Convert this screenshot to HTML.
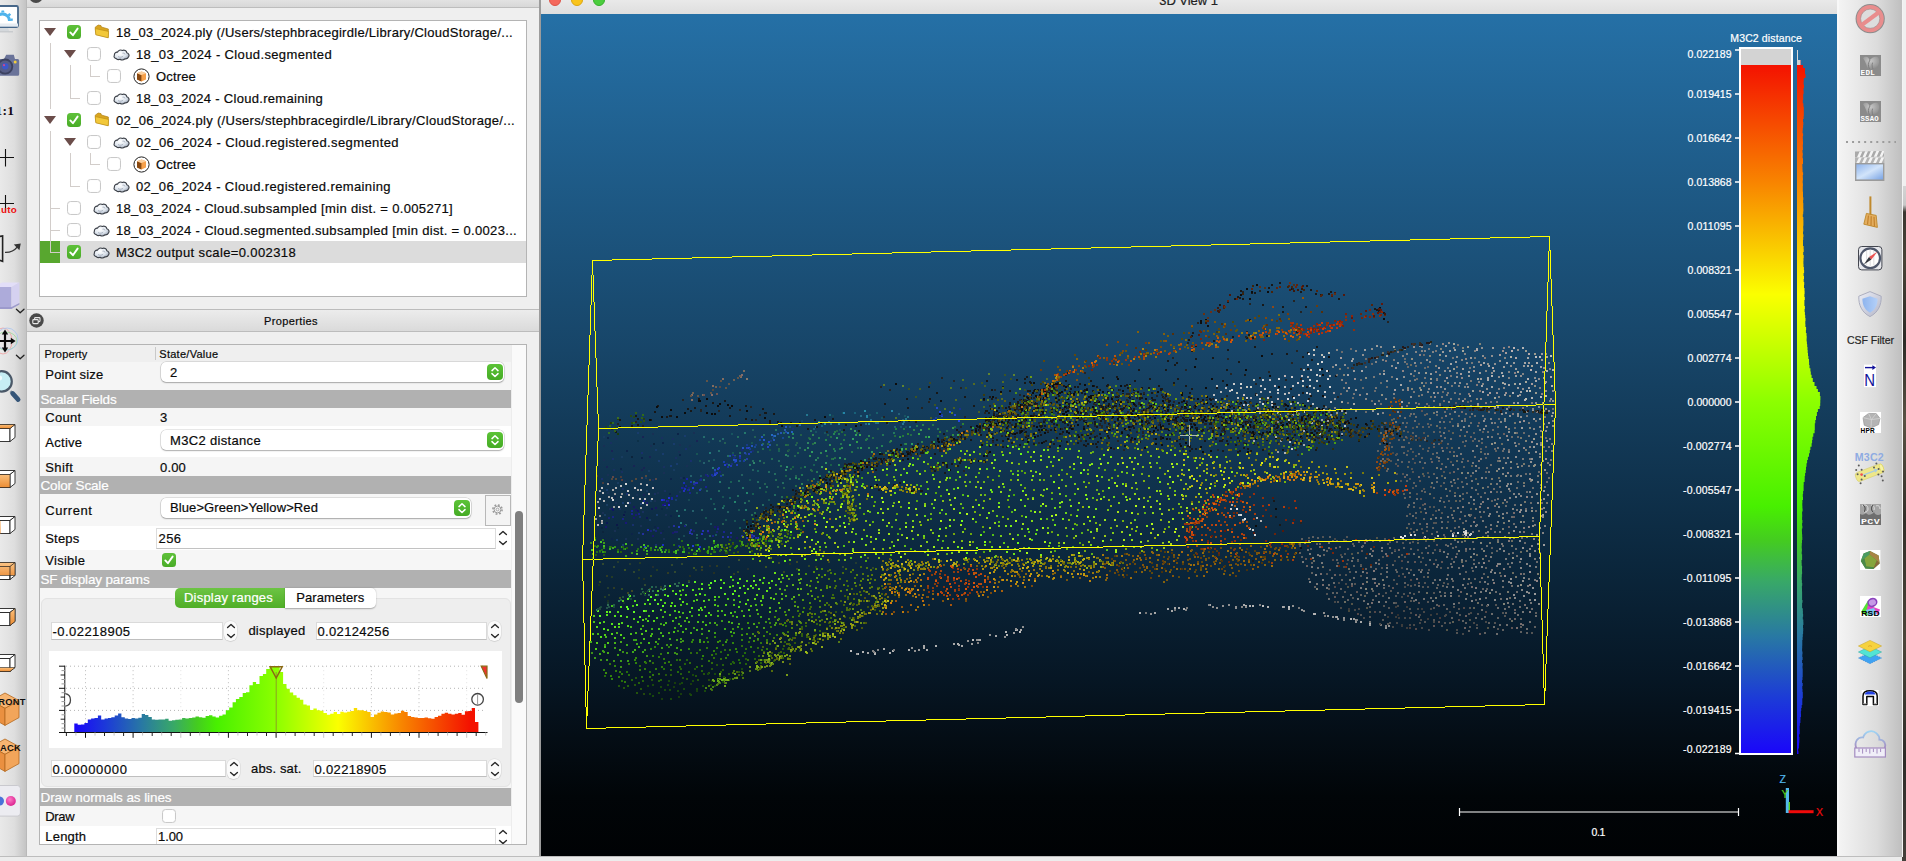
<!DOCTYPE html>
<html lang="en"><head><meta charset="utf-8"><title>CloudCompare</title>
<style>
*{box-sizing:border-box}
html,body{margin:0;padding:0}
body{width:1906px;height:861px;overflow:hidden;position:relative;background:#ececec;font-family:"Liberation Sans",sans-serif;font-size:13px;color:#0a0a0a;letter-spacing:.25px;-webkit-text-stroke:.2px currentColor}
.abs{position:absolute}
#ltool{left:0;top:0;width:27px;height:861px;background:linear-gradient(90deg,#e9e9e9 0,#dedede 55%,#c4c4c4 100%);border-right:1px solid #b9b9b9;overflow:hidden}
#lpanel{left:27px;top:0;width:513px;height:857px;background:#efefef}
#dbtitle{left:27px;top:0;width:513px;height:8px;background:linear-gradient(#e2e2e2,#d8d8d8);border-bottom:1px solid #bdbdbd}
#tree{left:39px;top:20px;width:488px;height:277px;background:#fff;border:1px solid #b4b4b4}
.trow{position:absolute;left:0;height:22px;line-height:22px;white-space:nowrap}
.trow span{position:absolute;top:.8px}
.cb{position:absolute;width:14px;height:14px;border-radius:3.5px;background:#fff;border:1px solid #c9c9c9;box-shadow:inset 0 0 1px rgba(0,0,0,.1)}
.cb.on{background:linear-gradient(#5fc23a,#49ad27);border:0}
.cb.on svg{position:absolute;left:0;top:0}
.tri{position:absolute;width:0;height:0;border-left:6px solid transparent;border-right:6px solid transparent;border-top:8px solid #6b4d4a}
#ptitle{left:27px;top:309px;width:513px;height:23px;background:linear-gradient(#ececec,#dadada);border-top:1px solid #bcbcbc;border-bottom:1px solid #bcbcbc}
#props{left:39px;top:344px;width:488px;height:501px;background:#fafafa;border:1px solid #b4b4b4;overflow:hidden}
.prow{position:absolute;left:0;width:471px}
.plab{position:absolute;left:5px;white-space:nowrap}
.pval{position:absolute;left:118px;white-space:nowrap}
.phead{position:absolute;left:0;width:471px;height:18px;background:#b1b1b1;color:#fff;line-height:18px;white-space:nowrap;font-size:13.5px}
.combo{position:absolute;height:20px;background:#fff;border-radius:5px;box-shadow:0 0 0 .5px rgba(0,0,0,.18),0 1px 1.5px rgba(0,0,0,.25);line-height:20px;padding-left:9px;white-space:nowrap}
.combo i{position:absolute;right:1.5px;top:2px;width:16px;height:16px;border-radius:4px;background:linear-gradient(#5cc337,#45ab25)}
.spin{position:absolute;background:#fff;border:1px solid #d0d0d0;border-bottom-color:#bdbdbd;line-height:18px;white-space:nowrap;padding-left:2px}
#view{left:541px;top:14px;width:1296px;height:842px;background:linear-gradient(#2570a6 0%,#174568 40%,#0b273d 65%,#061624 79%,#040d15 86%,#010508 93%,#000204 100%);overflow:hidden}
#vtitle{left:541px;top:0;width:1298px;height:14px;background:linear-gradient(#e9e9e9,#dedede)}
#rtool{left:1837px;top:0;width:65px;height:857px;background:linear-gradient(90deg,#f4f4f4 0,#ececec 20%,#dcdcdc 60%,#bfbfbf 100%);border-left:2px solid #f8f8f8}
#wall{left:1902px;top:0;width:4px;height:861px;background:#9a9a9a}
#status{left:0;top:856px;width:1902px;height:5px;background:#ececec;border-top:1px solid #bdbdbd}
.vt{position:absolute;color:#fff;font-size:10.5px;white-space:nowrap;letter-spacing:.3px;line-height:12px}
</style></head><body>

<div class="abs" id="lpanel"></div>
<div class="abs" id="ltool">
<svg class="abs" style="left:0;top:0" width="27" height="861" viewBox="0 0 27 861">
<defs>
<linearGradient id="lg1" x1="0" x2="0" y1="0" y2="1"><stop offset="0" stop-color="#fbbf7a"/><stop offset="1" stop-color="#ec8d34"/></linearGradient>
<linearGradient id="lg2" x1="0" x2="1" y1="0" y2="0"><stop offset="0" stop-color="#ec8d34"/><stop offset="1" stop-color="#f9b76c"/></linearGradient>
<radialGradient id="pk" cx=".4" cy=".35" r=".7"><stop offset="0" stop-color="#ff7ac8"/><stop offset="1" stop-color="#d81e8c"/></radialGradient>
</defs>
<!-- monitor with gear -->
<rect x="-14" y="6" width="32" height="21" rx="1.5" fill="#fff" stroke="#48688a" stroke-width="1.8"/>
<path d="M-6 21 A8.5 8.5 0 0 1 11 21 L8 21 A5.2 5.2 0 0 0 -3 21Z" fill="#4fb3ec"/>
<path d="M1.6 10.4 h2.4 l.5 2.2 h-3.4z M9.2 13 l1.9 1.6 -1.5 1.8 -1.9 -1.6z M-3.8 13 l-1.9 1.6 1.5 1.8 1.9 -1.6z M12.4 18.2 l.7 2.3 -2.2 .6 -.6 -2.2z" fill="#4fb3ec"/>
<rect x="-14" y="23.5" width="32" height="3.2" fill="#e6ecf2"/>
<path d="M-2 28 h10 l1.5 3.6 h-13z" fill="#d4d8dc"/><rect x="-6" y="31.2" width="19" height="1.2" fill="#c2c6ca"/>
<!-- camera -->
<path d="M-10 59 h14 l2.2 -4.2 h7.6 l1.2 4.2 h2.6 a1.6 1.6 0 0 1 1.6 1.6 v13.6 a1.6 1.6 0 0 1 -1.6 1.6 h-28z" fill="#6a7399"/>
<circle cx="5.2" cy="66.6" r="8" fill="#3c4260"/><circle cx="5.2" cy="66.6" r="6.2" fill="#565d86"/><circle cx="5.2" cy="66.2" r="3.2" fill="#3f58c8"/><circle cx="4" cy="65.2" r="1.1" fill="#d04a8a"/>
<circle cx="15.2" cy="62" r="1.5" fill="#f4cf3a"/>
<!-- 1:1 -->
<text x="-4.6" y="115" style="font-family:'Liberation Serif',serif" font-weight="bold" font-size="13.5" fill="#140a14">1:1</text>
<!-- crosses -->
<path d="M0 157.5H14M5.5 149V166.5M0 203.5H14M5.5 195V210.5" stroke="#111" stroke-width="1.1" fill="none"/>
<text x="-6.4" y="213.2" style="font-family:'Liberation Sans',sans-serif" font-weight="bold" font-size="9.8" fill="#ee1010">Auto</text>
<!-- bracket + arrow -->
<path d="M-1 236.6 L2.6 236 L2.6 261.4 L-1 260" fill="none" stroke="#222" stroke-width="1.6"/>
<path d="M5 252.4 C10 252.6 14.6 250.4 17.6 246.6" fill="none" stroke="#333" stroke-width="1.3"/>
<path d="M13.8 244.6 L20.8 243.4 L19.4 250.2Z" fill="#333"/>
<!-- lavender cube -->
<path d="M-6 287 L11.5 287 L19.4 282.4 L2 282.4Z" fill="#e2def8"/>
<rect x="-6" y="287" width="17.5" height="20" fill="#adabda"/>
<path d="M11.5 287 L19.4 282.4 L19.4 303 L11.5 307Z" fill="#d5d1f0"/>
<path d="M-6 307 L11.5 307 L19.4 303 L19.4 304.6 L11.5 309 L-6 309Z" fill="#9c9acc"/>
<!-- chevrons -->
<path d="M16.4 309.2 L20.2 312.8 L24 309.2 M16.4 355.2 L20.2 358.8 L24 355.2" fill="none" stroke="#222" stroke-width="1.3" stroke-linecap="round" stroke-linejoin="round"/>
<!-- move/rotate icon -->
<ellipse cx="3" cy="341" rx="9" ry="13" fill="none" stroke="#f0a0a0" stroke-width=".8"/>
<ellipse cx="6" cy="341" rx="11" ry="9" fill="none" stroke="#9adc9a" stroke-width=".8"/>
<ellipse cx="7" cy="339" rx="11" ry="11" fill="none" stroke="#a8c4f0" stroke-width=".8"/>
<path d="M5 333V349M-4 341H12" stroke="#0a0a0a" stroke-width="2.2" fill="none"/>
<path d="M5 329.6 L8.2 334.4 H1.8Z M5 352.4 L8.2 347.6 H1.8Z M15.6 341 L10.8 337.8 V344.2Z" fill="#0a0a0a"/>
<!-- magnifier -->
<circle cx="1.6" cy="381.4" r="10.2" fill="#c6eef4" stroke="#4a5868" stroke-width="2.2"/>
<circle cx="-.4" cy="378" r="2.6" fill="#eefcff"/>
<path d="M10.4 391.2 L13 393.8" stroke="#8c98a4" stroke-width="2.6"/>
<path d="M12.6 393.4 L18.2 399.6" stroke="#355578" stroke-width="4.6" stroke-linecap="round"/>
<!-- view cubes -->
<g stroke="#222" stroke-width=".9" fill="#fff">
 <g id="wc"><path d="M-6 428.5 H10 V441.5 H-6Z"/><path d="M-6 428.5 L-1 424.5 H15 L10 428.5Z"/><path d="M10 428.5 L15 424.5 V437.5 L10 441.5Z"/></g>
 <use href="#wc" y="46"/><use href="#wc" y="92"/><use href="#wc" y="138"/><use href="#wc" y="184"/><use href="#wc" y="230"/>
</g>
<g stroke="#222" stroke-width=".6">
 <path d="M-6 428.5 L-1 424.5 H15 L10 428.5Z" fill="url(#lg1)"/>
 <path d="M-6 474.5 H10 V487.5 H-6Z" fill="url(#lg1)"/>
 <path d="M-6 521 H.6 V533.5 H-6Z" fill="url(#lg1)" stroke="none"/>
 <path d="M-1 562.5 H15 V575.5 H-1Z" fill="url(#lg1)" fill-opacity=".92"/>
 <path d="M10 612.5 L15 608.5 V621.5 L10 625.5Z" fill="url(#lg1)"/>
 <path d="M-6 671.5 L-1 667.5 H15 L10 671.5Z" fill="url(#lg1)"/>
</g>
<path d="M-6 566.5 H10 V575.5 M10 566.5 L15 562.5 M-6 579.5H10V575" stroke="#222" stroke-width=".7" fill="none"/>
<!-- FRONT / BACK cubes -->
<g stroke="#b4681e" stroke-width=".8" stroke-linejoin="round">
 <g id="oc"><path d="M5 693 L19 700.6 L5 708.4 L-9 700.6Z" fill="#f7b571"/><path d="M-9 700.6 L5 708.4 V725.4 L-9 717.6Z" fill="#ea9040"/><path d="M19 700.6 L5 708.4 V725.4 L19 717.6Z" fill="#f2a55a"/></g>
 <use href="#oc" y="46"/>
</g>
<text x="-7.6" y="704.6" style="font-family:'Liberation Sans',sans-serif" font-weight="bold" font-size="9.4" fill="#111" letter-spacing=".2">FRONT</text>
<text x="-7" y="750.8" style="font-family:'Liberation Sans',sans-serif" font-weight="bold" font-size="9.4" fill="#111" letter-spacing=".2">BACK</text>
<!-- flickr-like button -->
<rect x="-6" y="785.5" width="26.4" height="30.6" rx="3" fill="#ececf1" stroke="#c9c9ce" stroke-width="1"/>
<circle cx="-.6" cy="801" r="4.6" fill="#4a72d8"/><circle cx="10.8" cy="801" r="5" fill="url(#pk)"/>
</svg>
</div>

<div class="abs" id="dbtitle"></div>
<div class="abs" style="left:28.800px;top:-11.900px;width:14.400px;height:14.400px;border-radius:50%;background:#4a4a4a"></div>
<span class="abs tt" style="letter-spacing:0.020px;left:271px;top:-11.800px;font-size:11px;line-height:16px;white-space:nowrap">DB Tree</span>

<div class="abs" id="tree">
<div class="abs" style="left:0;top:220px;width:20px;height:22px;background:#58a72f"></div>
<div class="abs" style="left:20px;top:220px;width:466px;height:22px;background:#dcdcdc"></div>
<div class="abs" style="left:10px;top:22px;width:1px;height:66px;background:#d2cdca"></div>
<div class="abs" style="left:10px;top:110px;width:1px;height:121px;background:#d2cdca"></div>
<div class="abs" style="left:10px;top:187px;width:10px;height:1px;background:#d2cdca"></div>
<div class="abs" style="left:10px;top:209px;width:10px;height:1px;background:#d2cdca"></div>
<div class="abs" style="left:10px;top:231px;width:10px;height:1px;background:#d2cdca"></div>
<div class="abs" style="left:30px;top:44px;width:1px;height:33px;background:#d2cdca"></div>
<div class="abs" style="left:30px;top:77px;width:10px;height:1px;background:#d2cdca"></div>
<div class="abs" style="left:30px;top:132px;width:1px;height:33px;background:#d2cdca"></div>
<div class="abs" style="left:30px;top:165px;width:10px;height:1px;background:#d2cdca"></div>
<div class="abs" style="left:50px;top:44px;width:1px;height:11px;background:#d2cdca"></div>
<div class="abs" style="left:50px;top:55px;width:10px;height:1px;background:#d2cdca"></div>
<div class="abs" style="left:50px;top:132px;width:1px;height:11px;background:#d2cdca"></div>
<div class="abs" style="left:50px;top:143px;width:10px;height:1px;background:#d2cdca"></div>
<div class="trow" style="top:0px">
<div class="tri" style="left:4px;top:7px"></div>
<div class="cb on" style="left:27px;top:4px"><svg width="14" height="14" viewBox="0 0 14 14"><path d="M3.3 7.4 L5.9 10.2 L10.6 3.6" fill="none" stroke="#fff" stroke-width="1.9" stroke-linecap="round" stroke-linejoin="round"/></svg></div>
<svg class="abs" style="left:54px;top:3px" width="16" height="15" viewBox="0 0 16 15"><path d="M1.2 3.2 L4.2 1 L7 1.6 L7.4 3 L14.4 5 L14.2 13.6 L2 10.6 Z" fill="#d9a520" stroke="#a87708" stroke-width=".6"/><path d="M1.2 4.6 L14.6 7.4 L14.2 13.8 L1.8 10.8 Z" fill="#f2c83a" stroke="#b88a10" stroke-width=".6"/></svg>
<span class="tt" style="letter-spacing:0.286px;left:76px">18_03_2024.ply (/Users/stephbracegirdle/Library/CloudStorage/...</span>
</div>
<div class="trow" style="top:22px">
<div class="tri" style="left:24px;top:7px"></div>
<div class="cb" style="left:47px;top:4px"></div>
<svg class="abs" style="left:73px;top:5px" width="17" height="13" viewBox="0 0 17 13"><defs><radialGradient id="cg1" cx=".4" cy=".35" r=".7"><stop offset="0" stop-color="#ffffff"/><stop offset=".6" stop-color="#dfe6ee"/><stop offset="1" stop-color="#9aa4b4"/></radialGradient></defs><path d="M3.2 10.6 C1.2 10.4 .6 8.6 1.4 7.2 C1.2 5.2 2.8 4 4.4 4.2 C5.2 2.2 7.6 1.4 9.4 2.4 C11.4 1.6 13.6 2.8 13.8 4.8 C15.8 5.2 16.6 7.4 15.6 8.8 C15 10.4 13.6 11 12.2 10.8 C10.6 12 8.4 12.2 7 11.2 C5.8 11.8 4.2 11.6 3.2 10.6Z" fill="url(#cg1)" stroke="#3c4048" stroke-width="1.1"/><path d="M5 8.6 C6.6 9.6 9 9.4 10.2 8.2 M9.5 5.2 C10.6 4.8 11.8 5.4 12 6.4" fill="none" stroke="#8d97a8" stroke-width=".7"/></svg>
<span class="tt" style="letter-spacing:0.366px;left:96px">18_03_2024 - Cloud.segmented</span>
</div>
<div class="trow" style="top:44px">
<div class="cb" style="left:67px;top:4px"></div>
<svg class="abs" style="left:93px;top:3px" width="17" height="17" viewBox="0 0 17 17"><circle cx="8.5" cy="8.5" r="7.6" fill="#fff" stroke="#222" stroke-width="1"/><path d="M4 5.2 L8.6 3.4 L13 5.2 L13 11.6 L8.4 13.6 L4 11.6Z" fill="#f6a04a"/><path d="M4 5.2 L8.4 7 L8.4 13.6 L4 11.6Z" fill="#8a4a12"/><path d="M4 5.2 L8.6 3.4 L13 5.2 L8.4 7Z" fill="#fbd0a0"/></svg>
<span class="tt" style="letter-spacing:0.164px;left:116px">Octree</span>
</div>
<div class="trow" style="top:66px">
<div class="cb" style="left:47px;top:4px"></div>
<svg class="abs" style="left:73px;top:5px" width="17" height="13" viewBox="0 0 17 13"><defs><radialGradient id="cg3" cx=".4" cy=".35" r=".7"><stop offset="0" stop-color="#ffffff"/><stop offset=".6" stop-color="#dfe6ee"/><stop offset="1" stop-color="#9aa4b4"/></radialGradient></defs><path d="M3.2 10.6 C1.2 10.4 .6 8.6 1.4 7.2 C1.2 5.2 2.8 4 4.4 4.2 C5.2 2.2 7.6 1.4 9.4 2.4 C11.4 1.6 13.6 2.8 13.8 4.8 C15.8 5.2 16.6 7.4 15.6 8.8 C15 10.4 13.6 11 12.2 10.8 C10.6 12 8.4 12.2 7 11.2 C5.8 11.8 4.2 11.6 3.2 10.6Z" fill="url(#cg3)" stroke="#3c4048" stroke-width="1.1"/><path d="M5 8.6 C6.6 9.6 9 9.4 10.2 8.2 M9.5 5.2 C10.6 4.8 11.8 5.4 12 6.4" fill="none" stroke="#8d97a8" stroke-width=".7"/></svg>
<span class="tt" style="letter-spacing:0.303px;left:96px">18_03_2024 - Cloud.remaining</span>
</div>
<div class="trow" style="top:88px">
<div class="tri" style="left:4px;top:7px"></div>
<div class="cb on" style="left:27px;top:4px"><svg width="14" height="14" viewBox="0 0 14 14"><path d="M3.3 7.4 L5.9 10.2 L10.6 3.6" fill="none" stroke="#fff" stroke-width="1.9" stroke-linecap="round" stroke-linejoin="round"/></svg></div>
<svg class="abs" style="left:54px;top:3px" width="16" height="15" viewBox="0 0 16 15"><path d="M1.2 3.2 L4.2 1 L7 1.6 L7.4 3 L14.4 5 L14.2 13.6 L2 10.6 Z" fill="#d9a520" stroke="#a87708" stroke-width=".6"/><path d="M1.2 4.6 L14.6 7.4 L14.2 13.8 L1.8 10.8 Z" fill="#f2c83a" stroke="#b88a10" stroke-width=".6"/></svg>
<span class="tt" style="letter-spacing:0.318px;left:76px">02_06_2024.ply (/Users/stephbracegirdle/Library/CloudStorage/...</span>
</div>
<div class="trow" style="top:110px">
<div class="tri" style="left:24px;top:7px"></div>
<div class="cb" style="left:47px;top:4px"></div>
<svg class="abs" style="left:73px;top:5px" width="17" height="13" viewBox="0 0 17 13"><defs><radialGradient id="cg5" cx=".4" cy=".35" r=".7"><stop offset="0" stop-color="#ffffff"/><stop offset=".6" stop-color="#dfe6ee"/><stop offset="1" stop-color="#9aa4b4"/></radialGradient></defs><path d="M3.2 10.6 C1.2 10.4 .6 8.6 1.4 7.2 C1.2 5.2 2.8 4 4.4 4.2 C5.2 2.2 7.6 1.4 9.4 2.4 C11.4 1.6 13.6 2.8 13.8 4.8 C15.8 5.2 16.6 7.4 15.6 8.8 C15 10.4 13.6 11 12.2 10.8 C10.6 12 8.4 12.2 7 11.2 C5.8 11.8 4.2 11.6 3.2 10.6Z" fill="url(#cg5)" stroke="#3c4048" stroke-width="1.1"/><path d="M5 8.6 C6.6 9.6 9 9.4 10.2 8.2 M9.5 5.2 C10.6 4.8 11.8 5.4 12 6.4" fill="none" stroke="#8d97a8" stroke-width=".7"/></svg>
<span class="tt" style="letter-spacing:0.406px;left:96px">02_06_2024 - Cloud.registered.segmented</span>
</div>
<div class="trow" style="top:132px">
<div class="cb" style="left:67px;top:4px"></div>
<svg class="abs" style="left:93px;top:3px" width="17" height="17" viewBox="0 0 17 17"><circle cx="8.5" cy="8.5" r="7.6" fill="#fff" stroke="#222" stroke-width="1"/><path d="M4 5.2 L8.6 3.4 L13 5.2 L13 11.6 L8.4 13.6 L4 11.6Z" fill="#f6a04a"/><path d="M4 5.2 L8.4 7 L8.4 13.6 L4 11.6Z" fill="#8a4a12"/><path d="M4 5.2 L8.6 3.4 L13 5.2 L8.4 7Z" fill="#fbd0a0"/></svg>
<span class="tt" style="letter-spacing:0.164px;left:116px">Octree</span>
</div>
<div class="trow" style="top:154px">
<div class="cb" style="left:47px;top:4px"></div>
<svg class="abs" style="left:73px;top:5px" width="17" height="13" viewBox="0 0 17 13"><defs><radialGradient id="cg7" cx=".4" cy=".35" r=".7"><stop offset="0" stop-color="#ffffff"/><stop offset=".6" stop-color="#dfe6ee"/><stop offset="1" stop-color="#9aa4b4"/></radialGradient></defs><path d="M3.2 10.6 C1.2 10.4 .6 8.6 1.4 7.2 C1.2 5.2 2.8 4 4.4 4.2 C5.2 2.2 7.6 1.4 9.4 2.4 C11.4 1.6 13.6 2.8 13.8 4.8 C15.8 5.2 16.6 7.4 15.6 8.8 C15 10.4 13.6 11 12.2 10.8 C10.6 12 8.4 12.2 7 11.2 C5.8 11.8 4.2 11.6 3.2 10.6Z" fill="url(#cg7)" stroke="#3c4048" stroke-width="1.1"/><path d="M5 8.6 C6.6 9.6 9 9.4 10.2 8.2 M9.5 5.2 C10.6 4.8 11.8 5.4 12 6.4" fill="none" stroke="#8d97a8" stroke-width=".7"/></svg>
<span class="tt" style="letter-spacing:0.386px;left:96px">02_06_2024 - Cloud.registered.remaining</span>
</div>
<div class="trow" style="top:176px">
<div class="cb" style="left:27px;top:4px"></div>
<svg class="abs" style="left:53px;top:5px" width="17" height="13" viewBox="0 0 17 13"><defs><radialGradient id="cg8" cx=".4" cy=".35" r=".7"><stop offset="0" stop-color="#ffffff"/><stop offset=".6" stop-color="#dfe6ee"/><stop offset="1" stop-color="#9aa4b4"/></radialGradient></defs><path d="M3.2 10.6 C1.2 10.4 .6 8.6 1.4 7.2 C1.2 5.2 2.8 4 4.4 4.2 C5.2 2.2 7.6 1.4 9.4 2.4 C11.4 1.6 13.6 2.8 13.8 4.8 C15.8 5.2 16.6 7.4 15.6 8.8 C15 10.4 13.6 11 12.2 10.8 C10.6 12 8.4 12.2 7 11.2 C5.8 11.8 4.2 11.6 3.2 10.6Z" fill="url(#cg8)" stroke="#3c4048" stroke-width="1.1"/><path d="M5 8.6 C6.6 9.6 9 9.4 10.2 8.2 M9.5 5.2 C10.6 4.8 11.8 5.4 12 6.4" fill="none" stroke="#8d97a8" stroke-width=".7"/></svg>
<span class="tt" style="letter-spacing:0.331px;left:76px">18_03_2024 - Cloud.subsampled [min dist. = 0.005271]</span>
</div>
<div class="trow" style="top:198px">
<div class="cb" style="left:27px;top:4px"></div>
<svg class="abs" style="left:53px;top:5px" width="17" height="13" viewBox="0 0 17 13"><defs><radialGradient id="cg9" cx=".4" cy=".35" r=".7"><stop offset="0" stop-color="#ffffff"/><stop offset=".6" stop-color="#dfe6ee"/><stop offset="1" stop-color="#9aa4b4"/></radialGradient></defs><path d="M3.2 10.6 C1.2 10.4 .6 8.6 1.4 7.2 C1.2 5.2 2.8 4 4.4 4.2 C5.2 2.2 7.6 1.4 9.4 2.4 C11.4 1.6 13.6 2.8 13.8 4.8 C15.8 5.2 16.6 7.4 15.6 8.8 C15 10.4 13.6 11 12.2 10.8 C10.6 12 8.4 12.2 7 11.2 C5.8 11.8 4.2 11.6 3.2 10.6Z" fill="url(#cg9)" stroke="#3c4048" stroke-width="1.1"/><path d="M5 8.6 C6.6 9.6 9 9.4 10.2 8.2 M9.5 5.2 C10.6 4.8 11.8 5.4 12 6.4" fill="none" stroke="#8d97a8" stroke-width=".7"/></svg>
<span class="tt" style="letter-spacing:0.331px;left:76px">18_03_2024 - Cloud.segmented.subsampled [min dist. = 0.0023...</span>
</div>
<div class="trow" style="top:220px">
<div class="cb on" style="left:27px;top:4px"><svg width="14" height="14" viewBox="0 0 14 14"><path d="M3.3 7.4 L5.9 10.2 L10.6 3.6" fill="none" stroke="#fff" stroke-width="1.9" stroke-linecap="round" stroke-linejoin="round"/></svg></div>
<svg class="abs" style="left:53px;top:5px" width="17" height="13" viewBox="0 0 17 13"><defs><radialGradient id="cg10" cx=".4" cy=".35" r=".7"><stop offset="0" stop-color="#ffffff"/><stop offset=".6" stop-color="#dfe6ee"/><stop offset="1" stop-color="#9aa4b4"/></radialGradient></defs><path d="M3.2 10.6 C1.2 10.4 .6 8.6 1.4 7.2 C1.2 5.2 2.8 4 4.4 4.2 C5.2 2.2 7.6 1.4 9.4 2.4 C11.4 1.6 13.6 2.8 13.8 4.8 C15.8 5.2 16.6 7.4 15.6 8.8 C15 10.4 13.6 11 12.2 10.8 C10.6 12 8.4 12.2 7 11.2 C5.8 11.8 4.2 11.6 3.2 10.6Z" fill="url(#cg10)" stroke="#3c4048" stroke-width="1.1"/><path d="M5 8.6 C6.6 9.6 9 9.4 10.2 8.2 M9.5 5.2 C10.6 4.8 11.8 5.4 12 6.4" fill="none" stroke="#8d97a8" stroke-width=".7"/></svg>
<span class="tt" style="letter-spacing:0.376px;left:76px">M3C2 output scale=0.002318</span>
</div>
</div>
<div class="abs" id="ptitle"></div>
<span class="abs tt" style="letter-spacing:0.386px;left:264px;top:313px;font-size:11px;line-height:16px;white-space:nowrap">Properties</span>
<svg class="abs" style="left:28.5px;top:312.5px" width="15" height="15" viewBox="0 0 15 15"><circle cx="7.5" cy="7.5" r="7.2" fill="#4a4a4a"/><rect x="5.6" y="4.6" width="5.4" height="4" rx=".8" fill="none" stroke="#e8e8e8" stroke-width="1.1"/><rect x="3.8" y="6.6" width="5.4" height="4" rx=".8" fill="#4a4a4a" stroke="#e8e8e8" stroke-width="1.1"/></svg>
<div class="abs" id="props">
<div class="abs" style="left:0px;top:0px;width:471px;height:17px;background:#efefef"></div>
<div class="abs" style="left:0px;top:17px;width:471px;height:28px;background:#f5f5f5"></div>
<div class="abs" style="left:0px;top:63px;width:471px;height:18px;background:#f5f5f5"></div>
<div class="abs" style="left:0px;top:81px;width:471px;height:31px;background:#fff"></div>
<div class="abs" style="left:0px;top:112px;width:471px;height:19px;background:#f5f5f5"></div>
<div class="abs" style="left:0px;top:149px;width:471px;height:32px;background:#f6f6f6"></div>
<div class="abs" style="left:0px;top:181px;width:471px;height:24px;background:#fff"></div>
<div class="abs" style="left:0px;top:205px;width:471px;height:20px;background:#f6f6f6"></div>
<div class="abs" style="left:0px;top:243px;width:471px;height:200px;background:#f6f6f6"></div>
<div class="abs" style="left:0px;top:461px;width:471px;height:20px;background:#f6f6f6"></div>
<div class="abs" style="left:0px;top:481px;width:471px;height:19px;background:#fff"></div>
<span class="abs tt" style="letter-spacing:0.178px;left:4.5px;top:0.5px;line-height:16px;font-size:11px;white-space:nowrap;">Property</span>
<span class="abs tt" style="letter-spacing:0.267px;left:119.3px;top:0.5px;line-height:16px;font-size:11px;white-space:nowrap;">State/Value</span>
<div class="abs" style="left:114.5px;top:2px;width:1px;height:13px;background:#c9c9c9"></div>
<div class="abs" style="left:470.5px;top:2px;width:1px;height:13px;background:#c9c9c9"></div>
<div class="phead" style="top:45px;height:18px;line-height:18px"><span class="tt" style="letter-spacing:-0.156px;position:absolute;left:.5px;top:.7px">Scalar Fields</span></div>
<div class="phead" style="top:131px;height:18px;line-height:18px"><span class="tt" style="letter-spacing:-0.162px;position:absolute;left:.5px;top:.7px">Color Scale</span></div>
<div class="phead" style="top:225px;height:18px;line-height:18px"><span class="tt" style="letter-spacing:-0.165px;position:absolute;left:.5px;top:.7px">SF display params</span></div>
<div class="phead" style="top:443px;height:18px;line-height:18px"><span class="tt" style="letter-spacing:-0.086px;position:absolute;left:.5px;top:.7px">Draw normals as lines</span></div>
<span class="abs tt" style="letter-spacing:0.163px;left:5.3px;top:21.5px;line-height:16px;font-size:13px;white-space:nowrap;">Point size</span>
<span class="abs tt" style="letter-spacing:0.259px;left:5.3px;top:64.5px;line-height:16px;font-size:13px;white-space:nowrap;">Count</span>
<span class="abs tt" style="letter-spacing:0.266px;left:5.3px;top:89.5px;line-height:16px;font-size:13px;white-space:nowrap;">Active</span>
<span class="abs tt" style="letter-spacing:0.397px;left:5.3px;top:114.5px;line-height:16px;font-size:13px;white-space:nowrap;">Shift</span>
<span class="abs tt" style="letter-spacing:0.520px;left:5.3px;top:157.5px;line-height:16px;font-size:13px;white-space:nowrap;">Current</span>
<span class="abs tt" style="letter-spacing:0.150px;left:5.3px;top:185.5px;line-height:16px;font-size:13px;white-space:nowrap;">Steps</span>
<span class="abs tt" style="letter-spacing:0.277px;left:5.3px;top:207.5px;line-height:16px;font-size:13px;white-space:nowrap;">Visible</span>
<span class="abs tt" style="letter-spacing:-0.336px;left:5.3px;top:463.5px;line-height:16px;font-size:13px;white-space:nowrap;">Draw</span>
<span class="abs tt" style="letter-spacing:0.206px;left:5.3px;top:483.5px;line-height:16px;font-size:13px;white-space:nowrap;">Length</span>
<span class="abs tt" style="letter-spacing:0.266px;left:120px;top:64.5px;line-height:16px;font-size:13px;white-space:nowrap;">3</span>
<span class="abs tt" style="letter-spacing:0.172px;left:120px;top:114.5px;line-height:16px;font-size:13px;white-space:nowrap;">0.00</span>
<div class="combo" style="left:121px;top:17px;width:343px"><span class="tt" style="letter-spacing:0.266px;white-space:nowrap;position:relative;top:.9px">2</span><i><svg width="16" height="16" viewBox="0 0 16 16" style="position:absolute;left:0;top:0"><path d="M5 6.6 L8 3.7 L11 6.6 M5 9.6 L8 12.5 L11 9.6" fill="none" stroke="#fff" stroke-width="1.5" stroke-linecap="round" stroke-linejoin="round"/></svg></i></div>
<div class="combo" style="left:121px;top:85px;width:343px"><span class="tt" style="letter-spacing:0.329px;white-space:nowrap;position:relative;top:.9px">M3C2 distance</span><i><svg width="16" height="16" viewBox="0 0 16 16" style="position:absolute;left:0;top:0"><path d="M5 6.6 L8 3.7 L11 6.6 M5 9.6 L8 12.5 L11 9.6" fill="none" stroke="#fff" stroke-width="1.5" stroke-linecap="round" stroke-linejoin="round"/></svg></i></div>
<div class="combo" style="left:121px;top:152.5px;width:310px"><span class="tt" style="letter-spacing:0.100px;white-space:nowrap;position:relative;top:.9px">Blue&gt;Green&gt;Yellow&gt;Red</span><i><svg width="16" height="16" viewBox="0 0 16 16" style="position:absolute;left:0;top:0"><path d="M5 6.6 L8 3.7 L11 6.6 M5 9.6 L8 12.5 L11 9.6" fill="none" stroke="#fff" stroke-width="1.5" stroke-linecap="round" stroke-linejoin="round"/></svg></i></div>
<div class="abs" style="left:444.5px;top:149.5px;width:26px;height:31px;background:#f4f4f4;border:1px solid #b8b8b8"></div>
<svg class="abs" style="left:449px;top:156px" width="17" height="17" viewBox="0 0 17 17"><g fill="none" stroke="#9a9a9a"><circle cx="8.5" cy="8.5" r="4.6" stroke-width="1.6" stroke-dasharray="1.8 1.8"/><circle cx="8.5" cy="8.5" r="3.4" stroke-width="1"/><circle cx="8.5" cy="8.5" r="1.4" stroke-width=".8"/></g></svg>
<div class="abs" style="left:116px;top:182.5px;width:340px;height:21px;background:#fff;border:1px solid #dcdcdc;border-bottom-color:#c2c2c2"></div>
<span class="abs tt" style="letter-spacing:0.432px;left:118.5px;top:185.5px;line-height:16px;font-size:13px;white-space:nowrap;">256</span>
<svg class="abs" style="left:458.3px;top:184px" width="10" height="18" viewBox="0 0 10 18"><path d="M1.6 5.6 L5 2.4 L8.4 5.6 M1.6 12.4 L5 15.6 L8.4 12.4" fill="none" stroke="#2a2a2a" stroke-width="1.4" stroke-linecap="round" stroke-linejoin="round"/></svg>
<div class="cb on" style="left:122px;top:208px"><svg width="14" height="14" viewBox="0 0 14 14" style="position:absolute;left:0;top:0"><path d="M3.3 7.4 L5.9 10.2 L10.6 3.6" fill="none" stroke="#fff" stroke-width="1.9" stroke-linecap="round" stroke-linejoin="round"/></svg></div>
<div class="abs" style="left:0.5px;top:252.5px;width:470px;height:189px;background:#eeeeee;border:1px solid #e3e3e3;border-radius:6px"></div>
<div class="abs" style="left:135px;top:243px;width:110px;height:20px;background:linear-gradient(#6cc443,#4fae27);border-radius:5px 0 0 5px;color:#fff;text-align:center;line-height:20px"><span class="tt" style="letter-spacing:0.214px;white-space:nowrap;position:relative;left:-1.5px">Display ranges</span></div>
<div class="abs" style="left:245px;top:243px;width:90.5px;height:20px;background:#fff;border-radius:0 5px 5px 0;box-shadow:0 .5px 1.5px rgba(0,0,0,.3);text-align:center;line-height:20px"><span class="tt" style="letter-spacing:0.080px;white-space:nowrap">Parameters</span></div>
<div class="abs" style="left:10.5px;top:276.5px;width:172px;height:18.5px;background:#fff;border:1px solid #dadada;border-bottom-color:#bfbfbf"></div>
<span class="abs tt" style="letter-spacing:0.453px;left:12.5px;top:279.05px;line-height:16px;font-size:13px;white-space:nowrap;">-0.02218905</span>
<div class="abs" style="left:184px;top:275.5px;width:13px;height:20.2px;background:#fbfbfb;border-radius:6px;box-shadow:0 0 0 .5px rgba(0,0,0,.08),0 .5px 1px rgba(0,0,0,.15)"></div>
<svg class="abs" style="left:185.5px;top:276.6px" width="10" height="18" viewBox="0 0 10 18"><path d="M1.6 5.6 L5 2.4 L8.4 5.6 M1.6 12.4 L5 15.6 L8.4 12.4" fill="none" stroke="#2a2a2a" stroke-width="1.4" stroke-linecap="round" stroke-linejoin="round"/></svg>
<div class="abs" style="left:275.5px;top:276.5px;width:171px;height:18.5px;background:#fff;border:1px solid #dadada;border-bottom-color:#bfbfbf"></div>
<span class="abs tt" style="letter-spacing:0.331px;left:277.5px;top:279.05px;line-height:16px;font-size:13px;white-space:nowrap;">0.02124256</span>
<div class="abs" style="left:448px;top:275.5px;width:13px;height:20.2px;background:#fbfbfb;border-radius:6px;box-shadow:0 0 0 .5px rgba(0,0,0,.08),0 .5px 1px rgba(0,0,0,.15)"></div>
<svg class="abs" style="left:449.5px;top:276.6px" width="10" height="18" viewBox="0 0 10 18"><path d="M1.6 5.6 L5 2.4 L8.4 5.6 M1.6 12.4 L5 15.6 L8.4 12.4" fill="none" stroke="#2a2a2a" stroke-width="1.4" stroke-linecap="round" stroke-linejoin="round"/></svg>
<span class="abs tt" style="letter-spacing:0.229px;left:208.4px;top:277.9px;line-height:16px;font-size:13px;white-space:nowrap;">displayed</span>
<div class="abs" style="left:10.5px;top:415px;width:175.5px;height:17px;background:#fff;border:1px solid #dadada;border-bottom-color:#bfbfbf"></div>
<span class="abs tt" style="letter-spacing:0.631px;left:12.5px;top:416.8px;line-height:16px;font-size:13px;white-space:nowrap;">0.00000000</span>
<div class="abs" style="left:187.3px;top:414px;width:13.2px;height:19.5px;background:#fbfbfb;border-radius:6px;box-shadow:0 0 0 .5px rgba(0,0,0,.08),0 .5px 1px rgba(0,0,0,.15)"></div>
<svg class="abs" style="left:188.9px;top:414.75px" width="10" height="18" viewBox="0 0 10 18"><path d="M1.6 5.6 L5 2.4 L8.4 5.6 M1.6 12.4 L5 15.6 L8.4 12.4" fill="none" stroke="#2a2a2a" stroke-width="1.4" stroke-linecap="round" stroke-linejoin="round"/></svg>
<div class="abs" style="left:272.5px;top:415px;width:174px;height:17px;background:#fff;border:1px solid #dadada;border-bottom-color:#bfbfbf"></div>
<span class="abs tt" style="letter-spacing:0.331px;left:274.5px;top:416.8px;line-height:16px;font-size:13px;white-space:nowrap;">0.02218905</span>
<div class="abs" style="left:448px;top:414px;width:13px;height:19.5px;background:#fbfbfb;border-radius:6px;box-shadow:0 0 0 .5px rgba(0,0,0,.08),0 .5px 1px rgba(0,0,0,.15)"></div>
<svg class="abs" style="left:449.5px;top:414.75px" width="10" height="18" viewBox="0 0 10 18"><path d="M1.6 5.6 L5 2.4 L8.4 5.6 M1.6 12.4 L5 15.6 L8.4 12.4" fill="none" stroke="#2a2a2a" stroke-width="1.4" stroke-linecap="round" stroke-linejoin="round"/></svg>
<span class="abs tt" style="letter-spacing:0.151px;left:211px;top:415.6px;line-height:16px;font-size:13px;white-space:nowrap;">abs. sat.</span>
<div class="cb" style="left:122px;top:464px"></div>
<div class="abs" style="left:116px;top:482.5px;width:340px;height:18px;background:#fff;border:1px solid #dcdcdc;border-bottom:0"></div>
<span class="abs tt" style="letter-spacing:-0.078px;left:118px;top:484px;line-height:16px;font-size:13px;white-space:nowrap;">1.00</span>
<svg class="abs" style="left:458.3px;top:482.5px" width="10" height="18" viewBox="0 0 10 18"><path d="M1.6 5.6 L5 2.4 L8.4 5.6 M1.6 12.4 L5 15.6 L8.4 12.4" fill="none" stroke="#2a2a2a" stroke-width="1.4" stroke-linecap="round" stroke-linejoin="round"/></svg>
<div class="abs" style="left:471px;top:0px;width:15px;height:500px;background:#fafafa;border-left:1px solid #ededed"></div>
<div class="abs" style="left:475px;top:166px;width:7.8px;height:192px;background:#7f7f7f;border-radius:4px"></div>
<div class="abs" style="left:9px;top:306px;width:453px;height:97px;background:#fff"></div>
<svg class="abs" style="left:9px;top:306px" width="453" height="97" viewBox="0 0 453 97">
<defs><linearGradient id="hg" gradientUnits="userSpaceOnUse" x1="25.3" x2="420.7" y1="0" y2="0">
<stop offset="0" stop-color="#1a06fa"/>
<stop offset="0.08" stop-color="#1c3ad8"/>
<stop offset="0.17" stop-color="#2878a4"/>
<stop offset="0.25" stop-color="#38a868"/>
<stop offset="0.31" stop-color="#44cc20"/>
<stop offset="0.36" stop-color="#48f000"/>
<stop offset="0.511" stop-color="#8cff00"/>
<stop offset="0.667" stop-color="#fbff00"/>
<stop offset="0.83" stop-color="#f88400"/>
<stop offset="1" stop-color="#f41200"/>
</linearGradient></defs>
<line x1="17" x2="437" y1="15.2" y2="15.2" stroke="#b4b4b4" stroke-width="1" stroke-dasharray="1 3"/>
<line x1="17" x2="437" y1="37.3" y2="37.3" stroke="#b4b4b4" stroke-width="1" stroke-dasharray="1 3"/>
<line x1="17" x2="437" y1="59.4" y2="59.4" stroke="#b4b4b4" stroke-width="1" stroke-dasharray="1 3"/>
<line x1="36.5" x2="36.5" y1="15.200000000000045" y2="81.5" stroke="#bcbcbc" stroke-width="1" stroke-dasharray="1 3"/>
<line x1="84.1" x2="84.1" y1="15.200000000000045" y2="81.5" stroke="#bcbcbc" stroke-width="1" stroke-dasharray="1 3"/>
<line x1="131.8" x2="131.8" y1="15.200000000000045" y2="81.5" stroke="#e2e2e2" stroke-width="1" stroke-dasharray="1 3"/>
<line x1="179.4" x2="179.4" y1="15.200000000000045" y2="81.5" stroke="#bcbcbc" stroke-width="1" stroke-dasharray="1 3"/>
<line x1="227.1" x2="227.1" y1="15.200000000000045" y2="81.5" stroke="#bcbcbc" stroke-width="1" stroke-dasharray="1 3"/>
<line x1="274.7" x2="274.7" y1="15.200000000000045" y2="81.5" stroke="#e2e2e2" stroke-width="1" stroke-dasharray="1 3"/>
<line x1="322.4" x2="322.4" y1="15.200000000000045" y2="81.5" stroke="#bcbcbc" stroke-width="1" stroke-dasharray="1 3"/>
<line x1="370.0" x2="370.0" y1="15.200000000000045" y2="81.5" stroke="#bcbcbc" stroke-width="1" stroke-dasharray="1 3"/>
<line x1="417.7" x2="417.7" y1="15.200000000000045" y2="81.5" stroke="#e2e2e2" stroke-width="1" stroke-dasharray="1 3"/>
<path d="M25.3 81.5V72.4H28.7V73.8H32.0V73.5H35.4V72.0H38.8V68.6H42.1V67.5H45.5V67.0H48.9V64.4H52.2V68.4H55.6V67.4H59.0V67.0H62.3V66.2H65.7V64.5H69.1V62.6H72.4V66.2H75.8V67.4H79.2V67.9H82.5V66.9H85.9V67.5H89.3V66.7H92.7V63.0H96.0V64.0H99.4V65.9H102.8V68.6H106.1V68.7H109.5V68.6H112.9V68.5H116.2V67.8H119.6V69.7H123.0V69.2H126.3V68.7H129.7V68.4H133.1V67.1H136.4V67.5H139.8V66.9H143.2V66.6H146.5V65.4H149.9V66.3H153.3V66.7H156.6V65.1H160.0V64.2H163.4V65.6H166.7V66.4H170.1V64.7H173.5V63.4H176.8V59.3H180.2V56.5H183.6V51.2H186.9V48.0H190.3V46.0H193.7V42.0H197.0V41.3H200.4V34.3H203.8V30.9H207.1V33.0H210.5V24.9H213.9V22.9H217.2V18.1H220.6V15.7H224.0V15.4H227.3V15.2H230.7V21.1H234.1V32.9H237.5V37.7H240.8V41.4H244.2V44.3H247.6V46.8H250.9V48.8H254.3V53.5H257.7V54.6H261.0V59.0H264.4V57.6H267.8V59.3H271.1V59.7H274.5V62.1H277.9V63.8H281.2V62.7H284.6V61.0H288.0V62.9H291.3V60.8H294.7V61.4H298.1V60.8H301.4V60.1H304.8V56.9H308.2V59.3H311.5V59.3H314.9V59.9H318.3V61.0H321.6V66.1H325.0V63.6H328.4V61.8H331.7V60.5H335.1V61.1H338.5V61.4H341.8V63.6H345.2V62.5H348.6V62.0H351.9V59.8H355.3V61.0H358.7V65.0H362.1V66.0H365.4V66.5H368.8V67.1H372.2V66.9H375.5V66.5H378.9V67.2H382.3V67.7H385.6V65.9H389.0V64.7H392.4V62.7H395.7V61.7H399.1V62.8H402.5V63.4H405.8V62.7H409.2V62.1H412.6V63.8H415.9V60.2H419.3V59.9H422.7V57.1H426.0V71.0H429.4V81.5Z" fill="url(#hg)"/>
<path d="M15.8 14.7V81.5H438.5" fill="none" stroke="#111" stroke-width="1"/>
<line x1="10.0" x2="16.0" y1="15.2" y2="15.2" stroke="#111" stroke-width="1"/>
<line x1="12.5" x2="16.0" y1="19.6" y2="19.6" stroke="#9a9a9a" stroke-width="1"/>
<line x1="11.6" x2="16.0" y1="24.0" y2="24.0" stroke="#222" stroke-width="1"/>
<line x1="12.5" x2="16.0" y1="28.5" y2="28.5" stroke="#9a9a9a" stroke-width="1"/>
<line x1="12.5" x2="16.0" y1="32.9" y2="32.9" stroke="#9a9a9a" stroke-width="1"/>
<line x1="10.0" x2="16.0" y1="37.3" y2="37.3" stroke="#111" stroke-width="1"/>
<line x1="12.5" x2="16.0" y1="41.7" y2="41.7" stroke="#9a9a9a" stroke-width="1"/>
<line x1="11.6" x2="16.0" y1="46.1" y2="46.1" stroke="#222" stroke-width="1"/>
<line x1="12.5" x2="16.0" y1="50.6" y2="50.6" stroke="#9a9a9a" stroke-width="1"/>
<line x1="12.5" x2="16.0" y1="55.0" y2="55.0" stroke="#9a9a9a" stroke-width="1"/>
<line x1="10.0" x2="16.0" y1="59.4" y2="59.4" stroke="#111" stroke-width="1"/>
<line x1="12.5" x2="16.0" y1="63.8" y2="63.8" stroke="#9a9a9a" stroke-width="1"/>
<line x1="11.6" x2="16.0" y1="68.2" y2="68.2" stroke="#222" stroke-width="1"/>
<line x1="12.5" x2="16.0" y1="72.7" y2="72.7" stroke="#9a9a9a" stroke-width="1"/>
<line x1="12.5" x2="16.0" y1="77.1" y2="77.1" stroke="#9a9a9a" stroke-width="1"/>
<line x1="10.0" x2="16.0" y1="81.5" y2="81.5" stroke="#111" stroke-width="1"/>
<line x1="10.0" x2="16.0" y1="81.5" y2="81.5" stroke="#111"/>
<line x1="17.4" x2="17.4" y1="81.5" y2="85.0" stroke="#222" stroke-width="1"/>
<line x1="26.9" x2="26.9" y1="81.5" y2="84.6" stroke="#c4c4c4" stroke-width="1"/>
<line x1="36.5" x2="36.5" y1="81.5" y2="86.8" stroke="#111" stroke-width="1"/>
<line x1="46.0" x2="46.0" y1="81.5" y2="84.6" stroke="#c4c4c4" stroke-width="1"/>
<line x1="55.5" x2="55.5" y1="81.5" y2="85.0" stroke="#222" stroke-width="1"/>
<line x1="65.1" x2="65.1" y1="81.5" y2="84.6" stroke="#c4c4c4" stroke-width="1"/>
<line x1="74.6" x2="74.6" y1="81.5" y2="85.0" stroke="#222" stroke-width="1"/>
<line x1="84.1" x2="84.1" y1="81.5" y2="86.8" stroke="#111" stroke-width="1"/>
<line x1="93.6" x2="93.6" y1="81.5" y2="84.6" stroke="#c4c4c4" stroke-width="1"/>
<line x1="103.2" x2="103.2" y1="81.5" y2="85.0" stroke="#222" stroke-width="1"/>
<line x1="112.7" x2="112.7" y1="81.5" y2="84.6" stroke="#c4c4c4" stroke-width="1"/>
<line x1="122.2" x2="122.2" y1="81.5" y2="85.0" stroke="#222" stroke-width="1"/>
<line x1="131.8" x2="131.8" y1="81.5" y2="86.8" stroke="#c8c8c8" stroke-width="1"/>
<line x1="141.3" x2="141.3" y1="81.5" y2="85.0" stroke="#222" stroke-width="1"/>
<line x1="150.8" x2="150.8" y1="81.5" y2="84.6" stroke="#c4c4c4" stroke-width="1"/>
<line x1="160.3" x2="160.3" y1="81.5" y2="85.0" stroke="#222" stroke-width="1"/>
<line x1="169.9" x2="169.9" y1="81.5" y2="84.6" stroke="#c4c4c4" stroke-width="1"/>
<line x1="179.4" x2="179.4" y1="81.5" y2="86.8" stroke="#111" stroke-width="1"/>
<line x1="188.9" x2="188.9" y1="81.5" y2="84.6" stroke="#c4c4c4" stroke-width="1"/>
<line x1="198.5" x2="198.5" y1="81.5" y2="85.0" stroke="#222" stroke-width="1"/>
<line x1="208.0" x2="208.0" y1="81.5" y2="84.6" stroke="#c4c4c4" stroke-width="1"/>
<line x1="217.5" x2="217.5" y1="81.5" y2="85.0" stroke="#222" stroke-width="1"/>
<line x1="227.1" x2="227.1" y1="81.5" y2="86.8" stroke="#111" stroke-width="1"/>
<line x1="236.6" x2="236.6" y1="81.5" y2="84.6" stroke="#c4c4c4" stroke-width="1"/>
<line x1="246.1" x2="246.1" y1="81.5" y2="85.0" stroke="#222" stroke-width="1"/>
<line x1="255.6" x2="255.6" y1="81.5" y2="84.6" stroke="#c4c4c4" stroke-width="1"/>
<line x1="265.2" x2="265.2" y1="81.5" y2="85.0" stroke="#222" stroke-width="1"/>
<line x1="274.7" x2="274.7" y1="81.5" y2="86.8" stroke="#c8c8c8" stroke-width="1"/>
<line x1="284.2" x2="284.2" y1="81.5" y2="85.0" stroke="#222" stroke-width="1"/>
<line x1="293.8" x2="293.8" y1="81.5" y2="84.6" stroke="#c4c4c4" stroke-width="1"/>
<line x1="303.3" x2="303.3" y1="81.5" y2="85.0" stroke="#222" stroke-width="1"/>
<line x1="312.8" x2="312.8" y1="81.5" y2="84.6" stroke="#c4c4c4" stroke-width="1"/>
<line x1="322.4" x2="322.4" y1="81.5" y2="86.8" stroke="#111" stroke-width="1"/>
<line x1="331.9" x2="331.9" y1="81.5" y2="84.6" stroke="#c4c4c4" stroke-width="1"/>
<line x1="341.4" x2="341.4" y1="81.5" y2="85.0" stroke="#222" stroke-width="1"/>
<line x1="350.9" x2="350.9" y1="81.5" y2="84.6" stroke="#c4c4c4" stroke-width="1"/>
<line x1="360.5" x2="360.5" y1="81.5" y2="85.0" stroke="#222" stroke-width="1"/>
<line x1="370.0" x2="370.0" y1="81.5" y2="86.8" stroke="#111" stroke-width="1"/>
<line x1="379.5" x2="379.5" y1="81.5" y2="84.6" stroke="#c4c4c4" stroke-width="1"/>
<line x1="389.1" x2="389.1" y1="81.5" y2="85.0" stroke="#222" stroke-width="1"/>
<line x1="398.6" x2="398.6" y1="81.5" y2="84.6" stroke="#c4c4c4" stroke-width="1"/>
<line x1="408.1" x2="408.1" y1="81.5" y2="85.0" stroke="#222" stroke-width="1"/>
<line x1="417.7" x2="417.7" y1="81.5" y2="86.8" stroke="#c8c8c8" stroke-width="1"/>
<line x1="427.2" x2="427.2" y1="81.5" y2="85.0" stroke="#222" stroke-width="1"/>
<line x1="436.7" x2="436.7" y1="81.5" y2="84.6" stroke="#c4c4c4" stroke-width="1"/>
<line x1="227.2" x2="227.2" y1="21.0" y2="81.5" stroke="#8a8a2a" stroke-width=".8"/>
<path d="M221.2 15.8H233.2L227.2 27.0Z" fill="none" stroke="#8a6a14" stroke-width="1.5" stroke-linejoin="miter"/>
<path d="M432.2 15.2H438.0V27.4Z" fill="#f03030" stroke="#8a6a14" stroke-width="1.2"/>
<path d="M16.3 42.7A6.3 6.3 0 0 1 16.3 55.1" fill="#fff" stroke="#444" stroke-width="1.3"/>
<circle cx="428.6" cy="48.3" r="5.8" fill="#fff" fill-opacity=".85" stroke="#444" stroke-width="1.3"/>
<line x1="428.6" x2="428.6" y1="43.0" y2="54.0" stroke="#999" stroke-width="1"/>
</svg>
</div>
<div class="abs" id="vtitle"></div>
<div class="abs" style="left:549px;top:-6px;width:12px;height:12px;border-radius:6px;background:#f4685c;border:.5px solid #dd5246"></div>
<div class="abs" style="left:571px;top:-6px;width:12px;height:12px;border-radius:6px;background:#f9c41c;border:.5px solid #dba510"></div>
<div class="abs" style="left:593px;top:-6px;width:12px;height:12px;border-radius:6px;background:#4ccd3e;border:.5px solid #36b02c"></div>
<span class="abs tt" style="letter-spacing:-0.057px;left:1159.3px;top:-6.8px;line-height:15px;font-size:13px;white-space:nowrap;color:#222">3D View 1</span>
<div class="abs" style="left:539.4px;top:0;width:1.6px;height:857px;background:#9c9c9c"></div>
<div class="abs" id="view">
<svg class="abs" style="left:0;top:0" width="1296" height="842" viewBox="541 14 1296 842" shape-rendering="crispEdges">
<path fill="#246060" d="M752 429h2v2h-2zM719 440h2v2h-2zM708 460h2v2h-2zM752 469h2v2h-2zM741 474h2v2h-2zM706 490h2v2h-2zM701 509h2v2h-2zM727 511h2v2h-2zM685 524h2v2h-2zM696 534h2v2h-2zM709 535h2v2h-2zM678 538h2v2h-2z"/>
<path fill="#247860" d="M937 428h2v2h-2zM775 429h2v2h-2zM810 430h2v2h-2zM893 432h2v2h-2zM834 450h2v2h-2zM759 460h2v2h-2zM802 487h2v2h-2z"/>
<path fill="#246048" d="M877 428h2v2h-2zM836 430h2v2h-2zM800 434h2v2h-2zM827 434h2v2h-2zM808 437h2v2h-2zM796 442h2v2h-2zM767 443h2v2h-2zM787 444h2v2h-2zM778 448h2v2h-2zM787 450h2v2h-2zM790 468h2v2h-2zM811 470h2v2h-2zM783 487h2v2h-2zM764 510h2v2h-2zM688 581h2v2h-2zM678 582h2v2h-2zM641 588h2v2h-2zM642 591h2v2h-2zM628 597h2v2h-2zM620 599h2v2h-2zM613 604h2v2h-2z"/>
<path fill="#24843c" d="M895 428h2v2h-2z"/>
<path fill="#247848" d="M932 424h2v2h-2zM903 428h2v2h-2zM834 431h2v2h-2zM946 436h2v2h-2zM809 438h2v2h-2zM866 438h2v2h-2zM843 439h2v2h-2zM865 439h2v2h-2zM904 443h2v2h-2zM833 448h2v2h-2zM839 448h2v2h-2zM851 451h2v2h-2zM840 468h2v2h-2z"/>
<path fill="#247854" d="M916 425h2v2h-2zM838 433h2v2h-2zM882 434h2v2h-2zM788 436h2v2h-2zM818 437h2v2h-2zM840 443h2v2h-2zM817 457h2v2h-2zM832 458h2v2h-2zM804 466h2v2h-2zM816 471h2v2h-2zM801 474h2v2h-2zM798 478h2v2h-2zM813 478h2v2h-2z"/>
<path fill="#248448" d="M922 424h2v2h-2zM825 439h2v2h-2z"/>
<path fill="#246c48" d="M946 430h2v2h-2zM910 434h2v2h-2zM937 435h2v2h-2zM830 436h2v2h-2zM872 437h2v2h-2zM889 441h2v2h-2zM812 443h2v2h-2zM785 444h2v2h-2zM797 452h2v2h-2zM826 455h2v2h-2zM834 457h2v2h-2zM831 458h2v2h-2zM810 469h2v2h-2zM795 485h2v2h-2z"/>
<path fill="#246c3c" d="M954 426h2v2h-2zM841 431h2v2h-2zM856 432h2v2h-2zM844 434h2v2h-2zM894 435h2v2h-2z"/>
<path fill="#183c60" d="M603 436h2v2h-2zM621 456h2v2h-2zM673 469h2v2h-2zM648 470h2v2h-2zM645 477h2v2h-2zM617 482h2v2h-2zM646 490h2v2h-2zM650 500h2v2h-2zM606 504h2v2h-2zM604 514h2v2h-2zM649 519h2v2h-2zM653 529h2v2h-2z"/>
<path fill="#0c2448" d="M677 433h2v2h-2zM607 437h2v2h-2zM662 442h2v2h-2zM626 450h2v2h-2zM679 454h2v2h-2zM641 457h2v2h-2zM620 468h2v2h-2zM683 477h2v2h-2zM670 478h2v2h-2zM608 482h2v2h-2zM684 485h2v2h-2zM653 487h2v2h-2zM669 493h2v2h-2zM614 496h2v2h-2zM661 508h2v2h-2zM624 511h2v2h-2zM670 515h2v2h-2zM654 526h2v2h-2zM662 530h2v2h-2zM645 532h2v2h-2zM631 533h2v2h-2zM603 538h2v2h-2zM611 538h2v2h-2zM644 539h2v2h-2zM637 543h2v2h-2z"/>
<path fill="#183060" d="M661 437h2v2h-2zM615 438h2v2h-2zM672 438h2v2h-2zM610 442h2v2h-2zM675 457h2v2h-2zM663 466h2v2h-2zM613 469h2v2h-2zM621 471h2v2h-2zM680 477h2v2h-2zM652 479h2v2h-2zM622 488h2v2h-2zM664 490h2v2h-2zM679 491h2v2h-2zM654 493h2v2h-2zM666 507h2v2h-2zM619 508h2v2h-2zM642 511h2v2h-2z"/>
<path fill="#183c6c" d="M637 432h2v2h-2zM684 435h2v2h-2zM673 443h2v2h-2zM655 449h2v2h-2zM662 453h2v2h-2zM658 460h2v2h-2zM676 463h2v2h-2zM606 489h2v2h-2zM675 499h2v2h-2zM622 502h2v2h-2zM640 503h2v2h-2zM656 514h2v2h-2zM638 532h2v2h-2zM616 539h2v2h-2zM622 544h2v2h-2z"/>
<path fill="#182454" d="M642 436h2v2h-2zM696 440h2v2h-2zM611 450h2v2h-2zM649 456h2v2h-2zM633 465h2v2h-2zM606 466h2v2h-2zM643 467h2v2h-2zM641 469h2v2h-2zM643 494h2v2h-2z"/>
<path fill="#183054" d="M693 432h2v2h-2zM652 433h2v2h-2zM679 444h2v2h-2zM603 445h2v2h-2zM650 445h2v2h-2zM689 445h2v2h-2zM678 451h2v2h-2zM603 459h2v2h-2zM686 465h2v2h-2zM663 472h2v2h-2zM607 474h2v2h-2zM624 480h2v2h-2zM607 492h2v2h-2zM657 492h2v2h-2zM636 494h2v2h-2zM654 500h2v2h-2zM615 502h2v2h-2zM609 508h2v2h-2zM602 512h2v2h-2zM665 514h2v2h-2zM623 515h2v2h-2zM640 525h2v2h-2zM668 526h2v2h-2zM614 530h2v2h-2zM625 538h2v2h-2zM637 538h2v2h-2zM663 538h2v2h-2z"/>
<path fill="#246c6c" d="M703 436h2v2h-2zM722 438h2v2h-2zM736 445h2v2h-2zM718 450h2v2h-2zM728 464h2v2h-2zM703 479h2v2h-2zM722 507h2v2h-2zM714 508h2v2h-2zM684 509h2v2h-2zM676 510h2v2h-2z"/>
<path fill="#24786c" d="M744 432h2v2h-2zM712 438h2v2h-2zM749 464h2v2h-2zM719 481h2v2h-2zM742 487h2v2h-2zM745 509h2v2h-2zM746 526h2v2h-2z"/>
<path fill="#185460" d="M842 412h2v2h-2zM869 414h2v2h-2zM904 415h2v2h-2zM881 417h2v2h-2zM839 429h2v2h-2zM815 431h2v2h-2zM824 432h2v2h-2zM731 433h2v2h-2zM713 459h2v2h-2zM700 475h2v2h-2zM710 523h2v2h-2zM715 534h2v2h-2z"/>
<path fill="#246c60" d="M783 432h2v2h-2zM763 434h2v2h-2zM737 436h2v2h-2zM799 447h2v2h-2zM739 452h2v2h-2zM727 455h2v2h-2zM787 455h2v2h-2zM744 459h2v2h-2zM752 460h2v2h-2zM778 460h2v2h-2zM768 471h2v2h-2zM774 473h2v2h-2zM789 478h2v2h-2zM738 480h2v2h-2zM757 481h2v2h-2zM817 481h2v2h-2zM782 482h2v2h-2zM766 486h2v2h-2zM728 487h2v2h-2zM759 487h2v2h-2zM718 490h2v2h-2zM774 494h2v2h-2zM737 495h2v2h-2zM744 502h2v2h-2zM762 504h2v2h-2zM758 519h2v2h-2z"/>
<path fill="#246054" d="M754 436h2v2h-2zM724 442h2v2h-2zM776 444h2v2h-2zM795 444h2v2h-2zM757 451h2v2h-2zM734 455h2v2h-2zM794 455h2v2h-2zM763 462h2v2h-2zM722 474h2v2h-2zM795 475h2v2h-2zM764 483h2v2h-2zM777 486h2v2h-2zM748 500h2v2h-2zM722 523h2v2h-2zM633 595h2v2h-2z"/>
<path fill="#248460" d="M792 433h2v2h-2zM795 477h2v2h-2z"/>
<path fill="#308454" d="M812 434h2v2h-2zM868 435h2v2h-2zM814 442h2v2h-2zM868 447h2v2h-2zM876 447h2v2h-2zM804 449h2v2h-2zM820 452h2v2h-2zM844 458h2v2h-2zM801 483h2v2h-2z"/>
<path fill="#248454" d="M833 433h2v2h-2zM881 445h2v2h-2zM855 464h2v2h-2zM819 475h2v2h-2z"/>
<path fill="#309c60" d="M855 434h2v2h-2zM836 437h2v2h-2zM852 438h2v2h-2zM911 443h2v2h-2zM849 444h2v2h-2zM825 450h2v2h-2zM811 451h2v2h-2zM839 457h2v2h-2zM828 471h2v2h-2z"/>
<path fill="#24783c" d="M902 435h2v2h-2z"/>
<path fill="#309048" d="M899 436h2v2h-2zM925 436h2v2h-2z"/>
<path fill="#0c3048" d="M637 440h2v2h-2zM651 507h2v2h-2zM611 518h2v2h-2z"/>
<path fill="#0c243c" d="M653 443h2v2h-2zM631 456h2v2h-2zM601 527h2v2h-2zM617 527h2v2h-2zM602 531h2v2h-2z"/>
<path fill="#185454" d="M708 441h2v2h-2zM751 442h2v2h-2zM732 452h2v2h-2zM696 453h2v2h-2zM699 460h2v2h-2zM706 474h2v2h-2zM749 479h2v2h-2zM700 488h2v2h-2zM688 489h2v2h-2zM696 492h2v2h-2zM722 496h2v2h-2zM768 499h2v2h-2zM713 503h2v2h-2zM738 509h2v2h-2zM705 517h2v2h-2zM725 519h2v2h-2zM734 520h2v2h-2zM695 522h2v2h-2zM696 537h2v2h-2zM704 538h2v2h-2z"/>
<path fill="#246c54" d="M762 443h2v2h-2zM857 447h2v2h-2zM762 448h2v2h-2zM771 458h2v2h-2zM780 465h2v2h-2zM847 465h2v2h-2zM775 479h2v2h-2zM781 496h2v2h-2zM754 512h2v2h-2zM751 514h2v2h-2zM651 586h2v2h-2zM652 590h2v2h-2z"/>
<path fill="#309c48" d="M856 441h2v2h-2z"/>
<path fill="#308448" d="M913 429h2v2h-2zM890 440h2v2h-2zM921 441h2v2h-2zM905 443h2v2h-2zM885 452h2v2h-2z"/>
<path fill="#309c54" d="M933 441h2v2h-2zM860 447h2v2h-2zM871 451h2v2h-2zM879 452h2v2h-2zM864 459h2v2h-2z"/>
<path fill="#18306c" d="M685 448h2v2h-2zM752 450h2v2h-2zM641 452h2v2h-2zM612 458h2v2h-2zM690 460h2v2h-2zM601 478h2v2h-2zM626 493h2v2h-2zM629 502h2v2h-2zM639 516h2v2h-2zM632 524h2v2h-2zM655 544h2v2h-2z"/>
<path fill="#247878" d="M709 452h2v2h-2zM712 467h2v2h-2zM678 515h2v2h-2zM680 522h2v2h-2z"/>
<path fill="#185448" d="M769 449h2v2h-2zM788 449h2v2h-2zM800 467h2v2h-2zM807 479h2v2h-2zM765 491h2v2h-2z"/>
<path fill="#186054" d="M778 450h2v2h-2zM813 464h2v2h-2zM730 481h2v2h-2zM752 493h2v2h-2zM723 505h2v2h-2zM743 519h2v2h-2zM739 527h2v2h-2z"/>
<path fill="#309060" d="M807 447h2v2h-2zM825 462h2v2h-2z"/>
<path fill="#309054" d="M850 428h2v2h-2zM829 444h2v2h-2zM841 447h2v2h-2zM901 449h2v2h-2zM809 455h2v2h-2zM870 457h2v2h-2zM838 464h2v2h-2z"/>
<path fill="#183c78" d="M770 440h2v2h-2zM745 453h2v2h-2zM670 465h2v2h-2z"/>
<path fill="#24606c" d="M703 462h2v2h-2zM690 475h2v2h-2zM693 481h2v2h-2zM692 510h2v2h-2z"/>
<path fill="#30846c" d="M753 462h2v2h-2zM752 522h2v2h-2z"/>
<path fill="#186048" d="M830 464h2v2h-2zM792 466h2v2h-2zM785 475h2v2h-2z"/>
<path fill="#186060" d="M757 470h2v2h-2zM729 497h2v2h-2zM710 498h2v2h-2z"/>
<path fill="#24846c" d="M746 492h2v2h-2zM734 501h2v2h-2z"/>
<path fill="#184854" d="M832 415h2v2h-2zM890 420h2v2h-2zM688 499h2v2h-2zM683 535h2v2h-2z"/>
<path fill="#308430" d="M962 423h2v2h-2zM928 428h2v2h-2zM907 433h2v2h-2z"/>
<path fill="#3c9c60" d="M854 430h2v2h-2zM821 466h2v2h-2z"/>
<path fill="#3c9c54" d="M920 429h2v2h-2z"/>
<path fill="#307830" d="M939 431h2v2h-2z"/>
<path fill="#3c9c48" d="M952 427h2v2h-2z"/>
<path fill="#3ca83c" d="M972 427h2v2h-2z"/>
<path fill="#308460" d="M792 437h2v2h-2zM807 442h2v2h-2zM785 454h2v2h-2zM815 459h2v2h-2zM785 469h2v2h-2z"/>
<path fill="#3ca854" d="M859 434h2v2h-2zM957 434h2v2h-2z"/>
<path fill="#3ca848" d="M918 433h2v2h-2z"/>
<path fill="#3cb454" d="M928 436h2v2h-2zM901 448h2v2h-2z"/>
<path fill="#30903c" d="M952 434h2v2h-2z"/>
<path fill="#30783c" d="M893 451h2v2h-2z"/>
<path fill="#30906c" d="M786 466h2v2h-2z"/>
<path fill="#2454c0" d="M785 426h2v2h-2zM761 436h2v2h-2zM751 445h2v2h-2zM742 447h2v2h-2zM733 459h2v2h-2z"/>
<path fill="#18249c" d="M681 487h2v2h-2zM687 489h2v2h-2zM671 497h2v2h-2zM666 500h2v2h-2zM678 545h2v2h-2z"/>
<path fill="#2430d8" d="M668 497h2v2h-2zM661 499h2v2h-2zM668 504h2v2h-2z"/>
<path fill="#184890" d="M782 437h2v2h-2zM754 446h2v2h-2z"/>
<path fill="#182478" d="M741 449h2v2h-2zM719 471h2v2h-2zM705 474h2v2h-2zM700 478h2v2h-2zM699 479h2v2h-2zM694 484h2v2h-2zM683 487h2v2h-2zM688 487h2v2h-2zM608 517h2v2h-2zM650 530h2v2h-2zM655 530h2v2h-2zM730 536h2v2h-2zM752 536h2v2h-2z"/>
<path fill="#183090" d="M959 408h2v2h-2zM732 454h2v2h-2zM712 475h2v2h-2z"/>
<path fill="#24549c" d="M777 433h2v2h-2z"/>
<path fill="#2460a8" d="M799 424h2v2h-2zM784 429h2v2h-2z"/>
<path fill="#2460c0" d="M791 431h2v2h-2z"/>
<path fill="#2454b4" d="M780 432h2v2h-2zM773 439h2v2h-2zM761 444h2v2h-2z"/>
<path fill="#243cc0" d="M718 467h2v2h-2zM717 468h2v2h-2zM716 472h2v2h-2zM678 526h2v2h-2zM689 532h2v2h-2zM757 537h2v2h-2z"/>
<path fill="#183078" d="M792 428h2v2h-2zM733 457h2v2h-2zM731 463h2v2h-2z"/>
<path fill="#2430c0" d="M683 490h2v2h-2zM664 504h2v2h-2zM647 529h2v2h-2zM701 533h2v2h-2z"/>
<path fill="#243cb4" d="M746 447h2v2h-2zM748 453h2v2h-2zM739 455h2v2h-2zM736 464h2v2h-2zM730 465h2v2h-2zM714 473h2v2h-2zM715 473h2v2h-2zM699 489h2v2h-2z"/>
<path fill="#246cc0" d="M787 432h2v2h-2zM771 434h2v2h-2z"/>
<path fill="#181878" d="M664 503h2v2h-2zM635 514h2v2h-2zM625 522h2v2h-2z"/>
<path fill="#184884" d="M789 426h2v2h-2z"/>
<path fill="#183c9c" d="M939 414h2v2h-2zM935 417h2v2h-2zM750 451h2v2h-2zM743 460h2v2h-2zM734 461h2v2h-2zM720 475h2v2h-2z"/>
<path fill="#182490" d="M685 485h2v2h-2zM705 486h2v2h-2zM689 492h2v2h-2zM676 495h2v2h-2zM643 500h2v2h-2zM631 510h2v2h-2zM631 513h2v2h-2zM717 528h2v2h-2zM723 531h2v2h-2zM750 536h2v2h-2zM756 537h2v2h-2z"/>
<path fill="#1824a8" d="M686 478h2v2h-2zM671 498h2v2h-2z"/>
<path fill="#2448b4" d="M773 435h2v2h-2zM714 469h2v2h-2z"/>
<path fill="#183c84" d="M746 444h2v2h-2zM755 444h2v2h-2z"/>
<path fill="#182484" d="M707 475h2v2h-2zM667 500h2v2h-2zM638 513h2v2h-2zM612 516h2v2h-2zM622 518h2v2h-2zM684 525h2v2h-2zM712 535h2v2h-2z"/>
<path fill="#2424b4" d="M663 499h2v2h-2z"/>
<path fill="#2448c0" d="M768 441h2v2h-2zM767 446h2v2h-2zM748 447h2v2h-2zM735 459h2v2h-2z"/>
<path fill="#243ca8" d="M746 458h2v2h-2z"/>
<path fill="#18309c" d="M739 457h2v2h-2zM727 466h2v2h-2zM711 474h2v2h-2zM693 483h2v2h-2z"/>
<path fill="#1830b4" d="M690 481h2v2h-2zM683 482h2v2h-2zM684 488h2v2h-2z"/>
<path fill="#2448cc" d="M936 407h2v2h-2zM954 414h2v2h-2zM941 415h2v2h-2zM933 419h2v2h-2zM735 460h2v2h-2zM714 474h2v2h-2z"/>
<path fill="#181884" d="M662 504h2v2h-2z"/>
<path fill="#2448a8" d="M744 452h2v2h-2zM729 455h2v2h-2z"/>
<path fill="#24489c" d="M785 431h2v2h-2z"/>
<path fill="#2454cc" d="M763 439h2v2h-2z"/>
<path fill="#243ccc" d="M724 464h2v2h-2zM692 487h2v2h-2z"/>
<path fill="#183ca8" d="M941 414h2v2h-2zM723 461h2v2h-2z"/>
<path fill="#183084" d="M734 456h2v2h-2zM726 463h2v2h-2zM714 471h2v2h-2zM700 479h2v2h-2z"/>
<path fill="#183c90" d="M749 448h2v2h-2z"/>
<path fill="#2454a8" d="M769 444h2v2h-2z"/>
<path fill="#184878" d="M772 437h2v2h-2z"/>
<path fill="#2430b4" d="M695 482h2v2h-2zM696 482h2v2h-2zM702 530h2v2h-2zM753 535h2v2h-2zM746 537h2v2h-2z"/>
<path fill="#246cb4" d="M774 435h2v2h-2z"/>
<path fill="#18489c" d="M759 439h2v2h-2zM739 460h2v2h-2z"/>
<path fill="#181860" d="M633 506h2v2h-2zM655 507h2v2h-2zM635 509h2v2h-2zM708 532h2v2h-2zM736 537h2v2h-2z"/>
<path fill="#0c1854" d="M651 508h2v2h-2zM646 517h2v2h-2zM606 522h2v2h-2z"/>
<path fill="#0c1848" d="M623 514h2v2h-2zM616 524h2v2h-2z"/>
<path fill="#18186c" d="M646 502h2v2h-2zM668 502h2v2h-2zM611 508h2v2h-2zM633 517h2v2h-2zM605 526h2v2h-2zM714 526h2v2h-2zM717 526h2v2h-2zM707 531h2v2h-2zM672 532h2v2h-2zM652 535h2v2h-2z"/>
<path fill="#0c1860" d="M612 509h2v2h-2zM637 510h2v2h-2z"/>
<path fill="#24309c" d="M673 525h2v2h-2zM707 530h2v2h-2zM689 531h2v2h-2zM642 533h2v2h-2zM691 533h2v2h-2zM751 534h2v2h-2zM741 535h2v2h-2zM722 536h2v2h-2zM751 537h2v2h-2zM755 537h2v2h-2z"/>
<path fill="#18246c" d="M657 527h2v2h-2zM693 530h2v2h-2zM674 531h2v2h-2zM676 531h2v2h-2zM716 531h2v2h-2zM660 532h2v2h-2z"/>
<path fill="#2430a8" d="M690 529h2v2h-2zM744 531h2v2h-2zM749 531h2v2h-2zM730 532h2v2h-2zM727 536h2v2h-2z"/>
<path fill="#186078" d="M854 412h2v2h-2zM821 425h2v2h-2zM813 428h2v2h-2z"/>
<path fill="#246c90" d="M870 419h2v2h-2zM903 421h2v2h-2z"/>
<path fill="#246c84" d="M860 415h2v2h-2zM818 422h2v2h-2zM875 422h2v2h-2zM877 422h2v2h-2zM830 423h2v2h-2zM865 423h2v2h-2zM815 426h2v2h-2z"/>
<path fill="#18546c" d="M905 419h2v2h-2zM858 421h2v2h-2zM873 421h2v2h-2zM900 426h2v2h-2z"/>
<path fill="#247890" d="M806 414h2v2h-2zM905 418h2v2h-2zM902 423h2v2h-2zM909 426h2v2h-2z"/>
<path fill="#24849c" d="M866 416h2v2h-2zM818 421h2v2h-2zM824 423h2v2h-2zM838 423h2v2h-2zM868 423h2v2h-2z"/>
<path fill="#2484a8" d="M891 410h2v2h-2zM843 412h2v2h-2zM866 415h2v2h-2z"/>
<path fill="#18606c" d="M876 412h2v2h-2z"/>
<path fill="#2490a8" d="M864 410h2v2h-2z"/>
<path fill="#24789c" d="M828 421h2v2h-2z"/>
<path fill="#184860" d="M801 420h2v2h-2zM887 423h2v2h-2zM905 426h2v2h-2z"/>
<path fill="#186c78" d="M829 414h2v2h-2z"/>
<path fill="#181818" d="M1279 282h2v2h-2zM1271 284h2v2h-2zM1306 285h2v2h-2zM1268 287h2v2h-2zM1291 288h2v2h-2zM1310 289h2v2h-2zM1240 290h2v2h-2zM1300 291h2v2h-2zM1330 291h2v2h-2zM1251 292h2v2h-2zM1254 292h2v2h-2zM1315 293h2v2h-2zM1328 293h2v2h-2zM1320 294h2v2h-2zM1237 296h2v2h-2zM1239 297h2v2h-2zM1234 298h2v2h-2zM1242 298h2v2h-2zM1338 298h2v2h-2zM1227 301h2v2h-2zM1219 304h2v2h-2zM1262 304h2v2h-2zM1282 306h2v2h-2zM1305 306h2v2h-2zM1374 308h2v2h-2zM1376 309h2v2h-2zM1378 310h2v2h-2zM1282 311h2v2h-2zM1383 312h2v2h-2zM1249 319h2v2h-2zM1296 331h2v2h-2zM1192 332h2v2h-2zM1248 334h2v2h-2zM1191 335h2v2h-2zM1266 335h2v2h-2zM1232 336h2v2h-2zM1246 337h2v2h-2zM1252 337h2v2h-2zM1188 339h2v2h-2zM1225 339h2v2h-2zM1213 340h2v2h-2zM1195 345h2v2h-2zM1254 346h2v2h-2zM1316 346h2v2h-2zM1227 349h2v2h-2zM1191 350h2v2h-2zM1307 352h2v2h-2zM1271 353h2v2h-2zM1286 353h2v2h-2zM1302 356h2v2h-2zM1212 357h2v2h-2zM1195 358h2v2h-2zM1311 359h2v2h-2zM1167 360h2v2h-2zM1238 361h2v2h-2zM1176 362h2v2h-2zM1174 364h2v2h-2zM1307 368h2v2h-2zM1138 369h2v2h-2zM1165 369h2v2h-2zM1226 369h2v2h-2zM1327 370h2v2h-2zM1067 372h2v2h-2zM1244 374h2v2h-2zM1335 375h2v2h-2zM1026 376h2v2h-2zM1116 376h2v2h-2zM1102 377h2v2h-2zM1259 377h2v2h-2zM1024 378h2v2h-2zM1149 378h2v2h-2zM1177 378h2v2h-2zM1016 379h2v2h-2zM986 380h2v2h-2zM1065 380h2v2h-2zM1090 380h2v2h-2zM1134 380h2v2h-2zM1222 380h2v2h-2zM1029 381h2v2h-2zM1024 382h2v2h-2zM1030 382h2v2h-2zM1057 382h2v2h-2zM1173 382h2v2h-2zM1050 383h2v2h-2zM1052 383h2v2h-2zM1058 383h2v2h-2zM1060 383h2v2h-2zM1079 383h2v2h-2zM1045 384h2v2h-2zM1068 384h2v2h-2zM1107 384h2v2h-2zM1126 384h2v2h-2zM1129 384h2v2h-2zM1047 385h2v2h-2zM1048 385h2v2h-2zM1063 385h2v2h-2zM1093 385h2v2h-2zM1106 385h2v2h-2zM1124 385h2v2h-2zM1158 385h2v2h-2zM1185 385h2v2h-2zM928 386h2v2h-2zM1002 386h2v2h-2zM1049 386h2v2h-2zM1056 386h2v2h-2zM1074 386h2v2h-2zM1077 386h2v2h-2zM1096 386h2v2h-2zM1306 386h2v2h-2zM1053 387h2v2h-2zM1109 387h2v2h-2zM1127 387h2v2h-2zM1141 387h2v2h-2zM1148 387h2v2h-2zM1216 387h2v2h-2zM1043 388h2v2h-2zM1047 388h2v2h-2zM1070 388h2v2h-2zM1086 388h2v2h-2zM1160 388h2v2h-2zM1161 388h2v2h-2zM1191 388h2v2h-2zM1290 388h2v2h-2zM991 389h2v2h-2zM1037 389h2v2h-2zM1040 389h2v2h-2zM1051 389h2v2h-2zM1064 389h2v2h-2zM1084 389h2v2h-2zM1099 389h2v2h-2zM1112 389h2v2h-2zM1118 389h2v2h-2zM1133 389h2v2h-2zM1160 389h2v2h-2zM1009 390h2v2h-2zM1027 390h2v2h-2zM1029 390h2v2h-2zM1033 390h2v2h-2zM1042 390h2v2h-2zM1050 390h2v2h-2zM1051 390h2v2h-2zM1083 390h2v2h-2zM1092 390h2v2h-2zM1051 391h2v2h-2zM1069 391h2v2h-2zM1074 391h2v2h-2zM1107 391h2v2h-2zM1137 391h2v2h-2zM936 392h2v2h-2zM1040 392h2v2h-2zM1046 392h2v2h-2zM1048 392h2v2h-2zM1081 392h2v2h-2zM1151 392h2v2h-2zM1189 392h2v2h-2zM1302 392h2v2h-2zM1052 393h2v2h-2zM1067 393h2v2h-2zM1070 393h2v2h-2zM1084 393h2v2h-2zM1122 393h2v2h-2zM1131 393h2v2h-2zM1140 393h2v2h-2zM1143 393h2v2h-2zM1165 393h2v2h-2zM1030 394h2v2h-2zM1023 395h2v2h-2zM1058 395h2v2h-2zM1073 395h2v2h-2zM1103 395h2v2h-2zM1165 395h2v2h-2zM1310 395h2v2h-2zM964 396h2v2h-2zM989 396h2v2h-2zM1026 396h2v2h-2zM1036 396h2v2h-2zM1046 396h2v2h-2zM1115 396h2v2h-2zM1117 396h2v2h-2zM1128 396h2v2h-2zM1139 396h2v2h-2zM1162 396h2v2h-2zM1188 396h2v2h-2zM1270 396h2v2h-2zM1292 396h2v2h-2zM1030 397h2v2h-2zM1039 397h2v2h-2zM1055 397h2v2h-2zM1096 397h2v2h-2zM1107 397h2v2h-2zM1111 397h2v2h-2zM1129 397h2v2h-2zM1141 397h2v2h-2zM1151 397h2v2h-2zM1190 397h2v2h-2zM698 398h2v2h-2zM906 398h2v2h-2zM929 398h2v2h-2zM991 398h2v2h-2zM1013 398h2v2h-2zM1024 398h2v2h-2zM1028 398h2v2h-2zM1043 398h2v2h-2zM1086 398h2v2h-2zM1107 398h2v2h-2zM1139 398h2v2h-2zM1209 398h2v2h-2zM1221 398h2v2h-2zM1246 398h2v2h-2zM1308 398h2v2h-2zM983 399h2v2h-2zM1020 399h2v2h-2zM1023 399h2v2h-2zM1042 399h2v2h-2zM1058 399h2v2h-2zM1076 399h2v2h-2zM1103 399h2v2h-2zM1118 399h2v2h-2zM1132 399h2v2h-2zM1152 399h2v2h-2zM1154 399h2v2h-2zM1202 399h2v2h-2zM1210 399h2v2h-2zM724 400h2v2h-2zM1024 400h2v2h-2zM1026 400h2v2h-2zM1042 400h2v2h-2zM1087 400h2v2h-2zM1105 400h2v2h-2zM1116 400h2v2h-2zM1168 400h2v2h-2zM1169 400h2v2h-2zM1017 401h2v2h-2zM1056 401h2v2h-2zM1072 401h2v2h-2zM1089 401h2v2h-2zM1103 401h2v2h-2zM1127 401h2v2h-2zM1168 401h2v2h-2zM1181 401h2v2h-2zM1236 401h2v2h-2zM1244 401h2v2h-2zM1266 401h2v2h-2zM1292 401h2v2h-2zM712 402h2v2h-2zM1009 402h2v2h-2zM1030 402h2v2h-2zM1034 402h2v2h-2zM1050 402h2v2h-2zM1066 402h2v2h-2zM1076 402h2v2h-2zM1086 402h2v2h-2zM1115 402h2v2h-2zM1120 402h2v2h-2zM1178 402h2v2h-2zM1220 402h2v2h-2zM1245 402h2v2h-2zM884 403h2v2h-2zM1009 403h2v2h-2zM1017 403h2v2h-2zM1027 403h2v2h-2zM1034 403h2v2h-2zM1036 403h2v2h-2zM1068 403h2v2h-2zM1108 403h2v2h-2zM1203 403h2v2h-2zM1210 403h2v2h-2zM1256 403h2v2h-2zM1272 403h2v2h-2zM1274 403h2v2h-2zM1284 403h2v2h-2zM1302 403h2v2h-2zM1021 404h2v2h-2zM1024 404h2v2h-2zM1025 404h2v2h-2zM1028 404h2v2h-2zM1030 404h2v2h-2zM1031 404h2v2h-2zM1059 404h2v2h-2zM1069 404h2v2h-2zM1098 404h2v2h-2zM1134 404h2v2h-2zM1168 404h2v2h-2zM1169 404h2v2h-2zM1172 404h2v2h-2zM1186 404h2v2h-2zM657 405h2v2h-2zM705 405h2v2h-2zM745 405h2v2h-2zM973 405h2v2h-2zM1017 405h2v2h-2zM1023 405h2v2h-2zM1069 405h2v2h-2zM1071 405h2v2h-2zM1100 405h2v2h-2zM1114 405h2v2h-2zM1115 405h2v2h-2zM1125 405h2v2h-2zM1135 405h2v2h-2zM1149 405h2v2h-2zM1161 405h2v2h-2zM1172 405h2v2h-2zM1189 405h2v2h-2zM1194 405h2v2h-2zM1242 405h2v2h-2zM1310 405h2v2h-2zM1323 405h2v2h-2zM1459 405h2v2h-2zM1008 406h2v2h-2zM1013 406h2v2h-2zM1020 406h2v2h-2zM1025 406h2v2h-2zM1026 406h2v2h-2zM1065 406h2v2h-2zM1068 406h2v2h-2zM1072 406h2v2h-2zM1080 406h2v2h-2zM1102 406h2v2h-2zM1105 406h2v2h-2zM1112 406h2v2h-2zM1149 406h2v2h-2zM1158 406h2v2h-2zM1167 406h2v2h-2zM1181 406h2v2h-2zM1216 406h2v2h-2zM1229 406h2v2h-2zM1238 406h2v2h-2zM1275 406h2v2h-2zM1473 406h2v2h-2zM694 407h2v2h-2zM729 407h2v2h-2zM907 407h2v2h-2zM998 407h2v2h-2zM1005 407h2v2h-2zM1009 407h2v2h-2zM1020 407h2v2h-2zM1042 407h2v2h-2zM1059 407h2v2h-2zM1066 407h2v2h-2zM1075 407h2v2h-2zM1082 407h2v2h-2zM1088 407h2v2h-2zM1101 407h2v2h-2zM1123 407h2v2h-2zM1148 407h2v2h-2zM1152 407h2v2h-2zM1157 407h2v2h-2zM1184 407h2v2h-2zM1185 407h2v2h-2zM1194 407h2v2h-2zM1222 407h2v2h-2zM1233 407h2v2h-2zM1277 407h2v2h-2zM1294 407h2v2h-2zM1444 407h2v2h-2zM1454 407h2v2h-2zM1472 407h2v2h-2zM687 408h2v2h-2zM762 408h2v2h-2zM990 408h2v2h-2zM1026 408h2v2h-2zM1035 408h2v2h-2zM1051 408h2v2h-2zM1056 408h2v2h-2zM1076 408h2v2h-2zM1102 408h2v2h-2zM1120 408h2v2h-2zM1121 408h2v2h-2zM1122 408h2v2h-2zM1130 408h2v2h-2zM1133 408h2v2h-2zM1146 408h2v2h-2zM1242 408h2v2h-2zM1256 408h2v2h-2zM1268 408h2v2h-2zM1285 408h2v2h-2zM1316 408h2v2h-2zM1009 409h2v2h-2zM1014 409h2v2h-2zM1019 409h2v2h-2zM1033 409h2v2h-2zM1116 409h2v2h-2zM1120 409h2v2h-2zM1121 409h2v2h-2zM1133 409h2v2h-2zM1143 409h2v2h-2zM1154 409h2v2h-2zM1164 409h2v2h-2zM1175 409h2v2h-2zM1198 409h2v2h-2zM1212 409h2v2h-2zM1256 409h2v2h-2zM1318 409h2v2h-2zM1509 409h2v2h-2zM1522 409h2v2h-2zM1541 409h2v2h-2zM690 410h2v2h-2zM985 410h2v2h-2zM986 410h2v2h-2zM1024 410h2v2h-2zM1032 410h2v2h-2zM1055 410h2v2h-2zM1071 410h2v2h-2zM1076 410h2v2h-2zM1098 410h2v2h-2zM1109 410h2v2h-2zM1146 410h2v2h-2zM1167 410h2v2h-2zM1202 410h2v2h-2zM1225 410h2v2h-2zM1233 410h2v2h-2zM1249 410h2v2h-2zM1254 410h2v2h-2zM1256 410h2v2h-2zM1257 410h2v2h-2zM1294 410h2v2h-2zM1304 410h2v2h-2zM1319 410h2v2h-2zM1339 410h2v2h-2zM1523 410h2v2h-2zM1537 410h2v2h-2zM654 411h2v2h-2zM1010 411h2v2h-2zM1020 411h2v2h-2zM1085 411h2v2h-2zM1093 411h2v2h-2zM1098 411h2v2h-2zM1115 411h2v2h-2zM1161 411h2v2h-2zM1192 411h2v2h-2zM1244 411h2v2h-2zM1249 411h2v2h-2zM1264 411h2v2h-2zM1271 411h2v2h-2zM1325 411h2v2h-2zM1500 411h2v2h-2zM1537 411h2v2h-2zM764 412h2v2h-2zM765 412h2v2h-2zM988 412h2v2h-2zM993 412h2v2h-2zM998 412h2v2h-2zM1013 412h2v2h-2zM1023 412h2v2h-2zM1077 412h2v2h-2zM1099 412h2v2h-2zM1113 412h2v2h-2zM1130 412h2v2h-2zM1149 412h2v2h-2zM1165 412h2v2h-2zM1188 412h2v2h-2zM1208 412h2v2h-2zM1230 412h2v2h-2zM1266 412h2v2h-2zM1270 412h2v2h-2zM1291 412h2v2h-2zM1294 412h2v2h-2zM1313 412h2v2h-2zM1322 412h2v2h-2zM1331 412h2v2h-2zM1541 412h2v2h-2zM1545 412h2v2h-2zM773 413h2v2h-2zM993 413h2v2h-2zM1008 413h2v2h-2zM1010 413h2v2h-2zM1042 413h2v2h-2zM1074 413h2v2h-2zM1085 413h2v2h-2zM1091 413h2v2h-2zM1097 413h2v2h-2zM1106 413h2v2h-2zM1117 413h2v2h-2zM1135 413h2v2h-2zM1140 413h2v2h-2zM1144 413h2v2h-2zM1145 413h2v2h-2zM1149 413h2v2h-2zM1151 413h2v2h-2zM1169 413h2v2h-2zM1175 413h2v2h-2zM1185 413h2v2h-2zM1189 413h2v2h-2zM1197 413h2v2h-2zM1205 413h2v2h-2zM1219 413h2v2h-2zM1344 413h2v2h-2zM1017 414h2v2h-2zM1040 414h2v2h-2zM1083 414h2v2h-2zM1117 414h2v2h-2zM1119 414h2v2h-2zM1167 414h2v2h-2zM1183 414h2v2h-2zM1193 414h2v2h-2zM1217 414h2v2h-2zM1319 414h2v2h-2zM635 415h2v2h-2zM669 415h2v2h-2zM670 415h2v2h-2zM729 415h2v2h-2zM998 415h2v2h-2zM1000 415h2v2h-2zM1002 415h2v2h-2zM1017 415h2v2h-2zM1032 415h2v2h-2zM1033 415h2v2h-2zM1035 415h2v2h-2zM1079 415h2v2h-2zM1089 415h2v2h-2zM1095 415h2v2h-2zM1103 415h2v2h-2zM1127 415h2v2h-2zM1128 415h2v2h-2zM1137 415h2v2h-2zM1145 415h2v2h-2zM1167 415h2v2h-2zM1199 415h2v2h-2zM1207 415h2v2h-2zM1230 415h2v2h-2zM1244 415h2v2h-2zM1266 415h2v2h-2zM1289 415h2v2h-2zM1297 415h2v2h-2zM1303 415h2v2h-2zM1307 415h2v2h-2zM666 416h2v2h-2zM991 416h2v2h-2zM995 416h2v2h-2zM996 416h2v2h-2zM1006 416h2v2h-2zM1015 416h2v2h-2zM1016 416h2v2h-2zM1018 416h2v2h-2zM1102 416h2v2h-2zM1118 416h2v2h-2zM1119 416h2v2h-2zM1124 416h2v2h-2zM1134 416h2v2h-2zM1162 416h2v2h-2zM1164 416h2v2h-2zM1172 416h2v2h-2zM1177 416h2v2h-2zM1185 416h2v2h-2zM1187 416h2v2h-2zM1200 416h2v2h-2zM1220 416h2v2h-2zM1230 416h2v2h-2zM1253 416h2v2h-2zM1301 416h2v2h-2zM1310 416h2v2h-2zM1327 416h2v2h-2zM985 417h2v2h-2zM989 417h2v2h-2zM1138 417h2v2h-2zM1149 417h2v2h-2zM1165 417h2v2h-2zM1182 417h2v2h-2zM1191 417h2v2h-2zM1211 417h2v2h-2zM1222 417h2v2h-2zM1226 417h2v2h-2zM1264 417h2v2h-2zM1267 417h2v2h-2zM1283 417h2v2h-2zM1309 417h2v2h-2zM1316 417h2v2h-2zM1333 417h2v2h-2zM1336 417h2v2h-2zM637 418h2v2h-2zM745 418h2v2h-2zM832 418h2v2h-2zM989 418h2v2h-2zM1004 418h2v2h-2zM1024 418h2v2h-2zM1031 418h2v2h-2zM1065 418h2v2h-2zM1093 418h2v2h-2zM1102 418h2v2h-2zM1104 418h2v2h-2zM1111 418h2v2h-2zM1122 418h2v2h-2zM1128 418h2v2h-2zM1129 418h2v2h-2zM1183 418h2v2h-2zM1191 418h2v2h-2zM1197 418h2v2h-2zM1261 418h2v2h-2zM1279 418h2v2h-2zM1284 418h2v2h-2zM1291 418h2v2h-2zM1292 418h2v2h-2zM1340 418h2v2h-2zM1350 418h2v2h-2zM619 419h2v2h-2zM650 419h2v2h-2zM751 419h2v2h-2zM814 419h2v2h-2zM987 419h2v2h-2zM993 419h2v2h-2zM1004 419h2v2h-2zM1008 419h2v2h-2zM1012 419h2v2h-2zM1015 419h2v2h-2zM1023 419h2v2h-2zM1031 419h2v2h-2zM1044 419h2v2h-2zM1052 419h2v2h-2zM1059 419h2v2h-2zM1061 419h2v2h-2zM1117 419h2v2h-2zM1132 419h2v2h-2zM1140 419h2v2h-2zM1169 419h2v2h-2zM1172 419h2v2h-2zM1173 419h2v2h-2zM1175 419h2v2h-2zM1185 419h2v2h-2zM1186 419h2v2h-2zM1193 419h2v2h-2zM1201 419h2v2h-2zM1203 419h2v2h-2zM1210 419h2v2h-2zM1213 419h2v2h-2zM1217 419h2v2h-2zM1230 419h2v2h-2zM1270 419h2v2h-2zM1289 419h2v2h-2zM1325 419h2v2h-2zM1328 419h2v2h-2zM1331 419h2v2h-2zM769 420h2v2h-2zM899 420h2v2h-2zM908 420h2v2h-2zM985 420h2v2h-2zM988 420h2v2h-2zM997 420h2v2h-2zM1050 420h2v2h-2zM1062 420h2v2h-2zM1083 420h2v2h-2zM1100 420h2v2h-2zM1133 420h2v2h-2zM1135 420h2v2h-2zM1145 420h2v2h-2zM1168 420h2v2h-2zM1184 420h2v2h-2zM1186 420h2v2h-2zM1190 420h2v2h-2zM1191 420h2v2h-2zM1225 420h2v2h-2zM1270 420h2v2h-2zM1277 420h2v2h-2zM1304 420h2v2h-2zM1317 420h2v2h-2zM1331 420h2v2h-2zM1338 420h2v2h-2zM1342 420h2v2h-2zM1347 420h2v2h-2zM1370 420h2v2h-2zM777 421h2v2h-2zM915 421h2v2h-2zM990 421h2v2h-2zM998 421h2v2h-2zM1007 421h2v2h-2zM1043 421h2v2h-2zM1051 421h2v2h-2zM1062 421h2v2h-2zM1063 421h2v2h-2zM1069 421h2v2h-2zM1075 421h2v2h-2zM1094 421h2v2h-2zM1104 421h2v2h-2zM1114 421h2v2h-2zM1141 421h2v2h-2zM1176 421h2v2h-2zM1181 421h2v2h-2zM1202 421h2v2h-2zM1221 421h2v2h-2zM1223 421h2v2h-2zM1231 421h2v2h-2zM1245 421h2v2h-2zM1247 421h2v2h-2zM1250 421h2v2h-2zM1254 421h2v2h-2zM1288 421h2v2h-2zM1308 421h2v2h-2zM1311 421h2v2h-2zM1315 421h2v2h-2zM1319 421h2v2h-2zM1327 421h2v2h-2zM1339 421h2v2h-2zM1345 421h2v2h-2zM769 422h2v2h-2zM799 422h2v2h-2zM886 422h2v2h-2zM1003 422h2v2h-2zM1006 422h2v2h-2zM1064 422h2v2h-2zM1094 422h2v2h-2zM1145 422h2v2h-2zM1148 422h2v2h-2zM1176 422h2v2h-2zM1210 422h2v2h-2zM1225 422h2v2h-2zM1226 422h2v2h-2zM1228 422h2v2h-2zM1236 422h2v2h-2zM1271 422h2v2h-2zM1280 422h2v2h-2zM1289 422h2v2h-2zM1296 422h2v2h-2zM1303 422h2v2h-2zM1310 422h2v2h-2zM1321 422h2v2h-2zM1325 422h2v2h-2zM1328 422h2v2h-2zM1336 422h2v2h-2zM1338 422h2v2h-2zM983 423h2v2h-2zM991 423h2v2h-2zM1015 423h2v2h-2zM1053 423h2v2h-2zM1094 423h2v2h-2zM1108 423h2v2h-2zM1118 423h2v2h-2zM1135 423h2v2h-2zM1146 423h2v2h-2zM1168 423h2v2h-2zM1190 423h2v2h-2zM1193 423h2v2h-2zM1209 423h2v2h-2zM1210 423h2v2h-2zM1245 423h2v2h-2zM1260 423h2v2h-2zM1275 423h2v2h-2zM1304 423h2v2h-2zM1325 423h2v2h-2zM1332 423h2v2h-2zM637 424h2v2h-2zM845 424h2v2h-2zM860 424h2v2h-2zM979 424h2v2h-2zM991 424h2v2h-2zM992 424h2v2h-2zM1056 424h2v2h-2zM1067 424h2v2h-2zM1141 424h2v2h-2zM1178 424h2v2h-2zM1221 424h2v2h-2zM1277 424h2v2h-2zM1293 424h2v2h-2zM1309 424h2v2h-2zM1315 424h2v2h-2zM1339 424h2v2h-2zM1357 424h2v2h-2zM1366 424h2v2h-2zM631 425h2v2h-2zM796 425h2v2h-2zM982 425h2v2h-2zM987 425h2v2h-2zM990 425h2v2h-2zM1007 425h2v2h-2zM1015 425h2v2h-2zM1033 425h2v2h-2zM1039 425h2v2h-2zM1041 425h2v2h-2zM1044 425h2v2h-2zM1070 425h2v2h-2zM1073 425h2v2h-2zM1087 425h2v2h-2zM1117 425h2v2h-2zM1132 425h2v2h-2zM1142 425h2v2h-2zM1162 425h2v2h-2zM1225 425h2v2h-2zM1253 425h2v2h-2zM1265 425h2v2h-2zM1273 425h2v2h-2zM1288 425h2v2h-2zM1296 425h2v2h-2zM1301 425h2v2h-2zM1338 425h2v2h-2zM816 426h2v2h-2zM970 426h2v2h-2zM977 426h2v2h-2zM1027 426h2v2h-2zM1040 426h2v2h-2zM1083 426h2v2h-2zM1096 426h2v2h-2zM1130 426h2v2h-2zM1151 426h2v2h-2zM1152 426h2v2h-2zM1155 426h2v2h-2zM1174 426h2v2h-2zM1182 426h2v2h-2zM1187 426h2v2h-2zM1214 426h2v2h-2zM1238 426h2v2h-2zM1242 426h2v2h-2zM1277 426h2v2h-2zM1314 426h2v2h-2zM1318 426h2v2h-2zM1326 426h2v2h-2zM1356 426h2v2h-2zM979 427h2v2h-2zM1006 427h2v2h-2zM1020 427h2v2h-2zM1025 427h2v2h-2zM1054 427h2v2h-2zM1069 427h2v2h-2zM1133 427h2v2h-2zM1186 427h2v2h-2zM1195 427h2v2h-2zM1196 427h2v2h-2zM1210 427h2v2h-2zM1218 427h2v2h-2zM1247 427h2v2h-2zM1253 427h2v2h-2zM1276 427h2v2h-2zM1292 427h2v2h-2zM1313 427h2v2h-2zM1321 427h2v2h-2zM1326 427h2v2h-2zM1334 427h2v2h-2zM1347 427h2v2h-2zM1368 427h2v2h-2zM807 428h2v2h-2zM975 428h2v2h-2zM988 428h2v2h-2zM1043 428h2v2h-2zM1072 428h2v2h-2zM1139 428h2v2h-2zM1160 428h2v2h-2zM1164 428h2v2h-2zM1166 428h2v2h-2zM1224 428h2v2h-2zM1230 428h2v2h-2zM1329 428h2v2h-2zM1330 428h2v2h-2zM1384 428h2v2h-2zM843 429h2v2h-2zM956 429h2v2h-2zM978 429h2v2h-2zM1045 429h2v2h-2zM1050 429h2v2h-2zM1066 429h2v2h-2zM1109 429h2v2h-2zM1129 429h2v2h-2zM1157 429h2v2h-2zM1202 429h2v2h-2zM1223 429h2v2h-2zM1281 429h2v2h-2zM1282 429h2v2h-2zM1318 429h2v2h-2zM1343 429h2v2h-2zM1350 429h2v2h-2zM858 430h2v2h-2zM971 430h2v2h-2zM988 430h2v2h-2zM999 430h2v2h-2zM1001 430h2v2h-2zM1019 430h2v2h-2zM1104 430h2v2h-2zM1116 430h2v2h-2zM1179 430h2v2h-2zM1201 430h2v2h-2zM1212 430h2v2h-2zM1233 430h2v2h-2zM1245 430h2v2h-2zM1293 430h2v2h-2zM1314 430h2v2h-2zM1328 430h2v2h-2zM615 431h2v2h-2zM963 431h2v2h-2zM975 431h2v2h-2zM1006 431h2v2h-2zM1025 431h2v2h-2zM1047 431h2v2h-2zM1062 431h2v2h-2zM1121 431h2v2h-2zM1212 431h2v2h-2zM1224 431h2v2h-2zM1245 431h2v2h-2zM1249 431h2v2h-2zM1266 431h2v2h-2zM1302 431h2v2h-2zM1306 431h2v2h-2zM1335 431h2v2h-2zM1386 431h2v2h-2zM1390 431h2v2h-2zM995 432h2v2h-2zM1009 432h2v2h-2zM1010 432h2v2h-2zM1016 432h2v2h-2zM1019 432h2v2h-2zM1024 432h2v2h-2zM1106 432h2v2h-2zM1152 432h2v2h-2zM1251 432h2v2h-2zM1258 432h2v2h-2zM1267 432h2v2h-2zM1310 432h2v2h-2zM1316 432h2v2h-2zM943 433h2v2h-2zM991 433h2v2h-2zM1012 433h2v2h-2zM1059 433h2v2h-2zM1090 433h2v2h-2zM1099 433h2v2h-2zM1171 433h2v2h-2zM1220 433h2v2h-2zM1223 433h2v2h-2zM1251 433h2v2h-2zM1259 433h2v2h-2zM1286 433h2v2h-2zM1338 433h2v2h-2zM1396 433h2v2h-2zM960 434h2v2h-2zM980 434h2v2h-2zM986 434h2v2h-2zM1008 434h2v2h-2zM1040 434h2v2h-2zM1077 434h2v2h-2zM1081 434h2v2h-2zM1127 434h2v2h-2zM1167 434h2v2h-2zM1183 434h2v2h-2zM1261 434h2v2h-2zM1273 434h2v2h-2zM1294 434h2v2h-2zM1330 434h2v2h-2zM1358 434h2v2h-2zM960 435h2v2h-2zM1005 435h2v2h-2zM1008 435h2v2h-2zM1027 435h2v2h-2zM1037 435h2v2h-2zM1107 435h2v2h-2zM1128 435h2v2h-2zM1251 435h2v2h-2zM1306 435h2v2h-2zM1309 435h2v2h-2zM1349 435h2v2h-2zM1384 435h2v2h-2zM950 436h2v2h-2zM1025 436h2v2h-2zM1094 436h2v2h-2zM1160 436h2v2h-2zM1211 436h2v2h-2zM1260 436h2v2h-2zM1321 436h2v2h-2zM951 437h2v2h-2zM960 437h2v2h-2zM964 437h2v2h-2zM992 437h2v2h-2zM1056 437h2v2h-2zM1089 437h2v2h-2zM1108 437h2v2h-2zM1131 437h2v2h-2zM1230 437h2v2h-2zM1237 437h2v2h-2zM1292 437h2v2h-2zM964 438h2v2h-2zM1027 438h2v2h-2zM1160 438h2v2h-2zM1169 438h2v2h-2zM1179 438h2v2h-2zM1215 438h2v2h-2zM1222 438h2v2h-2zM1286 438h2v2h-2zM1337 438h2v2h-2zM943 439h2v2h-2zM954 439h2v2h-2zM956 439h2v2h-2zM970 439h2v2h-2zM996 439h2v2h-2zM1022 439h2v2h-2zM1130 439h2v2h-2zM1266 439h2v2h-2zM1290 439h2v2h-2zM1314 439h2v2h-2zM937 440h2v2h-2zM951 440h2v2h-2zM953 440h2v2h-2zM992 440h2v2h-2zM1002 440h2v2h-2zM1045 440h2v2h-2zM1060 440h2v2h-2zM1085 440h2v2h-2zM1176 440h2v2h-2zM1204 440h2v2h-2zM1219 440h2v2h-2zM1221 440h2v2h-2zM1226 440h2v2h-2zM1239 440h2v2h-2zM1358 440h2v2h-2zM941 441h2v2h-2zM946 441h2v2h-2zM1043 441h2v2h-2zM1050 441h2v2h-2zM1066 441h2v2h-2zM1097 441h2v2h-2zM1139 441h2v2h-2zM1295 441h2v2h-2zM1328 441h2v2h-2zM1383 441h2v2h-2zM946 442h2v2h-2zM955 442h2v2h-2zM1011 442h2v2h-2zM1077 442h2v2h-2zM917 443h2v2h-2zM933 443h2v2h-2zM943 443h2v2h-2zM1033 443h2v2h-2zM1053 443h2v2h-2zM1087 443h2v2h-2zM1092 443h2v2h-2zM1095 443h2v2h-2zM1179 443h2v2h-2zM1227 443h2v2h-2zM1245 443h2v2h-2zM1300 443h2v2h-2zM900 444h2v2h-2zM943 444h2v2h-2zM995 444h2v2h-2zM1019 444h2v2h-2zM1083 444h2v2h-2zM1235 444h2v2h-2zM1292 444h2v2h-2zM930 445h2v2h-2zM934 445h2v2h-2zM937 445h2v2h-2zM944 445h2v2h-2zM989 445h2v2h-2zM1085 445h2v2h-2zM1124 445h2v2h-2zM1187 445h2v2h-2zM1189 445h2v2h-2zM912 446h2v2h-2zM922 446h2v2h-2zM923 446h2v2h-2zM926 446h2v2h-2zM944 446h2v2h-2zM1002 446h2v2h-2zM1006 446h2v2h-2zM1049 446h2v2h-2zM1096 446h2v2h-2zM1189 446h2v2h-2zM917 447h2v2h-2zM927 447h2v2h-2zM1243 447h2v2h-2zM896 448h2v2h-2zM914 448h2v2h-2zM1191 448h2v2h-2zM1195 448h2v2h-2zM1247 448h2v2h-2zM899 449h2v2h-2zM924 449h2v2h-2zM939 449h2v2h-2zM1262 449h2v2h-2zM1282 449h2v2h-2zM1315 449h2v2h-2zM890 450h2v2h-2zM895 450h2v2h-2zM910 450h2v2h-2zM912 450h2v2h-2zM922 450h2v2h-2zM1189 450h2v2h-2zM1222 450h2v2h-2zM1239 450h2v2h-2zM1250 450h2v2h-2zM906 451h2v2h-2zM907 451h2v2h-2zM1237 451h2v2h-2zM896 452h2v2h-2zM909 452h2v2h-2zM920 452h2v2h-2zM922 452h2v2h-2zM987 452h2v2h-2zM881 453h2v2h-2zM891 453h2v2h-2zM892 453h2v2h-2zM895 453h2v2h-2zM901 453h2v2h-2zM902 453h2v2h-2zM908 453h2v2h-2zM916 453h2v2h-2zM934 453h2v2h-2zM1268 453h2v2h-2zM899 455h2v2h-2zM905 455h2v2h-2zM986 455h2v2h-2zM888 456h2v2h-2zM895 456h2v2h-2zM898 456h2v2h-2zM875 457h2v2h-2zM890 457h2v2h-2zM873 458h2v2h-2zM874 458h2v2h-2zM875 458h2v2h-2zM878 458h2v2h-2zM880 458h2v2h-2zM883 458h2v2h-2zM902 459h2v2h-2zM881 460h2v2h-2zM886 460h2v2h-2zM960 460h2v2h-2zM983 460h2v2h-2zM862 461h2v2h-2zM868 461h2v2h-2zM984 461h2v2h-2zM864 462h2v2h-2zM875 462h2v2h-2zM881 462h2v2h-2zM944 462h2v2h-2zM959 462h2v2h-2zM970 462h2v2h-2zM848 463h2v2h-2zM850 463h2v2h-2zM860 463h2v2h-2zM865 463h2v2h-2zM889 463h2v2h-2zM951 463h2v2h-2zM846 464h2v2h-2zM854 464h2v2h-2zM946 464h2v2h-2zM855 465h2v2h-2zM860 465h2v2h-2zM876 465h2v2h-2zM957 465h2v2h-2zM846 466h2v2h-2zM862 466h2v2h-2zM863 466h2v2h-2zM870 466h2v2h-2zM946 466h2v2h-2zM843 467h2v2h-2zM853 467h2v2h-2zM855 467h2v2h-2zM858 467h2v2h-2zM872 467h2v2h-2zM930 467h2v2h-2zM931 467h2v2h-2zM854 468h2v2h-2zM848 469h2v2h-2zM857 469h2v2h-2zM861 469h2v2h-2zM875 469h2v2h-2zM830 470h2v2h-2zM934 470h2v2h-2zM844 471h2v2h-2zM854 471h2v2h-2zM944 472h2v2h-2zM832 473h2v2h-2zM857 473h2v2h-2zM831 474h2v2h-2zM844 475h2v2h-2zM825 476h2v2h-2zM826 476h2v2h-2zM834 476h2v2h-2zM853 476h2v2h-2zM833 477h2v2h-2zM840 477h2v2h-2zM823 478h2v2h-2zM845 478h2v2h-2zM821 479h2v2h-2zM825 479h2v2h-2zM829 479h2v2h-2zM899 482h2v2h-2zM826 483h2v2h-2zM829 483h2v2h-2zM808 484h2v2h-2zM893 484h2v2h-2zM815 486h2v2h-2zM818 486h2v2h-2zM883 486h2v2h-2zM819 487h2v2h-2zM820 487h2v2h-2zM806 488h2v2h-2zM812 488h2v2h-2zM822 488h2v2h-2zM823 488h2v2h-2zM917 488h2v2h-2zM792 489h2v2h-2zM814 489h2v2h-2zM878 489h2v2h-2zM881 489h2v2h-2zM913 489h2v2h-2zM795 490h2v2h-2zM805 490h2v2h-2zM806 490h2v2h-2zM807 490h2v2h-2zM911 490h2v2h-2zM920 490h2v2h-2zM921 490h2v2h-2zM819 491h2v2h-2zM798 492h2v2h-2zM795 493h2v2h-2zM803 495h2v2h-2zM794 497h2v2h-2zM794 498h2v2h-2zM795 498h2v2h-2zM798 498h2v2h-2zM783 499h2v2h-2zM787 499h2v2h-2zM794 500h2v2h-2zM1273 500h2v2h-2zM799 501h2v2h-2zM790 502h2v2h-2zM792 502h2v2h-2zM786 503h2v2h-2zM770 504h2v2h-2zM772 506h2v2h-2zM777 506h2v2h-2zM786 506h2v2h-2zM789 506h2v2h-2zM784 507h2v2h-2zM770 508h2v2h-2zM769 509h2v2h-2zM772 509h2v2h-2zM782 509h2v2h-2zM765 510h2v2h-2zM777 510h2v2h-2zM763 511h2v2h-2zM784 511h2v2h-2zM763 512h2v2h-2zM769 512h2v2h-2zM771 512h2v2h-2zM783 512h2v2h-2zM760 513h2v2h-2zM765 514h2v2h-2zM755 515h2v2h-2zM765 515h2v2h-2zM769 515h2v2h-2zM1275 516h2v2h-2zM764 517h2v2h-2zM768 517h2v2h-2zM764 518h2v2h-2zM746 520h2v2h-2zM752 521h2v2h-2zM756 522h2v2h-2zM746 523h2v2h-2zM1279 524h2v2h-2zM753 525h2v2h-2zM756 526h2v2h-2zM757 527h2v2h-2zM750 528h2v2h-2zM751 528h2v2h-2zM755 528h2v2h-2zM743 529h2v2h-2zM746 529h2v2h-2zM747 530h2v2h-2zM745 531h2v2h-2zM747 531h2v2h-2zM748 531h2v2h-2zM1240 550h2v2h-2zM1298 551h2v2h-2zM1252 560h2v2h-2z"/>
<path fill="#0c0c0c" d="M1256 284h2v2h-2zM1246 288h2v2h-2zM1251 291h2v2h-2zM1267 291h2v2h-2zM1240 294h2v2h-2zM1249 298h2v2h-2zM1379 307h2v2h-2zM1383 318h2v2h-2zM1205 319h2v2h-2zM1200 320h2v2h-2zM1200 322h2v2h-2zM1207 325h2v2h-2zM1261 355h2v2h-2zM1328 356h2v2h-2zM1194 366h2v2h-2zM1321 368h2v2h-2zM1245 369h2v2h-2zM1322 374h2v2h-2zM1269 375h2v2h-2zM1117 378h2v2h-2zM1211 378h2v2h-2zM1033 382h2v2h-2zM895 383h2v2h-2zM1053 383h2v2h-2zM1054 383h2v2h-2zM1056 383h2v2h-2zM1084 384h2v2h-2zM1226 384h2v2h-2zM1052 385h2v2h-2zM1092 385h2v2h-2zM1120 385h2v2h-2zM1319 385h2v2h-2zM1065 386h2v2h-2zM1278 386h2v2h-2zM1205 387h2v2h-2zM1034 389h2v2h-2zM1086 389h2v2h-2zM1044 390h2v2h-2zM1122 390h2v2h-2zM1000 391h2v2h-2zM1061 391h2v2h-2zM1077 391h2v2h-2zM1102 391h2v2h-2zM1157 391h2v2h-2zM1032 392h2v2h-2zM1059 392h2v2h-2zM1098 392h2v2h-2zM1181 392h2v2h-2zM1057 393h2v2h-2zM1073 393h2v2h-2zM1039 394h2v2h-2zM1045 394h2v2h-2zM1181 394h2v2h-2zM1255 394h2v2h-2zM1035 395h2v2h-2zM1045 395h2v2h-2zM1090 395h2v2h-2zM1092 395h2v2h-2zM1322 395h2v2h-2zM992 396h2v2h-2zM1088 396h2v2h-2zM1206 396h2v2h-2zM1027 397h2v2h-2zM1043 397h2v2h-2zM1090 397h2v2h-2zM706 398h2v2h-2zM983 398h2v2h-2zM1055 398h2v2h-2zM1067 398h2v2h-2zM1111 398h2v2h-2zM1145 398h2v2h-2zM1197 398h2v2h-2zM1039 399h2v2h-2zM698 400h2v2h-2zM699 400h2v2h-2zM940 400h2v2h-2zM1162 400h2v2h-2zM1183 400h2v2h-2zM1028 401h2v2h-2zM1073 401h2v2h-2zM1078 401h2v2h-2zM1094 401h2v2h-2zM1098 401h2v2h-2zM1120 401h2v2h-2zM1132 401h2v2h-2zM1023 402h2v2h-2zM1065 402h2v2h-2zM1072 402h2v2h-2zM1206 402h2v2h-2zM1240 402h2v2h-2zM719 403h2v2h-2zM1133 403h2v2h-2zM1153 403h2v2h-2zM1185 403h2v2h-2zM1196 403h2v2h-2zM727 404h2v2h-2zM1019 404h2v2h-2zM1046 404h2v2h-2zM1119 404h2v2h-2zM1140 404h2v2h-2zM1228 404h2v2h-2zM1285 404h2v2h-2zM717 405h2v2h-2zM731 405h2v2h-2zM1019 405h2v2h-2zM1107 405h2v2h-2zM1151 405h2v2h-2zM1184 405h2v2h-2zM1195 405h2v2h-2zM1212 405h2v2h-2zM1287 405h2v2h-2zM1304 405h2v2h-2zM656 406h2v2h-2zM1064 406h2v2h-2zM1092 406h2v2h-2zM1129 406h2v2h-2zM1265 406h2v2h-2zM1272 406h2v2h-2zM1037 407h2v2h-2zM1163 407h2v2h-2zM1208 407h2v2h-2zM1021 408h2v2h-2zM1318 408h2v2h-2zM1322 408h2v2h-2zM670 409h2v2h-2zM1021 409h2v2h-2zM1027 409h2v2h-2zM1040 409h2v2h-2zM1062 409h2v2h-2zM1094 409h2v2h-2zM1156 409h2v2h-2zM1167 409h2v2h-2zM1187 409h2v2h-2zM1189 409h2v2h-2zM1210 409h2v2h-2zM1227 409h2v2h-2zM1228 409h2v2h-2zM1289 409h2v2h-2zM746 410h2v2h-2zM996 410h2v2h-2zM1007 410h2v2h-2zM1041 410h2v2h-2zM1067 410h2v2h-2zM1082 410h2v2h-2zM1132 410h2v2h-2zM1142 410h2v2h-2zM1248 410h2v2h-2zM1344 410h2v2h-2zM1008 411h2v2h-2zM1042 411h2v2h-2zM1051 411h2v2h-2zM1065 411h2v2h-2zM1077 411h2v2h-2zM1184 411h2v2h-2zM1211 411h2v2h-2zM684 412h2v2h-2zM706 412h2v2h-2zM1080 412h2v2h-2zM1095 412h2v2h-2zM1178 412h2v2h-2zM711 413h2v2h-2zM714 413h2v2h-2zM939 413h2v2h-2zM1062 413h2v2h-2zM1063 413h2v2h-2zM1131 413h2v2h-2zM1223 413h2v2h-2zM1271 413h2v2h-2zM1066 414h2v2h-2zM1140 414h2v2h-2zM1155 414h2v2h-2zM1160 414h2v2h-2zM1200 414h2v2h-2zM1308 414h2v2h-2zM1325 414h2v2h-2zM993 415h2v2h-2zM1030 415h2v2h-2zM1093 415h2v2h-2zM1215 415h2v2h-2zM661 416h2v2h-2zM676 416h2v2h-2zM824 416h2v2h-2zM1019 416h2v2h-2zM1038 416h2v2h-2zM1081 416h2v2h-2zM1099 416h2v2h-2zM1112 416h2v2h-2zM1128 416h2v2h-2zM1204 416h2v2h-2zM1218 416h2v2h-2zM764 417h2v2h-2zM993 417h2v2h-2zM1077 417h2v2h-2zM1121 417h2v2h-2zM1154 417h2v2h-2zM1175 417h2v2h-2zM1229 417h2v2h-2zM1239 417h2v2h-2zM1245 417h2v2h-2zM1301 417h2v2h-2zM1355 417h2v2h-2zM1076 418h2v2h-2zM1117 418h2v2h-2zM1196 418h2v2h-2zM1198 418h2v2h-2zM1203 418h2v2h-2zM1253 418h2v2h-2zM1305 418h2v2h-2zM649 419h2v2h-2zM985 419h2v2h-2zM1025 419h2v2h-2zM1055 419h2v2h-2zM1167 419h2v2h-2zM1189 419h2v2h-2zM1224 419h2v2h-2zM1255 419h2v2h-2zM1301 419h2v2h-2zM1141 420h2v2h-2zM1167 420h2v2h-2zM1205 420h2v2h-2zM1230 420h2v2h-2zM1001 421h2v2h-2zM1259 421h2v2h-2zM1293 421h2v2h-2zM780 422h2v2h-2zM790 422h2v2h-2zM820 422h2v2h-2zM998 422h2v2h-2zM1019 422h2v2h-2zM1020 422h2v2h-2zM1085 422h2v2h-2zM1294 422h2v2h-2zM1344 422h2v2h-2zM1348 422h2v2h-2zM995 423h2v2h-2zM1240 423h2v2h-2zM1256 423h2v2h-2zM1286 423h2v2h-2zM1365 423h2v2h-2zM989 424h2v2h-2zM1077 424h2v2h-2zM1159 424h2v2h-2zM1181 424h2v2h-2zM1194 424h2v2h-2zM1238 424h2v2h-2zM1249 424h2v2h-2zM1282 424h2v2h-2zM781 425h2v2h-2zM855 425h2v2h-2zM976 425h2v2h-2zM996 425h2v2h-2zM1153 425h2v2h-2zM1242 425h2v2h-2zM1281 425h2v2h-2zM619 426h2v2h-2zM979 426h2v2h-2zM1014 426h2v2h-2zM1036 426h2v2h-2zM1128 426h2v2h-2zM1160 426h2v2h-2zM1191 426h2v2h-2zM1250 426h2v2h-2zM1297 426h2v2h-2zM1155 427h2v2h-2zM1280 427h2v2h-2zM1297 427h2v2h-2zM1338 427h2v2h-2zM1060 428h2v2h-2zM1071 428h2v2h-2zM1083 428h2v2h-2zM1124 428h2v2h-2zM1146 428h2v2h-2zM1189 428h2v2h-2zM1270 428h2v2h-2zM1297 428h2v2h-2zM1339 428h2v2h-2zM1342 428h2v2h-2zM1344 428h2v2h-2zM1377 428h2v2h-2zM1386 428h2v2h-2zM1395 428h2v2h-2zM1038 429h2v2h-2zM1041 429h2v2h-2zM1054 429h2v2h-2zM1108 429h2v2h-2zM1168 429h2v2h-2zM1196 429h2v2h-2zM1304 429h2v2h-2zM1340 429h2v2h-2zM975 430h2v2h-2zM1021 430h2v2h-2zM1153 430h2v2h-2zM1185 430h2v2h-2zM1392 430h2v2h-2zM1020 431h2v2h-2zM1066 431h2v2h-2zM1149 431h2v2h-2zM1252 431h2v2h-2zM1269 431h2v2h-2zM1044 432h2v2h-2zM1068 432h2v2h-2zM1121 432h2v2h-2zM1262 432h2v2h-2zM1276 432h2v2h-2zM1311 432h2v2h-2zM960 433h2v2h-2zM1014 433h2v2h-2zM1033 433h2v2h-2zM1253 433h2v2h-2zM1368 433h2v2h-2zM1087 434h2v2h-2zM1216 434h2v2h-2zM1220 434h2v2h-2zM1313 434h2v2h-2zM1341 434h2v2h-2zM1252 435h2v2h-2zM1338 435h2v2h-2zM1399 435h2v2h-2zM1034 436h2v2h-2zM1078 436h2v2h-2zM1300 436h2v2h-2zM1364 436h2v2h-2zM1385 436h2v2h-2zM1100 437h2v2h-2zM1162 437h2v2h-2zM1275 437h2v2h-2zM1287 437h2v2h-2zM937 438h2v2h-2zM953 438h2v2h-2zM1007 438h2v2h-2zM1134 438h2v2h-2zM1155 438h2v2h-2zM1166 438h2v2h-2zM1255 438h2v2h-2zM1326 438h2v2h-2zM1301 440h2v2h-2zM938 441h2v2h-2zM1027 441h2v2h-2zM1041 442h2v2h-2zM1185 442h2v2h-2zM1383 442h2v2h-2zM1155 443h2v2h-2zM1386 443h2v2h-2zM931 444h2v2h-2zM981 444h2v2h-2zM1161 444h2v2h-2zM1059 445h2v2h-2zM1180 445h2v2h-2zM1308 445h2v2h-2zM1200 446h2v2h-2zM1110 447h2v2h-2zM1144 447h2v2h-2zM916 448h2v2h-2zM913 449h2v2h-2zM1210 450h2v2h-2zM912 451h2v2h-2zM989 451h2v2h-2zM1202 451h2v2h-2zM1247 451h2v2h-2zM892 452h2v2h-2zM879 453h2v2h-2zM907 453h2v2h-2zM903 455h2v2h-2zM983 455h2v2h-2zM907 458h2v2h-2zM968 459h2v2h-2zM970 459h2v2h-2zM860 460h2v2h-2zM978 460h2v2h-2zM942 462h2v2h-2zM872 464h2v2h-2zM866 465h2v2h-2zM853 466h2v2h-2zM866 466h2v2h-2zM856 467h2v2h-2zM861 467h2v2h-2zM949 469h2v2h-2zM843 470h2v2h-2zM844 472h2v2h-2zM858 473h2v2h-2zM838 474h2v2h-2zM840 474h2v2h-2zM827 475h2v2h-2zM830 476h2v2h-2zM819 477h2v2h-2zM839 478h2v2h-2zM839 480h2v2h-2zM826 482h2v2h-2zM876 484h2v2h-2zM870 486h2v2h-2zM816 487h2v2h-2zM817 487h2v2h-2zM886 487h2v2h-2zM813 490h2v2h-2zM910 490h2v2h-2zM804 492h2v2h-2zM807 493h2v2h-2zM808 494h2v2h-2zM779 506h2v2h-2zM778 507h2v2h-2zM1275 508h2v2h-2zM797 509h2v2h-2zM770 510h2v2h-2zM767 517h2v2h-2zM750 525h2v2h-2zM759 525h2v2h-2zM1255 525h2v2h-2zM747 526h2v2h-2zM747 535h2v2h-2zM1300 547h2v2h-2z"/>
<path fill="#242424" d="M1292 288h2v2h-2zM1259 290h2v2h-2zM1242 291h2v2h-2zM1293 300h2v2h-2zM1249 303h2v2h-2zM1379 308h2v2h-2zM1300 311h2v2h-2zM1387 321h2v2h-2zM1197 322h2v2h-2zM1246 331h2v2h-2zM1245 336h2v2h-2zM1187 342h2v2h-2zM1407 346h2v2h-2zM1403 347h2v2h-2zM1296 350h2v2h-2zM1381 354h2v2h-2zM1172 357h2v2h-2zM1227 358h2v2h-2zM1368 361h2v2h-2zM1291 362h2v2h-2zM1359 363h2v2h-2zM1353 364h2v2h-2zM1300 368h2v2h-2zM1185 369h2v2h-2zM1268 371h2v2h-2zM1084 372h2v2h-2zM1230 373h2v2h-2zM1065 374h2v2h-2zM941 377h2v2h-2zM1300 378h2v2h-2zM1285 379h2v2h-2zM953 380h2v2h-2zM1255 383h2v2h-2zM1067 385h2v2h-2zM880 386h2v2h-2zM960 387h2v2h-2zM1046 387h2v2h-2zM1111 388h2v2h-2zM889 389h2v2h-2zM994 389h2v2h-2zM1048 389h2v2h-2zM1054 389h2v2h-2zM1119 389h2v2h-2zM1056 390h2v2h-2zM1036 391h2v2h-2zM1046 391h2v2h-2zM1111 392h2v2h-2zM1133 392h2v2h-2zM1143 392h2v2h-2zM1126 393h2v2h-2zM1128 393h2v2h-2zM1255 393h2v2h-2zM1019 394h2v2h-2zM1095 394h2v2h-2zM1161 394h2v2h-2zM1118 395h2v2h-2zM1131 395h2v2h-2zM1156 395h2v2h-2zM1226 395h2v2h-2zM1337 396h2v2h-2zM995 397h2v2h-2zM1033 397h2v2h-2zM1037 397h2v2h-2zM1136 397h2v2h-2zM1163 397h2v2h-2zM1164 397h2v2h-2zM1167 398h2v2h-2zM1193 398h2v2h-2zM1212 398h2v2h-2zM682 399h2v2h-2zM1019 399h2v2h-2zM1024 399h2v2h-2zM1077 399h2v2h-2zM1126 399h2v2h-2zM1165 399h2v2h-2zM1206 399h2v2h-2zM1097 400h2v2h-2zM1112 400h2v2h-2zM1127 400h2v2h-2zM1150 400h2v2h-2zM928 401h2v2h-2zM1046 401h2v2h-2zM1062 401h2v2h-2zM1096 401h2v2h-2zM1130 401h2v2h-2zM1173 401h2v2h-2zM1186 401h2v2h-2zM1200 401h2v2h-2zM1231 401h2v2h-2zM1249 401h2v2h-2zM1263 401h2v2h-2zM1138 402h2v2h-2zM1148 402h2v2h-2zM1163 402h2v2h-2zM1030 403h2v2h-2zM1085 403h2v2h-2zM1093 403h2v2h-2zM1138 403h2v2h-2zM1214 403h2v2h-2zM1239 403h2v2h-2zM1036 404h2v2h-2zM1042 404h2v2h-2zM1095 404h2v2h-2zM989 405h2v2h-2zM1025 405h2v2h-2zM1106 405h2v2h-2zM1109 405h2v2h-2zM1119 405h2v2h-2zM1231 405h2v2h-2zM1252 405h2v2h-2zM1283 405h2v2h-2zM750 406h2v2h-2zM1015 406h2v2h-2zM1016 406h2v2h-2zM1035 406h2v2h-2zM1099 406h2v2h-2zM1141 406h2v2h-2zM1193 406h2v2h-2zM1202 406h2v2h-2zM921 407h2v2h-2zM1067 407h2v2h-2zM1110 407h2v2h-2zM1111 407h2v2h-2zM1487 407h2v2h-2zM993 408h2v2h-2zM1016 408h2v2h-2zM1063 408h2v2h-2zM1092 408h2v2h-2zM1104 408h2v2h-2zM1106 408h2v2h-2zM1129 408h2v2h-2zM1158 408h2v2h-2zM1180 408h2v2h-2zM1190 408h2v2h-2zM1328 408h2v2h-2zM1340 408h2v2h-2zM700 409h2v2h-2zM739 409h2v2h-2zM1018 409h2v2h-2zM1144 409h2v2h-2zM1146 409h2v2h-2zM1302 409h2v2h-2zM1320 409h2v2h-2zM1479 409h2v2h-2zM700 410h2v2h-2zM718 410h2v2h-2zM1036 410h2v2h-2zM1062 410h2v2h-2zM1083 410h2v2h-2zM1104 410h2v2h-2zM1141 410h2v2h-2zM1179 410h2v2h-2zM1186 410h2v2h-2zM1253 410h2v2h-2zM1261 410h2v2h-2zM1266 410h2v2h-2zM1273 410h2v2h-2zM1546 410h2v2h-2zM993 411h2v2h-2zM1045 411h2v2h-2zM1102 411h2v2h-2zM1104 411h2v2h-2zM1117 411h2v2h-2zM1127 411h2v2h-2zM1160 411h2v2h-2zM1165 411h2v2h-2zM1234 411h2v2h-2zM1243 411h2v2h-2zM1282 411h2v2h-2zM984 412h2v2h-2zM1024 412h2v2h-2zM1057 412h2v2h-2zM1142 412h2v2h-2zM1183 412h2v2h-2zM1215 412h2v2h-2zM1000 413h2v2h-2zM1033 413h2v2h-2zM1086 413h2v2h-2zM1126 413h2v2h-2zM1173 413h2v2h-2zM759 414h2v2h-2zM996 414h2v2h-2zM1012 414h2v2h-2zM1075 414h2v2h-2zM1124 414h2v2h-2zM1148 414h2v2h-2zM1185 414h2v2h-2zM1202 414h2v2h-2zM1260 414h2v2h-2zM1309 414h2v2h-2zM1023 415h2v2h-2zM1152 415h2v2h-2zM1180 415h2v2h-2zM1236 415h2v2h-2zM1253 415h2v2h-2zM1327 415h2v2h-2zM883 416h2v2h-2zM964 416h2v2h-2zM1017 416h2v2h-2zM1213 416h2v2h-2zM1219 416h2v2h-2zM1241 416h2v2h-2zM1251 416h2v2h-2zM1255 416h2v2h-2zM1265 416h2v2h-2zM1277 416h2v2h-2zM1312 416h2v2h-2zM1340 416h2v2h-2zM1233 417h2v2h-2zM1241 417h2v2h-2zM1249 417h2v2h-2zM1254 417h2v2h-2zM985 418h2v2h-2zM994 418h2v2h-2zM1081 418h2v2h-2zM1235 418h2v2h-2zM1266 418h2v2h-2zM1326 418h2v2h-2zM755 419h2v2h-2zM992 419h2v2h-2zM1043 419h2v2h-2zM1079 419h2v2h-2zM1085 419h2v2h-2zM1122 419h2v2h-2zM1151 419h2v2h-2zM1180 419h2v2h-2zM1198 419h2v2h-2zM1207 419h2v2h-2zM992 420h2v2h-2zM1021 420h2v2h-2zM1024 420h2v2h-2zM1104 420h2v2h-2zM1147 420h2v2h-2zM1194 420h2v2h-2zM1217 420h2v2h-2zM1235 420h2v2h-2zM1248 420h2v2h-2zM635 421h2v2h-2zM1174 421h2v2h-2zM1214 421h2v2h-2zM1243 421h2v2h-2zM1257 421h2v2h-2zM1282 421h2v2h-2zM1300 421h2v2h-2zM1307 421h2v2h-2zM993 422h2v2h-2zM1009 422h2v2h-2zM1038 422h2v2h-2zM1040 422h2v2h-2zM1091 422h2v2h-2zM1104 422h2v2h-2zM1119 422h2v2h-2zM1159 422h2v2h-2zM1241 422h2v2h-2zM1246 422h2v2h-2zM1257 422h2v2h-2zM1275 422h2v2h-2zM617 423h2v2h-2zM1086 423h2v2h-2zM1099 423h2v2h-2zM1204 423h2v2h-2zM1205 423h2v2h-2zM985 424h2v2h-2zM1011 424h2v2h-2zM1099 424h2v2h-2zM1109 424h2v2h-2zM1158 424h2v2h-2zM1184 424h2v2h-2zM1303 424h2v2h-2zM1320 424h2v2h-2zM1332 424h2v2h-2zM1399 424h2v2h-2zM642 425h2v2h-2zM1002 425h2v2h-2zM1094 425h2v2h-2zM1101 425h2v2h-2zM1287 425h2v2h-2zM1378 425h2v2h-2zM960 426h2v2h-2zM1101 426h2v2h-2zM1106 426h2v2h-2zM1223 426h2v2h-2zM1251 426h2v2h-2zM1259 426h2v2h-2zM1305 426h2v2h-2zM1322 426h2v2h-2zM1384 426h2v2h-2zM986 427h2v2h-2zM1064 427h2v2h-2zM1209 427h2v2h-2zM1232 427h2v2h-2zM1266 427h2v2h-2zM1322 427h2v2h-2zM611 428h2v2h-2zM983 428h2v2h-2zM984 428h2v2h-2zM985 428h2v2h-2zM1061 428h2v2h-2zM1112 428h2v2h-2zM1222 428h2v2h-2zM1274 428h2v2h-2zM1306 428h2v2h-2zM1316 428h2v2h-2zM979 429h2v2h-2zM1023 429h2v2h-2zM1125 429h2v2h-2zM1207 429h2v2h-2zM1293 429h2v2h-2zM1310 429h2v2h-2zM1331 429h2v2h-2zM1339 429h2v2h-2zM1003 430h2v2h-2zM1047 430h2v2h-2zM1093 430h2v2h-2zM1175 430h2v2h-2zM1221 430h2v2h-2zM1276 430h2v2h-2zM1286 430h2v2h-2zM1322 430h2v2h-2zM1391 430h2v2h-2zM826 431h2v2h-2zM958 431h2v2h-2zM979 431h2v2h-2zM1039 431h2v2h-2zM1136 431h2v2h-2zM1142 431h2v2h-2zM1274 431h2v2h-2zM1292 431h2v2h-2zM1338 431h2v2h-2zM1354 431h2v2h-2zM1142 432h2v2h-2zM1149 432h2v2h-2zM1224 432h2v2h-2zM1236 432h2v2h-2zM1254 432h2v2h-2zM1355 432h2v2h-2zM963 433h2v2h-2zM1061 433h2v2h-2zM1243 433h2v2h-2zM1278 433h2v2h-2zM1367 433h2v2h-2zM1085 434h2v2h-2zM1322 434h2v2h-2zM1001 435h2v2h-2zM1025 435h2v2h-2zM1026 435h2v2h-2zM1070 435h2v2h-2zM1096 435h2v2h-2zM1142 435h2v2h-2zM1242 435h2v2h-2zM957 436h2v2h-2zM1014 436h2v2h-2zM1315 436h2v2h-2zM1326 436h2v2h-2zM1301 437h2v2h-2zM1312 437h2v2h-2zM1317 437h2v2h-2zM1318 437h2v2h-2zM1153 438h2v2h-2zM1182 438h2v2h-2zM1250 438h2v2h-2zM941 439h2v2h-2zM1416 439h2v2h-2zM1434 439h2v2h-2zM1438 439h2v2h-2zM1080 440h2v2h-2zM1117 440h2v2h-2zM1426 440h2v2h-2zM931 441h2v2h-2zM992 441h2v2h-2zM1130 441h2v2h-2zM943 442h2v2h-2zM1038 442h2v2h-2zM1106 442h2v2h-2zM1243 442h2v2h-2zM1277 442h2v2h-2zM958 443h2v2h-2zM1253 443h2v2h-2zM947 444h2v2h-2zM1257 444h2v2h-2zM942 446h2v2h-2zM945 447h2v2h-2zM939 448h2v2h-2zM1113 448h2v2h-2zM1182 448h2v2h-2zM1123 449h2v2h-2zM1217 449h2v2h-2zM1295 449h2v2h-2zM915 450h2v2h-2zM939 450h2v2h-2zM940 450h2v2h-2zM889 454h2v2h-2zM892 454h2v2h-2zM910 454h2v2h-2zM1297 454h2v2h-2zM906 455h2v2h-2zM958 457h2v2h-2zM868 458h2v2h-2zM884 459h2v2h-2zM844 463h2v2h-2zM877 463h2v2h-2zM938 463h2v2h-2zM942 463h2v2h-2zM866 464h2v2h-2zM868 464h2v2h-2zM847 468h2v2h-2zM932 468h2v2h-2zM842 470h2v2h-2zM963 470h2v2h-2zM839 471h2v2h-2zM834 472h2v2h-2zM830 477h2v2h-2zM832 480h2v2h-2zM805 485h2v2h-2zM892 486h2v2h-2zM904 487h2v2h-2zM808 488h2v2h-2zM796 491h2v2h-2zM912 492h2v2h-2zM794 495h2v2h-2zM775 506h2v2h-2zM765 507h2v2h-2zM777 507h2v2h-2zM771 510h2v2h-2zM781 510h2v2h-2zM764 516h2v2h-2zM769 516h2v2h-2zM762 517h2v2h-2zM773 519h2v2h-2zM754 522h2v2h-2zM1300 522h2v2h-2zM756 523h2v2h-2zM755 527h2v2h-2zM746 532h2v2h-2zM1253 537h2v2h-2zM1299 541h2v2h-2z"/>
<path fill="#183c0c" d="M617 433h2v2h-2zM711 680h2v2h-2zM674 682h2v2h-2zM679 683h2v2h-2zM690 683h2v2h-2zM710 684h2v2h-2zM673 686h2v2h-2zM696 690h2v2h-2zM680 693h2v2h-2zM689 693h2v2h-2zM678 696h2v2h-2zM661 698h2v2h-2z"/>
<path fill="#244818" d="M630 415h2v2h-2zM633 416h2v2h-2zM631 422h2v2h-2zM605 426h2v2h-2zM614 426h2v2h-2z"/>
<path fill="#306018" d="M635 412h2v2h-2zM641 417h2v2h-2zM614 430h2v2h-2z"/>
<path fill="#306c24" d="M612 422h2v2h-2zM608 432h2v2h-2z"/>
<path fill="#243c0c" d="M1269 412h2v2h-2zM617 418h2v2h-2zM1338 421h2v2h-2zM610 422h2v2h-2zM1312 428h2v2h-2zM1318 442h2v2h-2zM824 636h2v2h-2z"/>
<path fill="#305418" d="M643 420h2v2h-2z"/>
<path fill="#306c18" d="M642 414h2v2h-2zM633 422h2v2h-2zM609 425h2v2h-2z"/>
<path fill="#243c18" d="M643 418h2v2h-2z"/>
<path fill="#3c6c24" d="M617 417h2v2h-2z"/>
<path fill="#245418" d="M640 421h2v2h-2z"/>
<path fill="#846c60" d="M740 376h2v2h-2zM722 378h2v2h-2zM712 385h2v2h-2zM691 394h2v2h-2zM691 399h2v2h-2z"/>
<path fill="#84786c" d="M746 378h2v2h-2z"/>
<path fill="#54483c" d="M712 389h2v2h-2zM1406 437h2v2h-2zM645 475h2v2h-2zM611 478h2v2h-2zM615 478h2v2h-2zM635 478h2v2h-2zM649 479h2v2h-2zM631 480h2v2h-2z"/>
<path fill="#605448" d="M737 377h2v2h-2zM706 380h2v2h-2zM720 380h2v2h-2zM728 383h2v2h-2zM725 387h2v2h-2zM710 392h2v2h-2zM690 395h2v2h-2zM697 395h2v2h-2z"/>
<path fill="#786c60" d="M743 370h2v2h-2zM702 394h2v2h-2z"/>
<path fill="#6c5454" d="M716 393h2v2h-2zM703 394h2v2h-2z"/>
<path fill="#846c6c" d="M741 374h2v2h-2zM711 394h2v2h-2z"/>
<path fill="#6c6054" d="M739 375h2v2h-2zM733 379h2v2h-2zM715 386h2v2h-2zM692 392h2v2h-2z"/>
<path fill="#544848" d="M719 386h2v2h-2zM655 478h2v2h-2zM1413 538h2v2h-2zM1332 559h2v2h-2zM1401 560h2v2h-2zM1398 575h2v2h-2zM1410 579h2v2h-2zM1334 586h2v2h-2zM1407 595h2v2h-2zM1463 607h2v2h-2zM1374 611h2v2h-2zM1485 611h2v2h-2zM1391 612h2v2h-2zM1357 613h2v2h-2zM1458 619h2v2h-2zM1415 628h2v2h-2z"/>
<path fill="#483c3c" d="M1412 436h2v2h-2zM1418 437h2v2h-2zM596 475h2v2h-2zM620 476h2v2h-2zM602 482h2v2h-2zM1439 617h2v2h-2zM1409 627h2v2h-2z"/>
<path fill="#604848" d="M612 476h2v2h-2zM641 477h2v2h-2z"/>
<path fill="#543c3c" d="M621 479h2v2h-2z"/>
<path fill="#c0c0c0" d="M1313 354h2v2h-2zM1550 355h2v2h-2zM1535 356h2v2h-2zM1539 356h2v2h-2zM1303 369h2v2h-2zM1310 369h2v2h-2zM1544 382h2v2h-2zM1216 385h2v2h-2zM1260 385h2v2h-2zM1292 385h2v2h-2zM1284 386h2v2h-2zM1229 390h2v2h-2zM1277 392h2v2h-2zM1284 393h2v2h-2zM1213 394h2v2h-2zM1324 396h2v2h-2zM1540 396h2v2h-2zM1237 397h2v2h-2zM1330 401h2v2h-2zM1290 403h2v2h-2zM1312 403h2v2h-2zM1243 404h2v2h-2zM1247 404h2v2h-2zM1271 404h2v2h-2zM1303 411h2v2h-2zM1288 419h2v2h-2zM1321 425h2v2h-2zM1344 425h2v2h-2zM1319 433h2v2h-2zM1289 441h2v2h-2zM646 484h2v2h-2zM620 485h2v2h-2zM601 487h2v2h-2zM652 487h2v2h-2zM640 489h2v2h-2zM602 492h2v2h-2zM620 496h2v2h-2zM611 497h2v2h-2zM632 497h2v2h-2zM599 498h2v2h-2zM639 498h2v2h-2zM644 498h2v2h-2zM651 498h2v2h-2zM1238 514h2v2h-2zM601 522h2v2h-2zM1463 531h2v2h-2zM1452 533h2v2h-2zM1437 535h2v2h-2zM1424 536h2v2h-2zM1262 605h2v2h-2zM1288 606h2v2h-2zM1015 629h2v2h-2zM1019 631h2v2h-2zM972 639h2v2h-2zM850 650h2v2h-2zM857 653h2v2h-2z"/>
<path fill="#9c9c9c" d="M1376 345h2v2h-2zM1445 345h2v2h-2zM1492 347h2v2h-2zM1364 349h2v2h-2zM1449 350h2v2h-2zM1442 351h2v2h-2zM1541 353h2v2h-2zM1445 355h2v2h-2zM1470 357h2v2h-2zM1352 358h2v2h-2zM1455 361h2v2h-2zM1397 362h2v2h-2zM1513 362h2v2h-2zM1528 362h2v2h-2zM1523 365h2v2h-2zM1503 366h2v2h-2zM1462 368h2v2h-2zM1515 368h2v2h-2zM1353 370h2v2h-2zM1449 370h2v2h-2zM1493 370h2v2h-2zM1479 372h2v2h-2zM1430 373h2v2h-2zM1468 375h2v2h-2zM1515 375h2v2h-2zM1543 377h2v2h-2zM1480 378h2v2h-2zM1545 381h2v2h-2zM1517 387h2v2h-2zM1355 389h2v2h-2zM1433 392h2v2h-2zM1504 394h2v2h-2zM1469 395h2v2h-2zM1517 402h2v2h-2zM1372 410h2v2h-2zM1532 410h2v2h-2zM1296 411h2v2h-2zM1259 412h2v2h-2zM1552 412h2v2h-2zM1533 418h2v2h-2zM1321 419h2v2h-2zM1327 420h2v2h-2zM1548 422h2v2h-2zM1521 427h2v2h-2zM1341 433h2v2h-2zM1280 440h2v2h-2zM1533 446h2v2h-2zM1277 451h2v2h-2zM607 483h2v2h-2zM1543 490h2v2h-2zM614 493h2v2h-2zM621 493h2v2h-2zM613 506h2v2h-2zM1542 514h2v2h-2zM595 518h2v2h-2zM1543 544h2v2h-2zM1534 593h2v2h-2zM1534 599h2v2h-2zM1283 606h2v2h-2zM1301 609h2v2h-2zM1327 615h2v2h-2zM1335 616h2v2h-2zM1337 618h2v2h-2zM1353 618h2v2h-2zM1369 624h2v2h-2zM1013 632h2v2h-2zM977 639h2v2h-2zM971 643h2v2h-2zM918 649h2v2h-2zM874 652h2v2h-2zM856 653h2v2h-2z"/>
<path fill="#b4b4b4" d="M1522 347h2v2h-2zM1506 362h2v2h-2zM1536 362h2v2h-2zM1552 369h2v2h-2zM1546 370h2v2h-2zM1319 375h2v2h-2zM1329 375h2v2h-2zM1491 375h2v2h-2zM1502 375h2v2h-2zM1307 376h2v2h-2zM1527 378h2v2h-2zM1269 379h2v2h-2zM1519 383h2v2h-2zM1551 385h2v2h-2zM1225 387h2v2h-2zM1240 387h2v2h-2zM1313 387h2v2h-2zM1526 390h2v2h-2zM1220 391h2v2h-2zM1260 391h2v2h-2zM1269 391h2v2h-2zM1288 392h2v2h-2zM1512 392h2v2h-2zM1256 394h2v2h-2zM1531 397h2v2h-2zM1524 399h2v2h-2zM1297 402h2v2h-2zM1226 403h2v2h-2zM1284 452h2v2h-2zM615 487h2v2h-2zM648 493h2v2h-2zM628 494h2v2h-2zM603 500h2v2h-2zM646 504h2v2h-2zM1256 517h2v2h-2zM601 520h2v2h-2zM1260 520h2v2h-2zM597 524h2v2h-2zM1245 605h2v2h-2zM1249 605h2v2h-2zM1252 605h2v2h-2zM1267 606h2v2h-2zM1183 608h2v2h-2zM1288 608h2v2h-2zM1139 612h2v2h-2zM1313 613h2v2h-2zM1314 613h2v2h-2zM1350 618h2v2h-2zM1369 622h2v2h-2zM1005 631h2v2h-2zM1006 634h2v2h-2zM957 643h2v2h-2zM935 645h2v2h-2zM908 649h2v2h-2zM892 650h2v2h-2zM862 651h2v2h-2zM889 652h2v2h-2zM874 653h2v2h-2z"/>
<path fill="#d8d8d8" d="M1308 353h2v2h-2zM1321 361h2v2h-2zM1319 369h2v2h-2zM1326 370h2v2h-2zM1316 374h2v2h-2zM1278 378h2v2h-2zM1327 378h2v2h-2zM1302 380h2v2h-2zM1240 383h2v2h-2zM1329 386h2v2h-2zM1231 389h2v2h-2zM1277 389h2v2h-2zM1306 392h2v2h-2zM1293 397h2v2h-2zM1287 398h2v2h-2zM1215 399h2v2h-2zM1262 403h2v2h-2zM625 483h2v2h-2zM612 499h2v2h-2zM642 502h2v2h-2zM625 505h2v2h-2zM618 506h2v2h-2zM1240 514h2v2h-2zM1457 532h2v2h-2zM1254 534h2v2h-2zM1469 534h2v2h-2z"/>
<path fill="#cccccc" d="M1323 356h2v2h-2zM1307 364h2v2h-2zM1291 376h2v2h-2zM1262 379h2v2h-2zM1309 379h2v2h-2zM1316 380h2v2h-2zM1233 383h2v2h-2zM1309 385h2v2h-2zM1264 388h2v2h-2zM1324 391h2v2h-2zM1246 397h2v2h-2zM1259 398h2v2h-2zM1307 400h2v2h-2zM1291 448h2v2h-2zM634 487h2v2h-2zM627 490h2v2h-2zM627 502h2v2h-2zM598 507h2v2h-2zM1230 508h2v2h-2zM1249 528h2v2h-2zM1252 529h2v2h-2zM1465 530h2v2h-2zM1464 533h2v2h-2zM1470 533h2v2h-2zM1414 534h2v2h-2zM1465 534h2v2h-2z"/>
<path fill="#a8a8a8" d="M1476 348h2v2h-2zM1454 349h2v2h-2zM1546 356h2v2h-2zM1527 357h2v2h-2zM1351 360h2v2h-2zM1483 362h2v2h-2zM1524 362h2v2h-2zM1450 363h2v2h-2zM1335 364h2v2h-2zM1488 365h2v2h-2zM1527 365h2v2h-2zM1540 366h2v2h-2zM1361 370h2v2h-2zM1468 371h2v2h-2zM1535 371h2v2h-2zM1501 372h2v2h-2zM1383 373h2v2h-2zM1347 374h2v2h-2zM1487 377h2v2h-2zM1396 378h2v2h-2zM1487 379h2v2h-2zM1535 380h2v2h-2zM1504 383h2v2h-2zM1400 384h2v2h-2zM1508 384h2v2h-2zM1481 385h2v2h-2zM1491 386h2v2h-2zM1528 387h2v2h-2zM1520 391h2v2h-2zM1517 395h2v2h-2zM1353 403h2v2h-2zM1389 407h2v2h-2zM1350 408h2v2h-2zM1323 409h2v2h-2zM1341 410h2v2h-2zM1277 412h2v2h-2zM1279 413h2v2h-2zM1377 413h2v2h-2zM1311 422h2v2h-2zM1303 430h2v2h-2zM1275 436h2v2h-2zM1253 440h2v2h-2zM1303 444h2v2h-2zM640 483h2v2h-2zM612 489h2v2h-2zM637 489h2v2h-2zM599 490h2v2h-2zM608 496h2v2h-2zM597 501h2v2h-2zM1231 504h2v2h-2zM640 507h2v2h-2zM1229 515h2v2h-2zM1242 519h2v2h-2zM1243 519h2v2h-2zM1209 604h2v2h-2zM1243 604h2v2h-2zM1282 606h2v2h-2zM1174 607h2v2h-2zM1178 607h2v2h-2zM1167 608h2v2h-2zM1171 610h2v2h-2zM1154 612h2v2h-2zM1336 616h2v2h-2zM1360 621h2v2h-2zM1016 629h2v2h-2zM1020 629h2v2h-2zM995 635h2v2h-2zM979 639h2v2h-2zM953 643h2v2h-2zM958 644h2v2h-2zM923 645h2v2h-2zM961 645h2v2h-2zM923 646h2v2h-2zM923 647h2v2h-2zM883 648h2v2h-2zM926 649h2v2h-2zM867 652h2v2h-2z"/>
<path fill="#909090" d="M1448 342h2v2h-2zM1419 345h2v2h-2zM1436 345h2v2h-2zM1380 346h2v2h-2zM1481 347h2v2h-2zM1371 348h2v2h-2zM1517 349h2v2h-2zM1545 353h2v2h-2zM1362 354h2v2h-2zM1482 355h2v2h-2zM1491 355h2v2h-2zM1456 356h2v2h-2zM1426 359h2v2h-2zM1499 360h2v2h-2zM1414 362h2v2h-2zM1466 362h2v2h-2zM1487 363h2v2h-2zM1494 363h2v2h-2zM1344 364h2v2h-2zM1391 365h2v2h-2zM1510 365h2v2h-2zM1473 366h2v2h-2zM1444 370h2v2h-2zM1418 372h2v2h-2zM1491 372h2v2h-2zM1410 373h2v2h-2zM1520 375h2v2h-2zM1403 376h2v2h-2zM1456 376h2v2h-2zM1498 376h2v2h-2zM1534 377h2v2h-2zM1538 378h2v2h-2zM1386 380h2v2h-2zM1494 380h2v2h-2zM1454 382h2v2h-2zM1459 382h2v2h-2zM1440 386h2v2h-2zM1467 386h2v2h-2zM1444 388h2v2h-2zM1486 388h2v2h-2zM1522 388h2v2h-2zM1545 390h2v2h-2zM1552 390h2v2h-2zM1366 393h2v2h-2zM1519 394h2v2h-2zM1410 396h2v2h-2zM1334 398h2v2h-2zM1259 401h2v2h-2zM1513 402h2v2h-2zM1535 402h2v2h-2zM1542 402h2v2h-2zM1477 403h2v2h-2zM1401 406h2v2h-2zM1538 406h2v2h-2zM1506 408h2v2h-2zM1545 408h2v2h-2zM1355 410h2v2h-2zM1543 410h2v2h-2zM1548 410h2v2h-2zM1345 412h2v2h-2zM1505 412h2v2h-2zM1501 413h2v2h-2zM1517 413h2v2h-2zM1292 414h2v2h-2zM1330 414h2v2h-2zM1509 415h2v2h-2zM1517 415h2v2h-2zM1520 416h2v2h-2zM1483 420h2v2h-2zM1552 425h2v2h-2zM1463 426h2v2h-2zM1483 428h2v2h-2zM1545 430h2v2h-2zM1508 431h2v2h-2zM1535 433h2v2h-2zM1507 439h2v2h-2zM1536 443h2v2h-2zM1540 444h2v2h-2zM1518 450h2v2h-2zM1535 451h2v2h-2zM1515 456h2v2h-2zM1531 458h2v2h-2zM1542 460h2v2h-2zM1530 461h2v2h-2zM1540 464h2v2h-2zM1498 468h2v2h-2zM1544 469h2v2h-2zM1510 483h2v2h-2zM1506 485h2v2h-2zM1508 488h2v2h-2zM1536 493h2v2h-2zM1547 494h2v2h-2zM1515 496h2v2h-2zM1543 498h2v2h-2zM1537 502h2v2h-2zM1520 509h2v2h-2zM1525 510h2v2h-2zM599 515h2v2h-2zM601 521h2v2h-2zM1539 527h2v2h-2zM1513 530h2v2h-2zM1509 537h2v2h-2zM1519 540h2v2h-2zM1537 543h2v2h-2zM1522 547h2v2h-2zM1529 555h2v2h-2zM1539 557h2v2h-2zM1520 558h2v2h-2zM1539 577h2v2h-2zM1510 578h2v2h-2zM1522 580h2v2h-2zM1510 582h2v2h-2zM1532 587h2v2h-2zM1526 591h2v2h-2zM1513 594h2v2h-2zM1523 595h2v2h-2zM1228 604h2v2h-2zM1222 605h2v2h-2zM1292 605h2v2h-2zM1212 606h2v2h-2zM1235 606h2v2h-2zM1245 606h2v2h-2zM1216 607h2v2h-2zM1235 607h2v2h-2zM1303 610h2v2h-2zM1323 612h2v2h-2zM1150 613h2v2h-2zM1332 616h2v2h-2zM1343 617h2v2h-2zM1355 619h2v2h-2zM1355 621h2v2h-2zM1388 625h2v2h-2zM1022 626h2v2h-2zM1385 627h2v2h-2zM1015 628h2v2h-2zM989 634h2v2h-2zM1004 636h2v2h-2zM976 639h2v2h-2zM967 640h2v2h-2zM911 647h2v2h-2zM914 650h2v2h-2z"/>
<path fill="#3cc024" d="M713 540h2v2h-2zM714 546h2v2h-2zM698 548h2v2h-2z"/>
<path fill="#24600c" d="M800 529h2v2h-2zM790 534h2v2h-2zM779 541h2v2h-2zM610 546h2v2h-2zM682 546h2v2h-2zM626 547h2v2h-2zM643 548h2v2h-2zM708 548h2v2h-2zM617 549h2v2h-2zM668 549h2v2h-2zM713 549h2v2h-2zM699 550h2v2h-2zM599 551h2v2h-2zM620 551h2v2h-2zM706 551h2v2h-2zM688 552h2v2h-2zM733 552h2v2h-2zM595 554h2v2h-2zM603 554h2v2h-2zM715 653h2v2h-2zM742 655h2v2h-2zM701 658h2v2h-2zM754 658h2v2h-2zM686 659h2v2h-2zM732 661h2v2h-2zM733 662h2v2h-2zM760 662h2v2h-2zM684 663h2v2h-2zM730 663h2v2h-2zM745 663h2v2h-2zM722 664h2v2h-2zM679 666h2v2h-2zM680 668h2v2h-2zM670 669h2v2h-2zM701 670h2v2h-2zM688 671h2v2h-2zM680 673h2v2h-2zM631 679h2v2h-2zM660 679h2v2h-2zM642 680h2v2h-2zM658 680h2v2h-2zM638 682h2v2h-2zM627 685h2v2h-2z"/>
<path fill="#18540c" d="M747 543h2v2h-2zM730 545h2v2h-2z"/>
<path fill="#246c0c" d="M768 535h2v2h-2zM759 538h2v2h-2zM754 539h2v2h-2zM739 540h2v2h-2zM765 540h2v2h-2zM732 542h2v2h-2zM720 651h2v2h-2zM744 652h2v2h-2zM676 659h2v2h-2zM738 659h2v2h-2zM739 662h2v2h-2zM696 666h2v2h-2zM663 668h2v2h-2zM626 671h2v2h-2zM649 671h2v2h-2zM677 671h2v2h-2zM628 674h2v2h-2zM604 675h2v2h-2zM621 680h2v2h-2z"/>
<path fill="#309c18" d="M769 540h2v2h-2zM758 542h2v2h-2zM697 544h2v2h-2zM715 545h2v2h-2zM621 546h2v2h-2zM624 548h2v2h-2zM602 551h2v2h-2zM707 552h2v2h-2z"/>
<path fill="#54780c" d="M1162 391h2v2h-2zM1001 405h2v2h-2zM1306 409h2v2h-2zM1010 410h2v2h-2zM1021 413h2v2h-2zM1274 414h2v2h-2zM998 418h2v2h-2zM1292 421h2v2h-2zM1084 423h2v2h-2zM1002 424h2v2h-2zM1113 426h2v2h-2zM1208 430h2v2h-2zM1242 430h2v2h-2zM1244 431h2v2h-2zM1190 437h2v2h-2zM1270 440h2v2h-2zM986 441h2v2h-2zM1262 441h2v2h-2zM832 471h2v2h-2zM778 518h2v2h-2zM796 523h2v2h-2zM787 530h2v2h-2zM777 536h2v2h-2zM728 543h2v2h-2zM753 544h2v2h-2zM866 567h2v2h-2zM875 568h2v2h-2zM852 569h2v2h-2zM870 569h2v2h-2zM882 569h2v2h-2zM862 573h2v2h-2zM871 574h2v2h-2zM881 574h2v2h-2zM890 574h2v2h-2zM867 575h2v2h-2zM862 578h2v2h-2zM874 579h2v2h-2zM871 586h2v2h-2zM869 587h2v2h-2zM878 587h2v2h-2zM758 632h2v2h-2zM759 667h2v2h-2zM757 669h2v2h-2z"/>
<path fill="#30540c" d="M1059 389h2v2h-2zM1094 394h2v2h-2zM1159 404h2v2h-2zM1049 411h2v2h-2zM1100 413h2v2h-2zM1098 414h2v2h-2zM1255 414h2v2h-2zM1268 415h2v2h-2zM1089 418h2v2h-2zM1162 419h2v2h-2zM1286 419h2v2h-2zM1198 420h2v2h-2zM1316 422h2v2h-2zM1257 423h2v2h-2zM1058 424h2v2h-2zM1255 424h2v2h-2zM1268 424h2v2h-2zM1144 425h2v2h-2zM1267 425h2v2h-2zM1290 428h2v2h-2zM1317 434h2v2h-2zM750 538h2v2h-2zM769 538h2v2h-2zM770 538h2v2h-2zM751 550h2v2h-2zM737 551h2v2h-2zM835 611h2v2h-2zM856 611h2v2h-2zM862 615h2v2h-2zM849 617h2v2h-2zM828 622h2v2h-2zM826 627h2v2h-2zM843 627h2v2h-2zM815 634h2v2h-2zM817 638h2v2h-2zM812 639h2v2h-2zM794 642h2v2h-2zM808 642h2v2h-2zM814 643h2v2h-2z"/>
<path fill="#48c024" d="M600 541h2v2h-2zM625 543h2v2h-2zM643 544h2v2h-2zM687 544h2v2h-2zM603 545h2v2h-2zM711 547h2v2h-2zM711 548h2v2h-2zM646 550h2v2h-2zM675 550h2v2h-2zM696 550h2v2h-2zM636 553h2v2h-2z"/>
<path fill="#3c9c18" d="M785 529h2v2h-2zM777 539h2v2h-2zM741 541h2v2h-2zM603 542h2v2h-2zM755 543h2v2h-2zM742 544h2v2h-2zM703 548h2v2h-2zM654 549h2v2h-2zM691 549h2v2h-2zM707 550h2v2h-2zM646 553h2v2h-2zM625 555h2v2h-2zM732 615h2v2h-2zM749 615h2v2h-2zM721 620h2v2h-2zM737 626h2v2h-2zM693 627h2v2h-2zM748 627h2v2h-2zM714 632h2v2h-2zM733 632h2v2h-2zM701 633h2v2h-2zM749 637h2v2h-2zM680 638h2v2h-2zM633 639h2v2h-2zM676 639h2v2h-2zM699 639h2v2h-2zM699 641h2v2h-2zM725 641h2v2h-2zM640 642h2v2h-2zM604 644h2v2h-2zM670 644h2v2h-2zM614 647h2v2h-2zM661 647h2v2h-2zM676 647h2v2h-2zM644 649h2v2h-2zM602 650h2v2h-2zM603 651h2v2h-2zM667 652h2v2h-2zM617 654h2v2h-2zM594 657h2v2h-2zM606 659h2v2h-2zM620 660h2v2h-2zM627 660h2v2h-2z"/>
<path fill="#308418" d="M760 534h2v2h-2zM768 540h2v2h-2zM721 544h2v2h-2zM597 545h2v2h-2zM679 546h2v2h-2zM708 546h2v2h-2zM650 547h2v2h-2zM643 549h2v2h-2zM657 549h2v2h-2zM665 549h2v2h-2zM720 549h2v2h-2zM724 549h2v2h-2zM673 551h2v2h-2zM693 553h2v2h-2zM710 553h2v2h-2z"/>
<path fill="#3ca818" d="M655 546h2v2h-2zM695 553h2v2h-2zM734 611h2v2h-2zM691 615h2v2h-2zM709 622h2v2h-2zM660 623h2v2h-2zM678 623h2v2h-2zM674 627h2v2h-2zM651 628h2v2h-2zM724 628h2v2h-2zM669 638h2v2h-2zM635 639h2v2h-2zM636 643h2v2h-2zM626 644h2v2h-2zM632 651h2v2h-2zM642 651h2v2h-2zM599 653h2v2h-2z"/>
<path fill="#3ca824" d="M717 544h2v2h-2zM640 546h2v2h-2zM612 547h2v2h-2zM661 551h2v2h-2zM664 551h2v2h-2zM592 553h2v2h-2z"/>
<path fill="#246c18" d="M594 537h2v2h-2zM681 540h2v2h-2zM673 544h2v2h-2zM594 545h2v2h-2zM637 548h2v2h-2zM601 549h2v2h-2zM650 549h2v2h-2zM683 550h2v2h-2zM719 550h2v2h-2zM596 551h2v2h-2zM713 551h2v2h-2zM676 557h2v2h-2z"/>
<path fill="#48780c" d="M1092 397h2v2h-2zM1294 401h2v2h-2zM1165 405h2v2h-2zM1314 408h2v2h-2zM1027 412h2v2h-2zM1160 413h2v2h-2zM1243 413h2v2h-2zM1034 420h2v2h-2zM1026 422h2v2h-2zM1088 422h2v2h-2zM1240 422h2v2h-2zM1017 423h2v2h-2zM1075 431h2v2h-2zM1215 431h2v2h-2zM1328 434h2v2h-2zM1113 435h2v2h-2zM1234 441h2v2h-2zM1174 447h2v2h-2zM1235 448h2v2h-2zM1287 451h2v2h-2zM802 494h2v2h-2zM805 516h2v2h-2zM752 518h2v2h-2zM798 528h2v2h-2zM768 532h2v2h-2zM763 535h2v2h-2zM745 545h2v2h-2zM770 548h2v2h-2zM829 569h2v2h-2zM850 571h2v2h-2zM830 572h2v2h-2zM821 576h2v2h-2zM854 577h2v2h-2zM828 578h2v2h-2zM839 578h2v2h-2zM834 580h2v2h-2zM860 594h2v2h-2zM817 596h2v2h-2zM831 597h2v2h-2zM826 602h2v2h-2zM820 611h2v2h-2zM809 612h2v2h-2zM733 670h2v2h-2zM724 677h2v2h-2zM732 678h2v2h-2zM708 685h2v2h-2z"/>
<path fill="#24540c" d="M771 533h2v2h-2zM729 539h2v2h-2zM765 543h2v2h-2zM740 545h2v2h-2zM760 545h2v2h-2zM723 547h2v2h-2zM726 551h2v2h-2zM725 552h2v2h-2zM726 552h2v2h-2zM782 648h2v2h-2zM787 648h2v2h-2zM778 652h2v2h-2zM783 652h2v2h-2zM769 654h2v2h-2zM745 658h2v2h-2zM762 659h2v2h-2zM769 659h2v2h-2zM773 660h2v2h-2zM716 664h2v2h-2zM694 668h2v2h-2zM711 668h2v2h-2zM722 669h2v2h-2zM720 671h2v2h-2zM738 671h2v2h-2zM708 672h2v2h-2zM703 673h2v2h-2zM728 673h2v2h-2zM665 674h2v2h-2zM670 674h2v2h-2zM741 674h2v2h-2zM695 675h2v2h-2zM635 677h2v2h-2zM682 677h2v2h-2zM686 678h2v2h-2zM651 679h2v2h-2zM697 679h2v2h-2zM634 684h2v2h-2zM618 685h2v2h-2zM623 687h2v2h-2zM640 688h2v2h-2zM636 692h2v2h-2z"/>
<path fill="#3c540c" d="M1093 391h2v2h-2zM1103 396h2v2h-2zM1266 406h2v2h-2zM1055 408h2v2h-2zM1185 412h2v2h-2zM1038 413h2v2h-2zM1089 413h2v2h-2zM986 421h2v2h-2zM1143 425h2v2h-2zM1017 427h2v2h-2zM1030 427h2v2h-2zM1246 429h2v2h-2zM1184 431h2v2h-2zM1336 431h2v2h-2zM1265 433h2v2h-2zM1277 437h2v2h-2zM1185 439h2v2h-2zM1237 440h2v2h-2zM982 442h2v2h-2zM1257 442h2v2h-2zM848 509h2v2h-2zM781 543h2v2h-2zM884 594h2v2h-2zM876 599h2v2h-2zM878 604h2v2h-2zM867 606h2v2h-2zM874 606h2v2h-2zM874 609h2v2h-2zM844 616h2v2h-2zM801 628h2v2h-2zM808 636h2v2h-2zM771 652h2v2h-2zM787 657h2v2h-2zM765 662h2v2h-2z"/>
<path fill="#60900c" d="M1129 385h2v2h-2zM1169 394h2v2h-2zM1191 399h2v2h-2zM1123 401h2v2h-2zM1187 415h2v2h-2zM1062 419h2v2h-2zM1139 419h2v2h-2zM1127 422h2v2h-2zM1265 422h2v2h-2zM1122 425h2v2h-2zM1257 426h2v2h-2zM1258 431h2v2h-2zM1269 433h2v2h-2zM1120 435h2v2h-2zM1250 437h2v2h-2zM1141 438h2v2h-2zM1311 439h2v2h-2zM1225 444h2v2h-2zM1271 452h2v2h-2zM780 533h2v2h-2z"/>
<path fill="#30480c" d="M1302 411h2v2h-2zM1314 414h2v2h-2zM1265 417h2v2h-2zM1329 422h2v2h-2zM1305 433h2v2h-2zM786 531h2v2h-2zM749 538h2v2h-2zM724 548h2v2h-2zM862 612h2v2h-2zM853 617h2v2h-2zM840 621h2v2h-2zM843 622h2v2h-2zM834 628h2v2h-2z"/>
<path fill="#243cd8" d="M692 545h2v2h-2zM644 546h2v2h-2z"/>
<path fill="#489018" d="M1165 416h2v2h-2zM991 428h2v2h-2zM1300 440h2v2h-2zM1247 444h2v2h-2zM1268 446h2v2h-2zM851 466h2v2h-2zM860 466h2v2h-2zM841 478h2v2h-2zM810 485h2v2h-2zM783 501h2v2h-2zM777 503h2v2h-2zM800 532h2v2h-2zM762 536h2v2h-2zM741 543h2v2h-2zM748 547h2v2h-2z"/>
<path fill="#307818" d="M602 539h2v2h-2zM713 542h2v2h-2zM631 544h2v2h-2zM677 549h2v2h-2zM604 551h2v2h-2zM592 557h2v2h-2z"/>
<path fill="#246018" d="M695 544h2v2h-2zM622 546h2v2h-2zM694 552h2v2h-2z"/>
<path fill="#3cb424" d="M594 539h2v2h-2zM645 547h2v2h-2zM659 547h2v2h-2zM609 548h2v2h-2zM660 549h2v2h-2zM682 551h2v2h-2zM683 551h2v2h-2zM675 552h2v2h-2z"/>
<path fill="#486c0c" d="M1134 388h2v2h-2zM1076 391h2v2h-2zM1036 398h2v2h-2zM1289 401h2v2h-2zM1066 403h2v2h-2zM1091 408h2v2h-2zM1160 410h2v2h-2zM1278 413h2v2h-2zM1343 413h2v2h-2zM1053 414h2v2h-2zM1185 415h2v2h-2zM1209 416h2v2h-2zM1342 416h2v2h-2zM1297 417h2v2h-2zM1341 419h2v2h-2zM992 421h2v2h-2zM1089 422h2v2h-2zM1238 425h2v2h-2zM1307 425h2v2h-2zM1138 428h2v2h-2zM1200 428h2v2h-2zM1235 434h2v2h-2zM1266 437h2v2h-2zM1296 439h2v2h-2zM1333 439h2v2h-2zM1275 440h2v2h-2zM1107 444h2v2h-2zM1258 446h2v2h-2zM818 489h2v2h-2zM840 497h2v2h-2zM770 509h2v2h-2zM757 542h2v2h-2zM746 545h2v2h-2zM860 566h2v2h-2zM845 568h2v2h-2zM842 572h2v2h-2zM870 578h2v2h-2zM846 580h2v2h-2zM859 584h2v2h-2zM855 585h2v2h-2zM834 587h2v2h-2zM851 588h2v2h-2zM863 590h2v2h-2zM856 593h2v2h-2zM847 596h2v2h-2zM874 596h2v2h-2zM833 597h2v2h-2zM853 598h2v2h-2zM858 601h2v2h-2zM850 602h2v2h-2zM836 603h2v2h-2zM846 607h2v2h-2zM849 608h2v2h-2zM846 609h2v2h-2zM879 610h2v2h-2zM805 622h2v2h-2zM785 634h2v2h-2zM732 672h2v2h-2zM742 677h2v2h-2zM728 679h2v2h-2zM724 682h2v2h-2zM717 683h2v2h-2z"/>
<path fill="#309018" d="M590 542h2v2h-2zM647 545h2v2h-2zM736 545h2v2h-2zM596 546h2v2h-2zM614 546h2v2h-2zM661 546h2v2h-2zM717 546h2v2h-2zM735 546h2v2h-2zM603 547h2v2h-2zM636 550h2v2h-2zM617 551h2v2h-2zM631 552h2v2h-2z"/>
<path fill="#48840c" d="M1147 394h2v2h-2zM1198 403h2v2h-2zM1081 407h2v2h-2zM1101 412h2v2h-2zM1168 413h2v2h-2zM1005 422h2v2h-2zM1046 422h2v2h-2zM1149 426h2v2h-2zM1173 434h2v2h-2zM1092 438h2v2h-2zM1035 444h2v2h-2zM1015 445h2v2h-2zM1171 445h2v2h-2zM842 492h2v2h-2zM786 536h2v2h-2zM780 540h2v2h-2zM750 543h2v2h-2zM821 568h2v2h-2zM834 573h2v2h-2zM826 585h2v2h-2zM794 601h2v2h-2zM824 604h2v2h-2zM819 606h2v2h-2zM807 613h2v2h-2zM814 613h2v2h-2zM800 622h2v2h-2zM791 627h2v2h-2z"/>
<path fill="#1830c0" d="M662 544h2v2h-2z"/>
<path fill="#247818" d="M609 546h2v2h-2zM688 547h2v2h-2zM623 548h2v2h-2zM683 548h2v2h-2zM599 550h2v2h-2zM668 551h2v2h-2zM714 551h2v2h-2z"/>
<path fill="#549018" d="M1115 385h2v2h-2zM1015 392h2v2h-2zM1135 392h2v2h-2zM1033 405h2v2h-2zM1036 409h2v2h-2zM1111 414h2v2h-2zM1247 415h2v2h-2zM1272 422h2v2h-2zM1334 425h2v2h-2zM1239 430h2v2h-2zM1145 434h2v2h-2zM1169 434h2v2h-2zM1311 434h2v2h-2zM855 489h2v2h-2zM831 501h2v2h-2zM840 504h2v2h-2zM782 513h2v2h-2zM784 535h2v2h-2zM721 546h2v2h-2zM723 680h2v2h-2z"/>
<path fill="#54900c" d="M1095 398h2v2h-2zM1230 431h2v2h-2zM1252 442h2v2h-2zM781 537h2v2h-2zM813 571h2v2h-2zM818 574h2v2h-2zM810 580h2v2h-2zM829 586h2v2h-2zM826 587h2v2h-2zM810 590h2v2h-2zM822 595h2v2h-2zM814 598h2v2h-2zM819 600h2v2h-2z"/>
<path fill="#30780c" d="M753 540h2v2h-2zM734 547h2v2h-2zM726 639h2v2h-2zM766 639h2v2h-2zM766 641h2v2h-2zM760 642h2v2h-2zM722 644h2v2h-2zM706 647h2v2h-2zM766 648h2v2h-2zM699 649h2v2h-2zM729 649h2v2h-2zM736 651h2v2h-2zM753 651h2v2h-2zM660 653h2v2h-2zM711 654h2v2h-2zM727 654h2v2h-2zM652 655h2v2h-2zM658 656h2v2h-2zM725 657h2v2h-2zM663 658h2v2h-2zM708 660h2v2h-2zM668 661h2v2h-2zM664 662h2v2h-2zM609 663h2v2h-2zM628 663h2v2h-2zM670 664h2v2h-2zM661 666h2v2h-2zM644 668h2v2h-2zM655 668h2v2h-2zM639 669h2v2h-2zM615 670h2v2h-2zM619 671h2v2h-2zM621 673h2v2h-2zM652 674h2v2h-2zM618 676h2v2h-2zM641 676h2v2h-2zM624 681h2v2h-2z"/>
<path fill="#60840c" d="M1225 406h2v2h-2zM1045 409h2v2h-2zM1056 409h2v2h-2zM1143 412h2v2h-2zM1025 414h2v2h-2zM1068 414h2v2h-2zM1266 414h2v2h-2zM1026 416h2v2h-2zM1008 417h2v2h-2zM992 423h2v2h-2zM1040 423h2v2h-2zM1161 431h2v2h-2zM1111 432h2v2h-2zM1145 437h2v2h-2zM1256 437h2v2h-2zM1016 438h2v2h-2zM1028 439h2v2h-2zM1341 439h2v2h-2zM855 479h2v2h-2zM794 501h2v2h-2zM800 506h2v2h-2zM777 522h2v2h-2zM763 543h2v2h-2zM726 547h2v2h-2zM823 551h2v2h-2zM887 568h2v2h-2zM898 572h2v2h-2zM883 574h2v2h-2zM899 577h2v2h-2zM884 578h2v2h-2zM888 579h2v2h-2zM869 582h2v2h-2zM791 649h2v2h-2zM781 655h2v2h-2z"/>
<path fill="#3c780c" d="M1152 388h2v2h-2zM1053 390h2v2h-2zM1055 391h2v2h-2zM1295 404h2v2h-2zM1038 405h2v2h-2zM1103 411h2v2h-2zM1122 412h2v2h-2zM1172 412h2v2h-2zM1107 418h2v2h-2zM1157 419h2v2h-2zM1090 422h2v2h-2zM1225 424h2v2h-2zM1298 424h2v2h-2zM1138 430h2v2h-2zM1084 434h2v2h-2zM1083 438h2v2h-2zM1059 440h2v2h-2zM947 449h2v2h-2zM817 484h2v2h-2zM779 537h2v2h-2zM729 549h2v2h-2zM803 607h2v2h-2zM797 610h2v2h-2zM798 615h2v2h-2zM792 616h2v2h-2zM818 616h2v2h-2zM798 620h2v2h-2zM789 621h2v2h-2zM770 626h2v2h-2zM787 631h2v2h-2zM769 633h2v2h-2zM795 634h2v2h-2zM773 637h2v2h-2zM769 643h2v2h-2z"/>
<path fill="#54840c" d="M1067 395h2v2h-2zM1106 395h2v2h-2zM1045 400h2v2h-2zM1281 403h2v2h-2zM1078 404h2v2h-2zM1278 406h2v2h-2zM1039 409h2v2h-2zM1138 411h2v2h-2zM1160 415h2v2h-2zM1023 417h2v2h-2zM1234 417h2v2h-2zM1119 418h2v2h-2zM1151 421h2v2h-2zM1204 426h2v2h-2zM1175 429h2v2h-2zM1274 434h2v2h-2zM1104 437h2v2h-2zM1326 443h2v2h-2zM1134 447h2v2h-2zM830 493h2v2h-2zM834 503h2v2h-2zM798 505h2v2h-2zM814 510h2v2h-2zM811 513h2v2h-2zM780 530h2v2h-2zM770 531h2v2h-2zM761 540h2v2h-2zM856 574h2v2h-2zM860 580h2v2h-2zM843 584h2v2h-2zM846 589h2v2h-2zM840 590h2v2h-2z"/>
<path fill="#30600c" d="M1029 400h2v2h-2zM1084 402h2v2h-2zM1264 413h2v2h-2zM1071 414h2v2h-2zM1258 420h2v2h-2zM1305 420h2v2h-2zM1215 423h2v2h-2zM1259 423h2v2h-2zM1019 424h2v2h-2zM1058 426h2v2h-2zM1300 428h2v2h-2zM1296 431h2v2h-2zM1073 434h2v2h-2zM1230 441h2v2h-2zM1268 450h2v2h-2zM749 540h2v2h-2zM725 544h2v2h-2zM729 546h2v2h-2zM754 546h2v2h-2zM816 623h2v2h-2zM805 625h2v2h-2zM801 626h2v2h-2zM819 630h2v2h-2zM801 633h2v2h-2zM801 635h2v2h-2zM806 636h2v2h-2zM792 637h2v2h-2zM784 641h2v2h-2zM776 645h2v2h-2zM775 647h2v2h-2zM763 651h2v2h-2zM782 657h2v2h-2z"/>
<path fill="#48600c" d="M1038 399h2v2h-2zM1276 409h2v2h-2zM1143 413h2v2h-2zM1105 415h2v2h-2zM1245 426h2v2h-2zM1003 428h2v2h-2zM1073 443h2v2h-2zM854 463h2v2h-2zM846 484h2v2h-2zM855 486h2v2h-2zM843 500h2v2h-2zM794 502h2v2h-2zM817 508h2v2h-2zM807 509h2v2h-2zM791 511h2v2h-2zM785 521h2v2h-2zM760 530h2v2h-2zM771 541h2v2h-2zM759 549h2v2h-2zM887 583h2v2h-2zM881 585h2v2h-2zM882 588h2v2h-2zM896 590h2v2h-2zM859 591h2v2h-2zM881 593h2v2h-2zM884 598h2v2h-2zM863 600h2v2h-2zM868 600h2v2h-2zM871 605h2v2h-2zM809 608h2v2h-2zM848 609h2v2h-2zM799 613h2v2h-2zM835 619h2v2h-2zM822 632h2v2h-2zM786 643h2v2h-2zM788 643h2v2h-2zM762 646h2v2h-2zM788 647h2v2h-2zM788 648h2v2h-2zM758 659h2v2h-2zM774 659h2v2h-2zM760 665h2v2h-2zM760 667h2v2h-2zM759 668h2v2h-2zM736 671h2v2h-2zM741 671h2v2h-2zM738 674h2v2h-2z"/>
<path fill="#1830cc" d="M699 546h2v2h-2z"/>
<path fill="#3c600c" d="M1046 386h2v2h-2zM1135 388h2v2h-2zM1068 392h2v2h-2zM1059 397h2v2h-2zM1063 397h2v2h-2zM1129 403h2v2h-2zM1073 404h2v2h-2zM1107 408h2v2h-2zM1249 409h2v2h-2zM1314 413h2v2h-2zM1195 419h2v2h-2zM1273 421h2v2h-2zM1273 422h2v2h-2zM1302 422h2v2h-2zM1318 422h2v2h-2zM1278 423h2v2h-2zM1311 426h2v2h-2zM1321 426h2v2h-2zM1259 428h2v2h-2zM1080 430h2v2h-2zM1335 432h2v2h-2zM1024 433h2v2h-2zM1322 433h2v2h-2zM1291 435h2v2h-2zM1211 444h2v2h-2zM1101 448h2v2h-2zM787 533h2v2h-2zM763 538h2v2h-2zM877 587h2v2h-2zM844 595h2v2h-2zM847 598h2v2h-2zM840 600h2v2h-2zM853 603h2v2h-2zM828 604h2v2h-2zM843 604h2v2h-2zM856 604h2v2h-2zM828 611h2v2h-2zM841 611h2v2h-2zM834 615h2v2h-2zM832 621h2v2h-2zM829 625h2v2h-2zM854 625h2v2h-2zM813 635h2v2h-2zM757 639h2v2h-2zM783 645h2v2h-2zM780 651h2v2h-2zM770 655h2v2h-2zM719 675h2v2h-2z"/>
<path fill="#24480c" d="M1335 410h2v2h-2zM1259 415h2v2h-2zM1337 427h2v2h-2zM794 527h2v2h-2zM825 632h2v2h-2zM800 642h2v2h-2zM791 648h2v2h-2zM799 650h2v2h-2zM790 651h2v2h-2zM708 679h2v2h-2zM643 693h2v2h-2z"/>
<path fill="#489c18" d="M1320 414h2v2h-2zM1048 419h2v2h-2zM1245 427h2v2h-2zM1298 434h2v2h-2zM1334 442h2v2h-2zM1026 443h2v2h-2zM1306 446h2v2h-2zM789 537h2v2h-2zM750 544h2v2h-2zM784 589h2v2h-2zM791 598h2v2h-2zM768 618h2v2h-2zM775 622h2v2h-2zM774 624h2v2h-2zM756 626h2v2h-2zM763 627h2v2h-2z"/>
<path fill="#3c8418" d="M1051 413h2v2h-2zM1079 416h2v2h-2zM1317 417h2v2h-2zM1055 421h2v2h-2zM725 550h2v2h-2z"/>
<path fill="#609018" d="M854 467h2v2h-2zM814 502h2v2h-2zM792 510h2v2h-2zM772 535h2v2h-2zM720 544h2v2h-2zM854 582h2v2h-2zM858 599h2v2h-2zM835 602h2v2h-2zM852 608h2v2h-2zM777 619h2v2h-2zM808 619h2v2h-2zM799 621h2v2h-2zM755 662h2v2h-2zM717 678h2v2h-2z"/>
<path fill="#48cc24" d="M591 549h2v2h-2z"/>
<path fill="#3c480c" d="M1336 433h2v2h-2zM849 482h2v2h-2zM843 491h2v2h-2zM732 543h2v2h-2z"/>
<path fill="#3c5430" d="M738 559h2v2h-2z"/>
<path fill="#486024" d="M984 385h2v2h-2zM919 388h2v2h-2zM1035 390h2v2h-2zM1024 397h2v2h-2zM953 407h2v2h-2zM978 411h2v2h-2zM930 417h2v2h-2zM867 557h2v2h-2z"/>
<path fill="#304830" d="M602 563h2v2h-2zM681 563h2v2h-2zM671 564h2v2h-2zM613 566h2v2h-2zM842 566h2v2h-2zM633 571h2v2h-2zM674 571h2v2h-2zM644 584h2v2h-2z"/>
<path fill="#243c30" d="M617 561h2v2h-2zM855 562h2v2h-2zM629 563h2v2h-2zM728 566h2v2h-2zM888 567h2v2h-2zM695 569h2v2h-2zM607 587h2v2h-2zM608 594h2v2h-2z"/>
<path fill="#243c24" d="M639 562h2v2h-2zM881 564h2v2h-2zM638 569h2v2h-2zM656 569h2v2h-2zM611 576h2v2h-2zM638 577h2v2h-2zM660 586h2v2h-2zM604 596h2v2h-2z"/>
<path fill="#243030" d="M709 565h2v2h-2zM652 566h2v2h-2zM747 568h2v2h-2z"/>
<path fill="#3c5424" d="M1004 374h2v2h-2zM1010 378h2v2h-2zM981 382h2v2h-2zM965 387h2v2h-2zM908 388h2v2h-2zM1024 389h2v2h-2zM915 396h2v2h-2zM934 404h2v2h-2zM765 566h2v2h-2zM693 567h2v2h-2zM624 569h2v2h-2zM827 570h2v2h-2zM619 597h2v2h-2z"/>
<path fill="#3c4824" d="M929 382h2v2h-2zM796 561h2v2h-2zM828 561h2v2h-2zM778 562h2v2h-2zM701 566h2v2h-2zM649 588h2v2h-2zM631 590h2v2h-2zM627 592h2v2h-2z"/>
<path fill="#303c24" d="M716 565h2v2h-2zM815 566h2v2h-2zM701 569h2v2h-2zM667 572h2v2h-2zM733 573h2v2h-2zM606 575h2v2h-2zM613 587h2v2h-2z"/>
<path fill="#243024" d="M789 563h2v2h-2zM713 572h2v2h-2zM689 575h2v2h-2zM643 578h2v2h-2z"/>
<path fill="#304824" d="M808 565h2v2h-2zM872 567h2v2h-2zM796 568h2v2h-2zM737 571h2v2h-2zM783 571h2v2h-2zM650 575h2v2h-2zM688 580h2v2h-2zM599 581h2v2h-2zM621 588h2v2h-2z"/>
<path fill="#183024" d="M598 584h2v2h-2zM607 600h2v2h-2z"/>
<path fill="#60b418" d="M1025 409h2v2h-2zM1135 410h2v2h-2zM992 416h2v2h-2zM1045 416h2v2h-2zM1147 428h2v2h-2zM983 429h2v2h-2zM1126 440h2v2h-2zM1215 443h2v2h-2zM1244 444h2v2h-2zM1057 447h2v2h-2zM1310 447h2v2h-2zM895 455h2v2h-2zM897 456h2v2h-2zM893 459h2v2h-2zM1010 470h2v2h-2zM1017 470h2v2h-2zM978 472h2v2h-2zM1030 510h2v2h-2zM869 511h2v2h-2zM1144 512h2v2h-2zM814 515h2v2h-2zM1052 519h2v2h-2zM975 521h2v2h-2zM848 523h2v2h-2zM1081 532h2v2h-2zM785 541h2v2h-2zM754 545h2v2h-2zM1058 545h2v2h-2zM825 546h2v2h-2zM1066 548h2v2h-2zM749 551h2v2h-2zM1091 553h2v2h-2zM798 569h2v2h-2zM798 573h2v2h-2zM800 578h2v2h-2zM798 579h2v2h-2zM792 584h2v2h-2zM800 588h2v2h-2zM793 596h2v2h-2z"/>
<path fill="#549c0c" d="M816 568h2v2h-2zM817 581h2v2h-2zM820 589h2v2h-2zM802 599h2v2h-2z"/>
<path fill="#6c840c" d="M813 486h2v2h-2zM844 486h2v2h-2zM842 488h2v2h-2zM842 494h2v2h-2zM851 505h2v2h-2zM849 507h2v2h-2zM854 509h2v2h-2zM790 520h2v2h-2zM814 528h2v2h-2zM998 565h2v2h-2zM894 566h2v2h-2zM898 566h2v2h-2zM813 621h2v2h-2zM813 637h2v2h-2zM827 638h2v2h-2zM792 648h2v2h-2zM795 648h2v2h-2zM787 658h2v2h-2z"/>
<path fill="#546c0c" d="M1002 387h2v2h-2zM1047 393h2v2h-2zM1024 402h2v2h-2zM1134 414h2v2h-2zM1328 415h2v2h-2zM1072 419h2v2h-2zM1343 419h2v2h-2zM987 424h2v2h-2zM1043 429h2v2h-2zM1282 430h2v2h-2zM1282 433h2v2h-2zM833 472h2v2h-2zM850 483h2v2h-2zM846 485h2v2h-2zM846 489h2v2h-2zM845 492h2v2h-2zM852 501h2v2h-2zM855 505h2v2h-2zM760 515h2v2h-2zM751 543h2v2h-2zM756 545h2v2h-2zM925 565h2v2h-2zM903 569h2v2h-2zM896 578h2v2h-2zM891 587h2v2h-2zM868 593h2v2h-2zM863 611h2v2h-2zM863 622h2v2h-2zM779 623h2v2h-2zM757 631h2v2h-2zM784 634h2v2h-2zM806 634h2v2h-2zM813 638h2v2h-2zM794 650h2v2h-2zM811 650h2v2h-2zM779 655h2v2h-2zM771 657h2v2h-2zM776 657h2v2h-2zM776 658h2v2h-2zM778 659h2v2h-2zM756 661h2v2h-2zM771 670h2v2h-2z"/>
<path fill="#60780c" d="M1137 420h2v2h-2zM1169 428h2v2h-2zM835 479h2v2h-2zM851 496h2v2h-2zM852 509h2v2h-2zM794 516h2v2h-2zM853 517h2v2h-2zM770 557h2v2h-2zM1026 558h2v2h-2zM1067 562h2v2h-2zM907 569h2v2h-2zM900 581h2v2h-2zM787 619h2v2h-2zM800 645h2v2h-2zM810 648h2v2h-2zM763 652h2v2h-2z"/>
<path fill="#54cc18" d="M1027 451h2v2h-2zM986 468h2v2h-2zM753 575h2v2h-2zM762 582h2v2h-2zM732 585h2v2h-2zM752 587h2v2h-2zM657 590h2v2h-2zM672 590h2v2h-2zM696 599h2v2h-2zM747 599h2v2h-2zM622 600h2v2h-2zM714 604h2v2h-2zM725 604h2v2h-2zM660 609h2v2h-2zM701 609h2v2h-2zM645 610h2v2h-2zM664 611h2v2h-2zM724 614h2v2h-2zM593 615h2v2h-2zM743 615h2v2h-2zM686 617h2v2h-2zM633 618h2v2h-2zM642 619h2v2h-2zM603 621h2v2h-2zM618 626h2v2h-2zM645 630h2v2h-2zM592 633h2v2h-2zM641 633h2v2h-2zM604 634h2v2h-2zM614 637h2v2h-2zM596 642h2v2h-2zM607 642h2v2h-2zM595 648h2v2h-2z"/>
<path fill="#6ce418" d="M1002 454h2v2h-2zM912 464h2v2h-2zM948 469h2v2h-2zM957 471h2v2h-2zM861 485h2v2h-2zM946 489h2v2h-2zM894 492h2v2h-2zM1008 495h2v2h-2zM998 502h2v2h-2zM1024 505h2v2h-2zM1054 524h2v2h-2zM795 526h2v2h-2zM1036 529h2v2h-2zM1013 553h2v2h-2zM804 558h2v2h-2zM774 572h2v2h-2zM769 587h2v2h-2z"/>
<path fill="#60cc18" d="M1007 445h2v2h-2zM1012 473h2v2h-2zM949 477h2v2h-2zM830 487h2v2h-2zM826 488h2v2h-2zM1040 505h2v2h-2zM803 525h2v2h-2zM815 531h2v2h-2zM1017 534h2v2h-2zM937 539h2v2h-2zM1031 539h2v2h-2zM1003 542h2v2h-2zM819 546h2v2h-2zM975 552h2v2h-2zM781 574h2v2h-2zM770 597h2v2h-2zM773 598h2v2h-2z"/>
<path fill="#60c018" d="M1042 393h2v2h-2zM1133 400h2v2h-2zM1155 403h2v2h-2zM1238 413h2v2h-2zM1029 419h2v2h-2zM1055 420h2v2h-2zM1231 422h2v2h-2zM984 424h2v2h-2zM890 454h2v2h-2zM954 461h2v2h-2zM939 466h2v2h-2zM1073 468h2v2h-2zM849 474h2v2h-2zM838 478h2v2h-2zM969 481h2v2h-2zM844 485h2v2h-2zM1003 486h2v2h-2zM1074 493h2v2h-2zM1065 495h2v2h-2zM1092 497h2v2h-2zM828 503h2v2h-2zM1077 509h2v2h-2zM939 512h2v2h-2zM844 515h2v2h-2zM855 533h2v2h-2zM912 538h2v2h-2zM904 545h2v2h-2zM927 549h2v2h-2zM1106 549h2v2h-2zM914 550h2v2h-2zM789 559h2v2h-2zM910 560h2v2h-2zM772 561h2v2h-2zM791 574h2v2h-2zM786 575h2v2h-2zM797 588h2v2h-2zM778 602h2v2h-2z"/>
<path fill="#48900c" d="M805 573h2v2h-2zM809 585h2v2h-2zM809 602h2v2h-2zM784 611h2v2h-2zM802 611h2v2h-2zM785 614h2v2h-2z"/>
<path fill="#609c0c" d="M824 574h2v2h-2z"/>
<path fill="#60f024" d="M714 580h2v2h-2zM694 581h2v2h-2zM750 585h2v2h-2zM709 587h2v2h-2zM664 588h2v2h-2zM701 588h2v2h-2zM648 590h2v2h-2zM699 593h2v2h-2zM724 593h2v2h-2zM627 598h2v2h-2zM657 603h2v2h-2zM652 610h2v2h-2zM609 611h2v2h-2zM620 615h2v2h-2zM639 616h2v2h-2zM618 623h2v2h-2z"/>
<path fill="#60e418" d="M965 466h2v2h-2zM866 535h2v2h-2zM739 578h2v2h-2zM720 579h2v2h-2zM771 580h2v2h-2zM755 584h2v2h-2zM747 588h2v2h-2zM758 588h2v2h-2zM766 590h2v2h-2zM744 592h2v2h-2zM682 601h2v2h-2zM745 603h2v2h-2zM670 605h2v2h-2zM614 626h2v2h-2z"/>
<path fill="#54e418" d="M730 576h2v2h-2zM701 583h2v2h-2zM729 586h2v2h-2zM692 589h2v2h-2zM644 592h2v2h-2zM685 594h2v2h-2zM679 598h2v2h-2zM660 599h2v2h-2zM674 605h2v2h-2zM620 606h2v2h-2zM691 607h2v2h-2zM698 609h2v2h-2zM606 614h2v2h-2zM614 615h2v2h-2zM599 622h2v2h-2zM611 623h2v2h-2zM603 628h2v2h-2zM600 636h2v2h-2z"/>
<path fill="#48c018" d="M732 579h2v2h-2zM708 584h2v2h-2zM698 588h2v2h-2zM682 589h2v2h-2zM680 594h2v2h-2zM718 596h2v2h-2zM708 599h2v2h-2zM714 599h2v2h-2zM693 600h2v2h-2zM739 601h2v2h-2zM686 603h2v2h-2zM680 604h2v2h-2zM733 604h2v2h-2zM611 605h2v2h-2zM632 605h2v2h-2zM704 606h2v2h-2zM721 610h2v2h-2zM669 614h2v2h-2zM698 614h2v2h-2zM710 614h2v2h-2zM736 616h2v2h-2zM675 617h2v2h-2zM672 620h2v2h-2zM593 621h2v2h-2zM697 621h2v2h-2zM665 622h2v2h-2zM705 624h2v2h-2zM680 625h2v2h-2zM630 626h2v2h-2zM658 628h2v2h-2zM696 629h2v2h-2zM673 631h2v2h-2zM630 633h2v2h-2zM650 635h2v2h-2zM662 635h2v2h-2zM623 637h2v2h-2zM643 638h2v2h-2zM648 642h2v2h-2zM604 646h2v2h-2z"/>
<path fill="#54d818" d="M746 580h2v2h-2zM723 582h2v2h-2zM743 585h2v2h-2zM679 590h2v2h-2zM655 594h2v2h-2zM664 594h2v2h-2zM695 594h2v2h-2zM738 595h2v2h-2zM714 596h2v2h-2zM634 600h2v2h-2zM703 600h2v2h-2zM664 602h2v2h-2zM671 602h2v2h-2zM644 603h2v2h-2zM649 603h2v2h-2zM738 606h2v2h-2zM700 607h2v2h-2zM748 609h2v2h-2zM617 611h2v2h-2zM678 611h2v2h-2zM689 611h2v2h-2zM708 612h2v2h-2zM730 612h2v2h-2zM705 615h2v2h-2zM626 616h2v2h-2zM647 620h2v2h-2zM653 620h2v2h-2zM621 622h2v2h-2zM627 625h2v2h-2zM596 626h2v2h-2zM607 629h2v2h-2zM611 633h2v2h-2zM620 634h2v2h-2z"/>
<path fill="#6cf024" d="M753 580h2v2h-2z"/>
<path fill="#60f018" d="M759 579h2v2h-2zM682 584h2v2h-2zM669 585h2v2h-2zM734 590h2v2h-2zM597 610h2v2h-2zM606 611h2v2h-2z"/>
<path fill="#60d818" d="M751 531h2v2h-2zM759 533h2v2h-2zM1035 533h2v2h-2zM820 558h2v2h-2zM763 577h2v2h-2zM768 582h2v2h-2zM756 594h2v2h-2zM754 598h2v2h-2zM760 600h2v2h-2z"/>
<path fill="#6cd818" d="M960 450h2v2h-2zM993 454h2v2h-2zM912 457h2v2h-2zM932 474h2v2h-2zM875 479h2v2h-2zM856 481h2v2h-2zM991 491h2v2h-2zM1113 496h2v2h-2zM1032 497h2v2h-2zM933 507h2v2h-2zM1054 507h2v2h-2zM941 509h2v2h-2zM1065 512h2v2h-2zM924 515h2v2h-2zM767 525h2v2h-2zM1072 528h2v2h-2zM923 535h2v2h-2zM1049 542h2v2h-2zM984 544h2v2h-2zM833 552h2v2h-2zM860 556h2v2h-2zM778 578h2v2h-2z"/>
<path fill="#54b418" d="M1148 389h2v2h-2zM1197 434h2v2h-2zM1098 467h2v2h-2zM1061 469h2v2h-2zM955 479h2v2h-2zM916 484h2v2h-2zM920 485h2v2h-2zM920 493h2v2h-2zM1051 498h2v2h-2zM859 507h2v2h-2zM1011 511h2v2h-2zM1046 518h2v2h-2zM814 520h2v2h-2zM891 526h2v2h-2zM942 540h2v2h-2zM1072 546h2v2h-2zM754 553h2v2h-2zM752 558h2v2h-2zM782 577h2v2h-2zM780 581h2v2h-2zM779 588h2v2h-2zM781 593h2v2h-2zM762 595h2v2h-2zM785 595h2v2h-2zM781 598h2v2h-2zM761 604h2v2h-2z"/>
<path fill="#549c18" d="M1149 400h2v2h-2zM1027 401h2v2h-2zM1070 404h2v2h-2zM1257 404h2v2h-2zM1143 406h2v2h-2zM1242 409h2v2h-2zM1096 410h2v2h-2zM1177 410h2v2h-2zM1188 410h2v2h-2zM1022 412h2v2h-2zM1326 413h2v2h-2zM1003 416h2v2h-2zM1098 417h2v2h-2zM1209 417h2v2h-2zM1096 423h2v2h-2zM1286 426h2v2h-2zM1227 428h2v2h-2zM1222 433h2v2h-2zM1032 437h2v2h-2zM1298 443h2v2h-2zM914 447h2v2h-2zM905 448h2v2h-2zM1301 453h2v2h-2zM841 491h2v2h-2zM802 492h2v2h-2zM745 532h2v2h-2zM788 578h2v2h-2zM815 587h2v2h-2zM807 593h2v2h-2zM811 595h2v2h-2zM794 605h2v2h-2zM797 606h2v2h-2z"/>
<path fill="#60a818" d="M1143 403h2v2h-2zM1047 404h2v2h-2zM1184 404h2v2h-2zM1062 405h2v2h-2zM1296 413h2v2h-2zM1124 415h2v2h-2zM1130 420h2v2h-2zM1186 434h2v2h-2zM1148 435h2v2h-2zM1137 436h2v2h-2zM1070 440h2v2h-2zM1092 451h2v2h-2zM887 460h2v2h-2zM803 507h2v2h-2zM1066 535h2v2h-2zM816 577h2v2h-2zM806 584h2v2h-2zM713 680h2v2h-2z"/>
<path fill="#60fc24" d="M710 582h2v2h-2zM737 582h2v2h-2zM686 585h2v2h-2zM720 587h2v2h-2zM739 587h2v2h-2zM675 593h2v2h-2zM732 593h2v2h-2zM629 595h2v2h-2zM667 595h2v2h-2zM650 596h2v2h-2zM647 599h2v2h-2zM654 599h2v2h-2zM636 604h2v2h-2zM662 605h2v2h-2zM626 606h2v2h-2zM627 608h2v2h-2zM643 610h2v2h-2zM633 611h2v2h-2zM599 615h2v2h-2z"/>
<path fill="#54c018" d="M925 452h2v2h-2zM937 462h2v2h-2zM862 483h2v2h-2zM927 488h2v2h-2zM953 488h2v2h-2zM962 494h2v2h-2zM998 521h2v2h-2zM1028 531h2v2h-2zM992 534h2v2h-2zM843 545h2v2h-2zM760 547h2v2h-2zM890 554h2v2h-2zM850 557h2v2h-2zM775 584h2v2h-2zM762 597h2v2h-2zM750 605h2v2h-2zM769 607h2v2h-2zM756 609h2v2h-2zM769 611h2v2h-2z"/>
<path fill="#54a818" d="M1052 394h2v2h-2zM1104 394h2v2h-2zM1098 403h2v2h-2zM1235 403h2v2h-2zM1043 404h2v2h-2zM1128 407h2v2h-2zM1306 413h2v2h-2zM1082 416h2v2h-2zM1271 421h2v2h-2zM1028 422h2v2h-2zM1262 422h2v2h-2zM1264 424h2v2h-2zM1299 425h2v2h-2zM1302 425h2v2h-2zM974 433h2v2h-2zM1114 433h2v2h-2zM1165 434h2v2h-2zM1024 443h2v2h-2zM1294 447h2v2h-2zM1308 449h2v2h-2zM860 462h2v2h-2zM818 484h2v2h-2zM1076 524h2v2h-2zM799 582h2v2h-2zM786 585h2v2h-2zM798 594h2v2h-2zM779 607h2v2h-2zM788 609h2v2h-2z"/>
<path fill="#3c6c0c" d="M1137 393h2v2h-2zM1263 398h2v2h-2zM1128 403h2v2h-2zM1018 404h2v2h-2zM1308 406h2v2h-2zM1237 410h2v2h-2zM1009 411h2v2h-2zM1288 413h2v2h-2zM1025 415h2v2h-2zM1087 416h2v2h-2zM1161 418h2v2h-2zM1223 419h2v2h-2zM1237 422h2v2h-2zM1254 422h2v2h-2zM1313 425h2v2h-2zM1178 427h2v2h-2zM1293 427h2v2h-2zM1030 428h2v2h-2zM1191 429h2v2h-2zM1277 431h2v2h-2zM1323 431h2v2h-2zM1172 432h2v2h-2zM1063 436h2v2h-2zM1313 441h2v2h-2zM1312 445h2v2h-2zM891 454h2v2h-2zM844 465h2v2h-2zM828 476h2v2h-2zM857 476h2v2h-2zM809 493h2v2h-2zM786 496h2v2h-2zM835 585h2v2h-2zM847 585h2v2h-2zM832 594h2v2h-2zM810 606h2v2h-2zM825 614h2v2h-2zM811 616h2v2h-2zM830 617h2v2h-2zM821 619h2v2h-2zM819 624h2v2h-2zM789 638h2v2h-2zM711 689h2v2h-2z"/>
<path fill="#48cc18" d="M704 594h2v2h-2zM727 598h2v2h-2zM674 610h2v2h-2zM648 615h2v2h-2zM656 617h2v2h-2zM637 621h2v2h-2z"/>
<path fill="#48a818" d="M983 531h2v2h-2zM897 533h2v2h-2zM775 593h2v2h-2zM741 610h2v2h-2zM775 610h2v2h-2zM757 613h2v2h-2zM684 620h2v2h-2zM714 622h2v2h-2zM738 623h2v2h-2zM753 623h2v2h-2zM642 625h2v2h-2zM701 628h2v2h-2zM668 632h2v2h-2zM620 641h2v2h-2zM655 641h2v2h-2zM607 652h2v2h-2z"/>
<path fill="#48540c" d="M847 480h2v2h-2zM850 490h2v2h-2zM847 492h2v2h-2zM849 505h2v2h-2zM850 509h2v2h-2zM847 512h2v2h-2zM849 512h2v2h-2zM849 513h2v2h-2zM853 520h2v2h-2zM865 591h2v2h-2zM853 593h2v2h-2zM894 594h2v2h-2zM852 604h2v2h-2zM865 622h2v2h-2zM861 627h2v2h-2zM814 630h2v2h-2zM824 632h2v2h-2zM791 646h2v2h-2z"/>
<path fill="#48b418" d="M781 529h2v2h-2zM733 599h2v2h-2zM755 604h2v2h-2zM717 605h2v2h-2zM717 610h2v2h-2zM682 612h2v2h-2zM717 615h2v2h-2zM662 616h2v2h-2zM679 616h2v2h-2zM760 616h2v2h-2zM645 618h2v2h-2zM688 621h2v2h-2zM702 621h2v2h-2zM728 621h2v2h-2zM731 622h2v2h-2zM663 624h2v2h-2zM640 628h2v2h-2zM685 628h2v2h-2zM708 630h2v2h-2zM682 631h2v2h-2zM730 631h2v2h-2zM616 632h2v2h-2zM635 632h2v2h-2zM660 632h2v2h-2zM690 632h2v2h-2zM597 633h2v2h-2zM651 633h2v2h-2zM605 636h2v2h-2zM590 641h2v2h-2zM614 642h2v2h-2zM638 646h2v2h-2zM619 649h2v2h-2zM634 649h2v2h-2z"/>
<path fill="#3c840c" d="M774 616h2v2h-2zM758 622h2v2h-2zM769 622h2v2h-2zM784 622h2v2h-2zM782 624h2v2h-2zM766 631h2v2h-2zM782 632h2v2h-2zM776 634h2v2h-2zM763 635h2v2h-2z"/>
<path fill="#3c900c" d="M778 618h2v2h-2zM747 622h2v2h-2zM732 628h2v2h-2zM746 633h2v2h-2zM741 634h2v2h-2zM753 640h2v2h-2zM703 641h2v2h-2zM717 641h2v2h-2zM680 649h2v2h-2zM605 672h2v2h-2z"/>
<path fill="#3c9018" d="M765 621h2v2h-2zM716 624h2v2h-2zM677 630h2v2h-2zM752 633h2v2h-2zM658 638h2v2h-2zM757 638h2v2h-2zM682 640h2v2h-2zM680 641h2v2h-2zM666 644h2v2h-2zM622 651h2v2h-2zM591 652h2v2h-2zM626 652h2v2h-2zM674 652h2v2h-2zM676 653h2v2h-2zM646 655h2v2h-2zM600 659h2v2h-2zM613 660h2v2h-2zM649 660h2v2h-2zM620 666h2v2h-2z"/>
<path fill="#30840c" d="M741 628h2v2h-2zM731 635h2v2h-2zM714 636h2v2h-2zM706 637h2v2h-2zM692 639h2v2h-2zM741 639h2v2h-2zM719 640h2v2h-2zM691 641h2v2h-2zM707 641h2v2h-2zM732 642h2v2h-2zM654 646h2v2h-2zM668 646h2v2h-2zM750 646h2v2h-2zM716 647h2v2h-2zM650 648h2v2h-2zM688 648h2v2h-2zM735 648h2v2h-2zM713 650h2v2h-2zM702 655h2v2h-2zM635 657h2v2h-2zM634 659h2v2h-2zM644 661h2v2h-2zM635 662h2v2h-2zM614 665h2v2h-2zM603 669h2v2h-2zM610 675h2v2h-2zM611 678h2v2h-2z"/>
<path fill="#306c0c" d="M1290 418h2v2h-2zM1163 421h2v2h-2zM1217 421h2v2h-2zM1265 434h2v2h-2zM1240 440h2v2h-2zM785 625h2v2h-2zM748 641h2v2h-2zM789 644h2v2h-2zM741 645h2v2h-2zM757 647h2v2h-2zM745 648h2v2h-2zM724 649h2v2h-2zM761 649h2v2h-2zM690 652h2v2h-2zM696 652h2v2h-2zM758 655h2v2h-2zM713 657h2v2h-2zM720 658h2v2h-2zM679 659h2v2h-2zM747 659h2v2h-2zM645 662h2v2h-2zM652 662h2v2h-2zM689 662h2v2h-2zM711 662h2v2h-2zM639 665h2v2h-2zM701 665h2v2h-2zM658 673h2v2h-2zM649 676h2v2h-2z"/>
<path fill="#30900c" d="M657 643h2v2h-2z"/>
<path fill="#18480c" d="M741 668h2v2h-2zM707 673h2v2h-2zM714 673h2v2h-2zM692 674h2v2h-2zM723 676h2v2h-2zM736 676h2v2h-2zM729 678h2v2h-2zM718 679h2v2h-2zM668 680h2v2h-2zM692 680h2v2h-2zM722 681h2v2h-2zM681 682h2v2h-2zM652 684h2v2h-2zM667 684h2v2h-2zM647 685h2v2h-2zM702 685h2v2h-2zM714 685h2v2h-2zM660 686h2v2h-2zM683 688h2v2h-2zM696 688h2v2h-2zM664 689h2v2h-2zM669 689h2v2h-2zM677 690h2v2h-2zM704 690h2v2h-2zM658 692h2v2h-2zM649 693h2v2h-2zM690 694h2v2h-2zM652 695h2v2h-2zM670 698h2v2h-2z"/>
<path fill="#78780c" d="M1180 392h2v2h-2zM1191 395h2v2h-2zM1071 401h2v2h-2zM1122 401h2v2h-2zM1090 409h2v2h-2zM1218 409h2v2h-2zM1207 410h2v2h-2zM1191 412h2v2h-2zM1056 418h2v2h-2zM1281 418h2v2h-2zM1179 423h2v2h-2zM1187 425h2v2h-2zM1143 427h2v2h-2zM1321 428h2v2h-2zM1300 429h2v2h-2zM1283 434h2v2h-2zM1217 435h2v2h-2zM1116 436h2v2h-2zM1244 438h2v2h-2zM1067 443h2v2h-2zM1209 445h2v2h-2zM1204 453h2v2h-2zM1255 459h2v2h-2zM979 460h2v2h-2zM1264 460h2v2h-2zM955 465h2v2h-2zM1238 466h2v2h-2zM1300 466h2v2h-2zM1230 467h2v2h-2zM1350 472h2v2h-2zM1362 472h2v2h-2zM1234 475h2v2h-2zM801 499h2v2h-2zM801 505h2v2h-2zM821 533h2v2h-2zM1009 557h2v2h-2zM1096 557h2v2h-2zM1001 558h2v2h-2zM1069 562h2v2h-2zM1111 562h2v2h-2zM1119 562h2v2h-2zM887 564h2v2h-2zM917 564h2v2h-2zM877 604h2v2h-2zM872 607h2v2h-2zM864 613h2v2h-2zM861 615h2v2h-2zM859 616h2v2h-2zM837 630h2v2h-2z"/>
<path fill="#548418" d="M793 507h2v2h-2zM875 601h2v2h-2zM834 619h2v2h-2zM754 635h2v2h-2zM788 639h2v2h-2zM769 662h2v2h-2zM742 672h2v2h-2zM726 679h2v2h-2zM725 682h2v2h-2zM716 684h2v2h-2z"/>
<path fill="#60600c" d="M1057 379h2v2h-2zM1088 383h2v2h-2zM1108 387h2v2h-2zM1066 388h2v2h-2zM1097 389h2v2h-2zM1077 393h2v2h-2zM1054 394h2v2h-2zM1094 395h2v2h-2zM1127 395h2v2h-2zM1072 396h2v2h-2zM1092 396h2v2h-2zM1182 397h2v2h-2zM1083 398h2v2h-2zM1055 399h2v2h-2zM1004 400h2v2h-2zM1237 400h2v2h-2zM1077 401h2v2h-2zM1228 403h2v2h-2zM1056 404h2v2h-2zM1082 404h2v2h-2zM1160 404h2v2h-2zM1057 405h2v2h-2zM1123 405h2v2h-2zM1248 405h2v2h-2zM1158 407h2v2h-2zM1203 407h2v2h-2zM991 408h2v2h-2zM1215 408h2v2h-2zM1041 409h2v2h-2zM1091 409h2v2h-2zM1157 409h2v2h-2zM1130 410h2v2h-2zM1195 410h2v2h-2zM1214 410h2v2h-2zM1007 411h2v2h-2zM1234 413h2v2h-2zM1097 414h2v2h-2zM1141 414h2v2h-2zM1262 414h2v2h-2zM1061 415h2v2h-2zM1042 416h2v2h-2zM1171 416h2v2h-2zM1226 416h2v2h-2zM1304 416h2v2h-2zM1085 418h2v2h-2zM1217 418h2v2h-2zM1253 419h2v2h-2zM1208 420h2v2h-2zM1211 420h2v2h-2zM1031 422h2v2h-2zM1116 422h2v2h-2zM1221 422h2v2h-2zM1183 423h2v2h-2zM1177 425h2v2h-2zM1268 425h2v2h-2zM998 426h2v2h-2zM1048 426h2v2h-2zM1289 426h2v2h-2zM1002 430h2v2h-2zM996 432h2v2h-2zM1130 432h2v2h-2zM1247 432h2v2h-2zM1244 435h2v2h-2zM1222 437h2v2h-2zM1147 438h2v2h-2zM1102 439h2v2h-2zM958 440h2v2h-2zM997 444h2v2h-2zM1120 444h2v2h-2zM921 448h2v2h-2zM1230 449h2v2h-2zM891 458h2v2h-2zM983 461h2v2h-2zM930 466h2v2h-2zM841 472h2v2h-2zM843 494h2v2h-2zM819 512h2v2h-2zM851 518h2v2h-2zM755 525h2v2h-2zM1002 559h2v2h-2zM939 560h2v2h-2zM1011 560h2v2h-2zM1102 561h2v2h-2zM908 563h2v2h-2zM911 564h2v2h-2zM895 565h2v2h-2zM878 605h2v2h-2zM873 606h2v2h-2zM870 609h2v2h-2zM786 620h2v2h-2zM836 627h2v2h-2zM842 632h2v2h-2z"/>
<path fill="#9c9c0c" d="M1070 398h2v2h-2zM1205 401h2v2h-2zM1105 418h2v2h-2zM1144 428h2v2h-2zM1211 433h2v2h-2zM986 436h2v2h-2zM1311 441h2v2h-2zM1272 456h2v2h-2zM1311 461h2v2h-2zM1219 466h2v2h-2zM1339 486h2v2h-2zM1205 488h2v2h-2zM846 494h2v2h-2zM1073 554h2v2h-2zM1000 562h2v2h-2zM1006 563h2v2h-2zM939 564h2v2h-2zM956 565h2v2h-2zM874 604h2v2h-2zM868 612h2v2h-2zM869 612h2v2h-2z"/>
<path fill="#a8b418" d="M790 499h2v2h-2zM763 525h2v2h-2zM778 526h2v2h-2zM765 549h2v2h-2zM1027 561h2v2h-2zM843 629h2v2h-2zM827 634h2v2h-2zM834 636h2v2h-2z"/>
<path fill="#6cb418" d="M1111 389h2v2h-2zM1108 392h2v2h-2zM1232 401h2v2h-2zM1152 402h2v2h-2zM1297 414h2v2h-2zM1229 415h2v2h-2zM1285 415h2v2h-2zM1250 416h2v2h-2zM1281 417h2v2h-2zM1018 420h2v2h-2zM1090 429h2v2h-2zM1000 431h2v2h-2zM1238 432h2v2h-2zM1210 437h2v2h-2zM1336 437h2v2h-2zM1208 438h2v2h-2zM1023 446h2v2h-2zM1288 446h2v2h-2zM1050 475h2v2h-2zM893 476h2v2h-2zM850 477h2v2h-2zM983 481h2v2h-2zM1096 489h2v2h-2zM984 494h2v2h-2zM1042 495h2v2h-2zM893 502h2v2h-2zM1205 502h2v2h-2zM826 509h2v2h-2zM930 513h2v2h-2zM795 523h2v2h-2zM1087 529h2v2h-2zM775 538h2v2h-2zM891 541h2v2h-2zM777 544h2v2h-2zM719 673h2v2h-2zM721 679h2v2h-2zM717 680h2v2h-2z"/>
<path fill="#a89c0c" d="M1046 385h2v2h-2zM1167 393h2v2h-2zM1105 397h2v2h-2zM1115 401h2v2h-2zM1226 404h2v2h-2zM1220 407h2v2h-2zM1239 407h2v2h-2zM1331 416h2v2h-2zM915 445h2v2h-2zM941 445h2v2h-2zM893 449h2v2h-2zM1185 453h2v2h-2zM1285 459h2v2h-2zM1298 460h2v2h-2zM1213 467h2v2h-2zM1206 468h2v2h-2zM1322 472h2v2h-2zM1344 473h2v2h-2zM1240 474h2v2h-2zM1189 477h2v2h-2zM905 487h2v2h-2zM909 488h2v2h-2zM918 488h2v2h-2zM1187 488h2v2h-2zM914 491h2v2h-2zM1363 495h2v2h-2zM1195 496h2v2h-2zM789 500h2v2h-2zM1078 555h2v2h-2zM990 559h2v2h-2zM1036 559h2v2h-2zM1060 560h2v2h-2zM1061 560h2v2h-2zM984 561h2v2h-2zM1110 564h2v2h-2zM885 605h2v2h-2z"/>
<path fill="#78a818" d="M1267 402h2v2h-2zM1070 405h2v2h-2zM1154 406h2v2h-2zM1241 420h2v2h-2zM1232 428h2v2h-2zM1138 441h2v2h-2zM1184 446h2v2h-2zM816 491h2v2h-2zM746 534h2v2h-2zM811 620h2v2h-2zM841 622h2v2h-2zM819 634h2v2h-2zM777 645h2v2h-2zM768 655h2v2h-2zM757 666h2v2h-2zM761 666h2v2h-2zM756 667h2v2h-2z"/>
<path fill="#849c18" d="M849 475h2v2h-2zM848 491h2v2h-2zM819 493h2v2h-2zM800 501h2v2h-2zM813 504h2v2h-2zM778 533h2v2h-2zM1045 558h2v2h-2zM1040 559h2v2h-2zM956 561h2v2h-2zM963 563h2v2h-2zM994 564h2v2h-2zM1123 567h2v2h-2zM881 613h2v2h-2zM822 633h2v2h-2zM813 642h2v2h-2zM815 643h2v2h-2zM800 648h2v2h-2zM790 649h2v2h-2zM800 649h2v2h-2z"/>
<path fill="#6c9018" d="M1081 403h2v2h-2zM848 517h2v2h-2zM787 524h2v2h-2zM1071 563h2v2h-2zM867 579h2v2h-2zM876 605h2v2h-2zM842 622h2v2h-2zM860 622h2v2h-2zM777 654h2v2h-2zM775 655h2v2h-2zM789 655h2v2h-2zM766 659h2v2h-2zM768 660h2v2h-2zM764 661h2v2h-2zM770 664h2v2h-2zM749 666h2v2h-2z"/>
<path fill="#487818" d="M1283 445h2v2h-2zM860 609h2v2h-2zM796 624h2v2h-2zM719 682h2v2h-2zM710 688h2v2h-2z"/>
<path fill="#84b418" d="M1242 398h2v2h-2zM1085 401h2v2h-2zM1014 403h2v2h-2zM989 434h2v2h-2zM1295 464h2v2h-2zM1143 497h2v2h-2zM821 498h2v2h-2zM801 507h2v2h-2zM1147 540h2v2h-2zM768 658h2v2h-2zM778 658h2v2h-2zM756 665h2v2h-2z"/>
<path fill="#6c6c0c" d="M1140 388h2v2h-2zM1064 392h2v2h-2zM1085 395h2v2h-2zM1097 395h2v2h-2zM1201 395h2v2h-2zM1061 396h2v2h-2zM1035 409h2v2h-2zM1151 410h2v2h-2zM1090 413h2v2h-2zM1171 415h2v2h-2zM1099 418h2v2h-2zM1144 419h2v2h-2zM1107 420h2v2h-2zM1298 420h2v2h-2zM1228 421h2v2h-2zM1121 422h2v2h-2zM1198 422h2v2h-2zM1234 423h2v2h-2zM1154 425h2v2h-2zM1314 427h2v2h-2zM1313 436h2v2h-2zM1075 440h2v2h-2zM1000 444h2v2h-2zM1161 449h2v2h-2zM1286 452h2v2h-2zM1193 457h2v2h-2zM937 467h2v2h-2zM1214 482h2v2h-2zM837 484h2v2h-2zM847 485h2v2h-2zM893 486h2v2h-2zM849 488h2v2h-2zM906 488h2v2h-2zM847 498h2v2h-2zM866 498h2v2h-2zM1191 501h2v2h-2zM853 516h2v2h-2zM1049 558h2v2h-2zM1032 561h2v2h-2zM1009 562h2v2h-2zM928 563h2v2h-2zM1017 563h2v2h-2zM907 564h2v2h-2zM964 568h2v2h-2zM887 596h2v2h-2zM858 603h2v2h-2zM874 603h2v2h-2zM875 606h2v2h-2zM865 613h2v2h-2zM876 613h2v2h-2zM853 619h2v2h-2zM857 621h2v2h-2z"/>
<path fill="#789c18" d="M1077 394h2v2h-2zM1131 394h2v2h-2zM777 528h2v2h-2zM763 536h2v2h-2zM879 595h2v2h-2zM824 610h2v2h-2zM857 616h2v2h-2zM826 618h2v2h-2zM795 632h2v2h-2zM832 635h2v2h-2zM774 642h2v2h-2zM774 654h2v2h-2zM786 654h2v2h-2zM784 655h2v2h-2zM786 674h2v2h-2z"/>
<path fill="#606c0c" d="M843 477h2v2h-2zM829 491h2v2h-2zM847 503h2v2h-2zM850 505h2v2h-2zM850 507h2v2h-2zM855 514h2v2h-2zM783 517h2v2h-2zM852 518h2v2h-2zM852 519h2v2h-2zM749 534h2v2h-2zM763 542h2v2h-2zM1050 559h2v2h-2zM1122 562h2v2h-2zM891 564h2v2h-2zM901 564h2v2h-2zM901 566h2v2h-2zM923 567h2v2h-2zM871 595h2v2h-2zM822 610h2v2h-2zM811 613h2v2h-2zM852 617h2v2h-2zM815 619h2v2h-2zM824 621h2v2h-2zM829 621h2v2h-2zM836 630h2v2h-2zM814 635h2v2h-2zM840 638h2v2h-2zM822 639h2v2h-2zM814 640h2v2h-2zM817 641h2v2h-2zM799 647h2v2h-2zM775 648h2v2h-2z"/>
<path fill="#90a818" d="M823 489h2v2h-2zM756 507h2v2h-2zM821 513h2v2h-2zM1058 556h2v2h-2zM885 562h2v2h-2zM925 562h2v2h-2zM890 563h2v2h-2zM911 563h2v2h-2zM1033 563h2v2h-2zM995 564h2v2h-2zM899 570h2v2h-2zM849 593h2v2h-2zM822 635h2v2h-2zM809 638h2v2h-2zM821 646h2v2h-2zM806 652h2v2h-2z"/>
<path fill="#9ca818" d="M825 484h2v2h-2zM820 488h2v2h-2zM854 489h2v2h-2zM846 496h2v2h-2zM847 502h2v2h-2zM807 508h2v2h-2zM1074 559h2v2h-2zM1108 563h2v2h-2zM827 633h2v2h-2zM824 635h2v2h-2zM829 636h2v2h-2z"/>
<path fill="#6c9c18" d="M1030 376h2v2h-2zM1063 400h2v2h-2zM1170 407h2v2h-2zM1211 408h2v2h-2zM1181 410h2v2h-2zM1112 413h2v2h-2zM798 506h2v2h-2zM834 620h2v2h-2zM772 640h2v2h-2zM767 652h2v2h-2zM760 659h2v2h-2zM736 677h2v2h-2z"/>
<path fill="#78840c" d="M852 482h2v2h-2zM847 507h2v2h-2zM848 507h2v2h-2zM790 512h2v2h-2zM853 512h2v2h-2zM854 519h2v2h-2zM849 520h2v2h-2zM784 525h2v2h-2zM779 534h2v2h-2zM964 559h2v2h-2zM952 565h2v2h-2zM1064 566h2v2h-2zM857 617h2v2h-2zM840 625h2v2h-2zM841 625h2v2h-2zM831 627h2v2h-2zM838 627h2v2h-2zM829 635h2v2h-2z"/>
<path fill="#78b418" d="M1094 400h2v2h-2zM1090 414h2v2h-2zM1051 417h2v2h-2zM1212 417h2v2h-2zM1239 418h2v2h-2zM1323 421h2v2h-2zM1181 422h2v2h-2zM1174 424h2v2h-2zM1066 428h2v2h-2zM1116 431h2v2h-2zM1126 436h2v2h-2zM1090 452h2v2h-2zM1141 473h2v2h-2zM1169 487h2v2h-2zM858 494h2v2h-2zM1180 506h2v2h-2zM792 518h2v2h-2zM727 679h2v2h-2z"/>
<path fill="#54600c" d="M808 487h2v2h-2zM848 488h2v2h-2zM845 510h2v2h-2zM1060 559h2v2h-2zM967 561h2v2h-2zM992 561h2v2h-2zM1063 563h2v2h-2zM885 599h2v2h-2zM830 612h2v2h-2zM780 623h2v2h-2zM856 629h2v2h-2zM791 639h2v2h-2zM777 658h2v2h-2zM789 663h2v2h-2z"/>
<path fill="#90b418" d="M842 495h2v2h-2zM813 509h2v2h-2zM752 539h2v2h-2zM752 545h2v2h-2zM1086 567h2v2h-2zM779 656h2v2h-2zM771 662h2v2h-2z"/>
<path fill="#609c18" d="M1120 395h2v2h-2zM1138 395h2v2h-2zM1066 397h2v2h-2zM1299 404h2v2h-2zM1302 404h2v2h-2zM1176 405h2v2h-2zM1053 407h2v2h-2zM1070 410h2v2h-2zM1235 415h2v2h-2zM1273 418h2v2h-2zM1309 422h2v2h-2zM1113 424h2v2h-2zM1292 426h2v2h-2zM1179 432h2v2h-2zM1203 432h2v2h-2zM1286 434h2v2h-2zM1338 437h2v2h-2zM1052 439h2v2h-2zM846 478h2v2h-2zM756 548h2v2h-2zM734 673h2v2h-2zM719 678h2v2h-2zM718 681h2v2h-2z"/>
<path fill="#789018" d="M807 494h2v2h-2zM812 504h2v2h-2zM847 506h2v2h-2zM796 515h2v2h-2zM742 536h2v2h-2zM1025 562h2v2h-2zM919 564h2v2h-2zM913 569h2v2h-2zM849 603h2v2h-2zM798 632h2v2h-2zM801 641h2v2h-2zM805 644h2v2h-2zM797 646h2v2h-2zM790 650h2v2h-2zM769 651h2v2h-2zM767 661h2v2h-2zM782 661h2v2h-2zM766 665h2v2h-2z"/>
<path fill="#9cc018" d="M1121 457h2v2h-2zM1253 469h2v2h-2zM1203 470h2v2h-2zM1200 496h2v2h-2zM1168 509h2v2h-2zM1163 531h2v2h-2zM812 642h2v2h-2zM805 651h2v2h-2z"/>
<path fill="#9c900c" d="M1059 382h2v2h-2zM1062 402h2v2h-2zM1120 403h2v2h-2zM1029 407h2v2h-2zM1201 407h2v2h-2zM1267 409h2v2h-2zM1231 413h2v2h-2zM1005 415h2v2h-2zM1170 418h2v2h-2zM999 423h2v2h-2zM1108 427h2v2h-2zM1117 431h2v2h-2zM1201 435h2v2h-2zM1267 435h2v2h-2zM1065 436h2v2h-2zM980 440h2v2h-2zM1294 442h2v2h-2zM947 445h2v2h-2zM916 446h2v2h-2zM1308 446h2v2h-2zM1248 457h2v2h-2zM866 462h2v2h-2zM1293 464h2v2h-2zM1269 465h2v2h-2zM1200 484h2v2h-2zM909 487h2v2h-2zM1355 487h2v2h-2zM885 488h2v2h-2zM1349 488h2v2h-2zM915 489h2v2h-2zM759 517h2v2h-2zM767 518h2v2h-2zM1052 555h2v2h-2zM1068 556h2v2h-2zM1017 557h2v2h-2zM1086 557h2v2h-2zM963 558h2v2h-2zM827 559h2v2h-2zM966 559h2v2h-2zM1048 560h2v2h-2zM1099 560h2v2h-2zM1080 561h2v2h-2zM908 562h2v2h-2zM1031 562h2v2h-2zM1102 563h2v2h-2zM1084 565h2v2h-2zM891 600h2v2h-2z"/>
<path fill="#c0c018" d="M1240 428h2v2h-2zM1277 458h2v2h-2zM1346 466h2v2h-2zM1223 471h2v2h-2zM786 526h2v2h-2zM1017 558h2v2h-2zM887 600h2v2h-2z"/>
<path fill="#608418" d="M849 487h2v2h-2zM819 620h2v2h-2zM799 628h2v2h-2zM783 633h2v2h-2zM807 633h2v2h-2zM762 655h2v2h-2zM764 659h2v2h-2zM772 663h2v2h-2zM764 666h2v2h-2zM755 668h2v2h-2zM734 677h2v2h-2z"/>
<path fill="#84900c" d="M844 493h2v2h-2zM833 501h2v2h-2zM766 525h2v2h-2zM797 534h2v2h-2zM757 553h2v2h-2zM1074 557h2v2h-2zM1042 563h2v2h-2zM1112 564h2v2h-2zM891 565h2v2h-2zM1039 565h2v2h-2zM859 614h2v2h-2zM837 621h2v2h-2zM843 624h2v2h-2zM851 625h2v2h-2zM851 627h2v2h-2z"/>
<path fill="#84840c" d="M1109 386h2v2h-2zM1090 399h2v2h-2zM1225 407h2v2h-2zM1182 410h2v2h-2zM1143 411h2v2h-2zM1133 423h2v2h-2zM1086 429h2v2h-2zM1331 431h2v2h-2zM1006 434h2v2h-2zM1030 435h2v2h-2zM1256 452h2v2h-2zM1335 472h2v2h-2zM1378 474h2v2h-2zM1201 482h2v2h-2zM843 488h2v2h-2zM804 496h2v2h-2zM823 501h2v2h-2zM848 502h2v2h-2zM804 505h2v2h-2zM1075 560h2v2h-2zM1058 562h2v2h-2zM922 568h2v2h-2zM885 601h2v2h-2z"/>
<path fill="#909c18" d="M863 486h2v2h-2zM852 495h2v2h-2zM848 501h2v2h-2zM807 502h2v2h-2zM849 509h2v2h-2zM800 517h2v2h-2zM770 519h2v2h-2zM765 545h2v2h-2zM1107 561h2v2h-2zM895 564h2v2h-2zM918 564h2v2h-2zM873 595h2v2h-2zM866 600h2v2h-2zM877 601h2v2h-2zM882 607h2v2h-2zM857 611h2v2h-2zM861 612h2v2h-2zM833 614h2v2h-2zM852 624h2v2h-2zM835 627h2v2h-2zM840 630h2v2h-2zM799 631h2v2h-2zM828 636h2v2h-2zM779 638h2v2h-2z"/>
<path fill="#90900c" d="M1084 396h2v2h-2zM1224 398h2v2h-2zM1119 410h2v2h-2zM1218 411h2v2h-2zM1139 414h2v2h-2zM1280 426h2v2h-2zM1035 432h2v2h-2zM1307 433h2v2h-2zM1013 441h2v2h-2zM1167 445h2v2h-2zM1229 460h2v2h-2zM1264 471h2v2h-2zM1326 473h2v2h-2zM1245 475h2v2h-2zM833 489h2v2h-2zM1206 492h2v2h-2zM1186 510h2v2h-2zM751 542h2v2h-2zM1029 558h2v2h-2zM983 559h2v2h-2zM1006 559h2v2h-2zM1030 559h2v2h-2zM990 561h2v2h-2zM1008 562h2v2h-2zM1107 562h2v2h-2zM1112 562h2v2h-2zM908 564h2v2h-2zM917 567h2v2h-2zM881 603h2v2h-2zM872 608h2v2h-2z"/>
<path fill="#9c9c18" d="M752 530h2v2h-2zM1004 560h2v2h-2zM1093 562h2v2h-2zM851 624h2v2h-2z"/>
<path fill="#909c0c" d="M846 479h2v2h-2zM851 503h2v2h-2zM775 539h2v2h-2zM850 623h2v2h-2z"/>
<path fill="#a8c018" d="M1208 454h2v2h-2zM843 485h2v2h-2zM797 516h2v2h-2zM832 633h2v2h-2z"/>
<path fill="#547818" d="M882 601h2v2h-2zM841 628h2v2h-2zM827 636h2v2h-2zM780 641h2v2h-2zM838 641h2v2h-2zM749 670h2v2h-2z"/>
<path fill="#849018" d="M861 587h2v2h-2zM875 597h2v2h-2zM844 601h2v2h-2zM830 606h2v2h-2zM839 618h2v2h-2zM826 628h2v2h-2zM819 638h2v2h-2z"/>
<path fill="#c0b418" d="M1056 376h2v2h-2zM994 409h2v2h-2zM1245 410h2v2h-2zM1237 424h2v2h-2zM1106 431h2v2h-2zM1155 433h2v2h-2zM959 441h2v2h-2zM1183 459h2v2h-2zM1334 468h2v2h-2zM1210 474h2v2h-2zM1350 477h2v2h-2zM1229 482h2v2h-2zM1191 485h2v2h-2zM778 503h2v2h-2zM1046 557h2v2h-2zM1088 557h2v2h-2zM1083 558h2v2h-2zM1013 559h2v2h-2zM976 560h2v2h-2zM1037 560h2v2h-2zM905 561h2v2h-2zM938 561h2v2h-2zM884 600h2v2h-2zM884 604h2v2h-2z"/>
<path fill="#786c0c" d="M1278 314h2v2h-2zM1190 399h2v2h-2zM1072 400h2v2h-2zM1041 401h2v2h-2zM1201 402h2v2h-2zM1043 403h2v2h-2zM1196 404h2v2h-2zM1069 408h2v2h-2zM1114 408h2v2h-2zM1164 408h2v2h-2zM1013 411h2v2h-2zM1260 416h2v2h-2zM1124 417h2v2h-2zM1195 420h2v2h-2zM1132 422h2v2h-2zM1152 422h2v2h-2zM1087 423h2v2h-2zM1289 424h2v2h-2zM1327 424h2v2h-2zM1151 425h2v2h-2zM1266 426h2v2h-2zM1162 427h2v2h-2zM1182 427h2v2h-2zM1099 429h2v2h-2zM1030 433h2v2h-2zM1301 433h2v2h-2zM1215 435h2v2h-2zM1178 436h2v2h-2zM1252 437h2v2h-2zM1306 437h2v2h-2zM1008 440h2v2h-2zM1174 440h2v2h-2zM1248 440h2v2h-2zM1132 441h2v2h-2zM1212 441h2v2h-2zM1141 449h2v2h-2zM1228 449h2v2h-2zM866 485h2v2h-2zM897 486h2v2h-2zM909 491h2v2h-2zM1081 555h2v2h-2zM1097 557h2v2h-2zM997 559h2v2h-2zM882 560h2v2h-2zM888 561h2v2h-2zM1106 561h2v2h-2zM978 562h2v2h-2zM886 563h2v2h-2zM995 563h2v2h-2zM1093 563h2v2h-2zM893 565h2v2h-2zM1050 565h2v2h-2zM1075 566h2v2h-2zM881 597h2v2h-2zM879 598h2v2h-2z"/>
<path fill="#6ca818" d="M1069 385h2v2h-2zM1086 391h2v2h-2zM1044 401h2v2h-2zM1083 404h2v2h-2zM1264 405h2v2h-2zM1139 407h2v2h-2zM1237 409h2v2h-2zM1329 409h2v2h-2zM1044 412h2v2h-2zM1075 412h2v2h-2zM1070 417h2v2h-2zM1311 418h2v2h-2zM1021 419h2v2h-2zM1336 425h2v2h-2zM1271 429h2v2h-2zM1074 435h2v2h-2zM1211 435h2v2h-2zM1126 446h2v2h-2zM832 496h2v2h-2zM825 502h2v2h-2zM851 619h2v2h-2zM814 629h2v2h-2zM767 653h2v2h-2zM723 678h2v2h-2zM712 679h2v2h-2zM725 679h2v2h-2zM724 685h2v2h-2z"/>
<path fill="#84a818" d="M1093 561h2v2h-2zM1040 562h2v2h-2zM1100 566h2v2h-2zM859 600h2v2h-2zM834 623h2v2h-2zM787 635h2v2h-2zM798 646h2v2h-2z"/>
<path fill="#488418" d="M1048 398h2v2h-2zM1080 409h2v2h-2zM1195 411h2v2h-2zM1164 417h2v2h-2zM1215 421h2v2h-2zM1181 426h2v2h-2zM1341 427h2v2h-2zM1324 429h2v2h-2zM819 483h2v2h-2zM712 686h2v2h-2zM705 687h2v2h-2z"/>
<path fill="#a8a818" d="M1271 427h2v2h-2zM991 429h2v2h-2zM783 520h2v2h-2zM796 525h2v2h-2zM768 547h2v2h-2zM1017 559h2v2h-2zM1099 559h2v2h-2zM1095 563h2v2h-2zM1005 564h2v2h-2zM854 613h2v2h-2zM856 621h2v2h-2z"/>
<path fill="#6c780c" d="M846 481h2v2h-2zM829 501h2v2h-2zM823 502h2v2h-2zM852 514h2v2h-2zM849 519h2v2h-2zM756 544h2v2h-2zM751 545h2v2h-2zM767 548h2v2h-2zM819 549h2v2h-2zM816 554h2v2h-2zM991 557h2v2h-2zM1011 559h2v2h-2zM1100 560h2v2h-2zM921 564h2v2h-2zM1082 564h2v2h-2zM1090 565h2v2h-2zM877 588h2v2h-2zM860 600h2v2h-2zM807 614h2v2h-2zM791 623h2v2h-2zM845 626h2v2h-2zM839 632h2v2h-2zM780 657h2v2h-2zM789 658h2v2h-2z"/>
<path fill="#6c8418" d="M866 591h2v2h-2zM843 615h2v2h-2zM791 621h2v2h-2zM854 621h2v2h-2zM766 642h2v2h-2zM769 665h2v2h-2z"/>
<path fill="#788418" d="M878 592h2v2h-2zM780 637h2v2h-2z"/>
<path fill="#54540c" d="M1129 388h2v2h-2zM1036 390h2v2h-2zM1132 393h2v2h-2zM1122 394h2v2h-2zM1140 395h2v2h-2zM1168 395h2v2h-2zM1073 396h2v2h-2zM997 399h2v2h-2zM1119 399h2v2h-2zM1267 399h2v2h-2zM1228 400h2v2h-2zM1021 401h2v2h-2zM1223 402h2v2h-2zM993 403h2v2h-2zM1052 404h2v2h-2zM1130 405h2v2h-2zM1010 406h2v2h-2zM1126 406h2v2h-2zM1014 407h2v2h-2zM1084 407h2v2h-2zM1087 407h2v2h-2zM1114 407h2v2h-2zM1118 407h2v2h-2zM1153 408h2v2h-2zM1147 409h2v2h-2zM1174 410h2v2h-2zM1216 410h2v2h-2zM1201 411h2v2h-2zM1002 412h2v2h-2zM1197 412h2v2h-2zM1205 412h2v2h-2zM1027 413h2v2h-2zM1151 414h2v2h-2zM1178 414h2v2h-2zM1264 414h2v2h-2zM1280 415h2v2h-2zM1291 415h2v2h-2zM993 416h2v2h-2zM1064 418h2v2h-2zM1034 419h2v2h-2zM1111 419h2v2h-2zM1126 419h2v2h-2zM1152 420h2v2h-2zM1157 420h2v2h-2zM1223 420h2v2h-2zM1263 421h2v2h-2zM1310 421h2v2h-2zM1308 422h2v2h-2zM1145 423h2v2h-2zM1318 423h2v2h-2zM1176 424h2v2h-2zM1333 424h2v2h-2zM992 425h2v2h-2zM1051 425h2v2h-2zM1173 426h2v2h-2zM1296 426h2v2h-2zM1225 428h2v2h-2zM1264 428h2v2h-2zM1256 429h2v2h-2zM1343 430h2v2h-2zM972 431h2v2h-2zM1243 431h2v2h-2zM1302 432h2v2h-2zM1299 433h2v2h-2zM1138 434h2v2h-2zM1158 434h2v2h-2zM1251 434h2v2h-2zM966 436h2v2h-2zM1256 436h2v2h-2zM988 438h2v2h-2zM1078 438h2v2h-2zM1201 438h2v2h-2zM1057 440h2v2h-2zM1160 442h2v2h-2zM1172 445h2v2h-2zM1047 446h2v2h-2zM897 455h2v2h-2zM957 458h2v2h-2zM967 459h2v2h-2zM936 464h2v2h-2zM862 465h2v2h-2zM847 466h2v2h-2zM937 469h2v2h-2zM842 471h2v2h-2zM853 498h2v2h-2zM864 597h2v2h-2zM794 637h2v2h-2z"/>
<path fill="#306c54" d="M674 583h2v2h-2zM676 585h2v2h-2zM677 585h2v2h-2zM660 588h2v2h-2zM607 604h2v2h-2z"/>
<path fill="#307860" d="M664 585h2v2h-2zM648 589h2v2h-2zM662 589h2v2h-2zM628 594h2v2h-2zM657 594h2v2h-2zM618 600h2v2h-2zM596 609h2v2h-2z"/>
<path fill="#18483c" d="M647 590h2v2h-2zM644 594h2v2h-2zM630 598h2v2h-2zM600 606h2v2h-2zM613 606h2v2h-2zM597 608h2v2h-2z"/>
<path fill="#183030" d="M645 591h2v2h-2zM623 602h2v2h-2z"/>
<path fill="#183c30" d="M607 602h2v2h-2z"/>
<path fill="#24543c" d="M640 593h2v2h-2zM622 596h2v2h-2zM599 607h2v2h-2z"/>
<path fill="#24483c" d="M663 587h2v2h-2zM599 608h2v2h-2z"/>
<path fill="#184830" d="M643 592h2v2h-2z"/>
<path fill="#245448" d="M655 586h2v2h-2zM608 606h2v2h-2zM606 607h2v2h-2z"/>
<path fill="#306c60" d="M648 594h2v2h-2z"/>
<path fill="#c0840c" d="M1270 481h2v2h-2zM1249 485h2v2h-2zM1086 575h2v2h-2zM1089 580h2v2h-2zM908 581h2v2h-2zM1015 583h2v2h-2zM914 593h2v2h-2z"/>
<path fill="#b4780c" d="M1294 475h2v2h-2zM894 576h2v2h-2zM900 579h2v2h-2zM915 579h2v2h-2zM901 587h2v2h-2zM894 588h2v2h-2zM908 588h2v2h-2zM904 589h2v2h-2zM982 594h2v2h-2zM915 596h2v2h-2zM923 604h2v2h-2z"/>
<path fill="#90600c" d="M1224 323h2v2h-2zM1127 355h2v2h-2zM1289 471h2v2h-2zM1298 472h2v2h-2zM1268 475h2v2h-2zM1274 479h2v2h-2zM1279 480h2v2h-2zM1250 545h2v2h-2zM1241 549h2v2h-2zM1278 549h2v2h-2zM1190 550h2v2h-2zM1152 552h2v2h-2zM1187 554h2v2h-2zM1260 556h2v2h-2zM1139 557h2v2h-2zM1149 557h2v2h-2zM1140 559h2v2h-2zM1173 560h2v2h-2zM1243 560h2v2h-2zM1248 561h2v2h-2zM1168 563h2v2h-2zM1197 563h2v2h-2zM1214 563h2v2h-2zM1206 564h2v2h-2zM1244 564h2v2h-2zM1253 564h2v2h-2zM1202 565h2v2h-2zM1102 566h2v2h-2zM1146 566h2v2h-2zM1146 567h2v2h-2zM1161 567h2v2h-2zM1176 568h2v2h-2zM1189 568h2v2h-2zM1206 571h2v2h-2zM1203 575h2v2h-2zM1106 577h2v2h-2zM913 581h2v2h-2zM916 581h2v2h-2zM892 587h2v2h-2zM910 590h2v2h-2z"/>
<path fill="#d88418" d="M820 491h2v2h-2zM812 508h2v2h-2zM794 517h2v2h-2zM814 523h2v2h-2zM907 591h2v2h-2z"/>
<path fill="#d89018" d="M1083 574h2v2h-2zM1029 575h2v2h-2zM1022 582h2v2h-2zM884 583h2v2h-2zM897 592h2v2h-2z"/>
<path fill="#9c600c" d="M1037 396h2v2h-2zM1008 410h2v2h-2zM1014 417h2v2h-2zM885 461h2v2h-2zM857 471h2v2h-2zM872 471h2v2h-2zM829 518h2v2h-2zM782 520h2v2h-2zM774 521h2v2h-2zM750 530h2v2h-2zM768 531h2v2h-2zM917 577h2v2h-2zM1010 585h2v2h-2zM997 586h2v2h-2zM983 591h2v2h-2zM921 597h2v2h-2zM884 606h2v2h-2z"/>
<path fill="#cc840c" d="M986 589h2v2h-2zM891 592h2v2h-2zM898 594h2v2h-2zM947 598h2v2h-2z"/>
<path fill="#e49018" d="M825 486h2v2h-2zM772 529h2v2h-2zM917 589h2v2h-2z"/>
<path fill="#54a80c" d="M986 444h2v2h-2zM1114 469h2v2h-2zM1021 470h2v2h-2zM998 475h2v2h-2zM883 488h2v2h-2zM935 492h2v2h-2zM916 500h2v2h-2zM874 501h2v2h-2zM794 512h2v2h-2zM863 513h2v2h-2zM930 518h2v2h-2zM899 528h2v2h-2zM826 534h2v2h-2zM762 538h2v2h-2zM989 541h2v2h-2zM1079 542h2v2h-2zM790 547h2v2h-2zM1054 550h2v2h-2zM983 551h2v2h-2zM838 559h2v2h-2zM865 560h2v2h-2z"/>
<path fill="#78cc18" d="M1198 430h2v2h-2zM1007 432h2v2h-2zM990 444h2v2h-2zM1047 449h2v2h-2zM1194 460h2v2h-2zM903 468h2v2h-2zM1121 471h2v2h-2zM852 476h2v2h-2zM933 478h2v2h-2zM1097 480h2v2h-2zM926 481h2v2h-2zM1074 483h2v2h-2zM820 492h2v2h-2zM1147 500h2v2h-2zM982 507h2v2h-2zM788 510h2v2h-2zM907 514h2v2h-2zM895 519h2v2h-2zM953 519h2v2h-2zM905 522h2v2h-2zM886 525h2v2h-2zM998 525h2v2h-2zM1191 526h2v2h-2zM1000 535h2v2h-2zM1024 535h2v2h-2zM769 545h2v2h-2zM1048 545h2v2h-2zM941 547h2v2h-2zM994 556h2v2h-2z"/>
<path fill="#60a80c" d="M1162 450h2v2h-2zM927 451h2v2h-2zM1104 469h2v2h-2zM1024 472h2v2h-2zM992 479h2v2h-2zM836 481h2v2h-2zM1102 490h2v2h-2zM800 498h2v2h-2zM1008 506h2v2h-2zM896 513h2v2h-2zM1070 514h2v2h-2zM1021 515h2v2h-2zM793 537h2v2h-2zM829 537h2v2h-2zM757 539h2v2h-2zM890 559h2v2h-2z"/>
<path fill="#78e418" d="M949 448h2v2h-2zM1159 481h2v2h-2zM1122 483h2v2h-2zM1059 502h2v2h-2zM1095 508h2v2h-2zM877 512h2v2h-2zM1040 518h2v2h-2zM1062 518h2v2h-2zM991 546h2v2h-2zM780 554h2v2h-2z"/>
<path fill="#84c00c" d="M966 450h2v2h-2zM1052 465h2v2h-2zM965 474h2v2h-2zM842 496h2v2h-2zM927 519h2v2h-2zM1068 519h2v2h-2zM961 540h2v2h-2zM870 541h2v2h-2zM889 547h2v2h-2zM878 557h2v2h-2z"/>
<path fill="#84e418" d="M1012 446h2v2h-2zM973 451h2v2h-2zM1099 458h2v2h-2zM923 461h2v2h-2zM1107 462h2v2h-2zM1091 463h2v2h-2zM1089 464h2v2h-2zM919 473h2v2h-2zM1017 474h2v2h-2zM1032 475h2v2h-2zM874 476h2v2h-2zM1046 488h2v2h-2zM1160 493h2v2h-2zM1125 496h2v2h-2zM1168 498h2v2h-2zM1070 505h2v2h-2zM882 519h2v2h-2zM1090 531h2v2h-2zM865 544h2v2h-2zM937 553h2v2h-2zM864 554h2v2h-2zM927 554h2v2h-2z"/>
<path fill="#a8f018" d="M979 446h2v2h-2zM1033 460h2v2h-2zM1073 463h2v2h-2zM1100 463h2v2h-2zM1188 469h2v2h-2zM1116 485h2v2h-2zM980 487h2v2h-2zM908 488h2v2h-2zM829 496h2v2h-2zM881 497h2v2h-2zM934 499h2v2h-2zM1186 507h2v2h-2zM1131 512h2v2h-2zM798 514h2v2h-2zM940 520h2v2h-2zM826 521h2v2h-2zM825 526h2v2h-2zM1096 528h2v2h-2zM806 536h2v2h-2zM1012 538h2v2h-2zM1044 541h2v2h-2zM1115 549h2v2h-2z"/>
<path fill="#84b40c" d="M1125 419h2v2h-2zM1136 443h2v2h-2zM1001 451h2v2h-2zM1069 466h2v2h-2zM1236 472h2v2h-2zM1164 473h2v2h-2zM1148 475h2v2h-2zM1213 475h2v2h-2zM1205 479h2v2h-2zM1143 480h2v2h-2zM1085 486h2v2h-2zM890 494h2v2h-2zM848 496h2v2h-2zM1149 496h2v2h-2zM989 498h2v2h-2zM1096 499h2v2h-2zM1195 507h2v2h-2zM822 511h2v2h-2zM1137 513h2v2h-2zM1197 518h2v2h-2zM832 526h2v2h-2zM1131 528h2v2h-2zM762 542h2v2h-2zM1058 542h2v2h-2zM1023 547h2v2h-2zM1141 550h2v2h-2z"/>
<path fill="#78fc18" d="M1018 448h2v2h-2zM811 496h2v2h-2zM961 520h2v2h-2zM939 528h2v2h-2zM784 529h2v2h-2zM790 531h2v2h-2z"/>
<path fill="#a8fc18" d="M1033 451h2v2h-2zM850 481h2v2h-2zM1172 481h2v2h-2zM1051 515h2v2h-2zM1015 520h2v2h-2zM1026 552h2v2h-2z"/>
<path fill="#78f018" d="M1043 449h2v2h-2zM930 457h2v2h-2zM964 459h2v2h-2zM994 459h2v2h-2zM1080 462h2v2h-2zM895 469h2v2h-2zM1022 490h2v2h-2zM1020 499h2v2h-2zM1025 516h2v2h-2zM843 522h2v2h-2zM949 525h2v2h-2zM1010 525h2v2h-2zM1027 528h2v2h-2zM799 534h2v2h-2zM861 538h2v2h-2zM893 545h2v2h-2zM957 546h2v2h-2zM852 550h2v2h-2zM1006 551h2v2h-2z"/>
<path fill="#78a80c" d="M1147 416h2v2h-2zM1294 419h2v2h-2zM1295 422h2v2h-2zM1139 423h2v2h-2zM1012 430h2v2h-2zM1331 435h2v2h-2zM1146 446h2v2h-2zM1057 450h2v2h-2zM945 452h2v2h-2zM1225 456h2v2h-2zM1061 457h2v2h-2zM1066 473h2v2h-2zM1221 474h2v2h-2zM987 476h2v2h-2zM878 479h2v2h-2zM1088 482h2v2h-2zM1125 483h2v2h-2zM910 484h2v2h-2zM1122 493h2v2h-2zM816 503h2v2h-2zM1172 508h2v2h-2zM1178 512h2v2h-2zM856 518h2v2h-2zM1164 528h2v2h-2zM863 529h2v2h-2zM822 532h2v2h-2zM953 533h2v2h-2zM1073 537h2v2h-2zM848 541h2v2h-2zM972 541h2v2h-2zM1082 544h2v2h-2zM1151 547h2v2h-2zM1125 548h2v2h-2zM1084 550h2v2h-2z"/>
<path fill="#90fc18" d="M1065 448h2v2h-2zM903 481h2v2h-2zM797 505h2v2h-2zM908 507h2v2h-2zM816 524h2v2h-2zM984 541h2v2h-2zM1038 548h2v2h-2zM965 557h2v2h-2z"/>
<path fill="#6cb40c" d="M1069 448h2v2h-2zM941 455h2v2h-2zM916 470h2v2h-2zM924 470h2v2h-2zM867 472h2v2h-2zM1111 477h2v2h-2zM856 486h2v2h-2zM1051 492h2v2h-2zM1027 498h2v2h-2zM873 505h2v2h-2zM900 506h2v2h-2zM979 514h2v2h-2zM1002 516h2v2h-2zM1074 523h2v2h-2zM1168 526h2v2h-2z"/>
<path fill="#78d818" d="M1078 450h2v2h-2zM993 467h2v2h-2zM1035 471h2v2h-2zM1070 476h2v2h-2zM894 487h2v2h-2zM911 492h2v2h-2zM1059 493h2v2h-2zM967 495h2v2h-2zM786 516h2v2h-2zM912 520h2v2h-2zM945 527h2v2h-2zM778 541h2v2h-2zM1090 544h2v2h-2zM989 550h2v2h-2zM951 552h2v2h-2z"/>
<path fill="#b4e418" d="M1107 449h2v2h-2zM1202 458h2v2h-2zM1122 462h2v2h-2zM1239 467h2v2h-2zM1231 480h2v2h-2zM1126 526h2v2h-2zM1140 533h2v2h-2z"/>
<path fill="#c0f018" d="M1117 447h2v2h-2zM1183 453h2v2h-2zM1257 477h2v2h-2zM1175 528h2v2h-2zM1174 531h2v2h-2z"/>
<path fill="#9cd818" d="M1137 448h2v2h-2zM1237 454h2v2h-2zM1195 457h2v2h-2zM899 460h2v2h-2zM1189 486h2v2h-2zM1223 486h2v2h-2zM835 493h2v2h-2zM1198 493h2v2h-2zM1174 494h2v2h-2zM1032 498h2v2h-2zM1159 503h2v2h-2zM880 508h2v2h-2zM1161 513h2v2h-2zM911 530h2v2h-2zM1121 531h2v2h-2zM878 532h2v2h-2zM953 541h2v2h-2zM969 544h2v2h-2zM920 545h2v2h-2zM837 546h2v2h-2zM958 551h2v2h-2zM938 559h2v2h-2z"/>
<path fill="#6ca80c" d="M1147 451h2v2h-2zM979 453h2v2h-2zM945 462h2v2h-2zM1201 462h2v2h-2zM927 463h2v2h-2zM1159 467h2v2h-2zM1087 469h2v2h-2zM1010 479h2v2h-2zM1043 479h2v2h-2zM1024 487h2v2h-2zM1136 488h2v2h-2zM1033 489h2v2h-2zM975 499h2v2h-2zM1007 499h2v2h-2zM847 500h2v2h-2zM807 507h2v2h-2zM982 526h2v2h-2zM964 528h2v2h-2zM1051 531h2v2h-2zM970 533h2v2h-2zM804 547h2v2h-2zM839 553h2v2h-2zM759 560h2v2h-2z"/>
<path fill="#b4f018" d="M1156 448h2v2h-2zM1171 463h2v2h-2zM1189 476h2v2h-2zM1193 478h2v2h-2zM1125 485h2v2h-2zM1058 487h2v2h-2zM1138 498h2v2h-2zM1143 506h2v2h-2zM1205 512h2v2h-2zM1087 516h2v2h-2zM1157 534h2v2h-2zM906 537h2v2h-2z"/>
<path fill="#84d818" d="M1170 449h2v2h-2zM1040 455h2v2h-2zM1077 456h2v2h-2zM1134 457h2v2h-2zM1006 460h2v2h-2zM1046 466h2v2h-2zM968 467h2v2h-2zM1232 497h2v2h-2zM1129 498h2v2h-2zM950 504h2v2h-2zM1045 505h2v2h-2zM827 507h2v2h-2zM1039 511h2v2h-2zM986 517h2v2h-2zM1031 520h2v2h-2zM1089 520h2v2h-2zM852 528h2v2h-2zM751 539h2v2h-2zM883 539h2v2h-2zM1052 547h2v2h-2zM1019 550h2v2h-2z"/>
<path fill="#84a80c" d="M1135 395h2v2h-2zM1185 450h2v2h-2zM1280 473h2v2h-2zM1270 478h2v2h-2zM1237 486h2v2h-2z"/>
<path fill="#60b40c" d="M917 458h2v2h-2zM962 507h2v2h-2zM872 521h2v2h-2zM946 553h2v2h-2z"/>
<path fill="#90d818" d="M964 453h2v2h-2zM1048 456h2v2h-2zM1080 457h2v2h-2zM1149 462h2v2h-2zM894 464h2v2h-2zM999 470h2v2h-2zM1290 473h2v2h-2zM837 485h2v2h-2zM871 487h2v2h-2zM1156 490h2v2h-2zM1000 491h2v2h-2zM1134 493h2v2h-2zM871 496h2v2h-2zM1156 500h2v2h-2zM908 502h2v2h-2zM892 505h2v2h-2zM887 508h2v2h-2zM882 512h2v2h-2zM1152 512h2v2h-2zM774 514h2v2h-2zM808 514h2v2h-2zM916 514h2v2h-2zM994 522h2v2h-2zM1083 523h2v2h-2zM831 526h2v2h-2zM768 528h2v2h-2zM878 529h2v2h-2zM851 531h2v2h-2zM845 532h2v2h-2zM917 534h2v2h-2zM1075 535h2v2h-2zM1131 539h2v2h-2zM1097 546h2v2h-2zM844 554h2v2h-2z"/>
<path fill="#90e418" d="M985 453h2v2h-2zM969 454h2v2h-2zM1040 459h2v2h-2zM1176 463h2v2h-2zM871 468h2v2h-2zM882 469h2v2h-2zM1132 474h2v2h-2zM946 477h2v2h-2zM1157 477h2v2h-2zM1002 483h2v2h-2zM938 486h2v2h-2zM1126 499h2v2h-2zM1061 501h2v2h-2zM1078 502h2v2h-2zM924 505h2v2h-2zM1159 508h2v2h-2zM867 510h2v2h-2zM1047 532h2v2h-2zM947 547h2v2h-2zM811 550h2v2h-2z"/>
<path fill="#84cc18" d="M1131 400h2v2h-2zM994 405h2v2h-2zM1095 407h2v2h-2zM1109 407h2v2h-2zM1009 452h2v2h-2zM1158 456h2v2h-2zM958 459h2v2h-2zM1293 466h2v2h-2zM1133 468h2v2h-2zM1030 470h2v2h-2zM1272 476h2v2h-2zM1031 479h2v2h-2zM975 486h2v2h-2zM1040 494h2v2h-2zM949 499h2v2h-2zM813 500h2v2h-2zM1118 502h2v2h-2zM924 503h2v2h-2zM829 511h2v2h-2zM869 524h2v2h-2zM835 530h2v2h-2zM962 531h2v2h-2zM1112 532h2v2h-2zM901 534h2v2h-2zM926 541h2v2h-2zM1014 548h2v2h-2zM1050 551h2v2h-2z"/>
<path fill="#6cfc18" d="M1020 453h2v2h-2zM1017 542h2v2h-2zM976 547h2v2h-2z"/>
<path fill="#78c018" d="M1019 388h2v2h-2zM1120 412h2v2h-2zM1150 455h2v2h-2zM1030 456h2v2h-2zM975 476h2v2h-2zM945 479h2v2h-2zM1108 479h2v2h-2zM888 482h2v2h-2zM965 485h2v2h-2zM1065 485h2v2h-2zM915 488h2v2h-2zM1043 489h2v2h-2zM1098 493h2v2h-2zM980 494h2v2h-2zM825 498h2v2h-2zM859 503h2v2h-2zM1178 503h2v2h-2zM783 509h2v2h-2zM1107 509h2v2h-2zM992 510h2v2h-2zM807 520h2v2h-2zM1099 524h2v2h-2zM932 532h2v2h-2zM1057 534h2v2h-2zM824 542h2v2h-2zM1156 549h2v2h-2zM995 555h2v2h-2zM844 559h2v2h-2z"/>
<path fill="#84f018" d="M1103 454h2v2h-2zM1053 456h2v2h-2zM1110 456h2v2h-2zM933 466h2v2h-2zM886 468h2v2h-2zM957 487h2v2h-2zM925 493h2v2h-2zM1085 494h2v2h-2zM1086 498h2v2h-2zM959 512h2v2h-2zM988 512h2v2h-2zM1076 515h2v2h-2zM1093 516h2v2h-2zM1005 525h2v2h-2zM1129 534h2v2h-2zM811 539h2v2h-2zM817 541h2v2h-2zM813 548h2v2h-2zM815 551h2v2h-2zM785 554h2v2h-2zM1040 554h2v2h-2z"/>
<path fill="#9cf018" d="M1174 454h2v2h-2zM1129 457h2v2h-2zM1058 459h2v2h-2zM1137 463h2v2h-2zM979 468h2v2h-2zM1039 473h2v2h-2zM1114 482h2v2h-2zM1025 494h2v2h-2zM1181 494h2v2h-2zM954 497h2v2h-2zM998 506h2v2h-2zM785 511h2v2h-2zM1181 512h2v2h-2zM972 518h2v2h-2zM1172 518h2v2h-2zM949 519h2v2h-2zM960 524h2v2h-2zM933 546h2v2h-2zM999 546h2v2h-2zM961 547h2v2h-2zM1115 551h2v2h-2z"/>
<path fill="#90c018" d="M1223 424h2v2h-2zM1140 454h2v2h-2zM1226 461h2v2h-2zM1196 467h2v2h-2zM1181 469h2v2h-2zM1183 474h2v2h-2zM857 475h2v2h-2zM1180 479h2v2h-2zM977 481h2v2h-2zM1185 483h2v2h-2zM832 490h2v2h-2zM1167 495h2v2h-2zM1125 510h2v2h-2zM1116 525h2v2h-2zM1162 542h2v2h-2zM1163 547h2v2h-2zM873 548h2v2h-2z"/>
<path fill="#9ccc18" d="M1166 452h2v2h-2zM1131 461h2v2h-2zM1219 464h2v2h-2zM1150 466h2v2h-2zM1177 475h2v2h-2zM840 482h2v2h-2zM874 485h2v2h-2zM1243 485h2v2h-2zM1202 506h2v2h-2zM1186 522h2v2h-2zM1104 535h2v2h-2zM1176 539h2v2h-2zM818 554h2v2h-2z"/>
<path fill="#90f018" d="M1187 456h2v2h-2zM1216 456h2v2h-2zM1025 461h2v2h-2zM1231 471h2v2h-2zM1247 482h2v2h-2zM841 503h2v2h-2zM1088 506h2v2h-2zM1014 509h2v2h-2zM1146 525h2v2h-2zM938 535h2v2h-2zM875 538h2v2h-2zM1102 540h2v2h-2zM853 541h2v2h-2zM875 553h2v2h-2z"/>
<path fill="#ccd818" d="M1246 453h2v2h-2z"/>
<path fill="#a8cc18" d="M1256 453h2v2h-2zM1284 460h2v2h-2zM1206 464h2v2h-2zM852 484h2v2h-2zM864 487h2v2h-2zM840 490h2v2h-2zM847 490h2v2h-2zM1199 511h2v2h-2zM1152 528h2v2h-2zM834 542h2v2h-2z"/>
<path fill="#b4c018" d="M1265 458h2v2h-2zM781 500h2v2h-2zM800 507h2v2h-2zM804 541h2v2h-2z"/>
<path fill="#a8b40c" d="M1269 456h2v2h-2zM1277 466h2v2h-2zM1243 474h2v2h-2zM797 536h2v2h-2z"/>
<path fill="#6cf018" d="M886 462h2v2h-2zM906 472h2v2h-2zM990 489h2v2h-2zM823 517h2v2h-2zM980 534h2v2h-2zM1028 547h2v2h-2zM966 552h2v2h-2zM784 560h2v2h-2z"/>
<path fill="#84fc18" d="M909 463h2v2h-2zM1083 469h2v2h-2zM1080 472h2v2h-2zM1053 481h2v2h-2zM1108 487h2v2h-2zM806 500h2v2h-2zM978 504h2v2h-2zM1122 545h2v2h-2z"/>
<path fill="#9ce418" d="M973 460h2v2h-2zM991 462h2v2h-2zM1126 466h2v2h-2zM1172 466h2v2h-2zM1100 498h2v2h-2zM972 506h2v2h-2zM915 508h2v2h-2zM953 508h2v2h-2zM1104 519h2v2h-2zM1022 523h2v2h-2zM912 526h2v2h-2zM989 527h2v2h-2zM888 533h2v2h-2zM897 539h2v2h-2zM1140 541h2v2h-2zM1063 542h2v2h-2zM784 545h2v2h-2z"/>
<path fill="#90c00c" d="M980 460h2v2h-2zM1058 474h2v2h-2zM1131 487h2v2h-2zM1183 488h2v2h-2zM1110 505h2v2h-2zM1160 519h2v2h-2zM919 521h2v2h-2zM1130 522h2v2h-2z"/>
<path fill="#90cc18" d="M1153 388h2v2h-2zM1066 421h2v2h-2zM1028 425h2v2h-2zM1011 462h2v2h-2zM908 465h2v2h-2zM1206 472h2v2h-2zM1017 479h2v2h-2zM939 481h2v2h-2zM1135 482h2v2h-2zM1167 483h2v2h-2zM998 486h2v2h-2zM821 488h2v2h-2zM836 489h2v2h-2zM1228 489h2v2h-2zM1159 490h2v2h-2zM839 516h2v2h-2zM835 518h2v2h-2zM1168 521h2v2h-2zM1136 526h2v2h-2zM930 529h2v2h-2zM1178 535h2v2h-2zM870 536h2v2h-2zM1088 541h2v2h-2zM904 553h2v2h-2z"/>
<path fill="#78b40c" d="M1018 463h2v2h-2zM1117 475h2v2h-2zM1284 481h2v2h-2zM1214 485h2v2h-2zM900 489h2v2h-2zM1210 496h2v2h-2zM983 500h2v2h-2zM1198 501h2v2h-2zM974 511h2v2h-2zM1007 518h2v2h-2zM1122 520h2v2h-2zM1095 522h2v2h-2zM790 523h2v2h-2zM920 524h2v2h-2zM1110 527h2v2h-2zM1135 530h2v2h-2zM945 535h2v2h-2zM923 537h2v2h-2zM882 548h2v2h-2zM882 553h2v2h-2zM822 555h2v2h-2z"/>
<path fill="#6ccc18" d="M1156 410h2v2h-2zM990 436h2v2h-2zM926 452h2v2h-2zM1050 461h2v2h-2zM900 474h2v2h-2zM959 476h2v2h-2zM1101 476h2v2h-2zM1039 479h2v2h-2zM1020 484h2v2h-2zM1103 496h2v2h-2zM829 497h2v2h-2zM818 506h2v2h-2zM1059 506h2v2h-2zM945 513h2v2h-2zM854 515h2v2h-2zM996 515h2v2h-2zM1134 519h2v2h-2zM839 525h2v2h-2zM1007 546h2v2h-2zM924 551h2v2h-2zM815 559h2v2h-2z"/>
<path fill="#a8e418" d="M1117 463h2v2h-2zM1077 488h2v2h-2zM867 495h2v2h-2zM1220 498h2v2h-2zM1150 506h2v2h-2zM1117 511h2v2h-2zM1114 519h2v2h-2zM888 522h2v2h-2zM767 535h2v2h-2zM1029 538h2v2h-2zM1123 539h2v2h-2zM969 541h2v2h-2zM1168 541h2v2h-2zM798 548h2v2h-2zM898 552h2v2h-2zM801 555h2v2h-2zM768 557h2v2h-2z"/>
<path fill="#6cc018" d="M1074 403h2v2h-2zM1225 416h2v2h-2zM956 442h2v2h-2zM1156 462h2v2h-2zM1126 472h2v2h-2zM1087 473h2v2h-2zM1061 479h2v2h-2zM1083 481h2v2h-2zM1009 489h2v2h-2zM1174 490h2v2h-2zM852 499h2v2h-2zM1069 499h2v2h-2zM931 503h2v2h-2zM960 503h2v2h-2zM810 513h2v2h-2zM758 527h2v2h-2zM1047 527h2v2h-2zM1021 528h2v2h-2zM773 530h2v2h-2zM1110 539h2v2h-2zM771 540h2v2h-2zM1133 546h2v2h-2zM791 553h2v2h-2zM765 555h2v2h-2z"/>
<path fill="#a8d818" d="M1212 462h2v2h-2zM1269 463h2v2h-2zM1183 464h2v2h-2zM1167 470h2v2h-2zM1266 472h2v2h-2zM1210 483h2v2h-2zM1191 503h2v2h-2zM1150 532h2v2h-2zM1170 543h2v2h-2zM1140 546h2v2h-2z"/>
<path fill="#c0e418" d="M1239 462h2v2h-2zM1228 477h2v2h-2zM1216 480h2v2h-2zM1224 484h2v2h-2zM1189 512h2v2h-2z"/>
<path fill="#e4f018" d="M1276 459h2v2h-2zM1261 462h2v2h-2zM1276 480h2v2h-2z"/>
<path fill="#c0cc18" d="M1288 462h2v2h-2zM1273 466h2v2h-2zM844 478h2v2h-2zM778 540h2v2h-2z"/>
<path fill="#84c018" d="M1112 394h2v2h-2zM1141 402h2v2h-2zM1189 406h2v2h-2zM1082 413h2v2h-2zM990 428h2v2h-2zM1142 466h2v2h-2zM847 479h2v2h-2zM964 481h2v2h-2zM1148 487h2v2h-2zM1185 495h2v2h-2zM942 500h2v2h-2zM817 504h2v2h-2zM808 508h2v2h-2zM852 508h2v2h-2zM837 509h2v2h-2zM865 520h2v2h-2zM777 521h2v2h-2zM1065 527h2v2h-2zM1096 530h2v2h-2zM1009 533h2v2h-2zM852 548h2v2h-2z"/>
<path fill="#c0fc18" d="M1220 470h2v2h-2zM1096 475h2v2h-2zM1199 487h2v2h-2zM1217 496h2v2h-2z"/>
<path fill="#90b40c" d="M1224 467h2v2h-2zM1250 470h2v2h-2zM1199 475h2v2h-2zM1222 494h2v2h-2zM1108 499h2v2h-2zM1216 500h2v2h-2zM1082 506h2v2h-2zM1182 518h2v2h-2zM828 536h2v2h-2zM1093 537h2v2h-2zM815 543h2v2h-2zM778 546h2v2h-2z"/>
<path fill="#b4d818" d="M1285 471h2v2h-2zM1237 494h2v2h-2z"/>
<path fill="#48a80c" d="M886 474h2v2h-2zM861 477h2v2h-2zM1013 494h2v2h-2zM940 495h2v2h-2zM793 505h2v2h-2zM910 548h2v2h-2z"/>
<path fill="#9cfc18" d="M1169 476h2v2h-2zM882 501h2v2h-2zM1034 511h2v2h-2zM767 519h2v2h-2zM783 523h2v2h-2zM905 526h2v2h-2zM1042 527h2v2h-2z"/>
<path fill="#b4cc18" d="M825 468h2v2h-2zM1254 473h2v2h-2zM1254 480h2v2h-2zM1260 480h2v2h-2zM1182 498h2v2h-2zM804 516h2v2h-2zM1182 526h2v2h-2zM766 529h2v2h-2z"/>
<path fill="#78c00c" d="M894 479h2v2h-2z"/>
<path fill="#ccf018" d="M1242 482h2v2h-2z"/>
<path fill="#d8fc18" d="M1209 487h2v2h-2z"/>
<path fill="#b4fc18" d="M948 493h2v2h-2zM898 501h2v2h-2zM1042 503h2v2h-2zM1135 505h2v2h-2zM840 506h2v2h-2zM966 513h2v2h-2zM1055 514h2v2h-2zM1151 523h2v2h-2zM844 526h2v2h-2zM768 550h2v2h-2zM1078 552h2v2h-2zM900 556h2v2h-2z"/>
<path fill="#90a80c" d="M1208 508h2v2h-2zM1215 509h2v2h-2zM1154 537h2v2h-2zM760 553h2v2h-2z"/>
<path fill="#a8c00c" d="M836 529h2v2h-2z"/>
<path fill="#6c900c" d="M1102 399h2v2h-2zM1217 401h2v2h-2zM1220 401h2v2h-2zM1125 416h2v2h-2zM1235 427h2v2h-2zM1232 431h2v2h-2zM1271 431h2v2h-2zM1196 435h2v2h-2zM1324 438h2v2h-2zM1171 441h2v2h-2zM1269 442h2v2h-2zM766 527h2v2h-2zM787 540h2v2h-2z"/>
<path fill="#a8a80c" d="M1098 394h2v2h-2zM1081 402h2v2h-2zM1213 461h2v2h-2zM1199 464h2v2h-2zM1251 464h2v2h-2zM1318 466h2v2h-2zM1315 471h2v2h-2zM1181 473h2v2h-2zM1395 480h2v2h-2zM1387 482h2v2h-2zM853 519h2v2h-2zM809 546h2v2h-2z"/>
<path fill="#c0c00c" d="M1308 467h2v2h-2zM758 555h2v2h-2z"/>
<path fill="#849c0c" d="M777 554h2v2h-2zM804 554h2v2h-2z"/>
<path fill="#6c600c" d="M1218 331h2v2h-2zM1298 338h2v2h-2zM1029 394h2v2h-2zM1281 400h2v2h-2zM1026 403h2v2h-2zM1040 403h2v2h-2zM1208 406h2v2h-2zM1213 407h2v2h-2zM1291 407h2v2h-2zM1174 408h2v2h-2zM1028 409h2v2h-2zM1106 409h2v2h-2zM1012 411h2v2h-2zM1014 412h2v2h-2zM1166 414h2v2h-2zM1336 414h2v2h-2zM1034 416h2v2h-2zM999 419h2v2h-2zM1003 419h2v2h-2zM1136 420h2v2h-2zM1048 425h2v2h-2zM1072 425h2v2h-2zM1214 425h2v2h-2zM1009 428h2v2h-2zM1126 428h2v2h-2zM1230 430h2v2h-2zM972 432h2v2h-2zM988 432h2v2h-2zM966 434h2v2h-2zM1178 437h2v2h-2zM962 438h2v2h-2zM1281 438h2v2h-2zM1332 438h2v2h-2zM948 439h2v2h-2zM1287 439h2v2h-2zM1033 440h2v2h-2zM1278 443h2v2h-2zM930 444h2v2h-2zM1108 447h2v2h-2zM911 449h2v2h-2zM920 449h2v2h-2zM897 453h2v2h-2zM915 453h2v2h-2zM874 462h2v2h-2zM858 463h2v2h-2zM886 464h2v2h-2zM848 470h2v2h-2zM843 473h2v2h-2zM853 474h2v2h-2zM829 475h2v2h-2zM835 476h2v2h-2zM835 477h2v2h-2zM842 477h2v2h-2zM876 486h2v2h-2zM807 491h2v2h-2zM915 491h2v2h-2zM800 494h2v2h-2zM770 511h2v2h-2zM766 516h2v2h-2zM759 518h2v2h-2zM743 530h2v2h-2zM979 556h2v2h-2zM997 556h2v2h-2zM889 558h2v2h-2zM932 558h2v2h-2zM968 558h2v2h-2zM940 560h2v2h-2zM987 560h2v2h-2zM1018 560h2v2h-2zM996 561h2v2h-2zM1007 561h2v2h-2zM1044 562h2v2h-2zM1062 562h2v2h-2zM1003 563h2v2h-2zM1022 563h2v2h-2zM1078 563h2v2h-2zM943 564h2v2h-2zM1002 564h2v2h-2zM1001 565h2v2h-2zM1005 565h2v2h-2zM912 573h2v2h-2z"/>
<path fill="#90780c" d="M1241 332h2v2h-2zM1253 332h2v2h-2zM1226 338h2v2h-2zM1173 347h2v2h-2zM1175 351h2v2h-2zM1140 353h2v2h-2zM1310 476h2v2h-2zM1353 486h2v2h-2zM825 490h2v2h-2zM921 561h2v2h-2zM922 563h2v2h-2zM993 566h2v2h-2zM1048 567h2v2h-2zM920 568h2v2h-2zM1019 568h2v2h-2zM1011 569h2v2h-2zM1064 570h2v2h-2zM1036 572h2v2h-2zM1023 576h2v2h-2zM1099 576h2v2h-2z"/>
<path fill="#60540c" d="M1236 329h2v2h-2zM1235 330h2v2h-2zM1248 336h2v2h-2zM1160 340h2v2h-2zM1145 353h2v2h-2zM1085 366h2v2h-2zM1077 373h2v2h-2zM1053 382h2v2h-2zM1056 387h2v2h-2zM1154 392h2v2h-2zM1125 395h2v2h-2zM1195 402h2v2h-2zM1049 403h2v2h-2zM1053 403h2v2h-2zM1050 407h2v2h-2zM1024 408h2v2h-2zM1009 412h2v2h-2zM1015 413h2v2h-2zM1334 416h2v2h-2zM1275 420h2v2h-2zM1301 422h2v2h-2zM979 423h2v2h-2zM994 424h2v2h-2zM1293 425h2v2h-2zM1300 427h2v2h-2zM1055 428h2v2h-2zM1087 433h2v2h-2zM1279 433h2v2h-2zM959 434h2v2h-2zM944 437h2v2h-2zM949 438h2v2h-2zM1138 439h2v2h-2zM1189 440h2v2h-2zM945 442h2v2h-2zM1108 442h2v2h-2zM922 445h2v2h-2zM910 448h2v2h-2zM1264 448h2v2h-2zM1287 449h2v2h-2zM896 451h2v2h-2zM872 455h2v2h-2zM886 461h2v2h-2zM880 463h2v2h-2zM874 465h2v2h-2zM845 470h2v2h-2zM832 485h2v2h-2zM815 491h2v2h-2zM816 492h2v2h-2zM790 500h2v2h-2zM761 513h2v2h-2zM770 513h2v2h-2zM763 518h2v2h-2zM746 533h2v2h-2z"/>
<path fill="#3c3c0c" d="M1088 377h2v2h-2zM1052 382h2v2h-2zM1040 383h2v2h-2zM1055 386h2v2h-2zM1116 392h2v2h-2zM983 394h2v2h-2zM1112 396h2v2h-2zM1038 397h2v2h-2zM1261 397h2v2h-2zM1033 401h2v2h-2zM1114 401h2v2h-2zM1015 403h2v2h-2zM1109 406h2v2h-2zM1002 407h2v2h-2zM1084 408h2v2h-2zM1087 409h2v2h-2zM1138 410h2v2h-2zM1265 410h2v2h-2zM1145 411h2v2h-2zM1315 411h2v2h-2zM1268 412h2v2h-2zM1279 412h2v2h-2zM1290 412h2v2h-2zM1103 413h2v2h-2zM1235 413h2v2h-2zM1096 414h2v2h-2zM1135 415h2v2h-2zM1050 416h2v2h-2zM1092 416h2v2h-2zM1142 416h2v2h-2zM1238 416h2v2h-2zM1248 418h2v2h-2zM1308 418h2v2h-2zM1290 419h2v2h-2zM1122 420h2v2h-2zM1350 423h2v2h-2zM1267 424h2v2h-2zM1353 424h2v2h-2zM1109 426h2v2h-2zM1335 426h2v2h-2zM982 427h2v2h-2zM1361 427h2v2h-2zM1363 427h2v2h-2zM1302 428h2v2h-2zM1371 428h2v2h-2zM1187 429h2v2h-2zM1279 429h2v2h-2zM1359 429h2v2h-2zM1395 429h2v2h-2zM1320 431h2v2h-2zM1350 431h2v2h-2zM1092 432h2v2h-2zM1318 432h2v2h-2zM1324 432h2v2h-2zM1400 433h2v2h-2zM1345 434h2v2h-2zM1359 436h2v2h-2zM1278 437h2v2h-2zM944 438h2v2h-2zM1321 441h2v2h-2zM932 444h2v2h-2zM931 445h2v2h-2zM923 450h2v2h-2zM855 463h2v2h-2zM841 473h2v2h-2zM844 473h2v2h-2zM831 481h2v2h-2zM827 488h2v2h-2zM799 493h2v2h-2zM778 510h2v2h-2zM746 521h2v2h-2z"/>
<path fill="#48480c" d="M1232 321h2v2h-2zM1042 381h2v2h-2zM1031 384h2v2h-2zM1173 384h2v2h-2zM1046 389h2v2h-2zM1129 390h2v2h-2zM1117 393h2v2h-2zM1062 397h2v2h-2zM1021 400h2v2h-2zM1062 400h2v2h-2zM1166 400h2v2h-2zM1147 404h2v2h-2zM1040 405h2v2h-2zM1152 405h2v2h-2zM1176 406h2v2h-2zM1235 406h2v2h-2zM1178 407h2v2h-2zM1019 410h2v2h-2zM1051 410h2v2h-2zM1289 410h2v2h-2zM1039 411h2v2h-2zM1241 411h2v2h-2zM1107 412h2v2h-2zM1288 412h2v2h-2zM1297 412h2v2h-2zM1306 412h2v2h-2zM1191 413h2v2h-2zM1008 414h2v2h-2zM1004 415h2v2h-2zM1057 415h2v2h-2zM1194 415h2v2h-2zM1076 416h2v2h-2zM1169 416h2v2h-2zM1264 416h2v2h-2zM1216 417h2v2h-2zM1294 418h2v2h-2zM1332 419h2v2h-2zM1067 420h2v2h-2zM1276 420h2v2h-2zM1330 420h2v2h-2zM1023 422h2v2h-2zM1177 422h2v2h-2zM1339 422h2v2h-2zM1213 423h2v2h-2zM1006 424h2v2h-2zM1293 426h2v2h-2zM1261 427h2v2h-2zM1055 431h2v2h-2zM1198 431h2v2h-2zM1293 431h2v2h-2zM1216 432h2v2h-2zM1345 433h2v2h-2zM971 434h2v2h-2zM1327 434h2v2h-2zM951 438h2v2h-2zM959 438h2v2h-2zM1266 438h2v2h-2zM1319 439h2v2h-2zM952 441h2v2h-2zM1238 443h2v2h-2zM986 450h2v2h-2zM986 452h2v2h-2zM974 458h2v2h-2zM878 459h2v2h-2zM852 462h2v2h-2zM935 467h2v2h-2zM931 470h2v2h-2zM792 496h2v2h-2zM772 511h2v2h-2z"/>
<path fill="#483c0c" d="M1216 331h2v2h-2zM1147 353h2v2h-2zM1063 373h2v2h-2zM1040 396h2v2h-2zM1029 397h2v2h-2zM1026 402h2v2h-2zM1024 406h2v2h-2zM1013 407h2v2h-2zM1204 408h2v2h-2zM1230 413h2v2h-2zM1005 414h2v2h-2zM1009 414h2v2h-2zM1008 415h2v2h-2zM1193 415h2v2h-2zM1011 417h2v2h-2zM998 420h2v2h-2zM991 421h2v2h-2zM1025 424h2v2h-2zM1317 424h2v2h-2zM1031 425h2v2h-2zM983 427h2v2h-2zM971 431h2v2h-2zM944 444h2v2h-2zM930 446h2v2h-2zM926 447h2v2h-2zM929 448h2v2h-2zM943 449h2v2h-2zM883 454h2v2h-2zM889 459h2v2h-2zM850 469h2v2h-2zM830 485h2v2h-2zM798 493h2v2h-2zM796 497h2v2h-2zM784 500h2v2h-2zM779 515h2v2h-2zM765 516h2v2h-2zM755 524h2v2h-2zM1248 552h2v2h-2zM1193 554h2v2h-2z"/>
<path fill="#54480c" d="M1258 315h2v2h-2zM1191 326h2v2h-2zM1183 332h2v2h-2zM1181 338h2v2h-2zM1288 340h2v2h-2zM1058 379h2v2h-2zM1061 384h2v2h-2zM1056 391h2v2h-2zM1038 396h2v2h-2zM1092 399h2v2h-2zM1036 400h2v2h-2zM1250 402h2v2h-2zM1012 406h2v2h-2zM1259 408h2v2h-2zM1060 409h2v2h-2zM1245 416h2v2h-2zM1275 416h2v2h-2zM1058 417h2v2h-2zM1207 417h2v2h-2zM996 426h2v2h-2zM1255 426h2v2h-2zM967 431h2v2h-2zM977 432h2v2h-2zM971 433h2v2h-2zM1024 434h2v2h-2zM966 435h2v2h-2zM1082 436h2v2h-2zM1227 436h2v2h-2zM876 461h2v2h-2zM871 462h2v2h-2zM863 467h2v2h-2zM845 473h2v2h-2zM826 474h2v2h-2zM826 475h2v2h-2zM833 475h2v2h-2zM819 481h2v2h-2zM812 489h2v2h-2zM781 506h2v2h-2zM783 506h2v2h-2zM767 511h2v2h-2zM779 511h2v2h-2zM761 517h2v2h-2zM756 519h2v2h-2z"/>
<path fill="#786c18" d="M1044 382h2v2h-2zM1047 386h2v2h-2zM1041 392h2v2h-2zM1038 398h2v2h-2zM1029 402h2v2h-2zM986 425h2v2h-2zM964 434h2v2h-2zM933 445h2v2h-2zM911 448h2v2h-2zM914 449h2v2h-2zM887 450h2v2h-2zM900 451h2v2h-2zM887 459h2v2h-2zM871 464h2v2h-2zM849 466h2v2h-2zM830 474h2v2h-2zM811 480h2v2h-2zM816 483h2v2h-2zM810 487h2v2h-2zM787 508h2v2h-2zM757 523h2v2h-2z"/>
<path fill="#a8900c" d="M1055 377h2v2h-2zM1326 478h2v2h-2zM822 481h2v2h-2zM1337 482h2v2h-2zM1332 483h2v2h-2zM1345 483h2v2h-2zM1347 484h2v2h-2zM892 562h2v2h-2zM970 564h2v2h-2zM1011 564h2v2h-2zM1023 564h2v2h-2zM1032 565h2v2h-2zM930 566h2v2h-2zM991 567h2v2h-2zM982 568h2v2h-2zM994 569h2v2h-2z"/>
<path fill="#84780c" d="M1046 388h2v2h-2zM1080 390h2v2h-2zM1056 392h2v2h-2zM1242 397h2v2h-2zM1186 398h2v2h-2zM1041 400h2v2h-2zM1014 405h2v2h-2zM1308 407h2v2h-2zM1263 408h2v2h-2zM1081 410h2v2h-2zM999 413h2v2h-2zM1272 413h2v2h-2zM1198 416h2v2h-2zM1144 417h2v2h-2zM1000 418h2v2h-2zM1342 421h2v2h-2zM1200 422h2v2h-2zM1332 422h2v2h-2zM1022 425h2v2h-2zM1012 426h2v2h-2zM1022 426h2v2h-2zM1026 426h2v2h-2zM1000 427h2v2h-2zM1181 428h2v2h-2zM1101 429h2v2h-2zM1011 431h2v2h-2zM967 434h2v2h-2zM978 434h2v2h-2zM1010 437h2v2h-2zM1101 442h2v2h-2zM1152 442h2v2h-2zM1249 452h2v2h-2zM1215 474h2v2h-2zM831 480h2v2h-2zM874 486h2v2h-2zM901 486h2v2h-2zM914 486h2v2h-2zM905 488h2v2h-2zM899 489h2v2h-2zM902 490h2v2h-2zM1088 558h2v2h-2zM907 559h2v2h-2zM1021 559h2v2h-2zM986 560h2v2h-2zM909 561h2v2h-2zM927 561h2v2h-2zM1063 561h2v2h-2zM1043 563h2v2h-2zM1075 563h2v2h-2zM1103 563h2v2h-2zM915 565h2v2h-2zM981 565h2v2h-2zM1018 565h2v2h-2zM1088 565h2v2h-2zM1093 565h2v2h-2zM1093 566h2v2h-2zM903 567h2v2h-2z"/>
<path fill="#b46c0c" d="M950 444h2v2h-2zM953 444h2v2h-2zM937 447h2v2h-2zM873 453h2v2h-2zM902 455h2v2h-2zM862 462h2v2h-2zM814 485h2v2h-2zM867 493h2v2h-2zM805 495h2v2h-2zM817 499h2v2h-2zM791 503h2v2h-2zM766 520h2v2h-2zM771 522h2v2h-2zM768 526h2v2h-2zM749 536h2v2h-2zM904 581h2v2h-2zM894 591h2v2h-2z"/>
<path fill="#cc7818" d="M1021 406h2v2h-2zM966 430h2v2h-2zM943 450h2v2h-2zM849 469h2v2h-2z"/>
<path fill="#b4a80c" d="M1059 411h2v2h-2zM1127 414h2v2h-2zM1012 416h2v2h-2zM1124 441h2v2h-2zM841 470h2v2h-2zM833 474h2v2h-2zM894 485h2v2h-2zM800 490h2v2h-2zM885 491h2v2h-2zM1071 554h2v2h-2zM1079 555h2v2h-2zM1040 556h2v2h-2zM974 559h2v2h-2zM1082 559h2v2h-2z"/>
<path fill="#c07818" d="M1035 405h2v2h-2zM961 432h2v2h-2z"/>
<path fill="#c0a818" d="M836 473h2v2h-2zM840 475h2v2h-2zM799 487h2v2h-2zM786 507h2v2h-2zM1000 556h2v2h-2zM928 564h2v2h-2zM1060 564h2v2h-2zM881 566h2v2h-2z"/>
<path fill="#b4a818" d="M1072 405h2v2h-2zM1038 414h2v2h-2zM1269 416h2v2h-2zM1192 417h2v2h-2zM1164 418h2v2h-2zM1116 427h2v2h-2zM990 435h2v2h-2zM1308 439h2v2h-2zM1297 470h2v2h-2zM1394 472h2v2h-2zM839 477h2v2h-2zM1093 556h2v2h-2zM1055 560h2v2h-2zM953 562h2v2h-2zM1079 562h2v2h-2zM953 563h2v2h-2zM952 564h2v2h-2z"/>
<path fill="#84540c" d="M1271 319h2v2h-2zM1276 330h2v2h-2zM1269 331h2v2h-2zM1163 340h2v2h-2zM1148 342h2v2h-2zM1059 369h2v2h-2zM1076 379h2v2h-2zM1044 397h2v2h-2zM933 447h2v2h-2zM812 484h2v2h-2zM1245 551h2v2h-2zM1258 552h2v2h-2zM1194 556h2v2h-2zM1255 558h2v2h-2zM1142 564h2v2h-2zM1257 566h2v2h-2zM1127 567h2v2h-2zM1252 568h2v2h-2zM1116 569h2v2h-2zM1172 575h2v2h-2zM1079 577h2v2h-2zM1188 577h2v2h-2zM914 585h2v2h-2zM923 589h2v2h-2zM980 591h2v2h-2zM937 594h2v2h-2zM927 596h2v2h-2zM942 600h2v2h-2z"/>
<path fill="#9c840c" d="M947 448h2v2h-2zM1309 479h2v2h-2zM1362 489h2v2h-2zM1074 561h2v2h-2zM1040 565h2v2h-2zM1067 566h2v2h-2zM990 567h2v2h-2zM924 568h2v2h-2zM1079 568h2v2h-2zM1063 569h2v2h-2zM1098 570h2v2h-2zM1096 571h2v2h-2zM1046 575h2v2h-2zM1072 576h2v2h-2z"/>
<path fill="#6c6018" d="M1031 403h2v2h-2zM919 455h2v2h-2zM807 487h2v2h-2z"/>
<path fill="#90840c" d="M1154 388h2v2h-2zM1071 394h2v2h-2zM1101 394h2v2h-2zM1047 395h2v2h-2zM1205 395h2v2h-2zM1076 398h2v2h-2zM1031 400h2v2h-2zM1103 404h2v2h-2zM1100 408h2v2h-2zM1248 408h2v2h-2zM1033 410h2v2h-2zM1200 410h2v2h-2zM1074 411h2v2h-2zM1058 415h2v2h-2zM1286 416h2v2h-2zM1003 417h2v2h-2zM1272 418h2v2h-2zM1313 420h2v2h-2zM1071 422h2v2h-2zM1172 423h2v2h-2zM1231 423h2v2h-2zM1316 423h2v2h-2zM1089 428h2v2h-2zM1147 431h2v2h-2zM1334 431h2v2h-2zM1151 433h2v2h-2zM965 434h2v2h-2zM1069 435h2v2h-2zM1021 438h2v2h-2zM1262 438h2v2h-2zM1298 442h2v2h-2zM1049 443h2v2h-2zM1090 443h2v2h-2zM1151 443h2v2h-2zM1127 447h2v2h-2zM1157 448h2v2h-2zM1199 448h2v2h-2zM1275 449h2v2h-2zM1199 457h2v2h-2zM1325 465h2v2h-2zM846 470h2v2h-2zM820 479h2v2h-2zM1303 479h2v2h-2zM1318 483h2v2h-2zM896 486h2v2h-2zM886 488h2v2h-2zM906 491h2v2h-2zM986 557h2v2h-2zM973 558h2v2h-2zM1052 558h2v2h-2zM1056 559h2v2h-2zM897 560h2v2h-2zM1015 560h2v2h-2zM1002 562h2v2h-2zM886 564h2v2h-2zM1065 565h2v2h-2z"/>
<path fill="#b49c0c" d="M948 443h2v2h-2zM888 454h2v2h-2zM1315 476h2v2h-2zM1316 476h2v2h-2zM879 486h2v2h-2zM885 487h2v2h-2zM1016 560h2v2h-2zM1039 560h2v2h-2zM914 561h2v2h-2zM1034 561h2v2h-2zM955 563h2v2h-2zM909 565h2v2h-2zM918 566h2v2h-2zM1026 567h2v2h-2zM1050 567h2v2h-2z"/>
<path fill="#ccb418" d="M892 460h2v2h-2zM806 485h2v2h-2zM881 488h2v2h-2zM909 489h2v2h-2zM934 558h2v2h-2zM1068 559h2v2h-2zM946 560h2v2h-2zM1050 560h2v2h-2zM901 563h2v2h-2zM910 567h2v2h-2zM1022 567h2v2h-2zM904 568h2v2h-2z"/>
<path fill="#90540c" d="M1302 297h2v2h-2zM1191 325h2v2h-2zM1252 334h2v2h-2zM1165 340h2v2h-2zM1106 344h2v2h-2zM1047 383h2v2h-2zM1044 392h2v2h-2zM1391 432h2v2h-2zM1294 473h2v2h-2zM1275 475h2v2h-2zM1265 478h2v2h-2zM1257 480h2v2h-2zM1273 480h2v2h-2zM849 485h2v2h-2zM1244 487h2v2h-2zM802 507h2v2h-2zM802 520h2v2h-2zM753 530h2v2h-2zM802 531h2v2h-2zM765 538h2v2h-2zM1034 578h2v2h-2zM884 587h2v2h-2zM898 592h2v2h-2zM918 594h2v2h-2zM965 598h2v2h-2zM901 606h2v2h-2z"/>
<path fill="#a8600c" d="M1027 393h2v2h-2zM1290 471h2v2h-2zM1298 473h2v2h-2zM1246 474h2v2h-2zM1279 478h2v2h-2zM781 521h2v2h-2zM749 535h2v2h-2zM911 589h2v2h-2zM1001 590h2v2h-2zM932 598h2v2h-2zM910 604h2v2h-2z"/>
<path fill="#84480c" d="M1265 317h2v2h-2zM1117 341h2v2h-2zM1180 344h2v2h-2zM1122 350h2v2h-2zM1078 365h2v2h-2zM1398 400h2v2h-2zM1389 414h2v2h-2zM1390 433h2v2h-2zM1385 447h2v2h-2zM1388 447h2v2h-2zM1388 449h2v2h-2zM1378 466h2v2h-2zM759 526h2v2h-2zM893 611h2v2h-2z"/>
<path fill="#9c540c" d="M1054 374h2v2h-2zM1390 401h2v2h-2zM1383 434h2v2h-2zM1383 440h2v2h-2zM1385 448h2v2h-2zM913 450h2v2h-2zM1388 459h2v2h-2zM1293 474h2v2h-2zM1257 485h2v2h-2zM1249 486h2v2h-2zM895 600h2v2h-2z"/>
<path fill="#c06c0c" d="M1052 380h2v2h-2zM1291 474h2v2h-2zM1294 474h2v2h-2zM829 492h2v2h-2zM748 539h2v2h-2zM758 545h2v2h-2zM922 600h2v2h-2z"/>
<path fill="#c06c18" d="M992 426h2v2h-2z"/>
<path fill="#a86c0c" d="M1277 476h2v2h-2zM1278 476h2v2h-2zM838 477h2v2h-2zM1259 477h2v2h-2zM1295 477h2v2h-2zM1327 478h2v2h-2zM1244 485h2v2h-2zM805 506h2v2h-2zM817 509h2v2h-2zM1181 551h2v2h-2zM1106 574h2v2h-2zM920 579h2v2h-2zM915 609h2v2h-2zM882 611h2v2h-2zM891 613h2v2h-2z"/>
<path fill="#9cb418" d="M850 479h2v2h-2zM823 499h2v2h-2zM1077 561h2v2h-2zM1072 562h2v2h-2z"/>
<path fill="#e48418" d="M762 531h2v2h-2z"/>
<path fill="#78900c" d="M846 488h2v2h-2zM851 512h2v2h-2zM768 529h2v2h-2zM1057 560h2v2h-2zM933 566h2v2h-2z"/>
<path fill="#c0780c" d="M1329 480h2v2h-2zM835 490h2v2h-2zM791 512h2v2h-2zM795 521h2v2h-2zM796 528h2v2h-2zM994 590h2v2h-2zM902 611h2v2h-2z"/>
<path fill="#cc780c" d="M1295 471h2v2h-2zM1292 473h2v2h-2zM1289 479h2v2h-2zM839 489h2v2h-2zM841 489h2v2h-2zM831 498h2v2h-2zM782 514h2v2h-2zM760 533h2v2h-2zM766 536h2v2h-2zM911 588h2v2h-2zM891 591h2v2h-2zM909 592h2v2h-2z"/>
<path fill="#c0b40c" d="M1337 478h2v2h-2zM913 492h2v2h-2z"/>
<path fill="#d8c018" d="M1306 471h2v2h-2zM1303 477h2v2h-2zM1330 478h2v2h-2zM896 484h2v2h-2zM906 484h2v2h-2zM1360 484h2v2h-2zM884 486h2v2h-2zM913 486h2v2h-2zM883 487h2v2h-2zM892 487h2v2h-2zM1352 489h2v2h-2z"/>
<path fill="#ccc018" d="M1215 427h2v2h-2zM1242 467h2v2h-2zM1196 480h2v2h-2zM1323 482h2v2h-2zM882 489h2v2h-2zM988 557h2v2h-2zM950 559h2v2h-2z"/>
<path fill="#c0a80c" d="M1372 487h2v2h-2zM889 490h2v2h-2zM989 563h2v2h-2z"/>
<path fill="#d8cc18" d="M1045 404h2v2h-2zM1191 475h2v2h-2zM890 490h2v2h-2z"/>
<path fill="#848418" d="M959 457h2v2h-2zM954 459h2v2h-2zM986 459h2v2h-2zM970 461h2v2h-2z"/>
<path fill="#787818" d="M962 459h2v2h-2zM969 459h2v2h-2zM942 464h2v2h-2z"/>
<path fill="#78600c" d="M1213 333h2v2h-2zM1167 335h2v2h-2zM1222 336h2v2h-2zM1260 336h2v2h-2zM1262 336h2v2h-2zM1245 340h2v2h-2zM1186 344h2v2h-2zM1187 347h2v2h-2zM1164 350h2v2h-2zM1146 352h2v2h-2zM1147 352h2v2h-2zM1037 562h2v2h-2zM976 565h2v2h-2zM984 566h2v2h-2zM1070 566h2v2h-2zM886 569h2v2h-2zM917 569h2v2h-2zM1010 571h2v2h-2zM909 577h2v2h-2z"/>
<path fill="#cc540c" d="M1275 333h2v2h-2zM1230 341h2v2h-2zM1160 351h2v2h-2zM1080 370h2v2h-2zM1041 393h2v2h-2zM1232 491h2v2h-2zM1226 495h2v2h-2zM1220 497h2v2h-2zM1204 500h2v2h-2zM1214 508h2v2h-2zM1198 509h2v2h-2zM1201 520h2v2h-2zM1190 522h2v2h-2zM1234 524h2v2h-2zM1231 531h2v2h-2zM1210 542h2v2h-2zM1220 543h2v2h-2zM950 565h2v2h-2zM940 577h2v2h-2zM956 578h2v2h-2zM984 581h2v2h-2zM976 585h2v2h-2zM986 586h2v2h-2zM947 592h2v2h-2zM957 595h2v2h-2z"/>
<path fill="#9c7818" d="M1268 335h2v2h-2zM1208 345h2v2h-2zM1082 367h2v2h-2z"/>
<path fill="#b4480c" d="M1282 331h2v2h-2zM1179 348h2v2h-2zM1157 353h2v2h-2zM1235 489h2v2h-2zM1393 493h2v2h-2zM1225 495h2v2h-2zM1220 499h2v2h-2zM1224 499h2v2h-2zM1215 503h2v2h-2zM1206 512h2v2h-2zM1195 520h2v2h-2zM1196 522h2v2h-2zM1248 527h2v2h-2zM940 565h2v2h-2zM960 569h2v2h-2zM935 571h2v2h-2zM947 576h2v2h-2zM960 580h2v2h-2zM968 583h2v2h-2zM978 583h2v2h-2zM940 591h2v2h-2zM976 591h2v2h-2zM961 594h2v2h-2zM946 595h2v2h-2z"/>
<path fill="#b43c0c" d="M1336 323h2v2h-2zM1319 324h2v2h-2zM1293 329h2v2h-2zM1317 329h2v2h-2zM1327 330h2v2h-2zM1265 331h2v2h-2zM1293 332h2v2h-2zM1276 333h2v2h-2zM1286 333h2v2h-2zM1206 342h2v2h-2zM1212 494h2v2h-2zM1221 499h2v2h-2zM1203 504h2v2h-2zM1268 504h2v2h-2zM1283 506h2v2h-2zM1239 522h2v2h-2zM1211 524h2v2h-2zM1207 527h2v2h-2zM1241 533h2v2h-2zM1263 552h2v2h-2zM1235 553h2v2h-2zM1280 555h2v2h-2zM1215 557h2v2h-2zM971 589h2v2h-2zM941 592h2v2h-2z"/>
<path fill="#b4540c" d="M1277 330h2v2h-2zM1246 332h2v2h-2zM1261 334h2v2h-2zM1216 340h2v2h-2zM1180 343h2v2h-2zM1209 344h2v2h-2zM1193 348h2v2h-2zM1174 350h2v2h-2zM1097 355h2v2h-2zM1138 356h2v2h-2zM1056 379h2v2h-2zM1234 505h2v2h-2zM1204 511h2v2h-2zM1223 514h2v2h-2zM1192 522h2v2h-2zM1246 525h2v2h-2zM1201 526h2v2h-2zM1186 530h2v2h-2zM1191 533h2v2h-2zM1189 536h2v2h-2zM1204 548h2v2h-2z"/>
<path fill="#9c480c" d="M1249 337h2v2h-2zM1224 339h2v2h-2zM1219 340h2v2h-2zM1209 342h2v2h-2zM1169 352h2v2h-2zM1143 356h2v2h-2zM1115 359h2v2h-2zM1118 360h2v2h-2zM1109 363h2v2h-2zM1072 365h2v2h-2zM1063 374h2v2h-2zM1393 490h2v2h-2zM1199 515h2v2h-2zM1246 521h2v2h-2zM1193 522h2v2h-2zM1226 524h2v2h-2zM1196 545h2v2h-2zM1187 546h2v2h-2z"/>
<path fill="#6c540c" d="M1207 330h2v2h-2zM1284 331h2v2h-2zM1217 336h2v2h-2zM1192 342h2v2h-2zM1192 345h2v2h-2zM1173 346h2v2h-2zM1184 346h2v2h-2zM1125 350h2v2h-2zM1193 350h2v2h-2zM1121 352h2v2h-2zM1158 352h2v2h-2zM1127 357h2v2h-2zM1121 363h2v2h-2zM1057 366h2v2h-2zM1058 377h2v2h-2zM1291 547h2v2h-2zM1269 551h2v2h-2zM1203 555h2v2h-2zM1105 557h2v2h-2zM1164 561h2v2h-2zM1200 569h2v2h-2zM1021 570h2v2h-2zM1088 571h2v2h-2zM1018 574h2v2h-2zM889 575h2v2h-2zM999 576h2v2h-2zM898 596h2v2h-2z"/>
<path fill="#a8480c" d="M1289 330h2v2h-2zM1201 342h2v2h-2zM1153 352h2v2h-2zM1143 358h2v2h-2zM1113 363h2v2h-2zM1041 389h2v2h-2zM1397 492h2v2h-2zM1235 494h2v2h-2zM1215 500h2v2h-2zM1233 536h2v2h-2zM1239 543h2v2h-2zM940 570h2v2h-2zM977 586h2v2h-2z"/>
<path fill="#a8300c" d="M1337 321h2v2h-2zM1292 322h2v2h-2zM1317 324h2v2h-2zM1310 327h2v2h-2zM1330 327h2v2h-2zM1301 328h2v2h-2zM1307 328h2v2h-2zM1302 329h2v2h-2zM1316 329h2v2h-2zM1297 330h2v2h-2zM1316 330h2v2h-2zM1313 331h2v2h-2zM1325 331h2v2h-2zM1308 333h2v2h-2zM1308 336h2v2h-2zM1208 342h2v2h-2zM1125 359h2v2h-2zM1072 371h2v2h-2zM1065 373h2v2h-2zM1044 389h2v2h-2zM1402 490h2v2h-2zM1295 507h2v2h-2zM1225 516h2v2h-2zM1189 527h2v2h-2zM1189 528h2v2h-2zM1207 547h2v2h-2z"/>
<path fill="#c03c0c" d="M1339 325h2v2h-2zM1298 327h2v2h-2zM1324 327h2v2h-2zM1331 327h2v2h-2zM1293 328h2v2h-2zM1300 329h2v2h-2zM1288 330h2v2h-2zM1299 331h2v2h-2zM1298 333h2v2h-2zM1259 334h2v2h-2zM1238 335h2v2h-2zM1250 338h2v2h-2zM1168 353h2v2h-2zM1389 489h2v2h-2zM1229 501h2v2h-2zM1195 521h2v2h-2zM1191 534h2v2h-2zM946 580h2v2h-2z"/>
<path fill="#903c0c" d="M1262 327h2v2h-2zM1268 332h2v2h-2zM1106 357h2v2h-2zM1113 358h2v2h-2zM1060 376h2v2h-2zM1057 377h2v2h-2zM1225 500h2v2h-2zM1221 512h2v2h-2zM1206 516h2v2h-2zM1197 521h2v2h-2zM1198 522h2v2h-2zM1189 526h2v2h-2zM1195 526h2v2h-2zM1186 538h2v2h-2zM963 567h2v2h-2zM953 571h2v2h-2zM939 573h2v2h-2zM958 577h2v2h-2zM947 578h2v2h-2zM987 578h2v2h-2zM935 579h2v2h-2zM953 579h2v2h-2zM965 579h2v2h-2zM936 585h2v2h-2zM932 587h2v2h-2zM958 589h2v2h-2zM932 590h2v2h-2zM945 590h2v2h-2zM954 590h2v2h-2zM943 594h2v2h-2zM949 594h2v2h-2z"/>
<path fill="#c0540c" d="M1299 336h2v2h-2zM1217 337h2v2h-2zM1223 338h2v2h-2zM1284 338h2v2h-2zM1218 341h2v2h-2zM1191 346h2v2h-2zM1215 346h2v2h-2zM1156 349h2v2h-2zM1114 355h2v2h-2zM1130 360h2v2h-2zM1092 364h2v2h-2zM1069 370h2v2h-2zM1068 372h2v2h-2zM1213 496h2v2h-2zM1219 501h2v2h-2zM1242 501h2v2h-2zM1211 507h2v2h-2zM973 572h2v2h-2zM975 572h2v2h-2zM973 573h2v2h-2z"/>
<path fill="#90300c" d="M1372 313h2v2h-2zM1379 315h2v2h-2zM1345 316h2v2h-2zM1345 319h2v2h-2zM1338 323h2v2h-2zM1326 324h2v2h-2zM1313 328h2v2h-2zM1353 329h2v2h-2zM1303 333h2v2h-2zM1306 335h2v2h-2zM1195 344h2v2h-2zM1134 356h2v2h-2zM1106 359h2v2h-2zM1111 360h2v2h-2zM1096 364h2v2h-2zM1231 491h2v2h-2zM1230 492h2v2h-2zM1394 494h2v2h-2zM1262 497h2v2h-2zM1236 498h2v2h-2zM1224 507h2v2h-2zM1209 510h2v2h-2zM1253 518h2v2h-2zM1184 523h2v2h-2zM1190 526h2v2h-2zM1201 534h2v2h-2zM1220 535h2v2h-2zM1355 539h2v2h-2zM1234 540h2v2h-2zM1207 542h2v2h-2zM1270 542h2v2h-2zM1269 544h2v2h-2zM1284 545h2v2h-2zM1321 546h2v2h-2zM1330 548h2v2h-2zM1287 553h2v2h-2zM944 574h2v2h-2zM967 586h2v2h-2zM956 594h2v2h-2zM967 594h2v2h-2zM952 598h2v2h-2z"/>
<path fill="#60480c" d="M1265 324h2v2h-2zM1234 325h2v2h-2zM1218 328h2v2h-2zM1300 330h2v2h-2zM1120 352h2v2h-2zM1074 354h2v2h-2zM1139 358h2v2h-2zM1043 360h2v2h-2zM1055 385h2v2h-2zM1275 547h2v2h-2zM1234 548h2v2h-2zM1163 556h2v2h-2zM1214 556h2v2h-2zM1208 557h2v2h-2zM1120 561h2v2h-2zM1201 561h2v2h-2zM1250 564h2v2h-2zM1200 567h2v2h-2zM1170 569h2v2h-2zM1149 570h2v2h-2zM1194 571h2v2h-2zM1151 572h2v2h-2zM1178 576h2v2h-2z"/>
<path fill="#a88418" d="M1295 329h2v2h-2zM1226 339h2v2h-2zM1215 344h2v2h-2zM1142 348h2v2h-2zM1154 349h2v2h-2zM1145 355h2v2h-2zM1133 358h2v2h-2zM1095 360h2v2h-2zM1116 364h2v2h-2zM1072 366h2v2h-2zM1074 369h2v2h-2zM1051 383h2v2h-2z"/>
<path fill="#9c780c" d="M1290 329h2v2h-2zM1211 343h2v2h-2zM1205 344h2v2h-2zM1155 356h2v2h-2zM1041 391h2v2h-2zM1309 476h2v2h-2zM1317 481h2v2h-2zM1371 484h2v2h-2zM1245 485h2v2h-2zM1363 490h2v2h-2zM1039 568h2v2h-2zM1012 570h2v2h-2zM1092 572h2v2h-2zM1007 573h2v2h-2zM899 574h2v2h-2zM895 575h2v2h-2zM1085 575h2v2h-2zM1052 578h2v2h-2z"/>
<path fill="#d8600c" d="M1278 331h2v2h-2zM1290 335h2v2h-2zM1094 361h2v2h-2zM1117 361h2v2h-2zM1091 362h2v2h-2zM1207 499h2v2h-2zM1202 513h2v2h-2zM1217 513h2v2h-2zM1229 516h2v2h-2zM1204 524h2v2h-2zM1243 537h2v2h-2z"/>
<path fill="#84240c" d="M1369 309h2v2h-2zM1381 311h2v2h-2zM1369 316h2v2h-2zM1334 320h2v2h-2zM1339 320h2v2h-2zM1316 323h2v2h-2zM1291 324h2v2h-2zM1330 324h2v2h-2zM1331 324h2v2h-2zM1296 326h2v2h-2zM1324 326h2v2h-2zM1320 327h2v2h-2zM1299 328h2v2h-2zM1308 328h2v2h-2zM1314 328h2v2h-2zM1303 329h2v2h-2zM1300 332h2v2h-2zM1310 332h2v2h-2zM1230 339h2v2h-2zM1263 339h2v2h-2zM1158 353h2v2h-2zM1143 354h2v2h-2zM1088 365h2v2h-2zM1049 387h2v2h-2zM1240 500h2v2h-2zM1281 543h2v2h-2z"/>
<path fill="#b49018" d="M1250 335h2v2h-2z"/>
<path fill="#843c0c" d="M1281 329h2v2h-2zM1202 348h2v2h-2zM1156 350h2v2h-2zM1173 350h2v2h-2zM1093 364h2v2h-2zM1084 365h2v2h-2zM1093 365h2v2h-2zM1092 366h2v2h-2zM1082 371h2v2h-2zM1057 373h2v2h-2zM1231 492h2v2h-2zM1190 527h2v2h-2zM1210 536h2v2h-2zM936 567h2v2h-2zM931 574h2v2h-2zM934 583h2v2h-2zM927 587h2v2h-2zM963 593h2v2h-2z"/>
<path fill="#9c300c" d="M1364 316h2v2h-2zM1290 322h2v2h-2zM1327 322h2v2h-2zM1340 322h2v2h-2zM1341 324h2v2h-2zM1290 325h2v2h-2zM1313 325h2v2h-2zM1292 327h2v2h-2zM1297 329h2v2h-2zM1313 329h2v2h-2zM1298 330h2v2h-2zM1310 330h2v2h-2zM1143 353h2v2h-2zM1075 369h2v2h-2zM1057 375h2v2h-2zM1392 492h2v2h-2zM1253 493h2v2h-2zM1294 500h2v2h-2zM1218 504h2v2h-2zM1253 504h2v2h-2zM1262 505h2v2h-2zM1245 511h2v2h-2zM1300 520h2v2h-2zM1292 522h2v2h-2zM1186 523h2v2h-2zM1188 531h2v2h-2zM1402 538h2v2h-2zM1406 553h2v2h-2zM1342 560h2v2h-2zM954 582h2v2h-2z"/>
<path fill="#906c0c" d="M1269 329h2v2h-2zM1296 334h2v2h-2zM1283 335h2v2h-2zM1054 380h2v2h-2zM1041 390h2v2h-2zM1293 473h2v2h-2zM1316 479h2v2h-2zM1252 483h2v2h-2zM1338 483h2v2h-2zM1242 484h2v2h-2zM1335 486h2v2h-2zM1151 551h2v2h-2zM1167 551h2v2h-2zM1202 552h2v2h-2zM1106 562h2v2h-2zM1033 569h2v2h-2zM1092 577h2v2h-2z"/>
<path fill="#cc600c" d="M1264 328h2v2h-2zM1262 332h2v2h-2zM1285 332h2v2h-2zM1254 336h2v2h-2zM1292 336h2v2h-2zM1231 339h2v2h-2zM1191 349h2v2h-2zM1073 371h2v2h-2zM1056 374h2v2h-2zM1246 502h2v2h-2zM1249 509h2v2h-2zM1242 521h2v2h-2zM1227 529h2v2h-2z"/>
<path fill="#78240c" d="M1345 313h2v2h-2zM1380 314h2v2h-2zM1365 315h2v2h-2zM1361 317h2v2h-2zM1342 325h2v2h-2zM1317 327h2v2h-2zM1312 328h2v2h-2zM1318 330h2v2h-2zM1200 338h2v2h-2zM1139 351h2v2h-2zM1091 369h2v2h-2zM1056 385h2v2h-2zM1265 509h2v2h-2zM1285 519h2v2h-2zM1265 540h2v2h-2zM1292 542h2v2h-2zM1214 548h2v2h-2zM1332 552h2v2h-2zM1196 553h2v2h-2z"/>
<path fill="#783c0c" d="M1287 313h2v2h-2zM1145 342h2v2h-2zM1128 364h2v2h-2zM1069 371h2v2h-2zM1399 399h2v2h-2zM1391 405h2v2h-2zM1385 422h2v2h-2zM1389 423h2v2h-2zM1393 425h2v2h-2zM1398 426h2v2h-2zM1397 428h2v2h-2zM1388 430h2v2h-2zM1391 438h2v2h-2zM1386 445h2v2h-2zM1390 453h2v2h-2zM1387 454h2v2h-2zM1377 457h2v2h-2zM1386 458h2v2h-2zM1383 462h2v2h-2zM1384 462h2v2h-2zM1378 469h2v2h-2z"/>
<path fill="#84600c" d="M1247 319h2v2h-2zM1250 320h2v2h-2zM1276 327h2v2h-2zM1258 330h2v2h-2zM1137 331h2v2h-2zM1289 331h2v2h-2zM1163 333h2v2h-2zM1216 335h2v2h-2zM1119 354h2v2h-2zM1103 357h2v2h-2zM1076 358h2v2h-2zM1084 361h2v2h-2zM1081 370h2v2h-2zM1057 376h2v2h-2zM1171 549h2v2h-2zM1143 551h2v2h-2zM1274 552h2v2h-2zM1295 552h2v2h-2zM1276 553h2v2h-2zM1212 555h2v2h-2zM1225 556h2v2h-2zM1286 556h2v2h-2zM1107 557h2v2h-2zM1216 558h2v2h-2zM1133 559h2v2h-2zM1157 559h2v2h-2zM1274 559h2v2h-2zM1113 560h2v2h-2zM1258 561h2v2h-2zM1111 563h2v2h-2zM1230 564h2v2h-2zM1264 564h2v2h-2zM1156 568h2v2h-2zM1205 568h2v2h-2zM1218 568h2v2h-2zM1144 569h2v2h-2zM1135 571h2v2h-2zM1141 571h2v2h-2zM1169 571h2v2h-2zM1054 572h2v2h-2zM1017 573h2v2h-2zM1025 573h2v2h-2zM1052 573h2v2h-2zM1223 573h2v2h-2zM1122 574h2v2h-2zM1041 575h2v2h-2zM987 576h2v2h-2zM906 578h2v2h-2zM890 579h2v2h-2zM1023 579h2v2h-2zM1105 579h2v2h-2zM1163 581h2v2h-2zM889 586h2v2h-2zM891 588h2v2h-2zM932 593h2v2h-2zM905 594h2v2h-2zM912 595h2v2h-2z"/>
<path fill="#846c0c" d="M1278 327h2v2h-2zM1185 339h2v2h-2zM1178 344h2v2h-2zM1217 346h2v2h-2zM1150 353h2v2h-2zM1058 376h2v2h-2zM918 563h2v2h-2zM1057 565h2v2h-2zM1080 565h2v2h-2zM1045 566h2v2h-2zM927 567h2v2h-2zM1003 567h2v2h-2zM1045 567h2v2h-2zM1057 569h2v2h-2zM1073 570h2v2h-2zM1097 571h2v2h-2zM904 580h2v2h-2zM998 581h2v2h-2zM1017 585h2v2h-2z"/>
<path fill="#b4300c" d="M1300 324h2v2h-2zM1333 324h2v2h-2zM1339 324h2v2h-2zM1323 327h2v2h-2zM1321 332h2v2h-2zM1305 333h2v2h-2zM1099 357h2v2h-2z"/>
<path fill="#9c8418" d="M1255 332h2v2h-2z"/>
<path fill="#6c480c" d="M1254 317h2v2h-2zM1296 339h2v2h-2zM1289 543h2v2h-2zM1286 545h2v2h-2zM1270 546h2v2h-2zM1220 547h2v2h-2zM1230 547h2v2h-2zM1274 548h2v2h-2zM1203 550h2v2h-2zM1263 551h2v2h-2zM1269 552h2v2h-2zM1230 555h2v2h-2zM1173 556h2v2h-2zM1167 558h2v2h-2zM1189 558h2v2h-2zM1236 558h2v2h-2zM1187 559h2v2h-2zM1287 559h2v2h-2zM1197 561h2v2h-2zM1213 561h2v2h-2zM1176 562h2v2h-2zM1104 563h2v2h-2zM1129 563h2v2h-2zM1134 563h2v2h-2zM1162 563h2v2h-2zM1235 563h2v2h-2zM1240 563h2v2h-2zM1116 564h2v2h-2zM1156 565h2v2h-2zM1210 565h2v2h-2zM1143 566h2v2h-2zM1173 566h2v2h-2zM1180 568h2v2h-2zM1184 568h2v2h-2zM1224 570h2v2h-2zM1238 570h2v2h-2zM1114 572h2v2h-2z"/>
<path fill="#543c0c" d="M1205 320h2v2h-2zM1276 320h2v2h-2zM1298 328h2v2h-2zM1208 336h2v2h-2zM1145 349h2v2h-2zM1115 357h2v2h-2zM1085 360h2v2h-2zM1298 543h2v2h-2zM1260 546h2v2h-2zM1287 546h2v2h-2zM1200 548h2v2h-2zM1160 550h2v2h-2zM1216 550h2v2h-2zM1254 550h2v2h-2zM1285 550h2v2h-2zM1164 551h2v2h-2zM1208 551h2v2h-2zM1139 552h2v2h-2zM1124 553h2v2h-2zM1218 553h2v2h-2zM1114 555h2v2h-2zM1168 556h2v2h-2zM1262 556h2v2h-2zM1264 556h2v2h-2zM1111 558h2v2h-2zM1237 560h2v2h-2zM1132 561h2v2h-2zM1268 561h2v2h-2zM1151 562h2v2h-2zM1182 563h2v2h-2zM1200 565h2v2h-2zM1152 566h2v2h-2zM1223 566h2v2h-2zM1195 569h2v2h-2zM1109 570h2v2h-2zM1123 570h2v2h-2zM1187 570h2v2h-2zM1117 571h2v2h-2zM1134 571h2v2h-2zM1118 574h2v2h-2z"/>
<path fill="#78540c" d="M1288 318h2v2h-2zM1245 320h2v2h-2zM1214 321h2v2h-2zM1263 325h2v2h-2zM1223 326h2v2h-2zM1170 344h2v2h-2zM1293 543h2v2h-2zM1210 547h2v2h-2zM1202 548h2v2h-2zM1191 549h2v2h-2zM1265 551h2v2h-2zM1236 552h2v2h-2zM1256 552h2v2h-2zM1126 553h2v2h-2zM1256 553h2v2h-2zM1128 554h2v2h-2zM1144 554h2v2h-2zM1156 554h2v2h-2zM1173 554h2v2h-2zM1116 555h2v2h-2zM1132 555h2v2h-2zM1251 555h2v2h-2zM1272 555h2v2h-2zM1197 556h2v2h-2zM1234 556h2v2h-2zM1177 557h2v2h-2zM1145 558h2v2h-2zM1205 558h2v2h-2zM1125 559h2v2h-2zM1205 559h2v2h-2zM1232 559h2v2h-2zM1238 559h2v2h-2zM1248 559h2v2h-2zM1262 559h2v2h-2zM1280 559h2v2h-2zM1114 560h2v2h-2zM1215 560h2v2h-2zM1149 561h2v2h-2zM1182 561h2v2h-2zM1219 562h2v2h-2zM1188 563h2v2h-2zM1126 564h2v2h-2zM1156 564h2v2h-2zM1229 564h2v2h-2zM1237 564h2v2h-2zM1104 567h2v2h-2zM1231 567h2v2h-2zM1121 568h2v2h-2zM1165 570h2v2h-2zM1232 572h2v2h-2zM1229 574h2v2h-2zM1060 575h2v2h-2zM1158 575h2v2h-2zM1196 575h2v2h-2zM1019 576h2v2h-2zM1066 579h2v2h-2zM1166 579h2v2h-2zM899 585h2v2h-2zM885 593h2v2h-2zM987 596h2v2h-2z"/>
<path fill="#603c0c" d="M1280 320h2v2h-2zM1263 328h2v2h-2zM1254 338h2v2h-2zM1098 356h2v2h-2zM1066 370h2v2h-2zM1279 547h2v2h-2zM1195 552h2v2h-2zM1294 553h2v2h-2zM1249 554h2v2h-2zM1236 555h2v2h-2zM1238 556h2v2h-2zM1243 556h2v2h-2zM1145 557h2v2h-2zM1200 557h2v2h-2zM1220 559h2v2h-2zM1162 560h2v2h-2zM1163 562h2v2h-2zM1139 567h2v2h-2zM1154 568h2v2h-2zM1221 568h2v2h-2zM1235 575h2v2h-2zM1150 577h2v2h-2z"/>
<path fill="#78480c" d="M1296 323h2v2h-2zM1203 330h2v2h-2zM1188 332h2v2h-2zM1126 344h2v2h-2zM1160 346h2v2h-2zM1382 454h2v2h-2zM1264 558h2v2h-2zM888 583h2v2h-2zM889 583h2v2h-2zM1031 585h2v2h-2zM885 586h2v2h-2zM906 587h2v2h-2zM990 592h2v2h-2zM977 593h2v2h-2zM926 596h2v2h-2zM965 600h2v2h-2zM928 604h2v2h-2zM907 611h2v2h-2z"/>
<path fill="#54300c" d="M1321 311h2v2h-2zM1279 318h2v2h-2zM1172 333h2v2h-2zM1225 333h2v2h-2zM1135 347h2v2h-2zM1113 362h2v2h-2zM1388 406h2v2h-2zM1392 410h2v2h-2zM1385 440h2v2h-2zM1378 456h2v2h-2zM1118 565h2v2h-2z"/>
<path fill="#6c3c0c" d="M1316 305h2v2h-2zM1310 311h2v2h-2zM1224 325h2v2h-2zM1230 329h2v2h-2zM1040 369h2v2h-2zM1384 437h2v2h-2zM1393 437h2v2h-2zM1385 446h2v2h-2zM1381 451h2v2h-2zM1386 461h2v2h-2zM1377 469h2v2h-2z"/>
<path fill="#48300c" d="M1221 323h2v2h-2zM1209 548h2v2h-2zM1246 548h2v2h-2zM1212 551h2v2h-2zM1171 552h2v2h-2zM1218 554h2v2h-2zM1281 557h2v2h-2zM1175 559h2v2h-2zM1221 560h2v2h-2zM1261 562h2v2h-2zM1167 563h2v2h-2zM1224 565h2v2h-2zM1122 567h2v2h-2zM1181 568h2v2h-2zM1246 569h2v2h-2zM1161 571h2v2h-2zM1126 574h2v2h-2zM1123 576h2v2h-2z"/>
<path fill="#84300c" d="M1326 322h2v2h-2zM1295 325h2v2h-2zM1295 327h2v2h-2zM1225 491h2v2h-2zM1231 493h2v2h-2zM1223 494h2v2h-2zM1249 496h2v2h-2zM1209 509h2v2h-2zM1242 509h2v2h-2zM1236 512h2v2h-2zM1262 515h2v2h-2zM1201 518h2v2h-2zM1194 523h2v2h-2zM1214 531h2v2h-2zM1245 537h2v2h-2zM1224 538h2v2h-2zM1192 540h2v2h-2zM1201 548h2v2h-2zM1233 549h2v2h-2zM1310 558h2v2h-2zM958 564h2v2h-2zM1345 566h2v2h-2zM952 567h2v2h-2zM976 568h2v2h-2zM968 580h2v2h-2zM937 582h2v2h-2zM943 586h2v2h-2zM958 588h2v2h-2zM928 591h2v2h-2zM969 592h2v2h-2zM958 598h2v2h-2z"/>
<path fill="#c0300c" d="M1329 325h2v2h-2zM1336 327h2v2h-2z"/>
<path fill="#d8480c" d="M1329 330h2v2h-2zM1232 501h2v2h-2zM1208 503h2v2h-2zM1191 531h2v2h-2zM1193 534h2v2h-2z"/>
<path fill="#cc3c0c" d="M1321 322h2v2h-2zM1322 328h2v2h-2zM1318 333h2v2h-2zM1306 334h2v2h-2zM1405 485h2v2h-2zM1406 489h2v2h-2zM1384 494h2v2h-2zM1184 536h2v2h-2zM1185 537h2v2h-2z"/>
<path fill="#90240c" d="M1351 315h2v2h-2zM1353 320h2v2h-2zM1341 321h2v2h-2zM1313 330h2v2h-2z"/>
<path fill="#cc480c" d="M1310 329h2v2h-2zM1307 331h2v2h-2zM1235 488h2v2h-2zM1229 491h2v2h-2zM1223 499h2v2h-2zM1187 515h2v2h-2zM1193 518h2v2h-2zM1215 524h2v2h-2zM1220 530h2v2h-2zM1186 539h2v2h-2zM975 576h2v2h-2zM927 577h2v2h-2zM953 577h2v2h-2zM927 578h2v2h-2zM965 582h2v2h-2zM949 583h2v2h-2z"/>
<path fill="#6c240c" d="M1295 286h2v2h-2zM1301 286h2v2h-2zM1236 298h2v2h-2zM1360 313h2v2h-2zM1373 316h2v2h-2zM1200 331h2v2h-2zM1191 345h2v2h-2zM1233 512h2v2h-2zM1231 517h2v2h-2zM1231 528h2v2h-2zM1274 533h2v2h-2zM1207 540h2v2h-2zM1305 540h2v2h-2zM1185 541h2v2h-2zM1364 541h2v2h-2zM1373 546h2v2h-2zM1218 552h2v2h-2zM1387 555h2v2h-2zM1228 561h2v2h-2z"/>
<path fill="#60180c" d="M1381 303h2v2h-2zM1223 305h2v2h-2zM1380 309h2v2h-2zM1365 310h2v2h-2zM1377 312h2v2h-2zM1351 317h2v2h-2zM1193 509h2v2h-2zM1293 519h2v2h-2zM1224 530h2v2h-2zM1211 535h2v2h-2z"/>
<path fill="#54180c" d="M1343 294h2v2h-2zM1331 295h2v2h-2zM1378 308h2v2h-2zM1373 315h2v2h-2zM1198 334h2v2h-2zM1272 497h2v2h-2zM1282 530h2v2h-2zM1253 532h2v2h-2z"/>
<path fill="#48240c" d="M1291 286h2v2h-2zM1271 291h2v2h-2zM1321 294h2v2h-2zM1223 307h2v2h-2zM1219 309h2v2h-2zM1190 336h2v2h-2z"/>
<path fill="#543018" d="M1293 284h2v2h-2zM1264 287h2v2h-2z"/>
<path fill="#60240c" d="M1296 284h2v2h-2zM1279 286h2v2h-2zM1276 287h2v2h-2zM1251 288h2v2h-2zM1331 294h2v2h-2zM1227 300h2v2h-2zM1379 311h2v2h-2zM1384 314h2v2h-2zM1207 320h2v2h-2zM1288 507h2v2h-2zM1270 515h2v2h-2zM1194 534h2v2h-2zM1240 539h2v2h-2zM1307 545h2v2h-2zM1366 553h2v2h-2zM1370 564h2v2h-2zM1338 565h2v2h-2zM1362 568h2v2h-2z"/>
<path fill="#3c180c" d="M1297 289h2v2h-2zM1293 290h2v2h-2zM1217 307h2v2h-2zM1217 310h2v2h-2zM1218 311h2v2h-2zM1384 313h2v2h-2zM1205 322h2v2h-2z"/>
<path fill="#54240c" d="M1288 285h2v2h-2zM1316 290h2v2h-2zM1320 295h2v2h-2zM1371 304h2v2h-2z"/>
<path fill="#48180c" d="M1302 285h2v2h-2zM1289 289h2v2h-2zM1334 292h2v2h-2zM1229 294h2v2h-2z"/>
<path fill="#603018" d="M1259 286h2v2h-2zM1334 293h2v2h-2zM1224 306h2v2h-2zM1214 309h2v2h-2zM1207 317h2v2h-2z"/>
<path fill="#60300c" d="M1266 324h2v2h-2zM1199 330h2v2h-2zM1394 398h2v2h-2zM1399 405h2v2h-2zM1394 411h2v2h-2zM1400 411h2v2h-2zM1397 417h2v2h-2zM1394 426h2v2h-2zM1381 440h2v2h-2zM1381 460h2v2h-2zM1379 467h2v2h-2zM1384 467h2v2h-2z"/>
<path fill="#30180c" d="M1301 288h2v2h-2z"/>
<path fill="#6c3018" d="M1289 282h2v2h-2zM1210 311h2v2h-2z"/>
<path fill="#3c240c" d="M1252 285h2v2h-2zM1287 286h2v2h-2zM1303 289h2v2h-2zM1242 293h2v2h-2z"/>
<path fill="#6c300c" d="M1203 313h2v2h-2zM1390 424h2v2h-2z"/>
<path fill="#904818" d="M1272 306h2v2h-2zM1376 461h2v2h-2z"/>
<path fill="#90480c" d="M1205 335h2v2h-2zM1399 403h2v2h-2zM1380 453h2v2h-2zM1383 461h2v2h-2zM1379 463h2v2h-2zM1236 501h2v2h-2zM1215 536h2v2h-2zM885 613h2v2h-2z"/>
<path fill="#608430" d="M988 373h2v2h-2zM1013 374h2v2h-2zM902 385h2v2h-2zM987 399h2v2h-2z"/>
<path fill="#607824" d="M883 384h2v2h-2zM980 399h2v2h-2z"/>
<path fill="#547824" d="M962 379h2v2h-2zM950 387h2v2h-2zM944 408h2v2h-2zM895 417h2v2h-2z"/>
<path fill="#546c24" d="M1046 378h2v2h-2zM1002 381h2v2h-2zM973 383h2v2h-2zM1001 398h2v2h-2zM955 399h2v2h-2z"/>
<path fill="#486c24" d="M983 406h2v2h-2z"/>
<path fill="#608424" d="M951 412h2v2h-2z"/>
<path fill="#2448d8" d="M939 411h2v2h-2z"/>
<path fill="#2448e4" d="M958 420h2v2h-2z"/>
<path fill="#2454e4" d="M949 411h2v2h-2z"/>
<path fill="#246078" d="M898 413h2v2h-2zM902 419h2v2h-2zM894 426h2v2h-2z"/>
<path fill="#247884" d="M907 416h2v2h-2z"/>
<path fill="#6c9c0c" d="M1051 388h2v2h-2zM1175 398h2v2h-2zM1255 405h2v2h-2zM1085 410h2v2h-2zM1046 416h2v2h-2zM1064 416h2v2h-2zM1313 416h2v2h-2zM1246 417h2v2h-2zM1261 419h2v2h-2zM1309 421h2v2h-2zM1125 423h2v2h-2zM1281 427h2v2h-2zM1190 434h2v2h-2zM1179 450h2v2h-2z"/>
<path fill="#789c0c" d="M1112 403h2v2h-2zM1270 410h2v2h-2zM1199 438h2v2h-2z"/>
<path fill="#b4b418" d="M1164 404h2v2h-2zM1075 406h2v2h-2zM1196 417h2v2h-2zM1247 424h2v2h-2zM1049 559h2v2h-2z"/>
<path fill="#848484" d="M1421 346h2v2h-2zM1453 347h2v2h-2zM1336 349h2v2h-2zM1355 350h2v2h-2zM1421 350h2v2h-2zM1424 350h2v2h-2zM1474 350h2v2h-2zM1415 351h2v2h-2zM1432 351h2v2h-2zM1406 353h2v2h-2zM1464 353h2v2h-2zM1402 355h2v2h-2zM1376 357h2v2h-2zM1504 357h2v2h-2zM1382 359h2v2h-2zM1461 359h2v2h-2zM1442 360h2v2h-2zM1375 361h2v2h-2zM1429 361h2v2h-2zM1478 361h2v2h-2zM1332 366h2v2h-2zM1447 367h2v2h-2zM1383 370h2v2h-2zM1414 370h2v2h-2zM1485 370h2v2h-2zM1508 371h2v2h-2zM1456 372h2v2h-2zM1379 373h2v2h-2zM1522 373h2v2h-2zM1508 377h2v2h-2zM1341 379h2v2h-2zM1444 380h2v2h-2zM1478 381h2v2h-2zM1466 383h2v2h-2zM1482 383h2v2h-2zM1458 385h2v2h-2zM1464 386h2v2h-2zM1503 387h2v2h-2zM1539 387h2v2h-2zM1428 388h2v2h-2zM1498 388h2v2h-2zM1402 389h2v2h-2zM1346 390h2v2h-2zM1427 391h2v2h-2zM1437 392h2v2h-2zM1393 393h2v2h-2zM1498 396h2v2h-2zM1365 398h2v2h-2zM1385 398h2v2h-2zM1549 400h2v2h-2zM1448 401h2v2h-2zM1277 406h2v2h-2zM1334 407h2v2h-2zM1488 407h2v2h-2zM1300 408h2v2h-2zM1532 408h2v2h-2zM1397 411h2v2h-2zM1436 411h2v2h-2zM1454 411h2v2h-2zM1526 411h2v2h-2zM1382 412h2v2h-2zM1490 418h2v2h-2zM1461 420h2v2h-2zM1504 420h2v2h-2zM1552 420h2v2h-2zM1277 421h2v2h-2zM1500 421h2v2h-2zM1491 422h2v2h-2zM1543 423h2v2h-2zM1468 425h2v2h-2zM1485 425h2v2h-2zM1539 426h2v2h-2zM1533 428h2v2h-2zM1540 430h2v2h-2zM1487 436h2v2h-2zM1499 437h2v2h-2zM1514 442h2v2h-2zM1540 442h2v2h-2zM1551 443h2v2h-2zM1476 445h2v2h-2zM1515 445h2v2h-2zM1529 446h2v2h-2zM1472 450h2v2h-2zM1551 450h2v2h-2zM1508 451h2v2h-2zM1539 453h2v2h-2zM1539 456h2v2h-2zM1507 457h2v2h-2zM1505 462h2v2h-2zM1549 464h2v2h-2zM1475 465h2v2h-2zM1475 470h2v2h-2zM1502 473h2v2h-2zM1520 475h2v2h-2zM1481 477h2v2h-2zM1499 480h2v2h-2zM1537 481h2v2h-2zM1507 483h2v2h-2zM1540 487h2v2h-2zM1529 491h2v2h-2zM1513 493h2v2h-2zM1518 493h2v2h-2zM1520 495h2v2h-2zM1470 496h2v2h-2zM1531 496h2v2h-2zM1509 497h2v2h-2zM1487 498h2v2h-2zM1473 499h2v2h-2zM1540 499h2v2h-2zM1498 506h2v2h-2zM1543 507h2v2h-2zM1512 508h2v2h-2zM1489 513h2v2h-2zM1502 513h2v2h-2zM1488 515h2v2h-2zM1497 521h2v2h-2zM1475 525h2v2h-2zM1544 525h2v2h-2zM1515 526h2v2h-2zM1487 531h2v2h-2zM1519 531h2v2h-2zM1542 532h2v2h-2zM1526 536h2v2h-2zM1531 545h2v2h-2zM1499 548h2v2h-2zM1529 548h2v2h-2zM1503 550h2v2h-2zM1534 550h2v2h-2zM1369 553h2v2h-2zM1473 553h2v2h-2zM1529 553h2v2h-2zM1497 563h2v2h-2zM1499 563h2v2h-2zM1526 563h2v2h-2zM1529 565h2v2h-2zM1475 566h2v2h-2zM1481 566h2v2h-2zM1520 567h2v2h-2zM1490 571h2v2h-2zM1494 572h2v2h-2zM1315 574h2v2h-2zM1523 577h2v2h-2zM1374 578h2v2h-2zM1309 581h2v2h-2zM1508 581h2v2h-2zM1517 585h2v2h-2zM1491 589h2v2h-2zM1521 589h2v2h-2zM1485 590h2v2h-2zM1528 592h2v2h-2zM1514 597h2v2h-2zM1479 598h2v2h-2zM1506 598h2v2h-2zM1494 599h2v2h-2zM1529 599h2v2h-2zM1471 600h2v2h-2zM1378 601h2v2h-2zM1538 603h2v2h-2zM1208 604h2v2h-2zM1259 604h2v2h-2zM1487 604h2v2h-2zM1241 606h2v2h-2zM1185 609h2v2h-2zM1343 619h2v2h-2zM1356 619h2v2h-2zM1385 625h2v2h-2zM977 642h2v2h-2zM877 649h2v2h-2zM872 650h2v2h-2zM873 651h2v2h-2z"/>
<path fill="#3c6018" d="M1314 416h2v2h-2zM1257 417h2v2h-2zM1283 420h2v2h-2zM1296 430h2v2h-2zM1259 436h2v2h-2zM1293 438h2v2h-2z"/>
<path fill="#3c6c18" d="M1267 419h2v2h-2zM1284 426h2v2h-2zM1260 427h2v2h-2zM1262 444h2v2h-2zM1297 446h2v2h-2z"/>
<path fill="#3c300c" d="M1212 428h2v2h-2zM1378 430h2v2h-2zM1389 434h2v2h-2zM1350 436h2v2h-2zM1164 568h2v2h-2z"/>
<path fill="#6c6c18" d="M1164 392h2v2h-2zM1000 393h2v2h-2zM1150 401h2v2h-2zM1221 404h2v2h-2zM1012 405h2v2h-2zM1213 410h2v2h-2zM1147 411h2v2h-2zM1004 412h2v2h-2zM1129 414h2v2h-2zM1235 416h2v2h-2zM995 417h2v2h-2zM1076 419h2v2h-2zM1193 420h2v2h-2zM1234 430h2v2h-2zM994 433h2v2h-2zM1028 446h2v2h-2z"/>
<path fill="#cccc18" d="M1084 401h2v2h-2zM1210 456h2v2h-2zM1371 477h2v2h-2z"/>
<path fill="#606018" d="M1170 406h2v2h-2zM1243 414h2v2h-2zM1024 416h2v2h-2zM1216 428h2v2h-2zM1264 433h2v2h-2z"/>
<path fill="#30300c" d="M1274 408h2v2h-2zM1288 410h2v2h-2zM1335 415h2v2h-2zM1327 417h2v2h-2zM1299 419h2v2h-2zM1299 420h2v2h-2zM1329 421h2v2h-2zM1381 422h2v2h-2zM1372 423h2v2h-2zM1383 423h2v2h-2zM1389 425h2v2h-2zM1374 426h2v2h-2zM1345 428h2v2h-2zM1365 428h2v2h-2zM1370 428h2v2h-2zM1378 428h2v2h-2zM1347 429h2v2h-2zM1349 431h2v2h-2zM1287 433h2v2h-2zM1289 433h2v2h-2zM1321 434h2v2h-2zM1360 434h2v2h-2zM1311 438h2v2h-2zM1330 438h2v2h-2zM1335 438h2v2h-2zM1281 439h2v2h-2zM1358 439h2v2h-2zM1323 442h2v2h-2zM1316 447h2v2h-2zM1332 448h2v2h-2z"/>
<path fill="#303c0c" d="M1308 417h2v2h-2zM1306 426h2v2h-2z"/>
<path fill="#24300c" d="M1317 422h2v2h-2z"/>
<path fill="#24240c" d="M1340 427h2v2h-2z"/>
<path fill="#484818" d="M1372 420h2v2h-2zM1396 426h2v2h-2zM1352 429h2v2h-2zM1384 436h2v2h-2z"/>
<path fill="#544818" d="M1371 425h2v2h-2zM1366 427h2v2h-2zM1391 429h2v2h-2zM1351 430h2v2h-2zM1358 430h2v2h-2zM1362 431h2v2h-2zM1366 435h2v2h-2zM1389 438h2v2h-2z"/>
<path fill="#483c18" d="M1389 422h2v2h-2zM1346 423h2v2h-2zM1384 431h2v2h-2zM1400 431h2v2h-2zM1357 432h2v2h-2zM1385 433h2v2h-2zM1352 435h2v2h-2zM1378 435h2v2h-2zM1386 436h2v2h-2z"/>
<path fill="#30240c" d="M1348 431h2v2h-2zM1350 433h2v2h-2z"/>
<path fill="#a8a89c" d="M1453 343h2v2h-2zM1393 346h2v2h-2zM1462 350h2v2h-2zM1386 355h2v2h-2zM1531 365h2v2h-2zM1517 371h2v2h-2zM1477 378h2v2h-2zM1525 381h2v2h-2zM1502 382h2v2h-2zM1514 383h2v2h-2zM1494 397h2v2h-2zM1341 401h2v2h-2zM1526 405h2v2h-2z"/>
<path fill="#ccccc0" d="M1313 349h2v2h-2zM1246 386h2v2h-2zM1250 386h2v2h-2zM1271 401h2v2h-2z"/>
<path fill="#c0c0b4" d="M1328 352h2v2h-2zM1321 354h2v2h-2zM1253 379h2v2h-2zM1302 385h2v2h-2zM1529 390h2v2h-2zM1236 392h2v2h-2zM1545 395h2v2h-2zM1525 398h2v2h-2z"/>
<path fill="#6c6c6c" d="M1350 348h2v2h-2zM1341 351h2v2h-2zM1423 354h2v2h-2zM1365 358h2v2h-2zM1404 358h2v2h-2zM1371 363h2v2h-2zM1406 363h2v2h-2zM1415 365h2v2h-2zM1365 366h2v2h-2zM1407 366h2v2h-2zM1427 366h2v2h-2zM1347 367h2v2h-2zM1424 367h2v2h-2zM1336 374h2v2h-2zM1413 375h2v2h-2zM1416 378h2v2h-2zM1360 379h2v2h-2zM1380 382h2v2h-2zM1425 382h2v2h-2zM1386 386h2v2h-2zM1362 387h2v2h-2zM1374 390h2v2h-2zM1442 391h2v2h-2zM1352 397h2v2h-2zM1393 397h2v2h-2zM1371 400h2v2h-2zM1470 400h2v2h-2zM1347 402h2v2h-2zM1380 403h2v2h-2zM1426 403h2v2h-2zM1439 403h2v2h-2zM1416 406h2v2h-2zM1433 406h2v2h-2zM1508 406h2v2h-2zM1446 408h2v2h-2zM1328 411h2v2h-2zM1365 411h2v2h-2zM1444 411h2v2h-2zM1488 411h2v2h-2zM1287 413h2v2h-2zM1410 413h2v2h-2zM1413 413h2v2h-2zM1449 413h2v2h-2zM1465 413h2v2h-2zM1436 414h2v2h-2zM1458 415h2v2h-2zM1474 415h2v2h-2zM1415 416h2v2h-2zM1404 417h2v2h-2zM1464 418h2v2h-2zM1498 418h2v2h-2zM1414 420h2v2h-2zM1464 420h2v2h-2zM1443 421h2v2h-2zM1402 422h2v2h-2zM1470 422h2v2h-2zM1457 423h2v2h-2zM1452 425h2v2h-2zM1477 425h2v2h-2zM1497 426h2v2h-2zM1514 427h2v2h-2zM1399 428h2v2h-2zM1492 429h2v2h-2zM1487 431h2v2h-2zM1516 432h2v2h-2zM1523 432h2v2h-2zM1497 433h2v2h-2zM1386 435h2v2h-2zM1415 435h2v2h-2zM1511 436h2v2h-2zM1517 436h2v2h-2zM1424 437h2v2h-2zM1444 437h2v2h-2zM1545 437h2v2h-2zM1450 438h2v2h-2zM1474 438h2v2h-2zM1424 439h2v2h-2zM1465 440h2v2h-2zM1478 440h2v2h-2zM1433 443h2v2h-2zM1518 443h2v2h-2zM1401 446h2v2h-2zM1543 446h2v2h-2zM1494 448h2v2h-2zM1508 449h2v2h-2zM1502 450h2v2h-2zM1436 452h2v2h-2zM1418 453h2v2h-2zM1484 453h2v2h-2zM1474 456h2v2h-2zM1503 457h2v2h-2zM1382 458h2v2h-2zM1447 458h2v2h-2zM1397 459h2v2h-2zM1497 460h2v2h-2zM1419 461h2v2h-2zM1461 461h2v2h-2zM1424 462h2v2h-2zM1516 463h2v2h-2zM1490 464h2v2h-2zM1445 466h2v2h-2zM1478 467h2v2h-2zM1486 467h2v2h-2zM1457 468h2v2h-2zM1538 471h2v2h-2zM1546 472h2v2h-2zM1525 473h2v2h-2zM1406 474h2v2h-2zM1517 474h2v2h-2zM1465 477h2v2h-2zM1485 477h2v2h-2zM1548 477h2v2h-2zM1436 481h2v2h-2zM1450 481h2v2h-2zM1517 481h2v2h-2zM1546 481h2v2h-2zM1466 483h2v2h-2zM1451 485h2v2h-2zM1462 486h2v2h-2zM1487 486h2v2h-2zM1499 486h2v2h-2zM1433 487h2v2h-2zM1471 487h2v2h-2zM1516 487h2v2h-2zM1532 487h2v2h-2zM1493 488h2v2h-2zM1404 489h2v2h-2zM1475 489h2v2h-2zM1509 490h2v2h-2zM1526 491h2v2h-2zM1484 492h2v2h-2zM1446 495h2v2h-2zM1480 496h2v2h-2zM1416 498h2v2h-2zM1497 498h2v2h-2zM1494 499h2v2h-2zM1506 501h2v2h-2zM1413 502h2v2h-2zM1530 502h2v2h-2zM1473 503h2v2h-2zM1408 504h2v2h-2zM1514 504h2v2h-2zM1505 505h2v2h-2zM1424 508h2v2h-2zM1525 508h2v2h-2zM1438 509h2v2h-2zM1535 510h2v2h-2zM1460 511h2v2h-2zM1483 511h2v2h-2zM1451 514h2v2h-2zM1412 515h2v2h-2zM1464 515h2v2h-2zM1469 515h2v2h-2zM1511 516h2v2h-2zM1440 517h2v2h-2zM1452 517h2v2h-2zM1465 520h2v2h-2zM1532 520h2v2h-2zM1441 521h2v2h-2zM1513 523h2v2h-2zM1458 526h2v2h-2zM1485 526h2v2h-2zM1441 527h2v2h-2zM1413 531h2v2h-2zM1494 531h2v2h-2zM1453 532h2v2h-2zM1487 535h2v2h-2zM1434 537h2v2h-2zM1521 537h2v2h-2zM1365 539h2v2h-2zM1454 539h2v2h-2zM1497 539h2v2h-2zM1538 539h2v2h-2zM1308 540h2v2h-2zM1366 540h2v2h-2zM1379 540h2v2h-2zM1472 541h2v2h-2zM1304 542h2v2h-2zM1328 542h2v2h-2zM1364 542h2v2h-2zM1524 542h2v2h-2zM1447 545h2v2h-2zM1486 545h2v2h-2zM1502 545h2v2h-2zM1319 546h2v2h-2zM1361 546h2v2h-2zM1328 547h2v2h-2zM1389 547h2v2h-2zM1425 547h2v2h-2zM1370 548h2v2h-2zM1469 548h2v2h-2zM1473 548h2v2h-2zM1481 548h2v2h-2zM1515 548h2v2h-2zM1307 549h2v2h-2zM1381 550h2v2h-2zM1439 550h2v2h-2zM1512 552h2v2h-2zM1413 553h2v2h-2zM1447 553h2v2h-2zM1508 553h2v2h-2zM1516 555h2v2h-2zM1429 559h2v2h-2zM1351 560h2v2h-2zM1453 561h2v2h-2zM1519 561h2v2h-2zM1536 561h2v2h-2zM1478 562h2v2h-2zM1378 563h2v2h-2zM1450 563h2v2h-2zM1473 563h2v2h-2zM1507 563h2v2h-2zM1437 564h2v2h-2zM1336 565h2v2h-2zM1436 566h2v2h-2zM1451 566h2v2h-2zM1509 566h2v2h-2zM1317 567h2v2h-2zM1458 567h2v2h-2zM1406 568h2v2h-2zM1355 571h2v2h-2zM1386 571h2v2h-2zM1408 572h2v2h-2zM1427 572h2v2h-2zM1459 573h2v2h-2zM1523 573h2v2h-2zM1447 574h2v2h-2zM1386 576h2v2h-2zM1331 577h2v2h-2zM1353 577h2v2h-2zM1372 578h2v2h-2zM1463 578h2v2h-2zM1434 579h2v2h-2zM1333 582h2v2h-2zM1432 582h2v2h-2zM1351 583h2v2h-2zM1487 583h2v2h-2zM1328 584h2v2h-2zM1418 585h2v2h-2zM1511 585h2v2h-2zM1446 586h2v2h-2zM1502 586h2v2h-2zM1464 587h2v2h-2zM1439 591h2v2h-2zM1495 591h2v2h-2zM1516 591h2v2h-2zM1366 592h2v2h-2zM1499 593h2v2h-2zM1350 594h2v2h-2zM1375 595h2v2h-2zM1388 597h2v2h-2zM1411 597h2v2h-2zM1430 597h2v2h-2zM1485 597h2v2h-2zM1328 598h2v2h-2zM1423 598h2v2h-2zM1500 598h2v2h-2zM1363 600h2v2h-2zM1519 600h2v2h-2zM1385 601h2v2h-2zM1512 603h2v2h-2zM1508 606h2v2h-2zM1519 606h2v2h-2zM1497 607h2v2h-2zM1504 608h2v2h-2zM1531 608h2v2h-2zM1481 609h2v2h-2zM1514 612h2v2h-2zM1491 613h2v2h-2zM1517 614h2v2h-2zM1535 615h2v2h-2zM1529 621h2v2h-2zM1499 624h2v2h-2zM1506 624h2v2h-2zM1522 624h2v2h-2zM1493 626h2v2h-2zM1526 628h2v2h-2zM1496 633h2v2h-2z"/>
<path fill="#78786c" d="M1382 352h2v2h-2zM1339 368h2v2h-2zM1418 395h2v2h-2zM1430 396h2v2h-2zM1408 402h2v2h-2zM1415 402h2v2h-2zM1223 406h2v2h-2zM1552 408h2v2h-2zM1433 412h2v2h-2zM1429 418h2v2h-2zM1395 421h2v2h-2zM1514 422h2v2h-2zM1520 437h2v2h-2zM1525 449h2v2h-2zM1453 455h2v2h-2zM1523 463h2v2h-2zM1436 467h2v2h-2zM1444 477h2v2h-2zM1491 478h2v2h-2zM1431 482h2v2h-2zM1523 482h2v2h-2zM1477 483h2v2h-2zM1490 483h2v2h-2zM1482 487h2v2h-2zM1445 488h2v2h-2zM1524 501h2v2h-2zM1546 502h2v2h-2zM1475 508h2v2h-2zM1430 518h2v2h-2zM1503 522h2v2h-2zM1496 525h2v2h-2zM1502 528h2v2h-2zM1450 530h2v2h-2zM1467 532h2v2h-2zM1485 532h2v2h-2zM1508 532h2v2h-2zM1492 537h2v2h-2zM1513 537h2v2h-2zM1497 541h2v2h-2zM1489 542h2v2h-2zM1511 545h2v2h-2zM1526 550h2v2h-2zM1418 556h2v2h-2zM1482 558h2v2h-2zM1537 573h2v2h-2zM1515 576h2v2h-2zM1468 578h2v2h-2zM1382 579h2v2h-2zM1366 581h2v2h-2zM1378 583h2v2h-2zM1371 588h2v2h-2zM1507 591h2v2h-2zM1466 593h2v2h-2zM1435 597h2v2h-2z"/>
<path fill="#6c6c60" d="M1394 349h2v2h-2zM1410 364h2v2h-2zM1480 406h2v2h-2zM1451 418h2v2h-2zM1436 425h2v2h-2zM1416 426h2v2h-2zM1380 432h2v2h-2zM1464 435h2v2h-2zM1403 439h2v2h-2zM1501 443h2v2h-2zM1480 451h2v2h-2zM1380 460h2v2h-2zM1456 460h2v2h-2zM1382 465h2v2h-2zM1387 468h2v2h-2zM1498 477h2v2h-2zM1409 492h2v2h-2zM1429 493h2v2h-2zM1502 502h2v2h-2zM1453 510h2v2h-2zM1446 527h2v2h-2zM1416 529h2v2h-2zM1478 530h2v2h-2zM1482 536h2v2h-2zM1440 538h2v2h-2zM1464 540h2v2h-2zM1511 540h2v2h-2zM1358 541h2v2h-2zM1461 541h2v2h-2zM1520 551h2v2h-2zM1476 554h2v2h-2zM1398 556h2v2h-2zM1352 557h2v2h-2zM1313 560h2v2h-2zM1461 561h2v2h-2zM1322 566h2v2h-2zM1348 568h2v2h-2zM1499 572h2v2h-2zM1512 572h2v2h-2zM1487 576h2v2h-2zM1349 579h2v2h-2zM1426 592h2v2h-2zM1509 597h2v2h-2zM1344 601h2v2h-2zM1477 602h2v2h-2zM1511 620h2v2h-2z"/>
<path fill="#847878" d="M1397 351h2v2h-2zM1484 357h2v2h-2zM1385 360h2v2h-2zM1436 379h2v2h-2zM1345 382h2v2h-2zM1476 384h2v2h-2zM1479 390h2v2h-2zM1468 393h2v2h-2zM1485 402h2v2h-2zM1531 402h2v2h-2zM1522 407h2v2h-2zM1273 409h2v2h-2zM1536 411h2v2h-2zM1512 413h2v2h-2zM1445 415h2v2h-2zM1456 455h2v2h-2zM1498 457h2v2h-2zM1478 460h2v2h-2zM1482 501h2v2h-2zM1462 506h2v2h-2zM1479 506h2v2h-2zM1487 507h2v2h-2zM1541 508h2v2h-2zM1473 521h2v2h-2zM1523 527h2v2h-2zM1508 540h2v2h-2zM1538 548h2v2h-2zM1462 565h2v2h-2zM1496 565h2v2h-2zM1503 568h2v2h-2zM1373 570h2v2h-2zM1493 582h2v2h-2zM1376 585h2v2h-2zM1475 587h2v2h-2zM1529 611h2v2h-2z"/>
<path fill="#a89c9c" d="M1505 352h2v2h-2zM1499 354h2v2h-2zM1340 357h2v2h-2zM1480 364h2v2h-2zM1395 367h2v2h-2zM1438 367h2v2h-2zM1460 373h2v2h-2zM1446 377h2v2h-2zM1531 383h2v2h-2zM1394 389h2v2h-2zM1333 392h2v2h-2zM1489 392h2v2h-2zM1462 400h2v2h-2zM1374 403h2v2h-2zM1257 407h2v2h-2z"/>
<path fill="#787878" d="M1429 343h2v2h-2zM1457 344h2v2h-2zM1404 348h2v2h-2zM1428 348h2v2h-2zM1435 350h2v2h-2zM1452 357h2v2h-2zM1474 357h2v2h-2zM1393 359h2v2h-2zM1439 359h2v2h-2zM1404 361h2v2h-2zM1420 362h2v2h-2zM1471 362h2v2h-2zM1456 366h2v2h-2zM1469 367h2v2h-2zM1450 375h2v2h-2zM1373 376h2v2h-2zM1391 376h2v2h-2zM1424 377h2v2h-2zM1436 378h2v2h-2zM1414 379h2v2h-2zM1409 380h2v2h-2zM1470 380h2v2h-2zM1451 385h2v2h-2zM1343 387h2v2h-2zM1375 387h2v2h-2zM1413 391h2v2h-2zM1447 392h2v2h-2zM1454 392h2v2h-2zM1353 393h2v2h-2zM1459 393h2v2h-2zM1421 394h2v2h-2zM1446 394h2v2h-2zM1441 396h2v2h-2zM1450 398h2v2h-2zM1458 398h2v2h-2zM1464 398h2v2h-2zM1378 400h2v2h-2zM1433 400h2v2h-2zM1490 401h2v2h-2zM1496 401h2v2h-2zM1439 404h2v2h-2zM1470 405h2v2h-2zM1325 406h2v2h-2zM1424 406h2v2h-2zM1244 409h2v2h-2zM1265 411h2v2h-2zM1471 413h2v2h-2zM1399 415h2v2h-2zM1482 415h2v2h-2zM1526 415h2v2h-2zM1544 416h2v2h-2zM1484 418h2v2h-2zM1535 420h2v2h-2zM1439 421h2v2h-2zM1494 422h2v2h-2zM1528 422h2v2h-2zM1460 429h2v2h-2zM1479 429h2v2h-2zM1443 432h2v2h-2zM1528 435h2v2h-2zM1491 436h2v2h-2zM1481 438h2v2h-2zM1549 438h2v2h-2zM1548 446h2v2h-2zM1458 447h2v2h-2zM1497 447h2v2h-2zM1503 448h2v2h-2zM1442 450h2v2h-2zM1545 450h2v2h-2zM1460 453h2v2h-2zM1487 453h2v2h-2zM1438 457h2v2h-2zM1480 458h2v2h-2zM1522 458h2v2h-2zM1529 458h2v2h-2zM1550 459h2v2h-2zM1472 462h2v2h-2zM1547 462h2v2h-2zM1452 464h2v2h-2zM1521 465h2v2h-2zM1528 465h2v2h-2zM1510 467h2v2h-2zM1488 471h2v2h-2zM1472 472h2v2h-2zM1529 473h2v2h-2zM1540 473h2v2h-2zM1510 475h2v2h-2zM1516 475h2v2h-2zM1537 475h2v2h-2zM1436 477h2v2h-2zM1453 479h2v2h-2zM1471 480h2v2h-2zM1530 480h2v2h-2zM1496 483h2v2h-2zM1540 484h2v2h-2zM1523 485h2v2h-2zM1544 486h2v2h-2zM1500 491h2v2h-2zM1454 495h2v2h-2zM1439 500h2v2h-2zM1468 502h2v2h-2zM1480 503h2v2h-2zM1457 507h2v2h-2zM1531 507h2v2h-2zM1516 509h2v2h-2zM1479 511h2v2h-2zM1496 511h2v2h-2zM1506 512h2v2h-2zM1447 516h2v2h-2zM1435 517h2v2h-2zM1482 520h2v2h-2zM1523 521h2v2h-2zM1476 524h2v2h-2zM1490 524h2v2h-2zM1534 524h2v2h-2zM1470 525h2v2h-2zM1472 531h2v2h-2zM1499 531h2v2h-2zM1531 533h2v2h-2zM1504 536h2v2h-2zM1457 541h2v2h-2zM1501 543h2v2h-2zM1381 547h2v2h-2zM1323 549h2v2h-2zM1443 551h2v2h-2zM1309 553h2v2h-2zM1317 554h2v2h-2zM1319 555h2v2h-2zM1371 555h2v2h-2zM1446 556h2v2h-2zM1490 556h2v2h-2zM1505 558h2v2h-2zM1534 558h2v2h-2zM1461 559h2v2h-2zM1302 561h2v2h-2zM1321 562h2v2h-2zM1375 562h2v2h-2zM1511 562h2v2h-2zM1311 566h2v2h-2zM1535 566h2v2h-2zM1386 567h2v2h-2zM1491 569h2v2h-2zM1362 571h2v2h-2zM1420 571h2v2h-2zM1413 574h2v2h-2zM1366 577h2v2h-2zM1446 578h2v2h-2zM1451 578h2v2h-2zM1528 578h2v2h-2zM1322 579h2v2h-2zM1439 579h2v2h-2zM1492 579h2v2h-2zM1534 579h2v2h-2zM1502 580h2v2h-2zM1484 581h2v2h-2zM1316 583h2v2h-2zM1383 584h2v2h-2zM1462 584h2v2h-2zM1527 585h2v2h-2zM1452 586h2v2h-2zM1326 587h2v2h-2zM1360 587h2v2h-2zM1457 589h2v2h-2zM1480 591h2v2h-2zM1450 592h2v2h-2zM1474 592h2v2h-2zM1444 595h2v2h-2zM1450 595h2v2h-2zM1357 598h2v2h-2zM1465 598h2v2h-2zM1415 599h2v2h-2zM1432 600h2v2h-2zM1507 602h2v2h-2zM1530 602h2v2h-2zM1367 603h2v2h-2zM1453 603h2v2h-2zM1186 607h2v2h-2zM1298 607h2v2h-2zM1526 607h2v2h-2zM1174 609h2v2h-2zM1522 611h2v2h-2zM1145 612h2v2h-2zM1324 615h2v2h-2zM1369 621h2v2h-2zM1380 624h2v2h-2zM893 649h2v2h-2z"/>
<path fill="#d8d8cc" d="M1317 363h2v2h-2zM1317 390h2v2h-2z"/>
<path fill="#908484" d="M1442 343h2v2h-2zM1508 346h2v2h-2zM1503 347h2v2h-2zM1419 354h2v2h-2zM1465 358h2v2h-2zM1549 368h2v2h-2zM1402 370h2v2h-2zM1435 371h2v2h-2zM1542 371h2v2h-2zM1514 372h2v2h-2zM1461 377h2v2h-2zM1407 389h2v2h-2zM1541 393h2v2h-2zM1359 394h2v2h-2zM1434 396h2v2h-2zM1480 398h2v2h-2zM1506 435h2v2h-2zM1523 447h2v2h-2zM1507 472h2v2h-2zM1490 491h2v2h-2zM1526 496h2v2h-2zM1504 499h2v2h-2zM1545 511h2v2h-2zM1528 526h2v2h-2zM1533 538h2v2h-2zM1483 562h2v2h-2zM1504 575h2v2h-2zM1536 580h2v2h-2zM1529 584h2v2h-2z"/>
<path fill="#c0b4b4" d="M1513 347h2v2h-2zM1511 350h2v2h-2zM1530 369h2v2h-2zM1284 375h2v2h-2zM1309 393h2v2h-2zM1298 394h2v2h-2zM1250 397h2v2h-2zM1277 398h2v2h-2z"/>
<path fill="#ccc0c0" d="M1301 375h2v2h-2zM1243 394h2v2h-2z"/>
<path fill="#848478" d="M1479 343h2v2h-2zM1462 347h2v2h-2zM1440 348h2v2h-2zM1429 355h2v2h-2zM1435 365h2v2h-2zM1343 374h2v2h-2zM1439 374h2v2h-2zM1423 385h2v2h-2zM1419 387h2v2h-2zM1411 388h2v2h-2zM1509 395h2v2h-2zM1476 398h2v2h-2zM1477 405h2v2h-2zM1529 427h2v2h-2zM1508 428h2v2h-2zM1525 440h2v2h-2zM1528 452h2v2h-2zM1499 460h2v2h-2zM1496 470h2v2h-2zM1461 472h2v2h-2zM1467 472h2v2h-2zM1459 495h2v2h-2zM1496 503h2v2h-2zM1468 514h2v2h-2zM1498 515h2v2h-2zM1522 515h2v2h-2zM1502 517h2v2h-2zM1532 517h2v2h-2zM1463 528h2v2h-2zM1476 537h2v2h-2zM1480 542h2v2h-2zM1458 550h2v2h-2zM1483 550h2v2h-2zM1470 556h2v2h-2zM1312 557h2v2h-2zM1316 588h2v2h-2zM1365 588h2v2h-2zM1489 592h2v2h-2zM1503 603h2v2h-2z"/>
<path fill="#909084" d="M1411 358h2v2h-2zM1548 362h2v2h-2zM1365 377h2v2h-2zM1421 382h2v2h-2zM1447 382h2v2h-2zM1534 385h2v2h-2zM1407 387h2v2h-2zM1381 394h2v2h-2zM1481 409h2v2h-2zM1504 418h2v2h-2zM1457 425h2v2h-2zM1546 426h2v2h-2zM1514 432h2v2h-2zM1494 442h2v2h-2zM1491 443h2v2h-2zM1510 461h2v2h-2zM1534 464h2v2h-2zM1533 465h2v2h-2zM1517 466h2v2h-2zM1502 467h2v2h-2zM1505 475h2v2h-2zM1520 504h2v2h-2zM1531 510h2v2h-2zM1542 516h2v2h-2zM1508 520h2v2h-2zM1520 521h2v2h-2zM1532 525h2v2h-2zM1536 534h2v2h-2zM1512 557h2v2h-2zM1520 584h2v2h-2z"/>
<path fill="#d8cccc" d="M1297 382h2v2h-2zM1274 385h2v2h-2zM1267 397h2v2h-2z"/>
<path fill="#9c9090" d="M1413 346h2v2h-2zM1502 350h2v2h-2zM1543 367h2v2h-2zM1473 370h2v2h-2zM1354 378h2v2h-2zM1430 382h2v2h-2zM1436 386h2v2h-2zM1496 392h2v2h-2zM1505 392h2v2h-2zM1487 394h2v2h-2zM1550 398h2v2h-2zM1494 407h2v2h-2zM1523 420h2v2h-2zM1519 421h2v2h-2zM1505 426h2v2h-2zM1546 440h2v2h-2zM1531 441h2v2h-2zM1545 458h2v2h-2zM1529 478h2v2h-2zM1519 511h2v2h-2zM1540 515h2v2h-2zM1529 571h2v2h-2z"/>
<path fill="#b4a8a8" d="M1476 349h2v2h-2zM1528 353h2v2h-2zM1515 357h2v2h-2zM1492 367h2v2h-2zM1550 376h2v2h-2zM1348 387h2v2h-2zM1482 391h2v2h-2zM1401 401h2v2h-2z"/>
<path fill="#786c6c" d="M1340 393h2v2h-2zM1443 400h2v2h-2zM1418 403h2v2h-2zM1406 405h2v2h-2zM1461 411h2v2h-2zM1494 412h2v2h-2zM1298 413h2v2h-2zM1466 431h2v2h-2zM1440 435h2v2h-2zM1540 436h2v2h-2zM1440 468h2v2h-2zM1418 476h2v2h-2zM1541 502h2v2h-2zM1494 505h2v2h-2zM1425 512h2v2h-2zM1513 512h2v2h-2zM1426 523h2v2h-2zM1490 528h2v2h-2zM1523 531h2v2h-2zM1467 536h2v2h-2zM1465 548h2v2h-2zM1372 550h2v2h-2zM1539 552h2v2h-2zM1385 553h2v2h-2zM1485 555h2v2h-2zM1455 556h2v2h-2zM1320 573h2v2h-2zM1520 573h2v2h-2zM1481 577h2v2h-2zM1416 578h2v2h-2zM1374 582h2v2h-2zM1362 583h2v2h-2zM1322 584h2v2h-2zM1471 586h2v2h-2zM1371 602h2v2h-2zM1524 604h2v2h-2zM1520 623h2v2h-2zM1516 627h2v2h-2z"/>
<path fill="#b4b4a8" d="M1510 356h2v2h-2zM1316 407h2v2h-2zM1231 410h2v2h-2z"/>
<path fill="#9c9c90" d="M1467 346h2v2h-2zM1525 350h2v2h-2zM1534 353h2v2h-2zM1439 354h2v2h-2zM1541 359h2v2h-2zM1453 368h2v2h-2zM1425 372h2v2h-2zM1430 378h2v2h-2zM1420 389h2v2h-2zM1472 390h2v2h-2zM1535 392h2v2h-2zM1552 400h2v2h-2zM1497 406h2v2h-2zM1336 412h2v2h-2zM1551 415h2v2h-2zM1539 418h2v2h-2zM1533 438h2v2h-2zM1531 479h2v2h-2z"/>
<path fill="#606060" d="M1467 401h2v2h-2zM1455 402h2v2h-2zM1428 405h2v2h-2zM1426 413h2v2h-2zM1424 414h2v2h-2zM1409 415h2v2h-2zM1469 416h2v2h-2zM1441 417h2v2h-2zM1449 421h2v2h-2zM1384 422h2v2h-2zM1406 422h2v2h-2zM1427 423h2v2h-2zM1430 424h2v2h-2zM1422 426h2v2h-2zM1428 426h2v2h-2zM1439 427h2v2h-2zM1444 427h2v2h-2zM1389 428h2v2h-2zM1385 430h2v2h-2zM1397 430h2v2h-2zM1433 431h2v2h-2zM1439 431h2v2h-2zM1482 431h2v2h-2zM1412 432h2v2h-2zM1473 432h2v2h-2zM1383 436h2v2h-2zM1405 436h2v2h-2zM1410 438h2v2h-2zM1398 439h2v2h-2zM1441 440h2v2h-2zM1472 440h2v2h-2zM1384 441h2v2h-2zM1462 441h2v2h-2zM1408 442h2v2h-2zM1481 442h2v2h-2zM1447 443h2v2h-2zM1419 445h2v2h-2zM1464 445h2v2h-2zM1384 446h2v2h-2zM1391 446h2v2h-2zM1403 446h2v2h-2zM1485 446h2v2h-2zM1410 448h2v2h-2zM1480 448h2v2h-2zM1377 450h2v2h-2zM1427 450h2v2h-2zM1495 450h2v2h-2zM1453 451h2v2h-2zM1403 452h2v2h-2zM1432 453h2v2h-2zM1406 454h2v2h-2zM1436 456h2v2h-2zM1421 457h2v2h-2zM1485 457h2v2h-2zM1430 458h2v2h-2zM1462 458h2v2h-2zM1438 460h2v2h-2zM1401 461h2v2h-2zM1408 461h2v2h-2zM1441 463h2v2h-2zM1463 466h2v2h-2zM1386 470h2v2h-2zM1485 471h2v2h-2zM1433 473h2v2h-2zM1470 475h2v2h-2zM1428 476h2v2h-2zM1457 478h2v2h-2zM1406 480h2v2h-2zM1461 481h2v2h-2zM1413 482h2v2h-2zM1443 482h2v2h-2zM1454 482h2v2h-2zM1415 485h2v2h-2zM1457 487h2v2h-2zM1421 490h2v2h-2zM1449 490h2v2h-2zM1424 491h2v2h-2zM1496 491h2v2h-2zM1466 492h2v2h-2zM1462 493h2v2h-2zM1477 493h2v2h-2zM1409 496h2v2h-2zM1404 497h2v2h-2zM1440 497h2v2h-2zM1462 498h2v2h-2zM1448 500h2v2h-2zM1459 500h2v2h-2zM1491 500h2v2h-2zM1443 501h2v2h-2zM1407 506h2v2h-2zM1413 506h2v2h-2zM1444 506h2v2h-2zM1450 507h2v2h-2zM1415 512h2v2h-2zM1470 514h2v2h-2zM1406 515h2v2h-2zM1480 516h2v2h-2zM1423 518h2v2h-2zM1462 522h2v2h-2zM1408 523h2v2h-2zM1419 523h2v2h-2zM1426 526h2v2h-2zM1432 527h2v2h-2zM1454 527h2v2h-2zM1436 531h2v2h-2zM1431 533h2v2h-2zM1443 534h2v2h-2zM1455 535h2v2h-2zM1312 536h2v2h-2zM1329 536h2v2h-2zM1464 536h2v2h-2zM1317 537h2v2h-2zM1393 537h2v2h-2zM1301 538h2v2h-2zM1427 538h2v2h-2zM1405 539h2v2h-2zM1336 540h2v2h-2zM1396 541h2v2h-2zM1409 542h2v2h-2zM1316 543h2v2h-2zM1450 543h2v2h-2zM1445 544h2v2h-2zM1353 545h2v2h-2zM1362 545h2v2h-2zM1428 545h2v2h-2zM1339 546h2v2h-2zM1455 546h2v2h-2zM1403 547h2v2h-2zM1452 547h2v2h-2zM1491 547h2v2h-2zM1310 548h2v2h-2zM1347 548h2v2h-2zM1410 548h2v2h-2zM1326 550h2v2h-2zM1394 550h2v2h-2zM1465 550h2v2h-2zM1496 550h2v2h-2zM1299 552h2v2h-2zM1391 552h2v2h-2zM1432 552h2v2h-2zM1491 552h2v2h-2zM1456 553h2v2h-2zM1323 554h2v2h-2zM1301 556h2v2h-2zM1341 556h2v2h-2zM1365 557h2v2h-2zM1336 559h2v2h-2zM1357 559h2v2h-2zM1378 559h2v2h-2zM1473 559h2v2h-2zM1465 560h2v2h-2zM1488 560h2v2h-2zM1407 561h2v2h-2zM1311 562h2v2h-2zM1392 564h2v2h-2zM1425 564h2v2h-2zM1353 565h2v2h-2zM1360 565h2v2h-2zM1370 566h2v2h-2zM1447 567h2v2h-2zM1471 567h2v2h-2zM1485 567h2v2h-2zM1365 568h2v2h-2zM1375 568h2v2h-2zM1395 569h2v2h-2zM1418 569h2v2h-2zM1421 569h2v2h-2zM1472 570h2v2h-2zM1396 571h2v2h-2zM1465 571h2v2h-2zM1311 572h2v2h-2zM1380 573h2v2h-2zM1483 573h2v2h-2zM1500 575h2v2h-2zM1308 578h2v2h-2zM1474 578h2v2h-2zM1341 579h2v2h-2zM1452 580h2v2h-2zM1479 581h2v2h-2zM1404 582h2v2h-2zM1470 582h2v2h-2zM1467 583h2v2h-2zM1437 584h2v2h-2zM1388 585h2v2h-2zM1442 585h2v2h-2zM1314 586h2v2h-2zM1383 587h2v2h-2zM1436 587h2v2h-2zM1340 588h2v2h-2zM1482 588h2v2h-2zM1486 588h2v2h-2zM1372 590h2v2h-2zM1418 591h2v2h-2zM1332 592h2v2h-2zM1336 592h2v2h-2zM1397 592h2v2h-2zM1409 592h2v2h-2zM1444 592h2v2h-2zM1360 594h2v2h-2zM1440 595h2v2h-2zM1470 595h2v2h-2zM1342 596h2v2h-2zM1347 599h2v2h-2zM1372 599h2v2h-2zM1475 599h2v2h-2zM1413 600h2v2h-2zM1393 602h2v2h-2zM1458 602h2v2h-2zM1436 604h2v2h-2zM1443 604h2v2h-2zM1481 604h2v2h-2zM1446 608h2v2h-2zM1456 612h2v2h-2zM1505 612h2v2h-2zM1535 612h2v2h-2zM1384 614h2v2h-2zM1418 616h2v2h-2zM1484 616h2v2h-2zM1451 617h2v2h-2zM1475 617h2v2h-2zM1497 617h2v2h-2zM1481 618h2v2h-2zM1509 618h2v2h-2zM1520 618h2v2h-2zM1462 620h2v2h-2zM1465 622h2v2h-2zM1488 622h2v2h-2zM1520 626h2v2h-2zM1534 626h2v2h-2zM1502 629h2v2h-2zM1468 630h2v2h-2zM1520 631h2v2h-2zM1484 632h2v2h-2zM1526 632h2v2h-2z"/>
<path fill="#605454" d="M1411 408h2v2h-2zM1421 410h2v2h-2zM1392 434h2v2h-2zM1389 442h2v2h-2zM1433 446h2v2h-2zM1412 458h2v2h-2zM1397 465h2v2h-2zM1419 480h2v2h-2zM1420 498h2v2h-2zM1436 544h2v2h-2zM1439 549h2v2h-2zM1361 550h2v2h-2zM1305 558h2v2h-2zM1414 561h2v2h-2zM1441 561h2v2h-2zM1386 564h2v2h-2zM1404 576h2v2h-2zM1418 582h2v2h-2zM1351 585h2v2h-2zM1392 587h2v2h-2zM1356 591h2v2h-2zM1334 596h2v2h-2zM1418 602h2v2h-2zM1438 605h2v2h-2zM1415 614h2v2h-2zM1438 621h2v2h-2zM1433 625h2v2h-2zM1511 627h2v2h-2zM1479 633h2v2h-2z"/>
<path fill="#6c6060" d="M1463 406h2v2h-2zM1451 408h2v2h-2zM1478 422h2v2h-2zM1405 426h2v2h-2zM1503 433h2v2h-2zM1459 435h2v2h-2zM1470 436h2v2h-2zM1438 443h2v2h-2zM1441 447h2v2h-2zM1449 451h2v2h-2zM1467 460h2v2h-2zM1431 461h2v2h-2zM1453 471h2v2h-2zM1404 476h2v2h-2zM1424 503h2v2h-2zM1513 516h2v2h-2zM1474 517h2v2h-2zM1459 518h2v2h-2zM1413 522h2v2h-2zM1508 526h2v2h-2zM1423 537h2v2h-2zM1372 540h2v2h-2zM1319 543h2v2h-2zM1335 547h2v2h-2zM1398 549h2v2h-2zM1427 552h2v2h-2zM1386 555h2v2h-2zM1433 563h2v2h-2zM1306 565h2v2h-2zM1366 572h2v2h-2zM1334 574h2v2h-2zM1460 591h2v2h-2zM1378 593h2v2h-2zM1404 601h2v2h-2zM1514 609h2v2h-2zM1465 615h2v2h-2zM1514 618h2v2h-2zM1464 627h2v2h-2z"/>
<path fill="#606054" d="M1393 418h2v2h-2zM1391 419h2v2h-2zM1403 430h2v2h-2zM1452 432h2v2h-2zM1427 435h2v2h-2zM1379 443h2v2h-2zM1451 447h2v2h-2zM1384 460h2v2h-2zM1471 465h2v2h-2zM1407 466h2v2h-2zM1422 473h2v2h-2zM1441 475h2v2h-2zM1475 478h2v2h-2zM1454 492h2v2h-2zM1403 493h2v2h-2zM1455 500h2v2h-2zM1470 508h2v2h-2zM1454 520h2v2h-2zM1406 527h2v2h-2zM1462 534h2v2h-2zM1332 540h2v2h-2zM1417 542h2v2h-2zM1299 543h2v2h-2zM1352 543h2v2h-2zM1357 552h2v2h-2zM1427 576h2v2h-2zM1364 595h2v2h-2zM1473 607h2v2h-2zM1452 621h2v2h-2z"/>
<path fill="#545454" d="M1418 423h2v2h-2zM1381 426h2v2h-2zM1393 426h2v2h-2zM1412 427h2v2h-2zM1448 430h2v2h-2zM1407 431h2v2h-2zM1423 432h2v2h-2zM1415 439h2v2h-2zM1428 447h2v2h-2zM1446 447h2v2h-2zM1422 448h2v2h-2zM1407 450h2v2h-2zM1412 451h2v2h-2zM1384 453h2v2h-2zM1396 453h2v2h-2zM1395 454h2v2h-2zM1415 455h2v2h-2zM1387 458h2v2h-2zM1390 460h2v2h-2zM1450 461h2v2h-2zM1414 462h2v2h-2zM1395 463h2v2h-2zM1422 467h2v2h-2zM1411 468h2v2h-2zM1412 471h2v2h-2zM1443 471h2v2h-2zM1427 472h2v2h-2zM1449 472h2v2h-2zM1396 473h2v2h-2zM1402 473h2v2h-2zM1423 475h2v2h-2zM1409 478h2v2h-2zM1400 480h2v2h-2zM1440 485h2v2h-2zM1430 486h2v2h-2zM1412 487h2v2h-2zM1423 488h2v2h-2zM1416 493h2v2h-2zM1433 497h2v2h-2zM1422 504h2v2h-2zM1429 506h2v2h-2zM1433 506h2v2h-2zM1419 507h2v2h-2zM1435 510h2v2h-2zM1441 512h2v2h-2zM1409 513h2v2h-2zM1432 514h2v2h-2zM1415 517h2v2h-2zM1447 521h2v2h-2zM1433 522h2v2h-2zM1435 522h2v2h-2zM1410 528h2v2h-2zM1421 528h2v2h-2zM1426 530h2v2h-2zM1422 532h2v2h-2zM1322 536h2v2h-2zM1346 536h2v2h-2zM1444 536h2v2h-2zM1308 537h2v2h-2zM1384 538h2v2h-2zM1401 538h2v2h-2zM1343 539h2v2h-2zM1417 539h2v2h-2zM1425 540h2v2h-2zM1433 540h2v2h-2zM1389 541h2v2h-2zM1412 541h2v2h-2zM1402 542h2v2h-2zM1387 543h2v2h-2zM1299 545h2v2h-2zM1417 549h2v2h-2zM1434 549h2v2h-2zM1421 552h2v2h-2zM1344 553h2v2h-2zM1408 553h2v2h-2zM1401 554h2v2h-2zM1382 556h2v2h-2zM1404 556h2v2h-2zM1422 557h2v2h-2zM1451 558h2v2h-2zM1347 559h2v2h-2zM1435 559h2v2h-2zM1357 560h2v2h-2zM1420 561h2v2h-2zM1337 562h2v2h-2zM1360 564h2v2h-2zM1381 567h2v2h-2zM1440 567h2v2h-2zM1329 569h2v2h-2zM1410 569h2v2h-2zM1428 569h2v2h-2zM1349 571h2v2h-2zM1326 573h2v2h-2zM1402 573h2v2h-2zM1339 574h2v2h-2zM1345 574h2v2h-2zM1360 575h2v2h-2zM1423 576h2v2h-2zM1393 579h2v2h-2zM1424 582h2v2h-2zM1443 582h2v2h-2zM1354 583h2v2h-2zM1396 583h2v2h-2zM1447 583h2v2h-2zM1407 584h2v2h-2zM1414 584h2v2h-2zM1410 585h2v2h-2zM1422 586h2v2h-2zM1427 586h2v2h-2zM1328 588h2v2h-2zM1390 590h2v2h-2zM1344 591h2v2h-2zM1385 592h2v2h-2zM1433 592h2v2h-2zM1326 593h2v2h-2zM1403 593h2v2h-2zM1413 593h2v2h-2zM1382 595h2v2h-2zM1395 595h2v2h-2zM1458 595h2v2h-2zM1352 597h2v2h-2zM1410 600h2v2h-2zM1337 601h2v2h-2zM1427 601h2v2h-2zM1395 602h2v2h-2zM1495 604h2v2h-2zM1383 605h2v2h-2zM1486 605h2v2h-2zM1369 606h2v2h-2zM1453 606h2v2h-2zM1388 607h2v2h-2zM1433 607h2v2h-2zM1469 607h2v2h-2zM1409 608h2v2h-2zM1458 608h2v2h-2zM1379 611h2v2h-2zM1502 612h2v2h-2zM1468 613h2v2h-2zM1477 613h2v2h-2zM1360 614h2v2h-2zM1459 614h2v2h-2zM1504 615h2v2h-2zM1369 616h2v2h-2zM1382 619h2v2h-2zM1433 619h2v2h-2zM1424 621h2v2h-2zM1389 622h2v2h-2zM1444 622h2v2h-2zM1449 622h2v2h-2zM1494 622h2v2h-2zM1387 623h2v2h-2zM1441 625h2v2h-2zM1469 626h2v2h-2zM1476 627h2v2h-2zM1497 628h2v2h-2zM1456 632h2v2h-2zM1531 632h2v2h-2z"/>
<path fill="#484848" d="M1401 436h2v2h-2zM1388 445h2v2h-2zM1392 452h2v2h-2zM1334 538h2v2h-2zM1369 539h2v2h-2zM1394 549h2v2h-2zM1340 554h2v2h-2zM1394 560h2v2h-2zM1346 563h2v2h-2zM1343 566h2v2h-2zM1401 567h2v2h-2zM1338 582h2v2h-2zM1345 583h2v2h-2zM1404 586h2v2h-2zM1401 596h2v2h-2zM1334 601h2v2h-2zM1397 605h2v2h-2zM1340 607h2v2h-2zM1358 608h2v2h-2zM1417 608h2v2h-2zM1430 608h2v2h-2zM1354 609h2v2h-2zM1403 610h2v2h-2zM1423 611h2v2h-2zM1449 611h2v2h-2zM1410 612h2v2h-2zM1470 612h2v2h-2zM1419 614h2v2h-2zM1445 614h2v2h-2zM1444 615h2v2h-2zM1363 617h2v2h-2zM1404 617h2v2h-2zM1409 617h2v2h-2zM1420 619h2v2h-2zM1433 621h2v2h-2zM1485 621h2v2h-2zM1396 622h2v2h-2zM1419 622h2v2h-2zM1473 622h2v2h-2zM1379 623h2v2h-2zM1409 624h2v2h-2zM1413 624h2v2h-2zM1476 624h2v2h-2zM1392 626h2v2h-2zM1421 627h2v2h-2zM1428 629h2v2h-2zM1456 629h2v2h-2zM1462 633h2v2h-2z"/>
<path fill="#545448" d="M1420 511h2v2h-2zM1409 532h2v2h-2zM1376 537h2v2h-2zM1345 540h2v2h-2zM1351 553h2v2h-2zM1347 586h2v2h-2zM1351 603h2v2h-2zM1366 607h2v2h-2zM1369 611h2v2h-2zM1469 619h2v2h-2zM1487 627h2v2h-2zM1446 629h2v2h-2z"/>
<path fill="#3c3c3c" d="M1395 606h2v2h-2zM1406 606h2v2h-2zM1348 608h2v2h-2zM1421 608h2v2h-2zM1436 613h2v2h-2zM1430 614h2v2h-2zM1387 616h2v2h-2zM1395 616h2v2h-2zM1398 617h2v2h-2zM1427 618h2v2h-2zM1401 624h2v2h-2zM1401 625h2v2h-2zM1406 627h2v2h-2z"/>
<path fill="#48483c" d="M1348 610h2v2h-2z"/>
<path fill="#303030" d="M1397 614h2v2h-2z"/>
<path fill="#e4e4e4" d="M1236 508h2v2h-2zM1244 518h2v2h-2zM1465 532h2v2h-2zM1410 534h2v2h-2zM1404 535h2v2h-2zM1452 535h2v2h-2zM1400 536h2v2h-2zM1402 537h2v2h-2z"/>
<path fill="#9c6c0c" d="M1340 480h2v2h-2zM1254 482h2v2h-2zM1291 543h2v2h-2zM1266 545h2v2h-2zM1292 545h2v2h-2zM1239 547h2v2h-2zM1294 547h2v2h-2zM1264 548h2v2h-2zM1227 550h2v2h-2zM1230 552h2v2h-2zM1158 554h2v2h-2zM1178 554h2v2h-2zM1137 555h2v2h-2zM1293 556h2v2h-2zM1136 558h2v2h-2zM1190 564h2v2h-2zM1193 564h2v2h-2zM1271 565h2v2h-2zM1014 575h2v2h-2zM1130 577h2v2h-2zM994 579h2v2h-2zM897 582h2v2h-2zM994 582h2v2h-2zM1024 586h2v2h-2zM922 594h2v2h-2z"/>
<path fill="#d8540c" d="M1392 491h2v2h-2zM1238 495h2v2h-2zM1212 509h2v2h-2zM1202 518h2v2h-2zM951 566h2v2h-2zM984 579h2v2h-2zM935 580h2v2h-2zM973 582h2v2h-2zM973 586h2v2h-2zM965 588h2v2h-2zM937 593h2v2h-2z"/>
<path fill="#c0480c" d="M1396 489h2v2h-2zM1397 489h2v2h-2zM1238 493h2v2h-2zM1243 506h2v2h-2zM1202 508h2v2h-2zM1205 509h2v2h-2zM1204 514h2v2h-2zM1220 540h2v2h-2zM1273 553h2v2h-2zM970 565h2v2h-2zM972 569h2v2h-2zM980 573h2v2h-2zM984 575h2v2h-2zM989 581h2v2h-2zM980 583h2v2h-2zM950 586h2v2h-2zM946 588h2v2h-2zM964 592h2v2h-2z"/>
<path fill="#b4900c" d="M1322 479h2v2h-2zM985 565h2v2h-2zM907 570h2v2h-2zM1004 570h2v2h-2zM1028 570h2v2h-2zM1041 570h2v2h-2zM993 571h2v2h-2zM1071 573h2v2h-2zM1038 574h2v2h-2zM1011 575h2v2h-2zM883 579h2v2h-2z"/>
<path fill="#a83c0c" d="M1396 491h2v2h-2zM1217 498h2v2h-2zM1206 506h2v2h-2zM1204 509h2v2h-2zM1227 512h2v2h-2zM1254 513h2v2h-2zM1233 515h2v2h-2zM1189 517h2v2h-2zM1199 520h2v2h-2zM1218 520h2v2h-2zM1188 523h2v2h-2zM1220 524h2v2h-2zM1265 526h2v2h-2zM1186 528h2v2h-2zM1197 528h2v2h-2zM1243 534h2v2h-2zM1237 536h2v2h-2zM1388 539h2v2h-2zM1195 540h2v2h-2zM1292 559h2v2h-2zM957 568h2v2h-2zM928 569h2v2h-2zM929 570h2v2h-2zM967 570h2v2h-2zM968 573h2v2h-2zM947 580h2v2h-2zM954 589h2v2h-2z"/>
<path fill="#9c3c0c" d="M1240 487h2v2h-2zM1376 492h2v2h-2zM1241 493h2v2h-2zM1219 498h2v2h-2zM1212 502h2v2h-2zM1213 502h2v2h-2zM1198 521h2v2h-2zM1224 521h2v2h-2zM1189 529h2v2h-2zM1209 529h2v2h-2zM1205 534h2v2h-2zM1191 537h2v2h-2zM1271 562h2v2h-2zM968 568h2v2h-2zM957 571h2v2h-2zM934 573h2v2h-2zM978 574h2v2h-2zM939 576h2v2h-2zM964 583h2v2h-2zM927 585h2v2h-2zM958 585h2v2h-2z"/>
<path fill="#a8840c" d="M1359 485h2v2h-2zM937 566h2v2h-2zM1090 567h2v2h-2zM882 568h2v2h-2zM1014 571h2v2h-2zM1080 573h2v2h-2zM920 585h2v2h-2zM912 588h2v2h-2z"/>
<path fill="#c0900c" d="M1326 481h2v2h-2zM1240 482h2v2h-2zM1016 571h2v2h-2zM888 574h2v2h-2zM909 574h2v2h-2zM1095 576h2v2h-2zM1053 577h2v2h-2zM993 578h2v2h-2zM1010 580h2v2h-2zM895 586h2v2h-2z"/>
<path fill="#c09c0c" d="M996 567h2v2h-2zM1083 569h2v2h-2zM897 570h2v2h-2zM1030 573h2v2h-2zM1083 573h2v2h-2zM919 574h2v2h-2zM1048 576h2v2h-2zM1016 581h2v2h-2z"/>
<path fill="#a8780c" d="M1310 473h2v2h-2zM1283 474h2v2h-2zM1289 474h2v2h-2zM1304 474h2v2h-2zM1267 477h2v2h-2zM1261 478h2v2h-2zM1300 478h2v2h-2zM1337 485h2v2h-2zM1102 554h2v2h-2zM1121 555h2v2h-2zM894 572h2v2h-2zM923 573h2v2h-2zM1060 576h2v2h-2zM896 579h2v2h-2zM1001 579h2v2h-2zM917 606h2v2h-2z"/>
<path fill="#cc900c" d="M1303 471h2v2h-2zM1300 474h2v2h-2zM1291 476h2v2h-2zM1314 476h2v2h-2zM1273 477h2v2h-2zM1259 478h2v2h-2zM1254 481h2v2h-2zM1330 483h2v2h-2zM1371 487h2v2h-2zM880 576h2v2h-2zM1002 579h2v2h-2zM1028 579h2v2h-2z"/>
<path fill="#cc9c18" d="M899 569h2v2h-2zM1037 575h2v2h-2zM910 580h2v2h-2zM1034 580h2v2h-2zM993 586h2v2h-2zM889 589h2v2h-2zM885 607h2v2h-2z"/>
<path fill="#b4600c" d="M909 590h2v2h-2z"/>
<path fill="#d8780c" d="M1293 479h2v2h-2zM890 602h2v2h-2z"/>
<path fill="#a8540c" d="M1384 449h2v2h-2zM1192 508h2v2h-2zM950 604h2v2h-2z"/>
<path fill="#cca818" d="M897 565h2v2h-2zM1027 566h2v2h-2zM890 567h2v2h-2zM989 572h2v2h-2zM1067 572h2v2h-2zM884 573h2v2h-2zM885 577h2v2h-2z"/>
<path fill="#d89c18" d="M1283 472h2v2h-2zM1052 570h2v2h-2zM1077 573h2v2h-2z"/>
<path fill="#b4840c" d="M1318 474h2v2h-2zM1006 579h2v2h-2zM978 595h2v2h-2z"/>
<path fill="#cc9c0c" d="M1355 483h2v2h-2zM905 588h2v2h-2z"/>
<path fill="#78300c" d="M1231 541h2v2h-2zM982 586h2v2h-2z"/>
<path fill="#e4840c" d="M1267 476h2v2h-2zM1287 476h2v2h-2zM1264 479h2v2h-2z"/>
<path fill="#d8840c" d="M1296 476h2v2h-2zM1247 485h2v2h-2z"/>
<path fill="#f09c18" d="M1309 477h2v2h-2z"/>
<path fill="#e4480c" d="M1388 491h2v2h-2z"/>
<path fill="#e4b418" d="M1309 480h2v2h-2zM1337 483h2v2h-2zM1373 489h2v2h-2z"/>
<path fill="#e4c018" d="M1341 486h2v2h-2z"/>
<path fill="#e4a818" d="M1269 474h2v2h-2zM1262 479h2v2h-2zM1302 479h2v2h-2zM1373 482h2v2h-2zM1373 486h2v2h-2z"/>
<path fill="#e49c0c" d="M1348 488h2v2h-2z"/>
<path fill="#d8900c" d="M1283 476h2v2h-2zM1327 477h2v2h-2zM1251 479h2v2h-2zM1357 483h2v2h-2z"/>
<path fill="#e4600c" d="M1384 489h2v2h-2zM1213 503h2v2h-2z"/>
<path fill="#cca80c" d="M1329 482h2v2h-2zM1350 488h2v2h-2z"/>
<path fill="#d8a818" d="M1283 477h2v2h-2zM1249 483h2v2h-2z"/>
<path fill="#ccb40c" d="M1347 483h2v2h-2zM1359 490h2v2h-2z"/>
<path fill="#d89c0c" d="M1258 476h2v2h-2zM1327 484h2v2h-2z"/>
<path fill="#cc6c0c" d="M1287 478h2v2h-2z"/>
<path fill="#c0600c" d="M1239 483h2v2h-2z"/>
<path fill="#ccc00c" d="M1247 477h2v2h-2zM1359 492h2v2h-2z"/>
<path fill="#e4a80c" d="M1373 491h2v2h-2z"/>
<path fill="#d86c0c" d="M1249 506h2v2h-2z"/>
<path fill="#e46c0c" d="M1201 539h2v2h-2z"/>
<path fill="#b4b40c" d="M1260 464h2v2h-2zM1182 495h2v2h-2z"/>
<path fill="#d8d818" d="M1274 466h2v2h-2z"/>
<path fill="#e4d818" d="M1223 478h2v2h-2z"/>
<path fill="#a85418" d="M1395 401h2v2h-2zM1392 422h2v2h-2zM1385 432h2v2h-2zM1382 438h2v2h-2z"/>
<path fill="#9c5418" d="M1376 467h2v2h-2z"/>
<path fill="#303024" d="M1419 342h2v2h-2zM1413 344h2v2h-2zM1399 349h2v2h-2zM1394 350h2v2h-2zM1388 352h2v2h-2zM1377 356h2v2h-2zM1357 363h2v2h-2zM1351 367h2v2h-2zM1457 406h2v2h-2zM1477 407h2v2h-2zM1476 408h2v2h-2zM1477 408h2v2h-2zM1497 409h2v2h-2zM1513 409h2v2h-2zM1486 410h2v2h-2zM1535 410h2v2h-2zM1532 411h2v2h-2zM1539 412h2v2h-2zM1411 439h2v2h-2zM1420 439h2v2h-2zM1433 440h2v2h-2z"/>
<path fill="#241818" d="M1426 342h2v2h-2zM1428 342h2v2h-2zM1421 344h2v2h-2zM1402 346h2v2h-2zM1404 347h2v2h-2zM1387 352h2v2h-2zM1388 353h2v2h-2zM1371 357h2v2h-2zM1374 357h2v2h-2zM1356 363h2v2h-2zM1441 406h2v2h-2zM1449 406h2v2h-2zM1460 406h2v2h-2zM1491 406h2v2h-2zM1452 407h2v2h-2zM1502 407h2v2h-2zM1483 408h2v2h-2zM1510 408h2v2h-2zM1480 409h2v2h-2zM1527 410h2v2h-2z"/>
<path fill="#302424" d="M1411 343h2v2h-2zM1420 343h2v2h-2zM1419 344h2v2h-2zM1368 358h2v2h-2zM1369 358h2v2h-2zM1368 359h2v2h-2zM1358 362h2v2h-2zM1360 363h2v2h-2zM1453 405h2v2h-2zM1474 405h2v2h-2zM1475 406h2v2h-2zM1460 407h2v2h-2zM1461 407h2v2h-2zM1463 407h2v2h-2zM1444 408h2v2h-2zM1452 408h2v2h-2zM1488 408h2v2h-2zM1469 409h2v2h-2zM1472 409h2v2h-2zM1478 409h2v2h-2zM1519 409h2v2h-2zM1500 410h2v2h-2z"/>
<path fill="#3c3024" d="M1414 343h2v2h-2z"/>
<path fill="#242418" d="M1430 341h2v2h-2zM1401 349h2v2h-2zM1390 351h2v2h-2zM1382 354h2v2h-2zM1361 363h2v2h-2zM1356 364h2v2h-2zM1463 405h2v2h-2zM1490 407h2v2h-2zM1482 408h2v2h-2zM1486 408h2v2h-2zM1482 409h2v2h-2zM1495 409h2v2h-2z"/>
<path fill="#3c3030" d="M1412 343h2v2h-2zM1387 351h2v2h-2zM1392 351h2v2h-2zM1376 356h2v2h-2zM1364 362h2v2h-2zM1352 367h2v2h-2zM1422 437h2v2h-2zM1423 437h2v2h-2zM1431 442h2v2h-2z"/>
<path fill="#18180c" d="M1483 406h2v2h-2zM1464 407h2v2h-2zM1523 411h2v2h-2zM1524 411h2v2h-2zM1540 411h2v2h-2zM1546 412h2v2h-2z"/>
<path fill="#483c30" d="M1410 435h2v2h-2zM1440 442h2v2h-2z"/>
<path fill="#3c3c30" d="M1412 438h2v2h-2z"/>
</svg>
<svg class="abs" style="left:0;top:0" width="1296" height="842" viewBox="541 14 1296 842">
<defs><linearGradient id="cb" gradientUnits="userSpaceOnUse" x1="0" x2="0" y1="754" y2="65">
<stop offset="0" stop-color="#1a06fa"/>
<stop offset="0.08" stop-color="#1c3ad8"/>
<stop offset="0.17" stop-color="#2878a4"/>
<stop offset="0.25" stop-color="#38a868"/>
<stop offset="0.31" stop-color="#44cc20"/>
<stop offset="0.36" stop-color="#48f000"/>
<stop offset="0.511" stop-color="#8cff00"/>
<stop offset="0.667" stop-color="#fbff00"/>
<stop offset="0.83" stop-color="#f88400"/>
<stop offset="1" stop-color="#f41200"/>
</linearGradient></defs>
<path d="M592 260v15h1v-15zM593 275v27h1v-27zM594 302v29h1v-29zM595 331v27h1v-27zM596 358v29h1v-29zM597 387v27h1v-27zM598 414v15h1v-15zM1549 236v14h1v-14zM1550 250v29h1v-29zM1551 279v27h1v-27zM1552 306v29h1v-29zM1553 335v27h1v-27zM1554 362v29h1v-29zM1555 391v14h1v-14zM598 428v13h1v-13zM597 441v25h1v-25zM596 466v25h1v-25zM595 491v25h1v-25zM594 516v25h1v-25zM593 541v25h1v-25zM592 566v25h1v-25zM591 591v25h1v-25zM590 616v25h1v-25zM589 641v25h1v-25zM588 666v25h1v-25zM587 691v25h1v-25zM586 716v13h1v-13zM1555 404v14h1v-14zM1554 418v27h1v-27zM1553 445v28h1v-28zM1552 473v27h1v-27zM1551 500v27h1v-27zM1550 527v28h1v-28zM1549 555v27h1v-27zM1548 582v27h1v-27zM1547 609v27h1v-27zM1546 636v28h1v-28zM1545 664v27h1v-27zM1544 691v14h1v-14zM582 559v22h1v-22zM583 581v42h1v-42zM584 623v42h1v-42zM585 665v42h1v-42zM586 707v22h1v-22zM1539 536v17h1v-17zM1540 553v34h1v-34zM1541 587v33h1v-33zM1542 620v34h1v-34zM1543 654v34h1v-34zM1544 688v17h1v-17zM592 260v15h1v-15zM591 275v30h1v-30zM590 305v30h1v-30zM589 335v30h1v-30zM588 365v30h1v-30zM587 395v30h1v-30zM586 425v30h1v-30zM585 455v30h1v-30zM584 485v30h1v-30zM583 515v30h1v-30zM582 545v15h1v-15zM1549 236v15h1v-15zM1548 251v31h1v-31zM1547 282v29h1v-29zM1546 311v31h1v-31zM1545 342v29h1v-29zM1544 371v31h1v-31zM1543 402v29h1v-29zM1542 431v31h1v-31zM1541 462v29h1v-29zM1540 491v31h1v-31zM1539 522v15h1v-15zM592 260h20v1h-20zM612 259h40v1h-40zM652 258h40v1h-40zM692 257h40v1h-40zM732 256h40v1h-40zM772 255h40v1h-40zM812 254h40v1h-40zM852 253h40v1h-40zM892 252h39v1h-39zM931 251h40v1h-40zM971 250h40v1h-40zM1011 249h40v1h-40zM1051 248h40v1h-40zM1091 247h40v1h-40zM1131 246h40v1h-40zM1171 245h40v1h-40zM1211 244h39v1h-39zM1250 243h40v1h-40zM1290 242h40v1h-40zM1330 241h40v1h-40zM1370 240h40v1h-40zM1410 239h40v1h-40zM1450 238h40v1h-40zM1490 237h40v1h-40zM1530 236h20v1h-20zM598 428h20v1h-20zM618 427h40v1h-40zM658 426h40v1h-40zM698 425h40v1h-40zM738 424h40v1h-40zM778 423h40v1h-40zM818 422h40v1h-40zM858 421h40v1h-40zM898 420h39v1h-39zM937 419h40v1h-40zM977 418h40v1h-40zM1017 417h40v1h-40zM1057 416h40v1h-40zM1097 415h40v1h-40zM1137 414h40v1h-40zM1177 413h40v1h-40zM1217 412h39v1h-39zM1256 411h40v1h-40zM1296 410h40v1h-40zM1336 409h40v1h-40zM1376 408h40v1h-40zM1416 407h40v1h-40zM1456 406h40v1h-40zM1496 405h40v1h-40zM1536 404h20v1h-20zM586 728h20v1h-20zM606 727h40v1h-40zM646 726h40v1h-40zM686 725h40v1h-40zM726 724h40v1h-40zM766 723h40v1h-40zM806 722h40v1h-40zM846 721h40v1h-40zM886 720h40v1h-40zM926 719h40v1h-40zM966 718h40v1h-40zM1006 717h40v1h-40zM1046 716h39v1h-39zM1085 715h40v1h-40zM1125 714h40v1h-40zM1165 713h40v1h-40zM1205 712h40v1h-40zM1245 711h40v1h-40zM1285 710h40v1h-40zM1325 709h40v1h-40zM1365 708h40v1h-40zM1405 707h40v1h-40zM1445 706h40v1h-40zM1485 705h40v1h-40zM1525 704h20v1h-20zM582 559h21v1h-21zM603 558h42v1h-42zM645 557h42v1h-42zM687 556h41v1h-41zM728 555h42v1h-42zM770 554h41v1h-41zM811 553h42v1h-42zM853 552h42v1h-42zM895 551h41v1h-41zM936 550h42v1h-42zM978 549h41v1h-41zM1019 548h42v1h-42zM1061 547h42v1h-42zM1103 546h41v1h-41zM1144 545h42v1h-42zM1186 544h41v1h-41zM1227 543h42v1h-42zM1269 542h42v1h-42zM1311 541h41v1h-41zM1352 540h42v1h-42zM1394 539h41v1h-41zM1435 538h42v1h-42zM1477 537h42v1h-42zM1519 536h21v1h-21z" fill="#ffff00" shape-rendering="crispEdges"/>
<rect x="1740" y="48" width="52" height="706" fill="url(#cb)" stroke="#fff" stroke-width="2"/>
<rect x="1741" y="49" width="50" height="16" fill="#d3d3d3"/>
<rect x="1735" y="49.25" width="5" height="1.5" fill="#fff"/>
<rect x="1735" y="93.25" width="5" height="1.5" fill="#fff"/>
<rect x="1735" y="137.25" width="5" height="1.5" fill="#fff"/>
<rect x="1735" y="181.25" width="5" height="1.5" fill="#fff"/>
<rect x="1735" y="225.25" width="5" height="1.5" fill="#fff"/>
<rect x="1735" y="269.25" width="5" height="1.5" fill="#fff"/>
<rect x="1735" y="313.25" width="5" height="1.5" fill="#fff"/>
<rect x="1735" y="357.25" width="5" height="1.5" fill="#fff"/>
<rect x="1735" y="401.25" width="5" height="1.5" fill="#fff"/>
<rect x="1735" y="445.25" width="5" height="1.5" fill="#fff"/>
<rect x="1735" y="489.25" width="5" height="1.5" fill="#fff"/>
<rect x="1735" y="533.25" width="5" height="1.5" fill="#fff"/>
<rect x="1735" y="577.25" width="5" height="1.5" fill="#fff"/>
<rect x="1735" y="621.25" width="5" height="1.5" fill="#fff"/>
<rect x="1735" y="665.25" width="5" height="1.5" fill="#fff"/>
<rect x="1735" y="709.25" width="5" height="1.5" fill="#fff"/>
<rect x="1735" y="752.75" width="5" height="1.5" fill="#fff"/>
<path d="M1797 50V50.0H1797.8V53.3H1798.0V56.7H1797.9V60.0H1800.5V60.0H1800.6V65.0H1803.0V65.0H1803.1V68.0H1805.0V71.0H1805.0V74.0H1805.5V78.0H1803.8V81.3H1803.6V84.7H1804.0V88.0H1803.5V91.0H1803.6V94.0H1803.2V97.0H1803.2V100.0H1802.8V103.3H1803.4V106.7H1803.8V110.0H1803.8V113.0H1803.8V116.0H1803.6V119.0H1803.0V122.0H1803.3V125.0H1803.1V127.8H1802.8V130.6H1802.6V133.3H1803.1V136.1H1802.8V138.9H1802.9V141.7H1803.0V144.4H1802.8V147.2H1802.9V150.0H1802.5V152.8H1802.8V155.6H1802.6V158.3H1803.0V161.1H1803.0V163.9H1802.4V166.7H1802.5V169.4H1802.6V172.2H1803.1V175.0H1802.8V177.8H1802.9V180.6H1802.7V183.3H1802.9V186.1H1802.8V188.9H1802.8V191.7H1803.0V194.4H1803.0V197.2H1803.3V200.0H1803.1V202.9H1803.3V205.7H1803.3V208.6H1803.4V211.4H1803.2V214.3H1802.8V217.1H1803.3V220.0H1803.4V222.9H1803.4V225.7H1803.2V228.6H1803.3V231.4H1803.0V234.3H1803.4V237.1H1803.2V240.0H1803.0V243.0H1803.0V246.0H1803.6V249.0H1803.7V252.0H1803.2V255.0H1803.7V258.0H1803.5V261.0H1803.4V264.0H1803.5V267.0H1803.9V270.0H1804.1V273.0H1803.6V276.0H1804.0V279.0H1803.7V282.0H1804.2V285.0H1804.0V288.0H1804.5V291.0H1804.6V294.0H1804.4V297.0H1804.8V300.0H1804.4V303.0H1804.4V306.0H1804.9V309.0H1804.6V312.0H1804.9V315.0H1805.2V318.0H1805.5V321.0H1805.3V324.0H1805.4V327.0H1806.1V330.0H1805.9V332.9H1806.5V335.7H1806.7V338.6H1806.6V341.4H1806.9V344.3H1807.2V347.1H1807.5V350.0H1807.7V353.0H1808.0V356.0H1808.4V359.0H1809.0V362.0H1809.1V365.0H1809.5V368.2H1810.4V371.5H1810.8V374.8H1811.6V378.0H1812.8V382.0H1814.5V386.0H1816.5V389.0H1817.9V392.0H1819.9V396.0H1820.4V400.0H1820.3V403.0H1820.2V406.0H1819.7V409.0H1817.9V412.0H1816.9V416.0H1816.0V420.0H1815.3V423.3H1814.8V426.7H1814.8V430.0H1814.6V433.3H1813.3V436.7H1812.5V440.0H1812.1V443.3H1811.6V446.7H1810.4V450.0H1809.8V453.3H1809.0V456.7H1807.9V460.0H1807.1V463.3H1806.5V466.7H1806.0V470.0H1805.7V473.0H1805.1V476.0H1804.7V479.0H1804.6V482.0H1803.7V485.0H1803.6V488.0H1803.6V491.0H1803.1V494.0H1802.8V497.0H1803.0V500.0H1802.4V502.9H1802.3V505.7H1802.4V508.6H1802.6V511.4H1802.1V514.3H1802.2V517.1H1802.1V520.0H1802.4V522.9H1802.1V525.7H1802.4V528.6H1801.9V531.4H1802.0V534.3H1802.2V537.1H1802.3V540.0H1802.0V542.9H1801.8V545.7H1801.7V548.6H1801.9V551.4H1801.7V554.3H1802.1V557.1H1802.1V560.0H1801.6V562.9H1801.7V565.7H1802.1V568.6H1802.0V571.4H1802.1V574.3H1801.8V577.1H1801.7V580.0H1801.9V582.9H1802.2V585.7H1801.9V588.6H1802.0V591.4H1802.1V594.3H1802.1V597.1H1802.1V600.0H1802.5V602.8H1802.1V605.6H1802.1V608.3H1802.8V611.1H1802.9V613.9H1803.1V616.7H1802.8V619.4H1803.3V622.2H1803.4V625.0H1803.0V628.0H1803.2V631.0H1803.1V634.0H1802.8V637.0H1802.6V640.0H1802.3V642.9H1802.3V645.7H1802.2V648.6H1802.1V651.4H1802.5V654.3H1802.3V657.1H1802.6V660.0H1802.1V662.9H1802.7V665.7H1802.5V668.6H1802.7V671.4H1802.7V674.3H1802.7V677.1H1802.5V680.0H1802.1V683.0H1802.7V686.0H1802.3V689.0H1802.5V692.0H1802.8V695.0H1802.8V698.3H1802.3V701.7H1802.3V705.0H1801.7V708.0H1801.2V711.0H1800.9V714.0H1801.0V717.0H1800.5V720.0H1800.4V722.9H1799.9V725.7H1799.6V728.6H1799.7V731.4H1799.7V734.3H1799.1V737.1H1799.4V740.0H1799.3V742.8H1799.1V745.6H1798.9V748.4H1798.2V751.2H1798.5V754.0H1798.0V754H1797Z" fill="url(#cb)"/>
<rect x="1797" y="50" width="1" height="15" fill="#d8d8d8"/><rect x="1797" y="60" width="3.5" height="5" fill="#d3d3d3"/>
<path d="M1180 435h19v1h-19zM1189 425v21h1v-21z" fill="#d8d8c8" fill-opacity=".8" shape-rendering="crispEdges"/>
<path d="M1459.5 808V816M1459.5 812H1738.5M1738.5 808V816" stroke="#fff" stroke-width="1.2" fill="none"/>
<rect x="1785.8" y="788" width="3.2" height="25" fill="#52b8ee"/>
<rect x="1788.6" y="802" width="1.4" height="9" fill="#58d020"/>
<rect x="1788.6" y="810.2" width="25" height="3" fill="#f00a0a"/>
</svg>
<span class="vt tt" style="letter-spacing:0.025px;right:105.4px;top:34.3px">0.022189</span>
<span class="vt tt" style="letter-spacing:0.025px;right:105.4px;top:73.8px">0.019415</span>
<span class="vt tt" style="letter-spacing:0.025px;right:105.4px;top:117.8px">0.016642</span>
<span class="vt tt" style="letter-spacing:0.025px;right:105.4px;top:161.8px">0.013868</span>
<span class="vt tt" style="letter-spacing:0.123px;right:105.4px;top:205.8px">0.011095</span>
<span class="vt tt" style="letter-spacing:0.025px;right:105.4px;top:249.8px">0.008321</span>
<span class="vt tt" style="letter-spacing:0.025px;right:105.4px;top:293.8px">0.005547</span>
<span class="vt tt" style="letter-spacing:0.025px;right:105.4px;top:337.8px">0.002774</span>
<span class="vt tt" style="letter-spacing:0.025px;right:105.4px;top:381.8px">0.000000</span>
<span class="vt tt" style="letter-spacing:0.134px;right:105.4px;top:425.8px">-0.002774</span>
<span class="vt tt" style="letter-spacing:0.134px;right:105.4px;top:469.8px">-0.005547</span>
<span class="vt tt" style="letter-spacing:0.134px;right:105.4px;top:513.8px">-0.008321</span>
<span class="vt tt" style="letter-spacing:0.220px;right:105.4px;top:557.8px">-0.011095</span>
<span class="vt tt" style="letter-spacing:0.134px;right:105.4px;top:601.8px">-0.013868</span>
<span class="vt tt" style="letter-spacing:0.134px;right:105.4px;top:645.8px">-0.016642</span>
<span class="vt tt" style="letter-spacing:0.134px;right:105.4px;top:689.8px">-0.019415</span>
<span class="vt tt" style="letter-spacing:0.134px;right:105.4px;top:729.1px">-0.022189</span>
<span class="vt tt" style="letter-spacing:0.127px;left:1189.3px;top:17.5px">M3C2 distance</span>
<span class="vt tt" style="letter-spacing:-0.370px;left:1050.6px;top:812.1px">0.1</span>
<span class="vt" style="left:1238.5px;top:759.1px;color:#52b8ee">Z</span>
<span class="vt" style="left:1240.6px;top:774.1px;color:#58d020">Y</span>
<span class="vt" style="left:1275.0px;top:791.8px;color:#f00a0a">X</span>
</div>
<div class="abs" id="rtool"></div>
<div class="abs" style="left:1902px;top:0;width:4px;height:861px;background:linear-gradient(#f0f0f0 0,#f0f0f0 186px,#d4d4d4 186px,#c8c8c8 205px,#3a3630 212px,#4a4438 260px,#2c2a26 340px,#5a5244 420px,#34302a 520px,#4c463a 640px,#2e2c28 760px,#45403a 861px)"></div>
<div class="abs" style="left:1902px;top:0;width:1.2px;height:857px;background:#f4f4f4"></div>
<svg class="abs" style="left:1837px;top:0" width="66" height="861" viewBox="1837 0 66 861">
<defs>
<linearGradient id="rb1" x1="0" x2="1" y1="0" y2="1"><stop offset="0" stop-color="#8fb4ec"/><stop offset=".5" stop-color="#d2e4fa"/><stop offset="1" stop-color="#7aa4e4"/></linearGradient>
<linearGradient id="rb2" x1="0" x2="0" y1="0" y2="1"><stop offset="0" stop-color="#9ed4f4"/><stop offset="1" stop-color="#a48cc0"/></linearGradient>
<radialGradient id="rg3" cx=".45" cy=".35" r=".7"><stop offset="0" stop-color="#d8d8d8"/><stop offset="1" stop-color="#8a8a8a"/></radialGradient>
<linearGradient id="sh1" x1="0" x2="1" y1="0" y2="1"><stop offset="0" stop-color="#eceef6"/><stop offset="1" stop-color="#b4b6c8"/></linearGradient>
<linearGradient id="sh2" x1="0" x2="1" y1="0" y2="0"><stop offset="0" stop-color="#8eb4ee"/><stop offset="1" stop-color="#b4d0f8"/></linearGradient>
</defs>
<!-- no icon -->
<circle cx="1870.2" cy="18.7" r="14.6" fill="#8c8c8c"/>
<circle cx="1870.2" cy="18.7" r="13.6" fill="#e98d8d"/>
<circle cx="1870.2" cy="18.7" r="9.6" fill="#dddddd" stroke="#9a8a8a" stroke-width=".6"/>
<path d="M1862.2 24.6 L1878.2 12.8" stroke="#e98d8d" stroke-width="4.2"/>
<!-- EDL / SSAO -->
<g id="gi"><rect x="1860" y="55" width="21" height="21" fill="#8b8b8b"/><path d="M1863 58 C1866 55.5 1869 57 1869.5 60.5 C1872 56.5 1877 55.5 1878.6 58 C1880 62 1878.5 67 1875 69 L1868 69 C1866.5 66 1866 62 1863 58Z" fill="url(#rg3)" fill-opacity=".8"/><path d="M1870 60 C1868 63 1868 66 1869.4 69 M1872.6 62.6 C1871.8 65 1872 67 1873 69" stroke="#7a7a7a" stroke-width=".9" fill="none"/></g>
<use href="#gi" y="46"/>
<text x="1860.6" y="75.3" style="font-family:'Liberation Mono',monospace;font-weight:bold" font-size="6.8" fill="#fff" textLength="14.6" lengthAdjust="spacingAndGlyphs">EDL</text>
<text x="1860.4" y="121.3" style="font-family:'Liberation Mono',monospace;font-weight:bold" font-size="6.8" fill="#fff" textLength="18.6" lengthAdjust="spacingAndGlyphs">SSAO</text>
<!-- separator -->
<path d="M1846 142H1896" stroke="#9c9c9c" stroke-width="2" stroke-dasharray="2 4.05"/>
<!-- clapper -->
<rect x="1855" y="163" width="29.4" height="18" fill="#9b9b9b"/>
<rect x="1856.4" y="164.4" width="26.6" height="15" fill="url(#rb1)"/>
<path d="M1855 151.4 L1884 151 L1884 156.6 L1855 157.4Z" fill="#a9a9a9"/>
<path d="M1855 157.6 H1884.4 V163 H1855Z" fill="#b4b4b4"/>
<path d="M1857 157.2l2.6-5.8h2.8l-2.6 5.800zM1862.6 157l2.600-5.700h2.800l-2.600 5.700zM1868.2 156.900l2.600-5.800h2.800l-2.600 5.800zM1873.800 156.800l2.600-5.700h2.800l-2.600 5.700zM1879.400 156.700l2.600-5.700h2l-.1 1.600-1.800 4.100z" fill="#f4f4f4"/>
<path d="M1856.400 163l2.600-5.400h2.800l-2.600 5.400zM1862 163l2.600-5.400h2.800l-2.600 5.400zM1867.600 163l2.600-5.400h2.800l-2.600 5.400zM1873.200 163l2.600-5.400h2.800l-2.600 5.400zM1878.800 163l2.600-5.400h2.800l-2.600 5.400z" fill="#f4f4f4"/>
<!-- broom -->
<path d="M1870.400 196.400V215" stroke="#c08a2e" stroke-width="2"/>
<path d="M1866.400 213.400 L1876.200 215.400 L1877.400 227.400 L1863.800 224.200Z" fill="#e3ad5e" stroke="#b8801e" stroke-width=".8" stroke-linejoin="round"/>
<path d="M1868.400 215.600l-.8 8.800M1871.200 216.200l-.2 9.400M1874 216.800l.4 9.600" stroke="#b8741c" stroke-width=".9"/>
<!-- compass -->
<rect x="1858.500" y="246.500" width="23.400" height="23.400" rx="3.200" fill="#e6e7ec" stroke="#43464f" stroke-width="1"/>
<circle cx="1870.200" cy="258.200" r="9.800" fill="#fdfdfd" stroke="#4e566a" stroke-width="2.200"/>
<path d="M1866.600 251v14.400M1870.200 250v16.400M1873.800 251v14.400" stroke="#d4d4d8" stroke-width=".8"/>
<path d="M1869 257 L1877.600 251.600 L1871.400 259.400Z" fill="#ea5252"/><path d="M1869 257 L1871.400 259.400 L1863.800 264.600Z" fill="#33363e"/>
<!-- shield -->
<path d="M1870 291.600 L1881.200 296.200 C1881.600 305 1878 312.600 1870 316.600 C1862 312.600 1858.400 305 1858.800 296.200Z" fill="url(#sh1)" stroke="#a6a8ba" stroke-width=".9"/>
<path d="M1870 296.200 L1877.600 298.800 C1877.600 305 1875.200 310 1870 312.800 C1864.800 310 1862.400 305 1862.400 298.800Z" fill="url(#sh2)"/>
<!-- N -->
<rect x="1864" y="364.600" width="12" height="22.600" fill="#fff"/>
<path d="M1865 367.600H1874" stroke="#12129a" stroke-width="1.400"/><path d="M1876 367.600l-3.600-2.400v4.800z" fill="#12129a"/>
<text x="1864.300" y="386" style="font-family:'Liberation Sans',sans-serif" font-size="16.400" fill="#12129a" textLength="11" lengthAdjust="spacingAndGlyphs">N</text>
<!-- HPR -->
<rect x="1860" y="412" width="21" height="21" fill="#fff"/>
<path d="M1863 417.600 L1868.600 413.400 L1876.200 413.600 L1880 418.400 L1878.600 424.600 L1871 428 L1864.200 425.200Z" fill="#b4b4b4" stroke="#8e8e8e" stroke-width=".6"/>
<path d="M1863 417.600 L1871.400 419.600 L1880 418.400 M1871.400 419.600 L1871 428 M1868.600 413.400 L1871.400 419.600 L1876.200 413.600" stroke="#d8d8d8" stroke-width=".7" fill="none"/>
<text x="1860.600" y="432.600" style="font-family:'Liberation Sans',sans-serif;font-weight:bold" font-size="6.600" fill="#000" textLength="14.400" lengthAdjust="spacingAndGlyphs">HPR</text>
<!-- M3C2 -->
<text x="1854.700" y="460.800" style="font-family:'Liberation Sans',sans-serif;font-weight:bold" font-size="10.400" fill="#8eabe2" textLength="29.300" lengthAdjust="spacingAndGlyphs">M3C2</text>
<g transform="rotate(-21 1869.500 472.500)"><rect x="1855" y="468" width="29" height="9.400" rx="3" fill="#eee78a" stroke="#d8d070" stroke-width=".6"/><ellipse cx="1882.400" cy="472.700" rx="1.800" ry="4.400" fill="#f8f4a4" stroke="#d8cf4a" stroke-width=".5"/><path d="M1862 472.700H1876" stroke="#a8cce0" stroke-width="1.300"/><path d="M1878.600 472.700l-3.600-2.200v4.400z" fill="#a8cce0"/></g>
<circle cx="1861.600" cy="474.600" r="1.300" fill="#f05050"/>
<g fill="#5a5a5a"><circle cx="1858.800" cy="465.400" r="1"/><circle cx="1856.200" cy="470" r="1"/><circle cx="1861.600" cy="469.800" r="1"/><circle cx="1857.600" cy="474.200" r="1"/><circle cx="1864.800" cy="476" r="1"/><circle cx="1861.600" cy="479.600" r="1"/><circle cx="1860.600" cy="483.200" r="1"/><circle cx="1874" cy="467.600" r="1"/><circle cx="1878.600" cy="469" r="1"/><circle cx="1876.400" cy="463.600" r="1"/><circle cx="1883" cy="471.400" r="1"/><circle cx="1878.400" cy="474.400" r="1"/><circle cx="1881.600" cy="476.200" r="1"/><circle cx="1882.800" cy="480.400" r="1"/></g>
<!-- PCV -->
<rect x="1860" y="504" width="21" height="21" fill="#6e6e6e"/>
<path d="M1860 504h21v10c-3 2-6 1-7-2c-2 3-6 4-8 1c-2 2-4 2-6 1z" fill="#a4a4a4"/>
<path d="M1862 506c3-2 6-1 6 3c0 3-3 4-5 2M1871 505c2 0 4 2 3 5M1876 506c2-1 4 0 4 3" stroke="#e0e0e0" stroke-width="1" fill="none"/>
<path d="M1864 512c2-3 1-6-1-7M1873 512c-2-2-2-5 0-7" stroke="#3c3c3c" stroke-width="1" fill="none"/>
<text x="1861" y="524.300" style="font-family:'Liberation Mono',monospace;font-weight:bold" font-size="7.400" fill="#fff" textLength="19" lengthAdjust="spacingAndGlyphs">PCV</text>
<!-- dodecahedron -->
<rect x="1860" y="550" width="20.400" height="20" fill="#fff"/>
<path d="M1870 551 L1878.600 555.600 L1879.600 563.600 L1873.400 569 L1865.400 568.400 L1860.800 561 L1863.600 553.600Z" fill="#5d8f3a"/>
<path d="M1870 551 L1863.600 553.600 L1860.800 561 L1864.400 558.600 L1869.600 554.600Z" fill="#4a9c62"/>
<path d="M1870 551 L1878.600 555.600 L1879.600 563.600 L1876.800 560.600 L1869.600 554.600Z" fill="#a98446"/>
<path d="M1869.600 554.600 L1876.800 560.600 L1874 567.200 L1866.200 566.600 L1864.400 558.600Z" fill="#86a53c"/>
<path d="M1879.600 563.600 L1873.400 569 L1874 567.200 L1876.800 560.600Z" fill="#8a6a3a"/>
<path d="M1860.800 561 L1865.400 568.400 L1873.400 569 L1874 567.200 L1866.200 566.600 L1864.400 558.600Z" fill="#4c8a48"/>
<!-- RSD -->
<rect x="1860" y="596" width="21" height="21" fill="#fff"/>
<path d="M1861 612 L1868 600.600 L1874.600 604.600 L1867 616Z" fill="#52e432"/>
<path d="M1868 605 L1880 609.600 L1878 614.600 L1866 612Z" fill="#e842c4"/>
<path d="M1866 610 l8 -2 l3 6 l-9 2z" fill="#7cc8f0"/>
<ellipse cx="1872.400" cy="602.400" rx="4.400" ry="3.800" fill="#c69ae6" stroke="#8a42bc" stroke-width="1.600" transform="rotate(-25 1872.400 602.400)"/>
<text x="1861.200" y="616.300" style="font-family:'Liberation Sans',sans-serif;font-weight:bold" font-size="7.600" fill="#000" textLength="18.800" lengthAdjust="spacingAndGlyphs">RSD</text>
<!-- layers -->
<path d="M1870 652.400 L1881.600 658 L1870 663.800 L1858.400 658Z" fill="#3fa2f2" stroke="#2a7ac8" stroke-width=".5" stroke-dasharray="1.500 1"/>
<path d="M1870 646.400 L1881.600 652 L1870 657.800 L1858.400 652Z" fill="#52e4d4" stroke="#2eaaa0" stroke-width=".5"/>
<path d="M1870 640.400 L1881.600 646 L1870 651.800 L1858.400 646Z" fill="#f6d23e" stroke="#c8a21e" stroke-width=".5"/>
<path d="M1868 646.600c1.200-1.200 2.800-1.200 4 0" stroke="#d89a1e" stroke-width=".7" fill="none"/>
<!-- arch -->
<rect x="1861.600" y="690" width="17" height="16" fill="#fff"/>
<path d="M1863 704.600 V696 C1863 692 1866 690.800 1870 690.800 C1874 690.800 1877.200 692 1877.200 696 V704.600 H1873.400 V696.600 H1866.800 V704.600Z" fill="#fff" stroke="#0a0a0a" stroke-width="1.500" stroke-linejoin="round"/>
<path d="M1864.600 694.400 C1865.400 691.800 1867.600 691.400 1870 691.400 C1872.600 691.400 1874.800 691.800 1875.600 694.400Z" fill="#2242e4"/>
<path d="M1863.400 703.600 h3 M1873.800 703.600h3" stroke="#b8b8b8" stroke-width="1.400"/>
<!-- cloud ruler -->
<path d="M1856.200 748 C1854 741.600 1858 736.600 1863.200 737.400 C1864.600 731.600 1872 729 1876.600 733.400 C1879 735.600 1879.600 738 1879.400 739.600 C1884 739.600 1886.400 744 1884.800 748" fill="none" stroke="url(#rb2)" stroke-width="1.800"/>
<rect x="1854.800" y="748" width="30.600" height="9" fill="#f0eef8" stroke="#a48cc0" stroke-width="1.200"/>
<path d="M1859 748.600v3.400M1862.600 748.600v5M1866.200 748.600v3.400M1869.800 748.600v5M1873.400 748.600v3.400M1877 748.600v5M1880.600 748.600v3.400" stroke="#a48cc0" stroke-width="1"/>
</svg>
<span class="abs tt" style="letter-spacing:-0.025px;left:1847px;top:333px;font-size:10.500px;line-height:14px;color:#262626;white-space:nowrap">CSF Filter</span>

<div class="abs" id="status"></div>
</body></html>
